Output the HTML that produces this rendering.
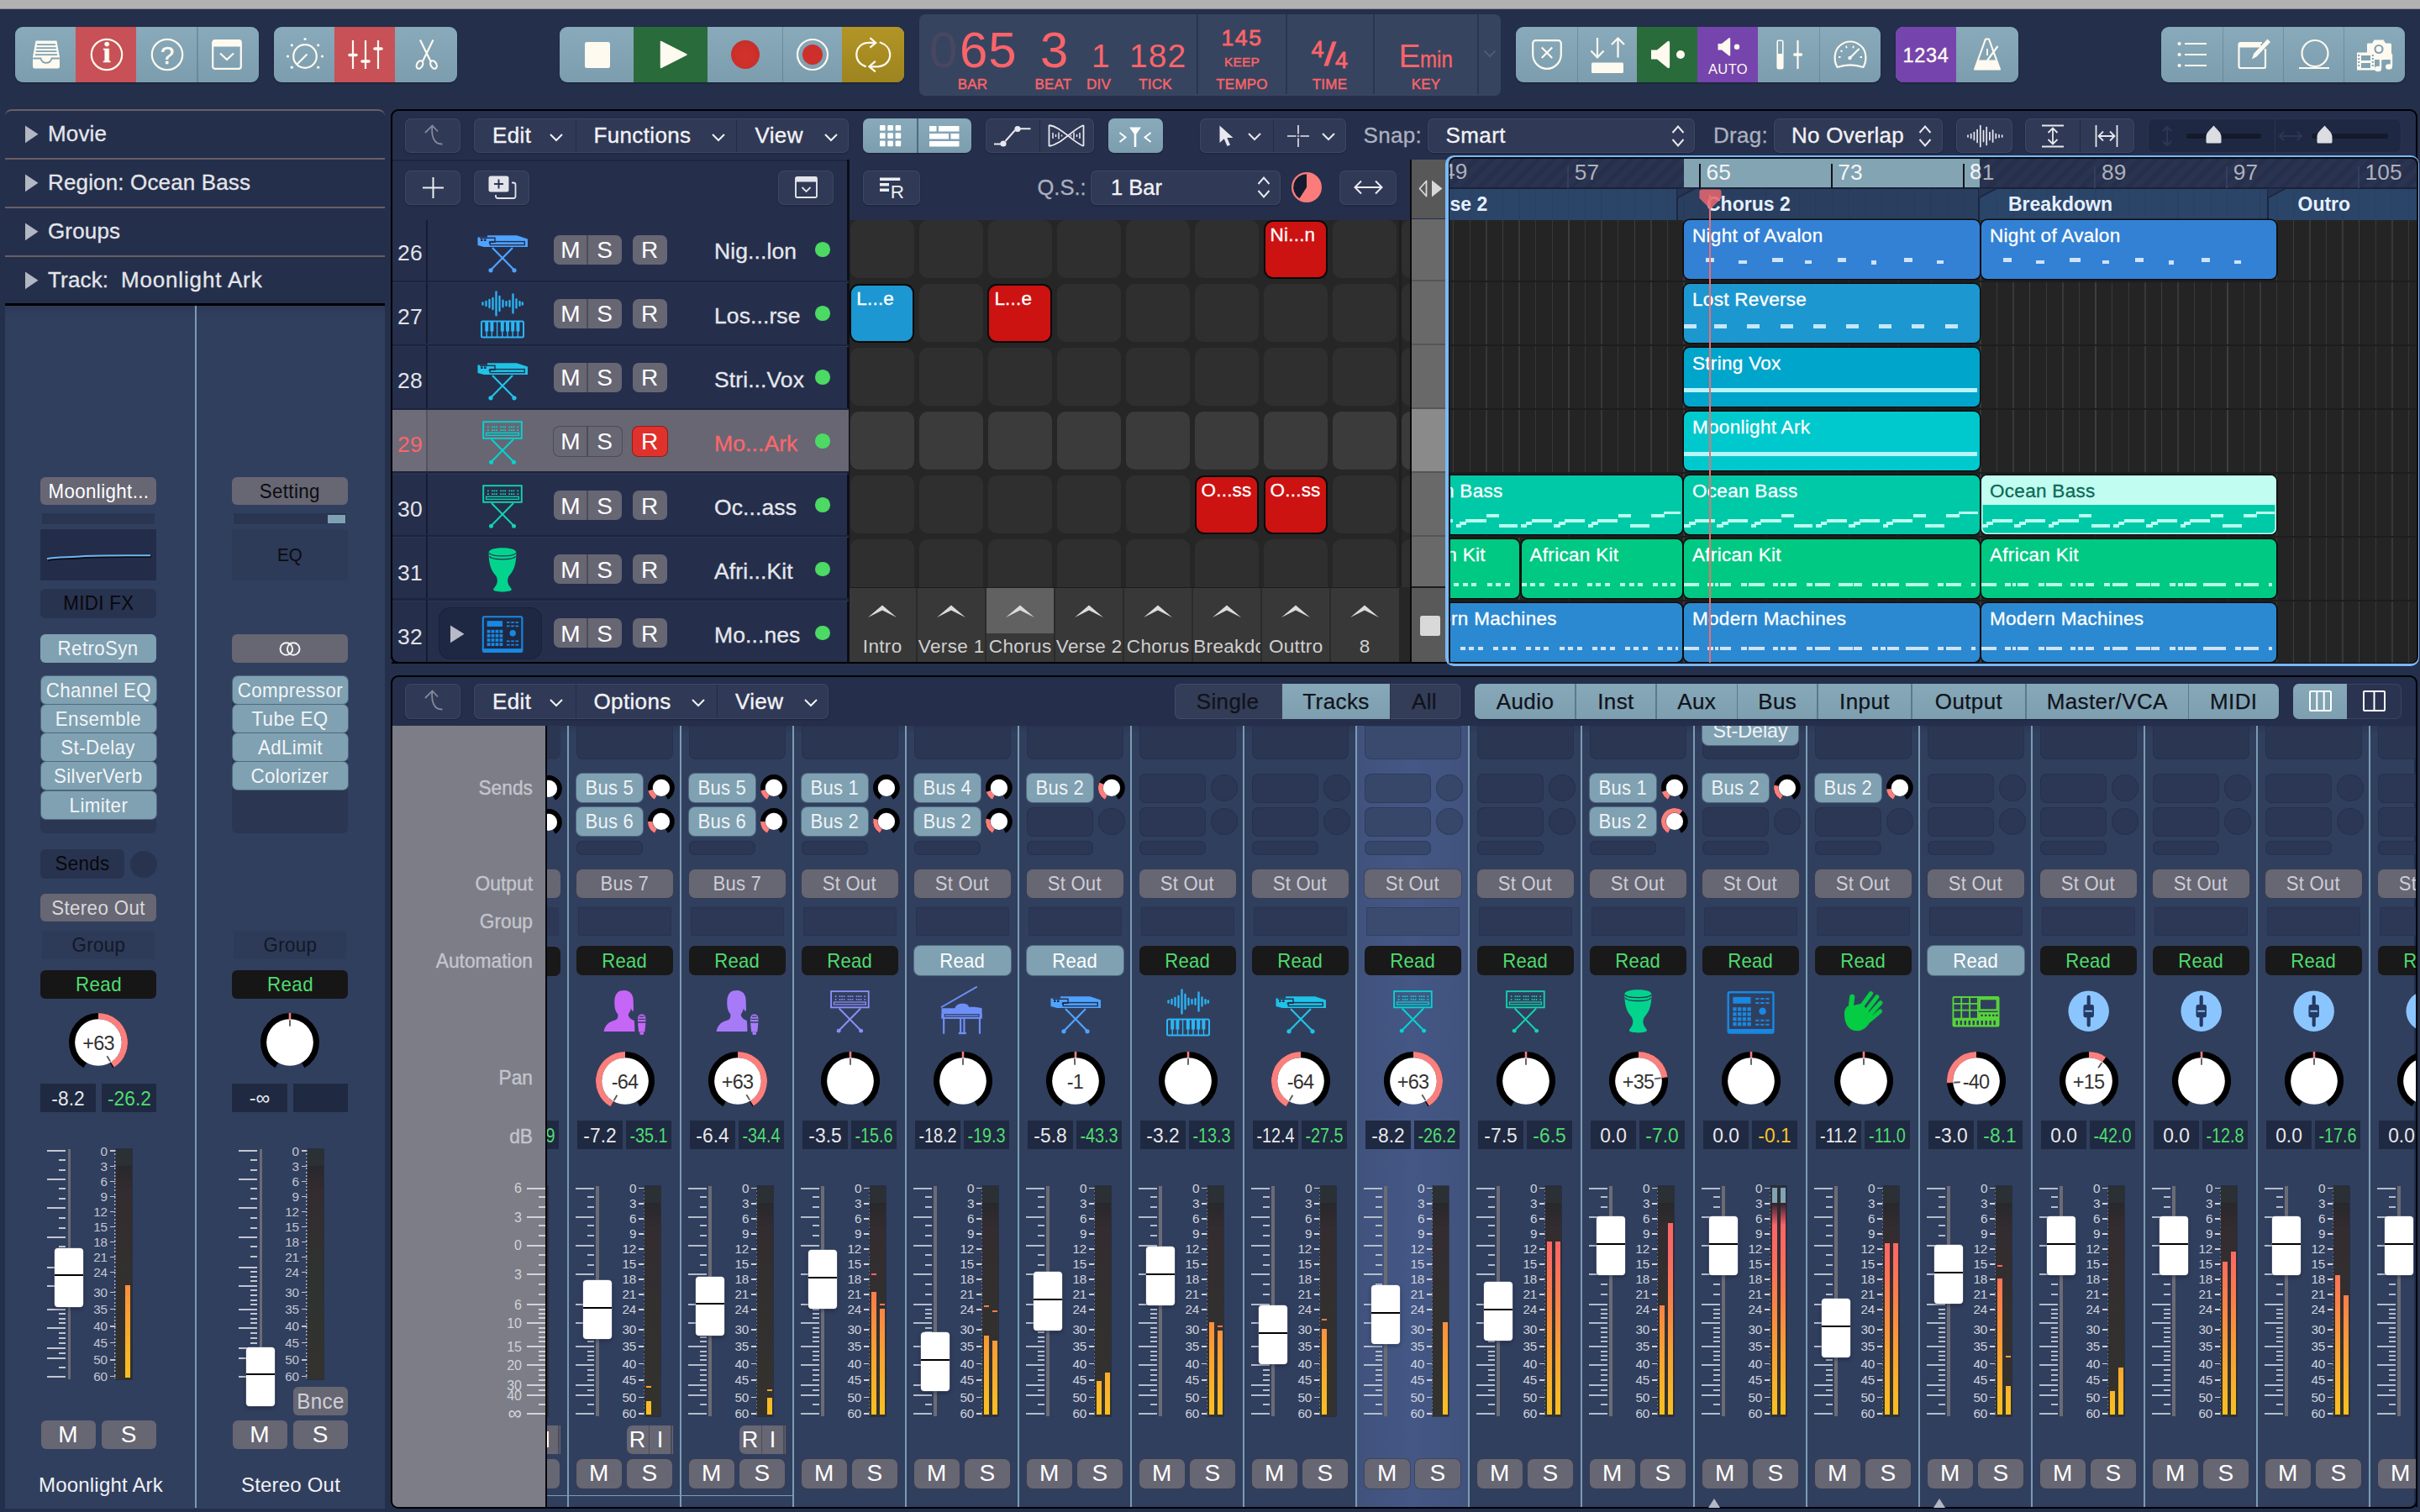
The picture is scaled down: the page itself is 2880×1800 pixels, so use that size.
<!DOCTYPE html>
<html><head><meta charset="utf-8"><title>Logic Pro</title>
<style>
html,body{margin:0;padding:0;}
body{width:2880px;height:1800px;overflow:hidden;background:#242f4b;font-family:"Liberation Sans", sans-serif;position:relative;}
div,svg{position:absolute;box-sizing:border-box;}
svg{overflow:visible;}
.c{overflow:hidden;}
</style></head><body>
<div style="left:0px;top:0px;width:2880px;height:10px;background:#b2b2b2;"></div>
<div style="left:0px;top:10px;width:2880px;height:1px;background:#8a8c95;"></div>
<div style="left:18px;top:32px;width:290px;height:66px;border-radius:9px;overflow:hidden;background:linear-gradient(#88aaba,#7c9dae);box-shadow:0 1px 2px rgba(0,0,0,.35);"><div style="left:72px;top:0;width:72px;height:66px;background:#c75157"></div></div>
<div style="left:234px;top:32px;width:1.5px;height:66px;background:rgba(60,90,110,.3);"></div>
<svg style="left:35.5px;top:46px;" width="39" height="38" viewBox="0 0 39 38"><path d="M6.5 2.5 H31.5 L35 22 V33 a2.5 2.5 0 0 1 -2.5 2.5 H5.5 A2.5 2.5 0 0 1 3 33 V22 Z" fill="#fffaf0"/><path d="M8 7.2H30M7.3 11.2H30.7M6.6 15.2H31.4M5.9 19.2H32.1" stroke="#80a2b3" stroke-width="1.7"/><path d="M3.2 23.5 H12.5 q1.2 5.3 6.5 5.3 q5.3 0 6.5 -5.3 H34.8" stroke="#80a2b3" stroke-width="1.8" fill="none"/></svg>
<svg style="left:107px;top:45px;" width="40" height="40" viewBox="0 0 40 40"><circle cx="20" cy="20" r="18.2" fill="none" stroke="#fffaf0" stroke-width="2.2"/></svg>
<div style="left:107.2px;top:42.2px;width:40px;height:43px;line-height:43px;font-size:33px;color:#fffaf0;text-align:center;white-space:nowrap;font-weight:700;font-family:'Liberation Serif',serif;-webkit-text-stroke:.6px #fffaf0;">i</div>
<svg style="left:179px;top:45px;" width="40" height="40" viewBox="0 0 40 40"><circle cx="20" cy="20" r="18.2" fill="none" stroke="#fffaf0" stroke-width="2.2"/></svg>
<div style="left:179.2px;top:46.65px;width:40px;height:38px;line-height:38px;font-size:29px;color:#fffaf0;text-align:center;white-space:nowrap;-webkit-text-stroke:.5px #fffaf0;">?</div>
<svg style="left:252px;top:47px;" width="36" height="36" viewBox="0 0 36 36"><rect x="1.2" y="1.2" width="33.6" height="33.6" rx="2.5" fill="none" stroke="#fffaf0" stroke-width="2.2"/><rect x="1.2" y="1.2" width="33.6" height="7.3" fill="#fffaf0"/><path d="M10 16.5l8 7.5 8-7.5" fill="none" stroke="#fffaf0" stroke-width="2.2"/></svg>
<div style="left:326px;top:32px;width:218px;height:66px;border-radius:9px;overflow:hidden;background:linear-gradient(#88aaba,#7c9dae);box-shadow:0 1px 2px rgba(0,0,0,.35);"><div style="left:72px;top:0;width:72px;height:66px;background:#c75157"></div></div>
<svg style="left:338.5px;top:41px;" width="48" height="48" viewBox="0 0 48 48"><circle cx="24" cy="26" r="13.8" fill="none" stroke="#fffaf0" stroke-width="2.2"/><path d="M14.2 35.8L26.5 23.5" stroke="#fffaf0" stroke-width="2.2"/><circle cx="8.3" cy="39.18" r="1.6" fill="#fffaf0"/><circle cx="3.5" cy="26" r="1.6" fill="#fffaf0"/><circle cx="8.3" cy="12.82" r="1.6" fill="#fffaf0"/><circle cx="24" cy="5.5" r="1.6" fill="#fffaf0"/><circle cx="39.7" cy="12.82" r="1.6" fill="#fffaf0"/><circle cx="44.5" cy="26" r="1.6" fill="#fffaf0"/><circle cx="39.7" cy="39.18" r="1.6" fill="#fffaf0"/></svg>
<svg style="left:412px;top:46px;" width="46" height="38" viewBox="0 0 46 38"><path d="M8 2V36M23 2V36M38 2V36" stroke="#fffaf0" stroke-width="2.2"/><path d="M4 19.5H12M19 27H27M34 12H42" stroke="#fffaf0" stroke-width="3.6" stroke-linecap="round"/></svg>
<svg style="left:492px;top:45px;" width="32" height="40" viewBox="0 0 32 40"><path d="M8 2.5L20.5 28M23.5 2.5L11 28" stroke="#fffaf0" stroke-width="2.2" fill="none"/><ellipse cx="7.5" cy="32" rx="3.4" ry="5" transform="rotate(28 7.5 32)" fill="none" stroke="#fffaf0" stroke-width="2.2"/><ellipse cx="24" cy="32" rx="3.4" ry="5" transform="rotate(-28 24 32)" fill="none" stroke="#fffaf0" stroke-width="2.2"/></svg>
<div style="left:666px;top:32px;width:410px;height:66px;border-radius:9px;overflow:hidden;background:linear-gradient(#88aaba,#7c9dae);box-shadow:0 1px 2px rgba(0,0,0,.35);"><div style="left:88px;top:0;width:88px;height:66px;background:#296b3a"></div><div style="left:336px;top:0;width:74px;height:66px;background:linear-gradient(#b39526,#9d841f)"></div></div>
<div style="left:930.5px;top:32px;width:1.5px;height:66px;background:rgba(60,90,110,.35);"></div>
<div style="left:695.5px;top:50px;width:30.5px;height:30.5px;background:#fffaf0;border-radius:2.5px;"></div>
<svg style="left:785px;top:48px;" width="34" height="34" viewBox="0 0 34 34"><path d="M1.5 1.5L32 17L1.5 32.5Z" fill="#fffaf0" stroke="#fffaf0" stroke-width="1.5" stroke-linejoin="round"/></svg>
<div style="left:869.5px;top:48px;width:34px;height:34px;background:radial-gradient(circle at 50% 55%,#d3322c 0,#cb2f29 60%,#b52a25 100%);border-radius:50%;"></div>
<svg style="left:947px;top:45px;" width="40" height="40" viewBox="0 0 40 40"><circle cx="20" cy="20" r="18" fill="none" stroke="#fffaf0" stroke-width="2.2"/><circle cx="20" cy="20" r="12" fill="#cd2f2a"/></svg>
<svg style="left:1016px;top:42px;" width="46" height="46" viewBox="0 0 46 46"><path d="M26 8.9H18C9 8.9 3.3 15 3.3 23.1C3.3 29.5 7.5 35 14.7 37.4" fill="none" stroke="#fffaf0" stroke-width="2.2"/><path d="M18.5 37.3H28C37 37.3 43.2 31 43.2 23.1C43.2 16.5 38.5 10.8 30.8 8.3" fill="none" stroke="#fffaf0" stroke-width="2.2"/><path d="M19.4 3.2L26.2 8.9L19.4 14.7" fill="none" stroke="#fffaf0" stroke-width="2.2"/><path d="M25.8 30.8L18.4 37.2L25.8 43.4" fill="none" stroke="#fffaf0" stroke-width="2.2"/></svg>
<div style="left:1094px;top:16.5px;width:692px;height:97px;background:#37445f;border-radius:7px;"></div>
<div style="left:1424px;top:17px;width:2px;height:95px;background:#2a3550;"></div>
<div style="left:1530px;top:17px;width:2px;height:95px;background:#2a3550;"></div>
<div style="left:1634px;top:17px;width:2px;height:95px;background:#2a3550;"></div>
<div style="left:1758px;top:17px;width:2px;height:95px;background:#2a3550;"></div>
<div style="left:1106px;top:20.72px;width:600px;height:78px;line-height:78px;font-size:60px;color:#fa6469;text-align:left;white-space:nowrap;"><span style="color:#494760;margin-right:2.6px">0</span><span style="letter-spacing:1px">65</span></div>
<div style="left:1238px;top:20.72px;width:600px;height:78px;line-height:78px;font-size:60px;color:#fa6469;text-align:left;white-space:nowrap;">3</div>
<div style="left:1299px;top:41.47px;width:600px;height:51px;line-height:51px;font-size:39px;color:#fa6469;text-align:left;white-space:nowrap;">1</div>
<div style="left:1344px;top:41.47px;width:600px;height:51px;line-height:51px;font-size:39px;color:#fa6469;text-align:left;white-space:nowrap;letter-spacing:1px;">182</div>
<div style="left:857.5px;top:90.2px;width:600px;height:22px;line-height:22px;font-size:17px;color:#fa6469;text-align:center;white-space:nowrap;letter-spacing:0.2px;-webkit-text-stroke:.45px #fa6469;">BAR</div>
<div style="left:953.5px;top:90.2px;width:600px;height:22px;line-height:22px;font-size:17px;color:#fa6469;text-align:center;white-space:nowrap;letter-spacing:0.2px;-webkit-text-stroke:.45px #fa6469;">BEAT</div>
<div style="left:1007.5px;top:90.2px;width:600px;height:22px;line-height:22px;font-size:17px;color:#fa6469;text-align:center;white-space:nowrap;letter-spacing:0.2px;-webkit-text-stroke:.45px #fa6469;">DIV</div>
<div style="left:1075px;top:90.2px;width:600px;height:22px;line-height:22px;font-size:17px;color:#fa6469;text-align:center;white-space:nowrap;letter-spacing:0.2px;-webkit-text-stroke:.45px #fa6469;">TICK</div>
<div style="left:1178px;top:27.82px;width:600px;height:34px;line-height:34px;font-size:26.5px;color:#fa6469;text-align:center;white-space:nowrap;letter-spacing:1.6px;-webkit-text-stroke:.8px #fa6469;">145</div>
<div style="left:1178px;top:64.19px;width:600px;height:20px;line-height:20px;font-size:15.5px;color:#fa6469;text-align:center;white-space:nowrap;letter-spacing:0.2px;-webkit-text-stroke:.45px #fa6469;">KEEP</div>
<div style="left:1178px;top:90.2px;width:600px;height:22px;line-height:22px;font-size:17px;color:#fa6469;text-align:center;white-space:nowrap;letter-spacing:0.2px;-webkit-text-stroke:.45px #fa6469;">TEMPO</div>
<div style="left:1560.5px;top:39.99px;width:80px;height:50px;line-height:50px;font-size:39px;color:#fa6469;white-space:nowrap;"><span style="font-size:27px;position:relative;top:-10.3px;-webkit-text-stroke:.8px #fa6469">4</span><span style="display:inline-block;transform:scaleX(1.25);transform-origin:0 50%;margin-left:.8px;-webkit-text-stroke:.9px #fa6469">/</span><span style="font-size:27px;position:relative;top:2.7px;margin-left:1.9px;-webkit-text-stroke:.8px #fa6469">4</span></div>
<div style="left:1282.5px;top:90.2px;width:600px;height:22px;line-height:22px;font-size:17px;color:#fa6469;text-align:center;white-space:nowrap;letter-spacing:0.2px;-webkit-text-stroke:.45px #fa6469;">TIME</div>
<div style="left:1664.5px;top:41.47px;width:600px;height:51px;line-height:51px;font-size:39px;color:#fa6469;text-align:left;white-space:nowrap;">E<span style="display:inline-block;font-size:28px;transform:scaleX(.86);transform-origin:0 50%;margin-left:-.5px;-webkit-text-stroke:.3px #fa6469">min</span></div>
<div style="left:1397px;top:90.2px;width:600px;height:22px;line-height:22px;font-size:17px;color:#fa6469;text-align:center;white-space:nowrap;letter-spacing:0.2px;-webkit-text-stroke:.45px #fa6469;">KEY</div>
<svg style="left:1765px;top:59px;" width="16" height="10" viewBox="0 0 16 10"><path d="M1.5 1.5L8 8L14.5 1.5" fill="none" stroke="#4d5a74" stroke-width="2"/></svg>
<div style="left:1804px;top:32px;width:434px;height:66px;border-radius:9px;overflow:hidden;background:linear-gradient(#88aaba,#7c9dae);box-shadow:0 1px 2px rgba(0,0,0,.35);"><div style="left:144px;top:0;width:72px;height:66px;background:#296b3a"></div><div style="left:216px;top:0;width:72px;height:66px;background:#7644ad"></div></div>
<div style="left:1876.5px;top:32px;width:1.5px;height:66px;background:rgba(60,90,110,.3);"></div>
<div style="left:2164.5px;top:32px;width:1.5px;height:66px;background:rgba(60,90,110,.3);"></div>
<svg style="left:1822px;top:46px;" width="38" height="38" viewBox="0 0 38 38"><path d="M5.5 2.2H32.5a3.3 3.3 0 0 1 3.3 3.3V18.5C35.8 28.5 28 35.8 19 35.8C10 35.8 2.2 28.5 2.2 18.5V5.5A3.3 3.3 0 0 1 5.5 2.2Z" fill="none" stroke="#fffaf0" stroke-width="2.2"/><path d="M12.8 10.5L25.2 23M25.2 10.5L12.8 23" stroke="#fffaf0" stroke-width="2.2"/></svg>
<svg style="left:1891px;top:43px;" width="44" height="46" viewBox="0 0 44 46"><path d="M10 2V25M2.5 17.5L10 25.5L17.5 17.5" fill="none" stroke="#fffaf0" stroke-width="2.2"/><path d="M34.5 25.5V2.5M27 10L34.5 2.5L42 10" fill="none" stroke="#fffaf0" stroke-width="2.2"/><rect x="3" y="31.5" width="38" height="12.5" rx="1.5" fill="#fffaf0"/></svg>
<svg style="left:1963px;top:47px;" width="44" height="38" viewBox="0 0 44 38"><path d="M2 12.5H9L21.5 2.2a1.6 1.6 0 0 1 2.6 1.2V32.6a1.6 1.6 0 0 1-2.6 1.2L9 23.5H2Z" fill="#fffaf0"/><circle cx="37" cy="18" r="5" fill="#fffaf0"/></svg>
<svg style="left:2043px;top:44px;" width="30" height="24" viewBox="0 0 30 24"><path d="M1.5 8H6L14.5 1.3a1 1 0 0 1 1.7 .8V21.4a1 1 0 0 1-1.7 .8L6 15.5H1.5Z" fill="#fffaf0"/><circle cx="24" cy="11.8" r="3.2" fill="#fffaf0"/></svg>
<div style="left:1756.5px;top:71.7px;width:600px;height:21px;line-height:21px;font-size:16.5px;color:#fffaf0;text-align:center;white-space:nowrap;letter-spacing:0.4px;">AUTO</div>
<svg style="left:2110px;top:46px;" width="40" height="38" viewBox="0 0 40 38"><rect x="5.2" y="2.2" width="6.6" height="33.6" rx="1.5" fill="none" stroke="#fffaf0" stroke-width="1.6"/><rect x="5" y="18" width="7" height="18" rx="1.2" fill="#fffaf0"/><path d="M29.5 2V36" stroke="#fffaf0" stroke-width="2.2"/><path d="M25.8 19H33.4" stroke="#fffaf0" stroke-width="3.6" stroke-linecap="round"/></svg>
<svg style="left:2181px;top:47px;" width="42" height="36" viewBox="0 0 42 36"><path d="M5.5 33C1 25 1.5 13 9 7C16 1 26 1 33 7C40.5 13 41 25 36.5 33C26 29.5 16 29.5 5.5 33Z" fill="none" stroke="#fffaf0" stroke-width="2.2" stroke-linejoin="round"/><path d="M20.5 22L31 11.5" stroke="#fffaf0" stroke-width="2.2" stroke-linecap="round"/><circle cx="20.5" cy="22" r="2.2" fill="#fffaf0"/><path d="M7 21h2.5M9.5 13l2 1.6M16 7.8l.8 2.4M25 7.8l-.8 2.4M35 21h-2.5" stroke="#fffaf0" stroke-width="1.8"/></svg>
<div style="left:2256px;top:32px;width:146px;height:66px;border-radius:9px;overflow:hidden;background:linear-gradient(#88aaba,#7c9dae);box-shadow:0 1px 2px rgba(0,0,0,.35);"><div style="left:0px;top:0;width:72px;height:66px;background:#7644ad"></div></div>
<div style="left:2257px;top:50.78px;width:70px;height:31px;line-height:31px;font-size:23.5px;color:#fffaf0;text-align:center;white-space:nowrap;letter-spacing:0.7px;-webkit-text-stroke:.4px #fffaf0;">1234</div>
<svg style="left:2348px;top:44px;" width="34" height="42" viewBox="0 0 34 42"><path d="M15 2.5h4L32 38.5H2Z" fill="none" stroke="#fffaf0" stroke-width="2.2" stroke-linejoin="round"/><path d="M6 27.5H28L31.5 38H2.5Z" fill="#fffaf0"/><path d="M17 22V14" stroke="#fffaf0" stroke-width="2"/><path d="M17 28L29.5 11" stroke="#fffaf0" stroke-width="2.2"/></svg>
<div style="left:2572px;top:32px;width:290px;height:66px;border-radius:9px;overflow:hidden;background:linear-gradient(#88aaba,#7c9dae);box-shadow:0 1px 2px rgba(0,0,0,.35);"></div>
<div style="left:2644.5px;top:32px;width:1.5px;height:66px;background:rgba(60,90,110,.3);"></div>
<div style="left:2716.5px;top:32px;width:1.5px;height:66px;background:rgba(60,90,110,.3);"></div>
<div style="left:2788.5px;top:32px;width:1.5px;height:66px;background:rgba(60,90,110,.3);"></div>
<svg style="left:2591px;top:48px;" width="36" height="34" viewBox="0 0 36 34"><path d="M9 4H35M9 17H35M9 30H35" stroke="#fffaf0" stroke-width="2.2"/><circle cx="2.6" cy="4" r="2.1" fill="#fffaf0"/><circle cx="2.6" cy="17" r="2.1" fill="#fffaf0"/><circle cx="2.6" cy="30" r="2.1" fill="#fffaf0"/></svg>
<svg style="left:2662px;top:43px;" width="42" height="42" viewBox="0 0 42 42"><path d="M30 8H4.5a2 2 0 0 0-2 2V36a2 2 0 0 0 2 2H32a2 2 0 0 0 2-2V15" fill="none" stroke="#fffaf0" stroke-width="2.2"/><rect x="2.5" y="8" width="26" height="5.5" fill="#fffaf0"/><path d="M18 27.5L20 21L36.5 3.5L40 7L23.5 24.5Z" fill="#fffaf0"/></svg>
<svg style="left:2734px;top:46px;" width="40" height="40" viewBox="0 0 40 40"><circle cx="21" cy="17.5" r="15.5" fill="none" stroke="#fffaf0" stroke-width="2.2"/><path d="M2 35H38" stroke="#fffaf0" stroke-width="2.2"/></svg>
<svg style="left:2803px;top:43px;" width="46" height="44" viewBox="0 0 46 44"><path d="M15 8.5H20L22.5 4.5H33.5L36 8.5H41.5a1.5 1.5 0 0 1 1.5 1.5V28H14V10a1.5 1.5 0 0 1 1-1.5Z" fill="#fffaf0"/><circle cx="28" cy="15.5" r="5.6" fill="#80a2b3"/><circle cx="28" cy="15.5" r="3.4" fill="#fffaf0"/><rect x="2" y="19.5" width="21" height="21" fill="#fffaf0"/><rect x="7" y="23" width="11" height="6" fill="#80a2b3"/><rect x="7" y="32" width="11" height="6" fill="#80a2b3"/><path d="M3.2 23h2M3.2 27h2M3.2 31h2M3.2 35h2M19.8 23h2M19.8 27h2M19.8 31h2M19.8 35h2" stroke="#80a2b3" stroke-width="2"/><path d="M30 25.5V38.5M30 25.5L43 23V36" fill="none" stroke="#fffaf0" stroke-width="2.4"/><path d="M29 24L44 21V26L29 29Z" fill="#fffaf0"/><ellipse cx="27" cy="39" rx="4" ry="3.2" fill="#fffaf0"/><ellipse cx="40" cy="36.5" rx="4" ry="3.2" fill="#fffaf0"/></svg>
<div style="left:6px;top:130px;width:452px;height:40px;border-top:2px solid #6a5f66;border-radius:8px 8px 0 0;"></div>
<div style="left:6px;top:188px;width:452px;height:2px;background:#6a5f66;"></div>
<div style="left:6px;top:246px;width:452px;height:2px;background:#6a5f66;"></div>
<div style="left:6px;top:304px;width:452px;height:2px;background:#6a5f66;"></div>
<svg style="left:30px;top:148.5px;" width="16" height="22" viewBox="0 0 16 22"><path d="M0 0.5L15.5 10.8L0 21.3Z" fill="#b3b6c3"/></svg>
<div style="left:57px;top:142.31px;width:600px;height:34px;line-height:34px;font-size:26px;color:#e4e5ea;text-align:left;white-space:nowrap;letter-spacing:0.15px;-webkit-text-stroke:.3px #e4e5ea;">Movie</div>
<svg style="left:30px;top:206.5px;" width="16" height="22" viewBox="0 0 16 22"><path d="M0 0.5L15.5 10.8L0 21.3Z" fill="#b3b6c3"/></svg>
<div style="left:57px;top:200.31px;width:600px;height:34px;line-height:34px;font-size:26px;color:#e4e5ea;text-align:left;white-space:nowrap;letter-spacing:0.15px;-webkit-text-stroke:.3px #e4e5ea;">Region: Ocean Bass</div>
<svg style="left:30px;top:264.5px;" width="16" height="22" viewBox="0 0 16 22"><path d="M0 0.5L15.5 10.8L0 21.3Z" fill="#b3b6c3"/></svg>
<div style="left:57px;top:258.31px;width:600px;height:34px;line-height:34px;font-size:26px;color:#e4e5ea;text-align:left;white-space:nowrap;letter-spacing:0.15px;-webkit-text-stroke:.3px #e4e5ea;">Groups</div>
<svg style="left:30px;top:322.5px;" width="16" height="22" viewBox="0 0 16 22"><path d="M0 0.5L15.5 10.8L0 21.3Z" fill="#b3b6c3"/></svg>
<div style="left:57px;top:316.31px;width:600px;height:34px;line-height:34px;font-size:26px;color:#e4e5ea;text-align:left;white-space:nowrap;letter-spacing:0.15px;-webkit-text-stroke:.3px #e4e5ea;">Track:&nbsp; <span style="letter-spacing:.85px">Moonlight Ark</span></div>
<div style="left:6px;top:361px;width:452px;height:2.5px;background:#000;"></div>
<div style="left:6px;top:363.5px;width:452px;height:1432px;background:linear-gradient(#2c3957 0,#313f5e 14px);"></div>
<div style="left:232.3px;top:364px;width:1.6px;height:1431px;background:#7a9cb2;"></div>
<div style="left:48px;top:567.5px;width:138px;height:33.5px;background:#676673;border-radius:6px;line-height:33.5px;font-size:24px;color:#fff;text-align:center;white-space:nowrap;overflow:hidden;letter-spacing:0.4px;"><span style="display:inline-block;transform:scaleX(0.93)">Moonlight...</span></div>
<div style="left:50px;top:611px;width:134px;height:13px;background:#2a3551;"></div>
<div style="left:48px;top:630px;width:138px;height:61px;background:#232d49;"></div>
<svg style="left:48px;top:630px;" width="138" height="61" viewBox="0 0 138 61"><path d="M8 35.2C20 32.5 36 34 50 32.3C62 31.2 72 31.4 131 31.2" fill="none" stroke="#0a0c12" stroke-width="2.2" transform="translate(0.8,1.6)"/><path d="M8 35.2C20 32.5 36 34 50 32.3C62 31.2 72 31.4 131 31.2" fill="none" stroke="#6fb6f5" stroke-width="2"/></svg>
<div style="left:48px;top:701px;width:138px;height:34.5px;background:#28334f;border-radius:6px;line-height:34.5px;font-size:24px;color:#08080c;text-align:center;white-space:nowrap;overflow:hidden;letter-spacing:0.4px;"><span style="display:inline-block;transform:scaleX(0.93)">MIDI FX</span></div>
<div style="left:48px;top:755px;width:138px;height:34px;background:#7fa1b2;border-radius:6px;line-height:34px;font-size:24px;color:#f3f4f6;text-align:center;white-space:nowrap;overflow:hidden;letter-spacing:0.4px;"><span style="display:inline-block;transform:scaleX(0.93)">RetroSyn</span></div>
<div style="left:48px;top:805px;width:138px;height:186.5px;background:#2a3652;border-radius:6px;"></div>
<div style="left:48.5px;top:805px;width:137px;height:33px;background:#7fa1b2;border-radius:6px;line-height:33px;font-size:24px;color:#f3f4f6;text-align:center;white-space:nowrap;overflow:hidden;letter-spacing:0.4px;box-shadow:0 0 0 1px #4f6a80;"><span style="display:inline-block;transform:scaleX(0.93)">Channel EQ</span></div>
<div style="left:48.5px;top:839.15px;width:137px;height:33px;background:#7fa1b2;border-radius:6px;line-height:33px;font-size:24px;color:#f3f4f6;text-align:center;white-space:nowrap;overflow:hidden;letter-spacing:0.4px;box-shadow:0 0 0 1px #4f6a80;"><span style="display:inline-block;transform:scaleX(0.93)">Ensemble</span></div>
<div style="left:48.5px;top:873.3px;width:137px;height:33px;background:#7fa1b2;border-radius:6px;line-height:33px;font-size:24px;color:#f3f4f6;text-align:center;white-space:nowrap;overflow:hidden;letter-spacing:0.4px;box-shadow:0 0 0 1px #4f6a80;"><span style="display:inline-block;transform:scaleX(0.93)">St-Delay</span></div>
<div style="left:48.5px;top:907.45px;width:137px;height:33px;background:#7fa1b2;border-radius:6px;line-height:33px;font-size:24px;color:#f3f4f6;text-align:center;white-space:nowrap;overflow:hidden;letter-spacing:0.4px;box-shadow:0 0 0 1px #4f6a80;"><span style="display:inline-block;transform:scaleX(0.93)">SilverVerb</span></div>
<div style="left:48.5px;top:941.6px;width:137px;height:33px;background:#7fa1b2;border-radius:6px;line-height:33px;font-size:24px;color:#f3f4f6;text-align:center;white-space:nowrap;overflow:hidden;letter-spacing:0.4px;box-shadow:0 0 0 1px #4f6a80;"><span style="display:inline-block;transform:scaleX(0.93)">Limiter</span></div>
<div style="left:48px;top:1011px;width:100px;height:34.5px;background:#28334f;border-radius:6px;line-height:34.5px;font-size:24px;color:#08080c;text-align:center;white-space:nowrap;overflow:hidden;letter-spacing:0.4px;"><span style="display:inline-block;transform:scaleX(0.93)">Sends</span></div>
<div style="left:154.5px;top:1012.5px;width:32px;height:32px;background:#28334f;border-radius:50%;"></div>
<div style="left:48px;top:1063.5px;width:138px;height:33.5px;background:#676673;border-radius:6px;line-height:33.5px;font-size:24px;color:#d8d8de;text-align:center;white-space:nowrap;overflow:hidden;letter-spacing:0.4px;"><span style="display:inline-block;transform:scaleX(0.93)">Stereo Out</span></div>
<div style="left:50px;top:1108px;width:134px;height:33.5px;background:#2d3a58;line-height:33.5px;font-size:24px;color:#141824;text-align:center;white-space:nowrap;overflow:hidden;letter-spacing:0.4px;"><span style="display:inline-block;transform:scaleX(0.93)">Group</span></div>
<div style="left:48px;top:1154.5px;width:138px;height:34.5px;background:#161616;border-radius:6px;line-height:34.5px;font-size:24px;color:#4fdc70;text-align:center;white-space:nowrap;overflow:hidden;letter-spacing:0.4px;"><span style="display:inline-block;transform:scaleX(0.93)">Read</span></div>
<svg style="left:80px;top:1203.5px;" width="74" height="74" viewBox="0 0 74 74"><path d="M21.3 64.19A31.4 31.4 0 1 1 52.7 64.19" fill="none" stroke="#000" stroke-width="7.2"/><path d="M37 5.6A31.4 31.4 0 0 1 53.8 63.53" fill="none" stroke="#fb7f7d" stroke-width="7.2"/><circle cx="37" cy="37" r="27.8" fill="#fff"/><path d="M51.34 59.64L47.33 53.31" stroke="#555" stroke-width="1.8"/></svg>
<div style="left:77px;top:1226.78px;width:80px;height:31px;line-height:31px;font-size:23.5px;color:#333;text-align:center;white-space:nowrap;letter-spacing:-0.8px;">+63</div>
<div style="left:48px;top:1290px;width:65.5px;height:33.5px;background:#1f2941;"></div>
<div style="left:120.5px;top:1290px;width:65.5px;height:33.5px;background:#1f2941;"></div>
<div style="left:46px;top:1291.79px;width:70px;height:32px;line-height:32px;font-size:24.5px;color:#e6e6ea;text-align:center;white-space:nowrap;transform:scaleX(0.93);transform-origin:50% 50%;">-8.2</div>
<div style="left:118.5px;top:1291.79px;width:70px;height:32px;line-height:32px;font-size:24.5px;color:#4fdc70;text-align:center;white-space:nowrap;transform:scaleX(0.93);transform-origin:50% 50%;">-26.2</div>
<div style="left:81px;top:1367.5px;width:3.2px;height:274px;background:#6b6b74;"></div>
<div style="left:56px;top:1367.5px;width:22px;height:274px;"><div style="left:0;top:1.5px;width:22px;height:2px;background:#c3c6d2"></div><div style="left:0;top:35.5px;width:22px;height:2px;background:#c3c6d2"></div><div style="left:0;top:69.5px;width:22px;height:2px;background:#c3c6d2"></div><div style="left:0;top:104.5px;width:22px;height:2px;background:#c3c6d2"></div><div style="left:0;top:140.5px;width:22px;height:2px;background:#c3c6d2"></div><div style="left:0;top:162.5px;width:22px;height:2px;background:#c3c6d2"></div><div style="left:0;top:190.5px;width:22px;height:2px;background:#c3c6d2"></div><div style="left:0;top:212.5px;width:22px;height:2px;background:#c3c6d2"></div><div style="left:0;top:236.5px;width:22px;height:2px;background:#c3c6d2"></div><div style="left:0;top:248.5px;width:22px;height:2px;background:#c3c6d2"></div><div style="left:0;top:270.5px;width:22px;height:2px;background:#c3c6d2"></div><div style="left:14px;top:12.5px;width:8px;height:2px;background:#c3c6d2"></div><div style="left:14px;top:24.5px;width:8px;height:2px;background:#c3c6d2"></div><div style="left:14px;top:46.5px;width:8px;height:2px;background:#c3c6d2"></div><div style="left:14px;top:58.5px;width:8px;height:2px;background:#c3c6d2"></div><div style="left:14px;top:81.5px;width:8px;height:2px;background:#c3c6d2"></div><div style="left:14px;top:93.5px;width:8px;height:2px;background:#c3c6d2"></div><div style="left:14px;top:115.5px;width:8px;height:2px;background:#c3c6d2"></div><div style="left:14px;top:127.5px;width:8px;height:2px;background:#c3c6d2"></div><div style="left:14px;top:145.5px;width:8px;height:2px;background:#c3c6d2"></div><div style="left:14px;top:151.5px;width:8px;height:2px;background:#c3c6d2"></div><div style="left:14px;top:156.5px;width:8px;height:2px;background:#c3c6d2"></div><div style="left:14px;top:167.5px;width:8px;height:2px;background:#c3c6d2"></div><div style="left:14px;top:173.5px;width:8px;height:2px;background:#c3c6d2"></div><div style="left:14px;top:179.5px;width:8px;height:2px;background:#c3c6d2"></div><div style="left:14px;top:184.5px;width:8px;height:2px;background:#c3c6d2"></div><div style="left:14px;top:195.5px;width:8px;height:2px;background:#c3c6d2"></div><div style="left:14px;top:201.5px;width:8px;height:2px;background:#c3c6d2"></div><div style="left:14px;top:206.5px;width:8px;height:2px;background:#c3c6d2"></div><div style="left:14px;top:218.5px;width:8px;height:2px;background:#c3c6d2"></div><div style="left:14px;top:224.5px;width:8px;height:2px;background:#c3c6d2"></div><div style="left:14px;top:230.5px;width:8px;height:2px;background:#c3c6d2"></div><div style="left:14px;top:259.5px;width:8px;height:2px;background:#c3c6d2"></div><div style="left:14px;top:242.5px;width:8px;height:2px;background:#c3c6d2"></div></div>
<div style="left:78px;top:1367.5px;width:79.2px;height:274px;"><div style="right:29.3px;top:-5px;width:40px;height:16px;line-height:16px;font-size:15.3px;text-align:right;color:#c3c6d2;letter-spacing:-0.2px">0</div><div style="right:19.5px;top:1.9px;width:6.5px;height:1.6px;background:#c3c6d2"></div><div style="right:29.3px;top:13.1px;width:40px;height:16px;line-height:16px;font-size:15.3px;text-align:right;color:#c3c6d2;letter-spacing:-0.2px">3</div><div style="right:19.5px;top:20px;width:6.5px;height:1.6px;background:#c3c6d2"></div><div style="right:29.3px;top:31.1px;width:40px;height:16px;line-height:16px;font-size:15.3px;text-align:right;color:#c3c6d2;letter-spacing:-0.2px">6</div><div style="right:19.5px;top:38px;width:6.5px;height:1.6px;background:#c3c6d2"></div><div style="right:29.3px;top:49.2px;width:40px;height:16px;line-height:16px;font-size:15.3px;text-align:right;color:#c3c6d2;letter-spacing:-0.2px">9</div><div style="right:19.5px;top:56.1px;width:6.5px;height:1.6px;background:#c3c6d2"></div><div style="right:29.3px;top:67.2px;width:40px;height:16px;line-height:16px;font-size:15.3px;text-align:right;color:#c3c6d2;letter-spacing:-0.2px">12</div><div style="right:19.5px;top:74.1px;width:6.5px;height:1.6px;background:#c3c6d2"></div><div style="right:29.3px;top:85.3px;width:40px;height:16px;line-height:16px;font-size:15.3px;text-align:right;color:#c3c6d2;letter-spacing:-0.2px">15</div><div style="right:19.5px;top:92.2px;width:6.5px;height:1.6px;background:#c3c6d2"></div><div style="right:29.3px;top:103.3px;width:40px;height:16px;line-height:16px;font-size:15.3px;text-align:right;color:#c3c6d2;letter-spacing:-0.2px">18</div><div style="right:19.5px;top:110.2px;width:6.5px;height:1.6px;background:#c3c6d2"></div><div style="right:29.3px;top:121.3px;width:40px;height:16px;line-height:16px;font-size:15.3px;text-align:right;color:#c3c6d2;letter-spacing:-0.2px">21</div><div style="right:19.5px;top:128.2px;width:6.5px;height:1.6px;background:#c3c6d2"></div><div style="right:29.3px;top:139.3px;width:40px;height:16px;line-height:16px;font-size:15.3px;text-align:right;color:#c3c6d2;letter-spacing:-0.2px">24</div><div style="right:19.5px;top:146.2px;width:6.5px;height:1.6px;background:#c3c6d2"></div><div style="right:29.3px;top:163.1px;width:40px;height:16px;line-height:16px;font-size:15.3px;text-align:right;color:#c3c6d2;letter-spacing:-0.2px">30</div><div style="right:19.5px;top:170px;width:6.5px;height:1.6px;background:#c3c6d2"></div><div style="right:29.3px;top:183.3px;width:40px;height:16px;line-height:16px;font-size:15.3px;text-align:right;color:#c3c6d2;letter-spacing:-0.2px">35</div><div style="right:19.5px;top:190.2px;width:6.5px;height:1.6px;background:#c3c6d2"></div><div style="right:29.3px;top:203.6px;width:40px;height:16px;line-height:16px;font-size:15.3px;text-align:right;color:#c3c6d2;letter-spacing:-0.2px">40</div><div style="right:19.5px;top:210.5px;width:6.5px;height:1.6px;background:#c3c6d2"></div><div style="right:29.3px;top:223.3px;width:40px;height:16px;line-height:16px;font-size:15.3px;text-align:right;color:#c3c6d2;letter-spacing:-0.2px">45</div><div style="right:19.5px;top:230.2px;width:6.5px;height:1.6px;background:#c3c6d2"></div><div style="right:29.3px;top:243.6px;width:40px;height:16px;line-height:16px;font-size:15.3px;text-align:right;color:#c3c6d2;letter-spacing:-0.2px">50</div><div style="right:19.5px;top:250.5px;width:6.5px;height:1.6px;background:#c3c6d2"></div><div style="right:29.3px;top:263.1px;width:40px;height:16px;line-height:16px;font-size:15.3px;text-align:right;color:#c3c6d2;letter-spacing:-0.2px">60</div><div style="right:19.5px;top:270px;width:6.5px;height:1.6px;background:#c3c6d2"></div><div style="right:19.2px;top:1px;width:1.7px;opacity:.85;height:272px;background:repeating-linear-gradient(#c3c6d2 0,#c3c6d2 1.9px,transparent 1.9px,transparent 4.3px)"></div><div style="right:0;top:0;width:19.2px;height:274px;background:linear-gradient(#2b3034 0,#2b3034 19.5px,#28282c 20px,#332c30 50px,#32302f 160px,#33322e 100%);box-shadow:0 0 0 .5px #1a2030"></div></div>
<div style="left:149.4px;top:1529.5px;width:6.2px;height:110.5px;background:linear-gradient(to top,#f8c022 0%,#f9a033 28%,#fb8048 50%,#fc6a62 70%,#fb6068 100%);background-size:6.2px 271px;background-position:0 100%;background-repeat:no-repeat;"></div>
<div style="left:65px;top:1485.5px;width:34px;height:70px;background:#fff;border-radius:4px;box-shadow:0 2px 5px rgba(10,15,40,.45),0 0 0 .5px rgba(200,210,230,.5);"></div>
<div style="left:65px;top:1517.2px;width:34px;height:2px;background:#000;"></div>
<div style="left:48.5px;top:1691px;width:65px;height:34px;background:#676673;border-radius:6px;line-height:34px;font-size:28px;color:#fff;text-align:center;white-space:nowrap;overflow:hidden;">M</div>
<div style="left:120.5px;top:1691px;width:65px;height:34px;background:#676673;border-radius:6px;line-height:34px;font-size:28px;color:#fff;text-align:center;white-space:nowrap;overflow:hidden;">S</div>
<div style="left:10px;top:1752.29px;width:220px;height:32px;line-height:32px;font-size:24.5px;color:#f0f1f4;text-align:center;white-space:nowrap;letter-spacing:0.2px;transform:scaleX(0.98);transform-origin:50% 50%;">Moonlight Ark</div>
<div style="left:276px;top:567.5px;width:138px;height:33.5px;background:#676673;border-radius:6px;line-height:33.5px;font-size:24px;color:#0c0c10;text-align:center;white-space:nowrap;overflow:hidden;letter-spacing:0.4px;"><span style="display:inline-block;transform:scaleX(0.93)">Setting</span></div>
<div style="left:278px;top:611px;width:134px;height:13px;background:#2a3551;"></div>
<div style="left:390px;top:612.5px;width:20.5px;height:10px;background:#7fa2b3;"></div>
<div style="left:276px;top:630px;width:138px;height:61px;background:#2d3a58;line-height:61px;font-size:22px;color:#0c0c10;text-align:center;white-space:nowrap;overflow:hidden;"><span style="display:inline-block;transform:scaleX(0.93)">EQ</span></div>
<div style="left:276px;top:755px;width:138px;height:34px;background:#676673;border-radius:6px;"></div>
<svg style="left:332px;top:762.5px;" width="26" height="19" viewBox="0 0 26 19"><circle cx="8.8" cy="9.5" r="7.3" fill="none" stroke="#f3f4f6" stroke-width="2"/><circle cx="17.2" cy="9.5" r="7.3" fill="none" stroke="#f3f4f6" stroke-width="2"/></svg>
<div style="left:276px;top:805px;width:138px;height:186.5px;background:#2a3652;border-radius:6px;"></div>
<div style="left:276.5px;top:805px;width:137px;height:33px;background:#7fa1b2;border-radius:6px;line-height:33px;font-size:24px;color:#f3f4f6;text-align:center;white-space:nowrap;overflow:hidden;letter-spacing:0.4px;box-shadow:0 0 0 1px #4f6a80;"><span style="display:inline-block;transform:scaleX(0.93)">Compressor</span></div>
<div style="left:276.5px;top:839.15px;width:137px;height:33px;background:#7fa1b2;border-radius:6px;line-height:33px;font-size:24px;color:#f3f4f6;text-align:center;white-space:nowrap;overflow:hidden;letter-spacing:0.4px;box-shadow:0 0 0 1px #4f6a80;"><span style="display:inline-block;transform:scaleX(0.93)">Tube EQ</span></div>
<div style="left:276.5px;top:873.3px;width:137px;height:33px;background:#7fa1b2;border-radius:6px;line-height:33px;font-size:24px;color:#f3f4f6;text-align:center;white-space:nowrap;overflow:hidden;letter-spacing:0.4px;box-shadow:0 0 0 1px #4f6a80;"><span style="display:inline-block;transform:scaleX(0.93)">AdLimit</span></div>
<div style="left:276.5px;top:907.45px;width:137px;height:33px;background:#7fa1b2;border-radius:6px;line-height:33px;font-size:24px;color:#f3f4f6;text-align:center;white-space:nowrap;overflow:hidden;letter-spacing:0.4px;box-shadow:0 0 0 1px #4f6a80;"><span style="display:inline-block;transform:scaleX(0.93)">Colorizer</span></div>
<div style="left:278px;top:1108px;width:134px;height:33.5px;background:#2d3a58;line-height:33.5px;font-size:24px;color:#141824;text-align:center;white-space:nowrap;overflow:hidden;letter-spacing:0.4px;"><span style="display:inline-block;transform:scaleX(0.93)">Group</span></div>
<div style="left:276px;top:1154.5px;width:138px;height:34.5px;background:#161616;border-radius:6px;line-height:34.5px;font-size:24px;color:#4fdc70;text-align:center;white-space:nowrap;overflow:hidden;letter-spacing:0.4px;"><span style="display:inline-block;transform:scaleX(0.93)">Read</span></div>
<svg style="left:308px;top:1203.5px;" width="74" height="74" viewBox="0 0 74 74"><path d="M21.3 64.19A31.4 31.4 0 1 1 52.7 64.19" fill="none" stroke="#000" stroke-width="7.2"/><path d="M37 2L37 9.2" stroke="#fb7f7d" stroke-width="2.6"/><circle cx="37" cy="37" r="27.8" fill="#fff"/><path d="M37 10.2L37 17.7" stroke="#555" stroke-width="1.8"/></svg>
<div style="left:276px;top:1290px;width:65.5px;height:33.5px;background:#1f2941;"></div>
<div style="left:348.5px;top:1290px;width:65.5px;height:33.5px;background:#1f2941;"></div>
<div style="left:274px;top:1292.28px;width:70px;height:31px;line-height:31px;font-size:23.5px;color:#e6e6ea;text-align:center;white-space:nowrap;">-∞</div>
<div style="left:309px;top:1367.5px;width:3.2px;height:274px;background:#6b6b74;"></div>
<div style="left:284px;top:1367.5px;width:22px;height:274px;"><div style="left:0;top:1.5px;width:22px;height:2px;background:#c3c6d2"></div><div style="left:0;top:35.5px;width:22px;height:2px;background:#c3c6d2"></div><div style="left:0;top:69.5px;width:22px;height:2px;background:#c3c6d2"></div><div style="left:0;top:104.5px;width:22px;height:2px;background:#c3c6d2"></div><div style="left:0;top:140.5px;width:22px;height:2px;background:#c3c6d2"></div><div style="left:0;top:162.5px;width:22px;height:2px;background:#c3c6d2"></div><div style="left:0;top:190.5px;width:22px;height:2px;background:#c3c6d2"></div><div style="left:0;top:212.5px;width:22px;height:2px;background:#c3c6d2"></div><div style="left:0;top:236.5px;width:22px;height:2px;background:#c3c6d2"></div><div style="left:0;top:248.5px;width:22px;height:2px;background:#c3c6d2"></div><div style="left:0;top:270.5px;width:22px;height:2px;background:#c3c6d2"></div><div style="left:14px;top:12.5px;width:8px;height:2px;background:#c3c6d2"></div><div style="left:14px;top:24.5px;width:8px;height:2px;background:#c3c6d2"></div><div style="left:14px;top:46.5px;width:8px;height:2px;background:#c3c6d2"></div><div style="left:14px;top:58.5px;width:8px;height:2px;background:#c3c6d2"></div><div style="left:14px;top:81.5px;width:8px;height:2px;background:#c3c6d2"></div><div style="left:14px;top:93.5px;width:8px;height:2px;background:#c3c6d2"></div><div style="left:14px;top:115.5px;width:8px;height:2px;background:#c3c6d2"></div><div style="left:14px;top:127.5px;width:8px;height:2px;background:#c3c6d2"></div><div style="left:14px;top:145.5px;width:8px;height:2px;background:#c3c6d2"></div><div style="left:14px;top:151.5px;width:8px;height:2px;background:#c3c6d2"></div><div style="left:14px;top:156.5px;width:8px;height:2px;background:#c3c6d2"></div><div style="left:14px;top:167.5px;width:8px;height:2px;background:#c3c6d2"></div><div style="left:14px;top:173.5px;width:8px;height:2px;background:#c3c6d2"></div><div style="left:14px;top:179.5px;width:8px;height:2px;background:#c3c6d2"></div><div style="left:14px;top:184.5px;width:8px;height:2px;background:#c3c6d2"></div><div style="left:14px;top:195.5px;width:8px;height:2px;background:#c3c6d2"></div><div style="left:14px;top:201.5px;width:8px;height:2px;background:#c3c6d2"></div><div style="left:14px;top:206.5px;width:8px;height:2px;background:#c3c6d2"></div><div style="left:14px;top:218.5px;width:8px;height:2px;background:#c3c6d2"></div><div style="left:14px;top:224.5px;width:8px;height:2px;background:#c3c6d2"></div><div style="left:14px;top:230.5px;width:8px;height:2px;background:#c3c6d2"></div><div style="left:14px;top:259.5px;width:8px;height:2px;background:#c3c6d2"></div><div style="left:14px;top:242.5px;width:8px;height:2px;background:#c3c6d2"></div></div>
<div style="left:306px;top:1367.5px;width:79.2px;height:274px;"><div style="right:29.3px;top:-5px;width:40px;height:16px;line-height:16px;font-size:15.3px;text-align:right;color:#c3c6d2;letter-spacing:-0.2px">0</div><div style="right:19.5px;top:1.9px;width:6.5px;height:1.6px;background:#c3c6d2"></div><div style="right:29.3px;top:13.1px;width:40px;height:16px;line-height:16px;font-size:15.3px;text-align:right;color:#c3c6d2;letter-spacing:-0.2px">3</div><div style="right:19.5px;top:20px;width:6.5px;height:1.6px;background:#c3c6d2"></div><div style="right:29.3px;top:31.1px;width:40px;height:16px;line-height:16px;font-size:15.3px;text-align:right;color:#c3c6d2;letter-spacing:-0.2px">6</div><div style="right:19.5px;top:38px;width:6.5px;height:1.6px;background:#c3c6d2"></div><div style="right:29.3px;top:49.2px;width:40px;height:16px;line-height:16px;font-size:15.3px;text-align:right;color:#c3c6d2;letter-spacing:-0.2px">9</div><div style="right:19.5px;top:56.1px;width:6.5px;height:1.6px;background:#c3c6d2"></div><div style="right:29.3px;top:67.2px;width:40px;height:16px;line-height:16px;font-size:15.3px;text-align:right;color:#c3c6d2;letter-spacing:-0.2px">12</div><div style="right:19.5px;top:74.1px;width:6.5px;height:1.6px;background:#c3c6d2"></div><div style="right:29.3px;top:85.3px;width:40px;height:16px;line-height:16px;font-size:15.3px;text-align:right;color:#c3c6d2;letter-spacing:-0.2px">15</div><div style="right:19.5px;top:92.2px;width:6.5px;height:1.6px;background:#c3c6d2"></div><div style="right:29.3px;top:103.3px;width:40px;height:16px;line-height:16px;font-size:15.3px;text-align:right;color:#c3c6d2;letter-spacing:-0.2px">18</div><div style="right:19.5px;top:110.2px;width:6.5px;height:1.6px;background:#c3c6d2"></div><div style="right:29.3px;top:121.3px;width:40px;height:16px;line-height:16px;font-size:15.3px;text-align:right;color:#c3c6d2;letter-spacing:-0.2px">21</div><div style="right:19.5px;top:128.2px;width:6.5px;height:1.6px;background:#c3c6d2"></div><div style="right:29.3px;top:139.3px;width:40px;height:16px;line-height:16px;font-size:15.3px;text-align:right;color:#c3c6d2;letter-spacing:-0.2px">24</div><div style="right:19.5px;top:146.2px;width:6.5px;height:1.6px;background:#c3c6d2"></div><div style="right:29.3px;top:163.1px;width:40px;height:16px;line-height:16px;font-size:15.3px;text-align:right;color:#c3c6d2;letter-spacing:-0.2px">30</div><div style="right:19.5px;top:170px;width:6.5px;height:1.6px;background:#c3c6d2"></div><div style="right:29.3px;top:183.3px;width:40px;height:16px;line-height:16px;font-size:15.3px;text-align:right;color:#c3c6d2;letter-spacing:-0.2px">35</div><div style="right:19.5px;top:190.2px;width:6.5px;height:1.6px;background:#c3c6d2"></div><div style="right:29.3px;top:203.6px;width:40px;height:16px;line-height:16px;font-size:15.3px;text-align:right;color:#c3c6d2;letter-spacing:-0.2px">40</div><div style="right:19.5px;top:210.5px;width:6.5px;height:1.6px;background:#c3c6d2"></div><div style="right:29.3px;top:223.3px;width:40px;height:16px;line-height:16px;font-size:15.3px;text-align:right;color:#c3c6d2;letter-spacing:-0.2px">45</div><div style="right:19.5px;top:230.2px;width:6.5px;height:1.6px;background:#c3c6d2"></div><div style="right:29.3px;top:243.6px;width:40px;height:16px;line-height:16px;font-size:15.3px;text-align:right;color:#c3c6d2;letter-spacing:-0.2px">50</div><div style="right:19.5px;top:250.5px;width:6.5px;height:1.6px;background:#c3c6d2"></div><div style="right:29.3px;top:263.1px;width:40px;height:16px;line-height:16px;font-size:15.3px;text-align:right;color:#c3c6d2;letter-spacing:-0.2px">60</div><div style="right:19.5px;top:270px;width:6.5px;height:1.6px;background:#c3c6d2"></div><div style="right:19.2px;top:1px;width:1.7px;opacity:.85;height:272px;background:repeating-linear-gradient(#c3c6d2 0,#c3c6d2 1.9px,transparent 1.9px,transparent 4.3px)"></div><div style="right:0;top:0;width:19.2px;height:274px;background:linear-gradient(#2b3034 0,#2b3034 19.5px,#28282c 20px,#332c30 50px,#2e3331 160px,#33322e 100%);box-shadow:0 0 0 .5px #1a2030"></div></div>
<div style="left:293px;top:1603.5px;width:34px;height:70px;background:#fff;border-radius:4px;box-shadow:0 2px 5px rgba(10,15,40,.45),0 0 0 .5px rgba(200,210,230,.5);"></div>
<div style="left:293px;top:1635.2px;width:34px;height:2px;background:#000;"></div>
<div style="left:276.5px;top:1691px;width:65px;height:34px;background:#676673;border-radius:6px;line-height:34px;font-size:28px;color:#fff;text-align:center;white-space:nowrap;overflow:hidden;">M</div>
<div style="left:348.5px;top:1691px;width:65px;height:34px;background:#676673;border-radius:6px;line-height:34px;font-size:28px;color:#fff;text-align:center;white-space:nowrap;overflow:hidden;">S</div>
<div style="left:348.5px;top:1651px;width:65px;height:34px;background:#676673;border-radius:6px;line-height:34px;font-size:26px;color:#d0d0d8;text-align:center;white-space:nowrap;overflow:hidden;letter-spacing:0.4px;"><span style="display:inline-block;transform:scaleX(0.93)">Bnce</span></div>
<div style="left:236px;top:1752.29px;width:220px;height:32px;line-height:32px;font-size:24.5px;color:#f0f1f4;text-align:center;white-space:nowrap;letter-spacing:0.2px;transform:scaleX(0.98);transform-origin:50% 50%;">Stereo Out</div>
<div style="left:464.5px;top:130px;width:2412px;height:660.3px;background:#000;border-radius:9px;"></div>
<div style="left:466.5px;top:132px;width:2408px;height:656.3px;background:#252f4c;border-radius:7px;"></div>
<div style="left:482px;top:141px;width:66px;height:41px;background:rgba(58,66,92,.55);border-radius:7px;box-shadow:inset 0 0 0 1px rgba(90,98,125,.35),0 1px 2px rgba(0,0,0,.25);"></div>
<svg style="left:503px;top:147px;" width="26" height="30" viewBox="0 0 26 30"><path d="M3 11L11.5 2.5L18 9.5M11.5 3C10 14 13 25 23.5 24.5" fill="none" stroke="#868a9c" stroke-width="1.8"/></svg>
<div style="left:564px;top:141px;width:446px;height:41px;background:rgba(58,66,92,.55);border-radius:7px;box-shadow:inset 0 0 0 1px rgba(90,98,125,.35),0 1px 2px rgba(0,0,0,.25);"></div>
<div style="left:684.5px;top:142px;width:1.2px;height:39px;background:rgba(30,36,58,.6);"></div>
<div style="left:586px;top:144.31px;width:600px;height:34px;line-height:34px;font-size:26px;color:#f2f2f5;text-align:left;white-space:nowrap;letter-spacing:0.35px;-webkit-text-stroke:.35px #f2f2f5;">Edit</div>
<svg style="left:654px;top:158.5px;" width="16" height="9" viewBox="0 0 16 9"><path d="M1 1L8 8L15 1" fill="none" stroke="#f2f2f5" stroke-width="2"/></svg>
<div style="left:876px;top:142px;width:1.2px;height:39px;background:rgba(30,36,58,.6);"></div>
<div style="left:706.5px;top:144.31px;width:600px;height:34px;line-height:34px;font-size:26px;color:#f2f2f5;text-align:left;white-space:nowrap;letter-spacing:0.35px;-webkit-text-stroke:.35px #f2f2f5;">Functions</div>
<svg style="left:846.5px;top:158.5px;" width="16" height="9" viewBox="0 0 16 9"><path d="M1 1L8 8L15 1" fill="none" stroke="#f2f2f5" stroke-width="2"/></svg>
<div style="left:898.5px;top:144.31px;width:600px;height:34px;line-height:34px;font-size:26px;color:#f2f2f5;text-align:left;white-space:nowrap;letter-spacing:0.35px;-webkit-text-stroke:.35px #f2f2f5;">View</div>
<svg style="left:980.5px;top:158.5px;" width="16" height="9" viewBox="0 0 16 9"><path d="M1 1L8 8L15 1" fill="none" stroke="#f2f2f5" stroke-width="2"/></svg>
<div style="left:1026.5px;top:141px;width:129px;height:41px;background:linear-gradient(#88aaba,#7c9dae);border-radius:7px;box-shadow:0 1px 2px rgba(0,0,0,.3);"></div>
<div style="left:1091px;top:141px;width:1.5px;height:41px;background:#4f6a80;"></div>
<svg style="left:1046.5px;top:149px;" width="26" height="26" viewBox="0 0 26 26"><rect x="0.0" y="0.0" width="6.6" height="6.6" rx="1" fill="#fff"/><rect x="9.3" y="0.0" width="6.6" height="6.6" rx="1" fill="#fff"/><rect x="18.6" y="0.0" width="6.6" height="6.6" rx="1" fill="#fff"/><rect x="0.0" y="9.3" width="6.6" height="6.6" rx="1" fill="#fff"/><rect x="9.3" y="9.3" width="6.6" height="6.6" rx="1" fill="#fff"/><rect x="18.6" y="9.3" width="6.6" height="6.6" rx="1" fill="#fff"/><rect x="0.0" y="18.6" width="6.6" height="6.6" rx="1" fill="#fff"/><rect x="9.3" y="18.6" width="6.6" height="6.6" rx="1" fill="#fff"/><rect x="18.6" y="18.6" width="6.6" height="6.6" rx="1" fill="#fff"/></svg>
<svg style="left:1106px;top:149.5px;" width="36" height="25" viewBox="0 0 36 25"><path d="M0 0H8.5V6.5H0ZM11 0H35.5V6.5H11ZM0 9H23V15.5H0ZM25.5 9H35.5V15.5H25.5ZM0 18H35.5V24.5H0Z" fill="#fff"/></svg>
<div style="left:1172.5px;top:141px;width:129px;height:41px;background:rgba(58,66,92,.55);border-radius:7px;box-shadow:inset 0 0 0 1px rgba(90,98,125,.35),0 1px 2px rgba(0,0,0,.25);"></div>
<div style="left:1236.5px;top:142px;width:1.2px;height:39px;background:rgba(30,36,58,.6);"></div>
<svg style="left:1182px;top:149px;" width="46" height="26" viewBox="0 0 46 26"><path d="M1 22.5H9M14.5 19L26 6M32 4.2H44.5" stroke="#e8e8ee" stroke-width="2"/><circle cx="12" cy="22" r="3.6" fill="#e8e8ee"/><circle cx="29" cy="4.5" r="3.6" fill="#e8e8ee"/></svg>
<svg style="left:1247px;top:146px;" width="44" height="31" viewBox="0 0 44 31"><path d="M1.5 3V28M42.5 3V28M1.5 3C16 5 28 22 42.5 28M1.5 28C16 26 28 9 42.5 3" fill="none" stroke="#e8e8ee" stroke-width="1.8"/><path d="M6 12V19M9.5 14V17M13 11.5V19.5M16.5 14.5V16.5M27.5 14.5V16.5M31 11.5V19.5M34.5 14V17M38 12V19" stroke="#e8e8ee" stroke-width="1.5"/></svg>
<div style="left:1318.5px;top:141px;width:65px;height:41px;background:linear-gradient(#88aaba,#7c9dae);border-radius:7px;box-shadow:0 1px 2px rgba(0,0,0,.3);"></div>
<svg style="left:1331px;top:150px;" width="40" height="26" viewBox="0 0 40 26"><path d="M1.5 8L8.5 13.5L1.5 19M38.5 8L31.5 13.5L38.5 19" fill="none" stroke="#fff" stroke-width="2"/><path d="M13 1.5H27L21.3 9.5V25H18.7V9.5Z" fill="#fff"/></svg>
<div style="left:1428px;top:141px;width:174px;height:41px;background:rgba(58,66,92,.55);border-radius:7px;box-shadow:inset 0 0 0 1px rgba(90,98,125,.35),0 1px 2px rgba(0,0,0,.25);"></div>
<div style="left:1514.5px;top:142px;width:1.2px;height:39px;background:rgba(30,36,58,.6);"></div>
<svg style="left:1450px;top:148px;" width="20" height="28" viewBox="0 0 20 28"><path d="M1.5 1.5V22L6.8 17.2L10.5 26L14 24.5L10.3 16H17.5Z" fill="#e8e8ee"/></svg>
<svg style="left:1485px;top:158px;" width="16" height="9" viewBox="0 0 16 9"><path d="M1 1L8 8L15 1" fill="none" stroke="#e8e8ee" stroke-width="2"/></svg>
<svg style="left:1531px;top:148px;" width="28" height="28" viewBox="0 0 28 28"><path d="M14 1V11.5M14 16.5V27M1 14H11.5M16.5 14H27" stroke="#e8e8ee" stroke-width="1.6"/><path d="M13 14H15M14 13V15" stroke="#e8e8ee" stroke-width="1.2"/></svg>
<svg style="left:1573px;top:158px;" width="16" height="9" viewBox="0 0 16 9"><path d="M1 1L8 8L15 1" fill="none" stroke="#e8e8ee" stroke-width="2"/></svg>
<div style="left:1622.5px;top:144.11px;width:600px;height:34px;line-height:34px;font-size:26px;color:#adb0be;text-align:left;white-space:nowrap;letter-spacing:0.3px;-webkit-text-stroke:.3px #adb0be;">Snap:</div>
<div style="left:1698.5px;top:141px;width:318.5px;height:41px;background:rgba(58,66,92,.55);border-radius:7px;box-shadow:inset 0 0 0 1px rgba(90,98,125,.35),0 1px 2px rgba(0,0,0,.25);"></div>
<div style="left:1720.5px;top:144.11px;width:600px;height:34px;line-height:34px;font-size:26px;color:#f2f2f5;text-align:left;white-space:nowrap;letter-spacing:0.4px;-webkit-text-stroke:.35px #f2f2f5;">Smart</div>
<svg style="left:1989px;top:147.5px;" width="16" height="28" viewBox="0 0 16 28"><path d="M1.5 10L8 2.5L14.5 10M1.5 18L8 25.5L14.5 18" fill="none" stroke="#e8e8ee" stroke-width="2"/></svg>
<div style="left:2039px;top:144.11px;width:600px;height:34px;line-height:34px;font-size:26px;color:#adb0be;text-align:left;white-space:nowrap;letter-spacing:0.3px;-webkit-text-stroke:.3px #adb0be;">Drag:</div>
<div style="left:2110.5px;top:141px;width:201.5px;height:41px;background:rgba(58,66,92,.55);border-radius:7px;box-shadow:inset 0 0 0 1px rgba(90,98,125,.35),0 1px 2px rgba(0,0,0,.25);"></div>
<div style="left:2132px;top:144.11px;width:600px;height:34px;line-height:34px;font-size:26px;color:#f2f2f5;text-align:left;white-space:nowrap;letter-spacing:0.25px;-webkit-text-stroke:.35px #f2f2f5;">No Overlap</div>
<svg style="left:2283px;top:147.5px;" width="16" height="28" viewBox="0 0 16 28"><path d="M1.5 10L8 2.5L14.5 10M1.5 18L8 25.5L14.5 18" fill="none" stroke="#e8e8ee" stroke-width="2"/></svg>
<div style="left:2328px;top:141px;width:66.5px;height:41px;background:rgba(58,66,92,.55);border-radius:7px;box-shadow:inset 0 0 0 1px rgba(90,98,125,.35),0 1px 2px rgba(0,0,0,.25);"></div>
<svg style="left:2340.5px;top:148.5px;" width="44" height="26" viewBox="0 0 44 26"><path d="M1.0 12.0V14.0" stroke="#e8e8ee" stroke-width="1.7" stroke-linecap="round"/><path d="M4.7 10.5V15.5" stroke="#e8e8ee" stroke-width="1.7" stroke-linecap="round"/><path d="M8.4 8.5V17.5" stroke="#e8e8ee" stroke-width="1.7" stroke-linecap="round"/><path d="M12.100000000000001 5.5V20.5" stroke="#e8e8ee" stroke-width="1.7" stroke-linecap="round"/><path d="M15.8 0.5V25.5" stroke="#e8e8ee" stroke-width="1.7" stroke-linecap="round"/><path d="M19.5 6.5V19.5" stroke="#e8e8ee" stroke-width="1.7" stroke-linecap="round"/><path d="M23.200000000000003 2.5V23.5" stroke="#e8e8ee" stroke-width="1.7" stroke-linecap="round"/><path d="M26.900000000000002 8.5V17.5" stroke="#e8e8ee" stroke-width="1.7" stroke-linecap="round"/><path d="M30.6 6.0V20.0" stroke="#e8e8ee" stroke-width="1.7" stroke-linecap="round"/><path d="M34.300000000000004 10.5V15.5" stroke="#e8e8ee" stroke-width="1.7" stroke-linecap="round"/><path d="M38.0 11.5V14.5" stroke="#e8e8ee" stroke-width="1.7" stroke-linecap="round"/><path d="M41.7 12.0V14.0" stroke="#e8e8ee" stroke-width="1.7" stroke-linecap="round"/></svg>
<div style="left:2410px;top:141px;width:130px;height:41px;background:rgba(58,66,92,.55);border-radius:7px;box-shadow:inset 0 0 0 1px rgba(90,98,125,.35),0 1px 2px rgba(0,0,0,.25);"></div>
<div style="left:2475px;top:142px;width:1.2px;height:39px;background:rgba(30,36,58,.6);"></div>
<svg style="left:2429px;top:147.5px;" width="28" height="28" viewBox="0 0 28 28"><path d="M1 1.5H27M1 26.5H27M14 5V23M8.5 10L14 4.5L19.5 10M8.5 18L14 23.5L19.5 18" fill="none" stroke="#e8e8ee" stroke-width="1.8"/></svg>
<svg style="left:2493px;top:147.5px;" width="28" height="28" viewBox="0 0 28 28"><path d="M1.5 1V27M26.5 1V27M5 14H23M10 8.5L4.5 14L10 19.5M18 8.5L23.5 14L18 19.5" fill="none" stroke="#e8e8ee" stroke-width="1.8"/></svg>
<div style="left:2556px;top:141px;width:302px;height:41px;background:#1e2843;border-radius:7px;box-shadow:inset 0 0 0 1px rgba(70,80,110,.3);"></div>
<div style="left:2706.5px;top:142px;width:1.2px;height:39px;background:rgba(50,58,85,.7);"></div>
<svg style="left:2572px;top:150px;" width="14" height="24" viewBox="0 0 14 24"><path d="M7 1V23M2 6L7 1L12 6M2 18L7 23L12 18" fill="none" stroke="#2c3756" stroke-width="2"/></svg>
<svg style="left:2712px;top:154.5px;" width="28" height="14" viewBox="0 0 28 14"><path d="M1 7H27M6 2L1 7L6 12M22 2L27 7L22 12" fill="none" stroke="#2c3756" stroke-width="2"/></svg>
<div style="left:2602px;top:159.3px;width:89px;height:5.8px;background:#141a2c;border-radius:3px;"></div>
<div style="left:2751px;top:159.3px;width:91px;height:5.8px;background:#141a2c;border-radius:3px;"></div>
<svg style="left:2625px;top:149px;" width="19" height="22" viewBox="0 0 19 22"><path d="M9.5 0.5C12 4 18.5 8.5 18.5 13.5V20a1.5 1.5 0 0 1-1.5 1.5H2A1.5 1.5 0 0 1 .5 20V13.5C.5 8.5 7 4 9.5 .5Z" fill="#dcdde2"/></svg>
<svg style="left:2757px;top:149px;" width="19" height="22" viewBox="0 0 19 22"><path d="M9.5 0.5C12 4 18.5 8.5 18.5 13.5V20a1.5 1.5 0 0 1-1.5 1.5H2A1.5 1.5 0 0 1 .5 20V13.5C.5 8.5 7 4 9.5 .5Z" fill="#dcdde2"/></svg>
<div style="left:467px;top:190px;width:543px;height:1.5px;background:#1d2540;"></div>
<div style="left:482px;top:202.5px;width:66px;height:41.5px;background:rgba(58,66,92,.55);border-radius:7px;box-shadow:inset 0 0 0 1px rgba(90,98,125,.35),0 1px 2px rgba(0,0,0,.25);"></div>
<svg style="left:501.5px;top:209.5px;" width="27" height="27" viewBox="0 0 27 27"><path d="M13.5 1V26M1 13.5H26" stroke="#eceef2" stroke-width="2"/></svg>
<div style="left:564px;top:202.5px;width:66px;height:41.5px;background:rgba(58,66,92,.55);border-radius:7px;box-shadow:inset 0 0 0 1px rgba(90,98,125,.35),0 1px 2px rgba(0,0,0,.25);"></div>
<svg style="left:580.5px;top:209px;" width="34" height="29" viewBox="0 0 34 29"><rect x="0.5" y="0.5" width="24" height="19" rx="2.5" fill="#e3e4ea"/><path d="M12.5 4.5V15.5M7 10H18" stroke="#2b3552" stroke-width="2"/><path d="M28 8.5H30a2.5 2.5 0 0 1 2.5 2.5V24.5a2.5 2.5 0 0 1-2.5 2.5H11.5A2.5 2.5 0 0 1 9 24.5V23" fill="none" stroke="#e3e4ea" stroke-width="1.8"/></svg>
<div style="left:926px;top:202.5px;width:66px;height:41.5px;background:rgba(58,66,92,.55);border-radius:7px;box-shadow:inset 0 0 0 1px rgba(90,98,125,.35),0 1px 2px rgba(0,0,0,.25);"></div>
<svg style="left:946px;top:210px;" width="27" height="26" viewBox="0 0 27 26"><rect x="1" y="1" width="25" height="24" rx="1.5" fill="none" stroke="#e3e4ea" stroke-width="1.9"/><rect x="1" y="1" width="25" height="5.5" fill="#e3e4ea"/><path d="M8.5 13L13.5 18L18.5 13" fill="none" stroke="#e3e4ea" stroke-width="1.8"/></svg>
<div style="left:1026.5px;top:202.5px;width:68px;height:41.5px;background:rgba(58,66,92,.55);border-radius:7px;box-shadow:inset 0 0 0 1px rgba(90,98,125,.35),0 1px 2px rgba(0,0,0,.25);"></div>
<svg style="left:1047px;top:211px;" width="25" height="18" viewBox="0 0 25 18"><path d="M0 2.2H24.3M0 8.7H11M0 15.2H11" stroke="#eceef2" stroke-width="3.5"/></svg>
<div style="left:1059.8px;top:214.07px;width:600px;height:29px;line-height:29px;font-size:22.5px;color:#eceef2;text-align:left;white-space:nowrap;">R</div>
<div style="left:1234.5px;top:206.81px;width:600px;height:33px;line-height:33px;font-size:25.5px;color:#adb0be;text-align:left;white-space:nowrap;-webkit-text-stroke:.3px #adb0be;">Q.S.:</div>
<div style="left:1298px;top:202.5px;width:226px;height:41.5px;background:rgba(58,66,92,.55);border-radius:7px;box-shadow:inset 0 0 0 1px rgba(90,98,125,.35),0 1px 2px rgba(0,0,0,.25);"></div>
<div style="left:1322px;top:206.81px;width:600px;height:33px;line-height:33px;font-size:25.5px;color:#f2f2f5;text-align:left;white-space:nowrap;-webkit-text-stroke:.35px #f2f2f5;">1 Bar</div>
<svg style="left:1495.5px;top:209px;" width="16" height="28" viewBox="0 0 16 28"><path d="M1.5 10L8 2.5L14.5 10M1.5 18L8 25.5L14.5 18" fill="none" stroke="#e8e8ee" stroke-width="2"/></svg>
<svg style="left:1536px;top:204px;" width="38" height="38" viewBox="0 0 38 38"><circle cx="19" cy="19" r="18" fill="#fb7c7b"/><path d="M19 19V3.2A15.8 15.8 0 0 0 10.5 32.3Z" fill="#151b2e"/></svg>
<div style="left:1594px;top:202.5px;width:68px;height:41.5px;background:rgba(58,66,92,.55);border-radius:7px;box-shadow:inset 0 0 0 1px rgba(90,98,125,.35),0 1px 2px rgba(0,0,0,.25);"></div>
<svg style="left:1610.5px;top:214px;" width="35" height="18" viewBox="0 0 35 18"><path d="M1.5 9H33.5M9 1.5L1.5 9L9 16.5M26 1.5L33.5 9L26 16.5" fill="none" stroke="#eceef2" stroke-width="2"/></svg>
<div style="left:1008px;top:190px;width:2.5px;height:600px;background:#0b0e18;"></div>
<div style="left:466.5px;top:333.9px;width:543px;height:2.3px;background:#1c243e;"></div>
<div style="left:506.5px;top:262px;width:2px;height:73.4px;background:#161c30;"></div>
<div style="left:463px;top:284.12px;width:40px;height:34px;line-height:34px;font-size:26.5px;color:#e2e3e8;text-align:right;white-space:nowrap;letter-spacing:0.3px;">26</div>
<svg style="left:568px;top:277.5px;" width="60" height="56" viewBox="0 0 60 56"><path d="M0.5 4.5H12V2.2H47L60 6.5V16H8L0.5 14Z" fill="#4fa3ff"/><path d="M4 6.6h2.6v2.4H4zM8 6.6h2.6v2.4H8z" fill="#243050"/><path d="M3 5.2H21V10.2H14.5V12" fill="none" stroke="#243050" stroke-width="1.4"/><rect x="15.3" y="9.6" width="41" height="4" fill="none" stroke="#243050" stroke-width="1.4"/><path d="M16 43.5L42 17M44 43.5L18 17" stroke="#4fa3ff" stroke-width="2.2"/><circle cx="16" cy="43.8" r="2.6" fill="#4fa3ff"/><circle cx="44" cy="43.8" r="2.6" fill="#4fa3ff"/></svg>
<div style="left:658.5px;top:279.8px;width:81.5px;height:35px;background:#676673;border-radius:7px;"></div>
<div style="left:698.3px;top:279.8px;width:1.3px;height:35px;background:#4c4b57;"></div>
<div style="left:659px;top:280.14px;width:40px;height:36px;line-height:36px;font-size:28px;color:#fff;text-align:center;white-space:nowrap;">M</div>
<div style="left:699.5px;top:280.14px;width:40px;height:36px;line-height:36px;font-size:28px;color:#fff;text-align:center;white-space:nowrap;">S</div>
<div style="left:752.5px;top:279.8px;width:41px;height:35px;background:#676673;border-radius:7px;"></div>
<div style="left:753px;top:280.14px;width:40px;height:36px;line-height:36px;font-size:28px;color:#fff;text-align:center;white-space:nowrap;">R</div>
<div style="left:850px;top:282.42px;width:600px;height:34px;line-height:34px;font-size:26.5px;color:#e6e7ec;text-align:left;white-space:nowrap;letter-spacing:0.1px;-webkit-text-stroke:.3px #e6e7ec;">Nig...lon</div>
<div style="left:970.3px;top:288px;width:17.5px;height:17.5px;background:#4cd964;border-radius:50%;"></div>
<div style="left:466.5px;top:409.5px;width:543px;height:2.3px;background:#1c243e;"></div>
<div style="left:466.5px;top:336.2px;width:543px;height:1px;background:#2a3554;"></div>
<div style="left:506.5px;top:336.2px;width:2px;height:73.3px;background:#161c30;"></div>
<div style="left:463px;top:360.22px;width:40px;height:34px;line-height:34px;font-size:26.5px;color:#e2e3e8;text-align:right;white-space:nowrap;letter-spacing:0.3px;">27</div>
<svg style="left:568px;top:347.4px;" width="60" height="56" viewBox="0 0 60 56"><path d="M6.5 13.3V15.7" stroke="#2bb5f5" stroke-width="2.3" stroke-linecap="round"/><path d="M10.5 12.0V17.0" stroke="#2bb5f5" stroke-width="2.3" stroke-linecap="round"/><path d="M14.5 10.0V19.0" stroke="#2bb5f5" stroke-width="2.3" stroke-linecap="round"/><path d="M18.5 7.9V21.1" stroke="#2bb5f5" stroke-width="2.3" stroke-linecap="round"/><path d="M22.5 0.5V28.5" stroke="#2bb5f5" stroke-width="2.3" stroke-linecap="round"/><path d="M26.5 6.0V23.0" stroke="#2bb5f5" stroke-width="2.3" stroke-linecap="round"/><path d="M30.5 10.75V18.25" stroke="#2bb5f5" stroke-width="2.3" stroke-linecap="round"/><path d="M34.5 12.25V16.75" stroke="#2bb5f5" stroke-width="2.3" stroke-linecap="round"/><path d="M38.5 11.25V17.75" stroke="#2bb5f5" stroke-width="2.3" stroke-linecap="round"/><path d="M42.5 3.5V25.5" stroke="#2bb5f5" stroke-width="2.3" stroke-linecap="round"/><path d="M46.5 9.5V19.5" stroke="#2bb5f5" stroke-width="2.3" stroke-linecap="round"/><path d="M50.5 12.25V16.75" stroke="#2bb5f5" stroke-width="2.3" stroke-linecap="round"/><path d="M53.8 13.3V15.7" stroke="#2bb5f5" stroke-width="2.3" stroke-linecap="round"/><rect x="5" y="35.5" width="50" height="19" rx="1.5" fill="none" stroke="#2bb5f5" stroke-width="2"/><path d="M11.2 36V54" stroke="#2bb5f5" stroke-width="1.4"/><path d="M17.4 36V54" stroke="#2bb5f5" stroke-width="1.4"/><path d="M23.6 36V54" stroke="#2bb5f5" stroke-width="1.4"/><path d="M29.8 36V54" stroke="#2bb5f5" stroke-width="1.4"/><path d="M36 36V54" stroke="#2bb5f5" stroke-width="1.4"/><path d="M42.2 36V54" stroke="#2bb5f5" stroke-width="1.4"/><path d="M48.4 36V54" stroke="#2bb5f5" stroke-width="1.4"/><rect x="9.2" y="36" width="4" height="11.5" fill="#2bb5f5"/><rect x="15.4" y="36" width="4" height="11.5" fill="#2bb5f5"/><rect x="27.8" y="36" width="4" height="11.5" fill="#2bb5f5"/><rect x="34" y="36" width="4" height="11.5" fill="#2bb5f5"/><rect x="40.2" y="36" width="4" height="11.5" fill="#2bb5f5"/><rect x="46.4" y="36" width="4" height="11.5" fill="#2bb5f5"/></svg>
<div style="left:658.5px;top:355.9px;width:81.5px;height:35px;background:#676673;border-radius:7px;"></div>
<div style="left:698.3px;top:355.9px;width:1.3px;height:35px;background:#4c4b57;"></div>
<div style="left:659px;top:356.24px;width:40px;height:36px;line-height:36px;font-size:28px;color:#fff;text-align:center;white-space:nowrap;">M</div>
<div style="left:699.5px;top:356.24px;width:40px;height:36px;line-height:36px;font-size:28px;color:#fff;text-align:center;white-space:nowrap;">S</div>
<div style="left:752.5px;top:355.9px;width:41px;height:35px;background:#676673;border-radius:7px;"></div>
<div style="left:753px;top:356.24px;width:40px;height:36px;line-height:36px;font-size:28px;color:#fff;text-align:center;white-space:nowrap;">R</div>
<div style="left:850px;top:358.52px;width:600px;height:34px;line-height:34px;font-size:26.5px;color:#e6e7ec;text-align:left;white-space:nowrap;letter-spacing:0.1px;-webkit-text-stroke:.3px #e6e7ec;">Los...rse</div>
<div style="left:970.3px;top:364.1px;width:17.5px;height:17.5px;background:#4cd964;border-radius:50%;"></div>
<div style="left:466.5px;top:485.9px;width:543px;height:2.3px;background:#1c243e;"></div>
<div style="left:466.5px;top:411.8px;width:543px;height:1px;background:#2a3554;"></div>
<div style="left:506.5px;top:411.8px;width:2px;height:74.1px;background:#161c30;"></div>
<div style="left:463px;top:436.32px;width:40px;height:34px;line-height:34px;font-size:26.5px;color:#e2e3e8;text-align:right;white-space:nowrap;letter-spacing:0.3px;">28</div>
<svg style="left:568px;top:429.7px;" width="60" height="56" viewBox="0 0 60 56"><path d="M0.5 4.5H12V2.2H47L60 6.5V16H8L0.5 14Z" fill="#1fc3e6"/><path d="M4 6.6h2.6v2.4H4zM8 6.6h2.6v2.4H8z" fill="#243050"/><path d="M3 5.2H21V10.2H14.5V12" fill="none" stroke="#243050" stroke-width="1.4"/><rect x="15.3" y="9.6" width="41" height="4" fill="none" stroke="#243050" stroke-width="1.4"/><path d="M16 43.5L42 17M44 43.5L18 17" stroke="#1fc3e6" stroke-width="2.2"/><circle cx="16" cy="43.8" r="2.6" fill="#1fc3e6"/><circle cx="44" cy="43.8" r="2.6" fill="#1fc3e6"/></svg>
<div style="left:658.5px;top:432px;width:81.5px;height:35px;background:#676673;border-radius:7px;"></div>
<div style="left:698.3px;top:432px;width:1.3px;height:35px;background:#4c4b57;"></div>
<div style="left:659px;top:432.34px;width:40px;height:36px;line-height:36px;font-size:28px;color:#fff;text-align:center;white-space:nowrap;">M</div>
<div style="left:699.5px;top:432.34px;width:40px;height:36px;line-height:36px;font-size:28px;color:#fff;text-align:center;white-space:nowrap;">S</div>
<div style="left:752.5px;top:432px;width:41px;height:35px;background:#676673;border-radius:7px;"></div>
<div style="left:753px;top:432.34px;width:40px;height:36px;line-height:36px;font-size:28px;color:#fff;text-align:center;white-space:nowrap;">R</div>
<div style="left:850px;top:434.62px;width:600px;height:34px;line-height:34px;font-size:26.5px;color:#e6e7ec;text-align:left;white-space:nowrap;letter-spacing:0.1px;-webkit-text-stroke:.3px #e6e7ec;">Stri...Vox</div>
<div style="left:970.3px;top:440.2px;width:17.5px;height:17.5px;background:#4cd964;border-radius:50%;"></div>
<div style="left:466.5px;top:488.2px;width:543px;height:75.3px;background:#686673;"></div>
<div style="left:466.5px;top:488.2px;width:41px;height:75.3px;background:#6e6c79;"></div>
<div style="left:466.5px;top:561.2px;width:543px;height:2.3px;background:#1c243e;"></div>
<div style="left:506.5px;top:488.2px;width:2px;height:73px;background:#55535f;"></div>
<div style="left:463px;top:512.42px;width:40px;height:34px;line-height:34px;font-size:26.5px;color:#fb666b;text-align:right;white-space:nowrap;letter-spacing:0.3px;">29</div>
<svg style="left:568px;top:498.9px;" width="60" height="56" viewBox="0 0 60 56"><rect x="7.2" y="3.2" width="45.6" height="19.6" fill="none" stroke="#04d4d2" stroke-width="1.9"/><rect x="12" y="8.5" width="1.7" height="1.7" fill="#04d4d2"/><rect x="17" y="8.5" width="1.7" height="1.7" fill="#04d4d2"/><rect x="19.6" y="8.5" width="1.7" height="1.7" fill="#04d4d2"/><rect x="22.2" y="8.5" width="1.7" height="1.7" fill="#04d4d2"/><rect x="27.2" y="8.5" width="1.7" height="1.7" fill="#04d4d2"/><rect x="29.8" y="8.5" width="1.7" height="1.7" fill="#04d4d2"/><rect x="32.4" y="8.5" width="1.7" height="1.7" fill="#04d4d2"/><rect x="37.4" y="8.5" width="1.7" height="1.7" fill="#04d4d2"/><rect x="40" y="8.5" width="1.7" height="1.7" fill="#04d4d2"/><rect x="42.6" y="8.5" width="1.7" height="1.7" fill="#04d4d2"/><rect x="47.4" y="8.5" width="1.7" height="1.7" fill="#04d4d2"/><rect x="12" y="12.3" width="1.7" height="1.7" fill="#04d4d2"/><rect x="17" y="12.3" width="1.7" height="1.7" fill="#04d4d2"/><rect x="19.6" y="12.3" width="1.7" height="1.7" fill="#04d4d2"/><rect x="22.2" y="12.3" width="1.7" height="1.7" fill="#04d4d2"/><rect x="27.2" y="12.3" width="1.7" height="1.7" fill="#04d4d2"/><rect x="29.8" y="12.3" width="1.7" height="1.7" fill="#04d4d2"/><rect x="32.4" y="12.3" width="1.7" height="1.7" fill="#04d4d2"/><rect x="37.4" y="12.3" width="1.7" height="1.7" fill="#04d4d2"/><rect x="40" y="12.3" width="1.7" height="1.7" fill="#04d4d2"/><rect x="42.6" y="12.3" width="1.7" height="1.7" fill="#04d4d2"/><rect x="47.4" y="12.3" width="1.7" height="1.7" fill="#04d4d2"/><rect x="10.6" y="16.3" width="38.8" height="3" fill="none" stroke="#04d4d2" stroke-width="1.3"/><path d="M16.5 51L43 24M43.5 51L17 24" stroke="#04d4d2" stroke-width="2"/><circle cx="16.5" cy="51.2" r="2.5" fill="#04d4d2"/><circle cx="43.5" cy="51.2" r="2.5" fill="#04d4d2"/></svg>
<div style="left:658.5px;top:508.1px;width:81.5px;height:35px;background:#676673;border-radius:7px;box-shadow:0 0 0 1px #4c4b55;"></div>
<div style="left:698.3px;top:508.1px;width:1.3px;height:35px;background:#4c4b57;"></div>
<div style="left:659px;top:508.44px;width:40px;height:36px;line-height:36px;font-size:28px;color:#fff;text-align:center;white-space:nowrap;">M</div>
<div style="left:699.5px;top:508.44px;width:40px;height:36px;line-height:36px;font-size:28px;color:#fff;text-align:center;white-space:nowrap;">S</div>
<div style="left:752.5px;top:508.1px;width:41px;height:35px;background:#e0322c;border-radius:7px;box-shadow:0 0 0 1px #8c1f1c;"></div>
<div style="left:753px;top:508.44px;width:40px;height:36px;line-height:36px;font-size:28px;color:#fff;text-align:center;white-space:nowrap;">R</div>
<div style="left:850px;top:510.72px;width:600px;height:34px;line-height:34px;font-size:26.5px;color:#fb666b;text-align:left;white-space:nowrap;letter-spacing:0.1px;-webkit-text-stroke:.3px #fb666b;">Mo...Ark</div>
<div style="left:970.3px;top:516.3px;width:17.5px;height:17.5px;background:#4cd964;border-radius:50%;"></div>
<div style="left:466.5px;top:636.8px;width:543px;height:2.3px;background:#1c243e;"></div>
<div style="left:466.5px;top:563.5px;width:543px;height:1px;background:#2a3554;"></div>
<div style="left:506.5px;top:563.5px;width:2px;height:73.3px;background:#161c30;"></div>
<div style="left:463px;top:588.52px;width:40px;height:34px;line-height:34px;font-size:26.5px;color:#e2e3e8;text-align:right;white-space:nowrap;letter-spacing:0.3px;">30</div>
<svg style="left:568px;top:575px;" width="60" height="56" viewBox="0 0 60 56"><rect x="7.2" y="3.2" width="45.6" height="19.6" fill="none" stroke="#12d3ae" stroke-width="1.9"/><rect x="12" y="8.5" width="1.7" height="1.7" fill="#12d3ae"/><rect x="17" y="8.5" width="1.7" height="1.7" fill="#12d3ae"/><rect x="19.6" y="8.5" width="1.7" height="1.7" fill="#12d3ae"/><rect x="22.2" y="8.5" width="1.7" height="1.7" fill="#12d3ae"/><rect x="27.2" y="8.5" width="1.7" height="1.7" fill="#12d3ae"/><rect x="29.8" y="8.5" width="1.7" height="1.7" fill="#12d3ae"/><rect x="32.4" y="8.5" width="1.7" height="1.7" fill="#12d3ae"/><rect x="37.4" y="8.5" width="1.7" height="1.7" fill="#12d3ae"/><rect x="40" y="8.5" width="1.7" height="1.7" fill="#12d3ae"/><rect x="42.6" y="8.5" width="1.7" height="1.7" fill="#12d3ae"/><rect x="47.4" y="8.5" width="1.7" height="1.7" fill="#12d3ae"/><rect x="12" y="12.3" width="1.7" height="1.7" fill="#12d3ae"/><rect x="17" y="12.3" width="1.7" height="1.7" fill="#12d3ae"/><rect x="19.6" y="12.3" width="1.7" height="1.7" fill="#12d3ae"/><rect x="22.2" y="12.3" width="1.7" height="1.7" fill="#12d3ae"/><rect x="27.2" y="12.3" width="1.7" height="1.7" fill="#12d3ae"/><rect x="29.8" y="12.3" width="1.7" height="1.7" fill="#12d3ae"/><rect x="32.4" y="12.3" width="1.7" height="1.7" fill="#12d3ae"/><rect x="37.4" y="12.3" width="1.7" height="1.7" fill="#12d3ae"/><rect x="40" y="12.3" width="1.7" height="1.7" fill="#12d3ae"/><rect x="42.6" y="12.3" width="1.7" height="1.7" fill="#12d3ae"/><rect x="47.4" y="12.3" width="1.7" height="1.7" fill="#12d3ae"/><rect x="10.6" y="16.3" width="38.8" height="3" fill="none" stroke="#12d3ae" stroke-width="1.3"/><path d="M16.5 51L43 24M43.5 51L17 24" stroke="#12d3ae" stroke-width="2"/><circle cx="16.5" cy="51.2" r="2.5" fill="#12d3ae"/><circle cx="43.5" cy="51.2" r="2.5" fill="#12d3ae"/></svg>
<div style="left:658.5px;top:584.2px;width:81.5px;height:35px;background:#676673;border-radius:7px;"></div>
<div style="left:698.3px;top:584.2px;width:1.3px;height:35px;background:#4c4b57;"></div>
<div style="left:659px;top:584.54px;width:40px;height:36px;line-height:36px;font-size:28px;color:#fff;text-align:center;white-space:nowrap;">M</div>
<div style="left:699.5px;top:584.54px;width:40px;height:36px;line-height:36px;font-size:28px;color:#fff;text-align:center;white-space:nowrap;">S</div>
<div style="left:752.5px;top:584.2px;width:41px;height:35px;background:#676673;border-radius:7px;"></div>
<div style="left:753px;top:584.54px;width:40px;height:36px;line-height:36px;font-size:28px;color:#fff;text-align:center;white-space:nowrap;">R</div>
<div style="left:850px;top:586.82px;width:600px;height:34px;line-height:34px;font-size:26.5px;color:#e6e7ec;text-align:left;white-space:nowrap;letter-spacing:0.1px;-webkit-text-stroke:.3px #e6e7ec;">Oc...ass</div>
<div style="left:970.3px;top:592.4px;width:17.5px;height:17.5px;background:#4cd964;border-radius:50%;"></div>
<div style="left:466.5px;top:712.4px;width:543px;height:2.3px;background:#1c243e;"></div>
<div style="left:466.5px;top:639.1px;width:543px;height:1px;background:#2a3554;"></div>
<div style="left:506.5px;top:639.1px;width:2px;height:73.3px;background:#161c30;"></div>
<div style="left:463px;top:664.62px;width:40px;height:34px;line-height:34px;font-size:26.5px;color:#e2e3e8;text-align:right;white-space:nowrap;letter-spacing:0.3px;">31</div>
<svg style="left:568px;top:650.1px;" width="60" height="56" viewBox="0 0 60 56"><path d="M13.7 7.5C13.7 0.6 46.3 0.6 46.3 7.5C46.8 21 43 30 38.6 34.5C36 37.3 35.6 41.5 36.8 45C37.8 48 40.8 50.2 40.8 51.8C40.8 55.4 19.2 55.4 19.2 51.8C19.2 50.2 22.2 48 23.2 45C24.4 41.5 24 37.3 21.4 34.5C17 30 13.2 21 13.7 7.5Z" fill="#02d48e"/><path d="M14 8.5C17 13 43 13 46 8.5M14.3 12.3C18 17 42 17 45.7 12.3" fill="none" stroke="#243050" stroke-width="1.3"/></svg>
<div style="left:658.5px;top:660.3px;width:81.5px;height:35px;background:#676673;border-radius:7px;"></div>
<div style="left:698.3px;top:660.3px;width:1.3px;height:35px;background:#4c4b57;"></div>
<div style="left:659px;top:660.64px;width:40px;height:36px;line-height:36px;font-size:28px;color:#fff;text-align:center;white-space:nowrap;">M</div>
<div style="left:699.5px;top:660.64px;width:40px;height:36px;line-height:36px;font-size:28px;color:#fff;text-align:center;white-space:nowrap;">S</div>
<div style="left:752.5px;top:660.3px;width:41px;height:35px;background:#676673;border-radius:7px;"></div>
<div style="left:753px;top:660.64px;width:40px;height:36px;line-height:36px;font-size:28px;color:#fff;text-align:center;white-space:nowrap;">R</div>
<div style="left:850px;top:662.92px;width:600px;height:34px;line-height:34px;font-size:26.5px;color:#e6e7ec;text-align:left;white-space:nowrap;letter-spacing:0.1px;-webkit-text-stroke:.3px #e6e7ec;">Afri...Kit</div>
<div style="left:970.3px;top:668.5px;width:17.5px;height:17.5px;background:#4cd964;border-radius:50%;"></div>
<div style="left:466.5px;top:788.1px;width:543px;height:2.3px;background:#1c243e;"></div>
<div style="left:466.5px;top:714.7px;width:543px;height:1px;background:#2a3554;"></div>
<div style="left:506.5px;top:714.7px;width:2px;height:73.4px;background:#161c30;"></div>
<div style="left:463px;top:740.72px;width:40px;height:34px;line-height:34px;font-size:26.5px;color:#e2e3e8;text-align:right;white-space:nowrap;letter-spacing:0.3px;">32</div>
<div style="left:523px;top:724.4px;width:120.5px;height:60px;background:#1f2842;border-radius:13px;box-shadow:0 0 0 1px #19213a;"></div>
<svg style="left:535.5px;top:744.4px;" width="17" height="22" viewBox="0 0 17 22"><path d="M0 0.5L16.5 10.8L0 21.3Z" fill="#b8bac7"/></svg>
<svg style="left:568.9px;top:728.14px;" width="58.2" height="54.32" viewBox="0 0 60 56"><rect x="6" y="6.5" width="48" height="43" rx="1.5" fill="none" stroke="#1888e2" stroke-width="2.2"/><rect x="6" y="45.5" width="48" height="4" fill="#1888e2"/><rect x="11" y="11.5" width="19" height="7" fill="#1888e2"/><rect x="11.0" y="22.5" width="3.9" height="3.9" fill="#1888e2"/><rect x="16.1" y="22.5" width="3.9" height="3.9" fill="#1888e2"/><rect x="21.2" y="22.5" width="3.9" height="3.9" fill="#1888e2"/><rect x="26.299999999999997" y="22.5" width="3.9" height="3.9" fill="#1888e2"/><rect x="11.0" y="27.8" width="3.9" height="3.9" fill="#1888e2"/><rect x="16.1" y="27.8" width="3.9" height="3.9" fill="#1888e2"/><rect x="21.2" y="27.8" width="3.9" height="3.9" fill="#1888e2"/><rect x="26.299999999999997" y="27.8" width="3.9" height="3.9" fill="#1888e2"/><rect x="11.0" y="33.1" width="3.9" height="3.9" fill="#1888e2"/><rect x="16.1" y="33.1" width="3.9" height="3.9" fill="#1888e2"/><rect x="21.2" y="33.1" width="3.9" height="3.9" fill="#1888e2"/><rect x="26.299999999999997" y="33.1" width="3.9" height="3.9" fill="#1888e2"/><rect x="11.0" y="38.4" width="3.9" height="3.9" fill="#1888e2"/><rect x="16.1" y="38.4" width="3.9" height="3.9" fill="#1888e2"/><rect x="21.2" y="38.4" width="3.9" height="3.9" fill="#1888e2"/><rect x="26.299999999999997" y="38.4" width="3.9" height="3.9" fill="#1888e2"/><rect x="35" y="12.5" width="3.8" height="1.8" fill="#1888e2"/><rect x="40.4" y="12.5" width="3.8" height="1.8" fill="#1888e2"/><rect x="45.8" y="12.5" width="3.8" height="1.8" fill="#1888e2"/><rect x="35" y="17" width="3.8" height="1.8" fill="#1888e2"/><rect x="40.4" y="17" width="3.8" height="1.8" fill="#1888e2"/><rect x="45.8" y="17" width="3.8" height="1.8" fill="#1888e2"/><rect x="35" y="35.5" width="3.8" height="1.8" fill="#1888e2"/><rect x="40.4" y="35.5" width="3.8" height="1.8" fill="#1888e2"/><rect x="45.8" y="35.5" width="3.8" height="1.8" fill="#1888e2"/><rect x="35" y="40" width="3.8" height="1.8" fill="#1888e2"/><rect x="40.4" y="40" width="3.8" height="1.8" fill="#1888e2"/><rect x="45.8" y="40" width="3.8" height="1.8" fill="#1888e2"/><circle cx="42.5" cy="26.5" r="3.8" fill="#1888e2"/></svg>
<div style="left:658.5px;top:736.4px;width:81.5px;height:35px;background:#676673;border-radius:7px;"></div>
<div style="left:698.3px;top:736.4px;width:1.3px;height:35px;background:#4c4b57;"></div>
<div style="left:659px;top:736.74px;width:40px;height:36px;line-height:36px;font-size:28px;color:#fff;text-align:center;white-space:nowrap;">M</div>
<div style="left:699.5px;top:736.74px;width:40px;height:36px;line-height:36px;font-size:28px;color:#fff;text-align:center;white-space:nowrap;">S</div>
<div style="left:752.5px;top:736.4px;width:41px;height:35px;background:#676673;border-radius:7px;"></div>
<div style="left:753px;top:736.74px;width:40px;height:36px;line-height:36px;font-size:28px;color:#fff;text-align:center;white-space:nowrap;">R</div>
<div style="left:850px;top:739.02px;width:600px;height:34px;line-height:34px;font-size:26.5px;color:#e6e7ec;text-align:left;white-space:nowrap;letter-spacing:0.1px;-webkit-text-stroke:.3px #e6e7ec;">Mo...nes</div>
<div style="left:970.3px;top:744.6px;width:17.5px;height:17.5px;background:#4cd964;border-radius:50%;"></div>
<div style="left:1010.5px;top:261.7px;width:669.5px;height:528.3px;background:#262626;"></div>
<div style="left:1667.5px;top:262.3px;width:11px;height:69px;background:#2f2f2f;border-radius:10px 0 0 10px;"></div>
<div style="left:1011.8px;top:262.3px;width:76px;height:69px;background:#2f2f2f;border-radius:10px;"></div>
<div style="left:1093.85px;top:262.3px;width:76px;height:69px;background:#2f2f2f;border-radius:10px;"></div>
<div style="left:1175.9px;top:262.3px;width:76px;height:69px;background:#2f2f2f;border-radius:10px;"></div>
<div style="left:1257.95px;top:262.3px;width:76px;height:69px;background:#2f2f2f;border-radius:10px;"></div>
<div style="left:1340px;top:262.3px;width:76px;height:69px;background:#2f2f2f;border-radius:10px;"></div>
<div style="left:1422.05px;top:262.3px;width:76px;height:69px;background:#2f2f2f;border-radius:10px;"></div>
<div style="left:1505.6px;top:263.8px;width:72.5px;height:66px;background:#cd1212;border-radius:9px;box-shadow:0 0 0 2px #0a0a0a;"></div>
<div style="left:1511.6px;top:265.07px;width:600px;height:29px;line-height:29px;font-size:22.5px;color:#fff;text-align:left;white-space:nowrap;letter-spacing:0.2px;-webkit-text-stroke:.3px #fff;">Ni...n</div>
<div style="left:1586.15px;top:262.3px;width:76px;height:69px;background:#2f2f2f;border-radius:10px;"></div>
<div style="left:1667.5px;top:338.3px;width:11px;height:69px;background:#2f2f2f;border-radius:10px 0 0 10px;"></div>
<div style="left:1013.3px;top:339.8px;width:72.5px;height:66px;background:#1d97d1;border-radius:9px;box-shadow:0 0 0 2px #0a0a0a;"></div>
<div style="left:1019.3px;top:341.07px;width:600px;height:29px;line-height:29px;font-size:22.5px;color:#fff;text-align:left;white-space:nowrap;letter-spacing:0.2px;-webkit-text-stroke:.3px #fff;">L...e</div>
<div style="left:1093.85px;top:338.3px;width:76px;height:69px;background:#2f2f2f;border-radius:10px;"></div>
<div style="left:1177.4px;top:339.8px;width:72.5px;height:66px;background:#cd1212;border-radius:9px;box-shadow:0 0 0 2px #0a0a0a;"></div>
<div style="left:1183.4px;top:341.07px;width:600px;height:29px;line-height:29px;font-size:22.5px;color:#fff;text-align:left;white-space:nowrap;letter-spacing:0.2px;-webkit-text-stroke:.3px #fff;">L...e</div>
<div style="left:1257.95px;top:338.3px;width:76px;height:69px;background:#2f2f2f;border-radius:10px;"></div>
<div style="left:1340px;top:338.3px;width:76px;height:69px;background:#2f2f2f;border-radius:10px;"></div>
<div style="left:1422.05px;top:338.3px;width:76px;height:69px;background:#2f2f2f;border-radius:10px;"></div>
<div style="left:1504.1px;top:338.3px;width:76px;height:69px;background:#2f2f2f;border-radius:10px;"></div>
<div style="left:1586.15px;top:338.3px;width:76px;height:69px;background:#2f2f2f;border-radius:10px;"></div>
<div style="left:1667.5px;top:414.3px;width:11px;height:69px;background:#2f2f2f;border-radius:10px 0 0 10px;"></div>
<div style="left:1011.8px;top:414.3px;width:76px;height:69px;background:#2f2f2f;border-radius:10px;"></div>
<div style="left:1093.85px;top:414.3px;width:76px;height:69px;background:#2f2f2f;border-radius:10px;"></div>
<div style="left:1175.9px;top:414.3px;width:76px;height:69px;background:#2f2f2f;border-radius:10px;"></div>
<div style="left:1257.95px;top:414.3px;width:76px;height:69px;background:#2f2f2f;border-radius:10px;"></div>
<div style="left:1340px;top:414.3px;width:76px;height:69px;background:#2f2f2f;border-radius:10px;"></div>
<div style="left:1422.05px;top:414.3px;width:76px;height:69px;background:#2f2f2f;border-radius:10px;"></div>
<div style="left:1504.1px;top:414.3px;width:76px;height:69px;background:#2f2f2f;border-radius:10px;"></div>
<div style="left:1586.15px;top:414.3px;width:76px;height:69px;background:#2f2f2f;border-radius:10px;"></div>
<div style="left:1667.5px;top:490.3px;width:11px;height:69px;background:#3b3b3b;border-radius:10px 0 0 10px;"></div>
<div style="left:1011.8px;top:490.3px;width:76px;height:69px;background:#3b3b3b;border-radius:10px;"></div>
<div style="left:1093.85px;top:490.3px;width:76px;height:69px;background:#3b3b3b;border-radius:10px;"></div>
<div style="left:1175.9px;top:490.3px;width:76px;height:69px;background:#3b3b3b;border-radius:10px;"></div>
<div style="left:1257.95px;top:490.3px;width:76px;height:69px;background:#3b3b3b;border-radius:10px;"></div>
<div style="left:1340px;top:490.3px;width:76px;height:69px;background:#3b3b3b;border-radius:10px;"></div>
<div style="left:1422.05px;top:490.3px;width:76px;height:69px;background:#3b3b3b;border-radius:10px;"></div>
<div style="left:1504.1px;top:490.3px;width:76px;height:69px;background:#3b3b3b;border-radius:10px;"></div>
<div style="left:1586.15px;top:490.3px;width:76px;height:69px;background:#3b3b3b;border-radius:10px;"></div>
<div style="left:1667.5px;top:566.3px;width:11px;height:69px;background:#2f2f2f;border-radius:10px 0 0 10px;"></div>
<div style="left:1011.8px;top:566.3px;width:76px;height:69px;background:#2f2f2f;border-radius:10px;"></div>
<div style="left:1093.85px;top:566.3px;width:76px;height:69px;background:#2f2f2f;border-radius:10px;"></div>
<div style="left:1175.9px;top:566.3px;width:76px;height:69px;background:#2f2f2f;border-radius:10px;"></div>
<div style="left:1257.95px;top:566.3px;width:76px;height:69px;background:#2f2f2f;border-radius:10px;"></div>
<div style="left:1340px;top:566.3px;width:76px;height:69px;background:#2f2f2f;border-radius:10px;"></div>
<div style="left:1423.55px;top:567.8px;width:72.5px;height:66px;background:#cd1212;border-radius:9px;box-shadow:0 0 0 2px #0a0a0a;"></div>
<div style="left:1429.55px;top:569.07px;width:600px;height:29px;line-height:29px;font-size:22.5px;color:#fff;text-align:left;white-space:nowrap;letter-spacing:0.2px;-webkit-text-stroke:.3px #fff;">O...ss</div>
<div style="left:1505.6px;top:567.8px;width:72.5px;height:66px;background:#cd1212;border-radius:9px;box-shadow:0 0 0 2px #0a0a0a;"></div>
<div style="left:1511.6px;top:569.07px;width:600px;height:29px;line-height:29px;font-size:22.5px;color:#fff;text-align:left;white-space:nowrap;letter-spacing:0.2px;-webkit-text-stroke:.3px #fff;">O...ss</div>
<div style="left:1586.15px;top:566.3px;width:76px;height:69px;background:#2f2f2f;border-radius:10px;"></div>
<div style="left:1667.5px;top:642.3px;width:11px;height:56.7px;background:#2f2f2f;border-radius:10px 0 0 0;"></div>
<div style="left:1011.8px;top:642.3px;width:76px;height:56.7px;background:#2f2f2f;border-radius:10px 10px 0 0;"></div>
<div style="left:1093.85px;top:642.3px;width:76px;height:56.7px;background:#2f2f2f;border-radius:10px 10px 0 0;"></div>
<div style="left:1175.9px;top:642.3px;width:76px;height:56.7px;background:#2f2f2f;border-radius:10px 10px 0 0;"></div>
<div style="left:1257.95px;top:642.3px;width:76px;height:56.7px;background:#2f2f2f;border-radius:10px 10px 0 0;"></div>
<div style="left:1340px;top:642.3px;width:76px;height:56.7px;background:#2f2f2f;border-radius:10px 10px 0 0;"></div>
<div style="left:1422.05px;top:642.3px;width:76px;height:56.7px;background:#2f2f2f;border-radius:10px 10px 0 0;"></div>
<div style="left:1504.1px;top:642.3px;width:76px;height:56.7px;background:#2f2f2f;border-radius:10px 10px 0 0;"></div>
<div style="left:1586.15px;top:642.3px;width:76px;height:56.7px;background:#2f2f2f;border-radius:10px 10px 0 0;"></div>
<div style="left:1664.6px;top:261.7px;width:3px;height:437px;background:#1f1f1f;"></div>
<div style="left:1010.5px;top:699.5px;width:654.3px;height:90.5px;background:#383838;"></div>
<div style="left:1010.5px;top:698.5px;width:654.3px;height:1.5px;background:#1c1c1c;"></div>
<svg style="left:1031.7px;top:719px;" width="36" height="17" viewBox="0 0 36 17"><path d="M1 16L18 1.5L35 16L18 7.5Z" fill="#dcdcdc"/></svg>
<div style="left:1010.2px;top:752px;width:80px;height:36px;overflow:hidden;white-space:nowrap;font-size:22.5px;line-height:36px;color:#d0d0d0;text-align:center;letter-spacing:.35px;">Intro</div>
<div style="left:1090.2px;top:700px;width:1.5px;height:90px;background:#2b2b2b;"></div>
<svg style="left:1113.7px;top:719px;" width="36" height="17" viewBox="0 0 36 17"><path d="M1 16L18 1.5L35 16L18 7.5Z" fill="#dcdcdc"/></svg>
<div style="left:1092.2px;top:752px;width:80px;height:36px;overflow:hidden;white-space:nowrap;font-size:22.5px;line-height:36px;color:#d0d0d0;text-align:center;letter-spacing:.35px;">Verse 1</div>
<div style="left:1173.7px;top:700px;width:80px;height:54px;background:#616161;"></div>
<div style="left:1172.2px;top:700px;width:1.5px;height:90px;background:#2b2b2b;"></div>
<svg style="left:1195.7px;top:719px;" width="36" height="17" viewBox="0 0 36 17"><path d="M1 16L18 1.5L35 16L18 7.5Z" fill="#dcdcdc"/></svg>
<div style="left:1174.2px;top:752px;width:80px;height:36px;overflow:hidden;white-space:nowrap;font-size:22.5px;line-height:36px;color:#d0d0d0;text-align:center;letter-spacing:.35px;">Chorus</div>
<div style="left:1254.2px;top:700px;width:1.5px;height:90px;background:#2b2b2b;"></div>
<svg style="left:1277.7px;top:719px;" width="36" height="17" viewBox="0 0 36 17"><path d="M1 16L18 1.5L35 16L18 7.5Z" fill="#dcdcdc"/></svg>
<div style="left:1256.2px;top:752px;width:80px;height:36px;overflow:hidden;white-space:nowrap;font-size:22.5px;line-height:36px;color:#d0d0d0;text-align:center;letter-spacing:.35px;">Verse 2</div>
<div style="left:1336.2px;top:700px;width:1.5px;height:90px;background:#2b2b2b;"></div>
<svg style="left:1359.7px;top:719px;" width="36" height="17" viewBox="0 0 36 17"><path d="M1 16L18 1.5L35 16L18 7.5Z" fill="#dcdcdc"/></svg>
<div style="left:1338.2px;top:752px;width:80px;height:36px;overflow:hidden;white-space:nowrap;font-size:22.5px;line-height:36px;color:#d0d0d0;text-align:center;letter-spacing:.35px;">Chorus</div>
<div style="left:1418.2px;top:700px;width:1.5px;height:90px;background:#2b2b2b;"></div>
<svg style="left:1441.7px;top:719px;" width="36" height="17" viewBox="0 0 36 17"><path d="M1 16L18 1.5L35 16L18 7.5Z" fill="#dcdcdc"/></svg>
<div style="left:1420.2px;top:752px;width:80px;height:36px;overflow:hidden;white-space:nowrap;font-size:22.5px;line-height:36px;color:#d0d0d0;text-align:left;letter-spacing:.35px;">Breakdown</div>
<div style="left:1500.2px;top:700px;width:1.5px;height:90px;background:#2b2b2b;"></div>
<svg style="left:1523.7px;top:719px;" width="36" height="17" viewBox="0 0 36 17"><path d="M1 16L18 1.5L35 16L18 7.5Z" fill="#dcdcdc"/></svg>
<div style="left:1502.2px;top:752px;width:80px;height:36px;overflow:hidden;white-space:nowrap;font-size:22.5px;line-height:36px;color:#d0d0d0;text-align:center;letter-spacing:.35px;">Outtro</div>
<div style="left:1582.2px;top:700px;width:1.5px;height:90px;background:#2b2b2b;"></div>
<svg style="left:1605.7px;top:719px;" width="36" height="17" viewBox="0 0 36 17"><path d="M1 16L18 1.5L35 16L18 7.5Z" fill="#dcdcdc"/></svg>
<div style="left:1584.2px;top:752px;width:80px;height:36px;overflow:hidden;white-space:nowrap;font-size:22.5px;line-height:36px;color:#d0d0d0;text-align:center;letter-spacing:.35px;">8</div>
<div style="left:1678px;top:190px;width:2.3px;height:600px;background:#0a0a0a;"></div>
<div style="left:1680px;top:190px;width:42.5px;height:600px;background:#696969;"></div>
<div style="left:1680px;top:190px;width:42.5px;height:70px;background:#585858;"></div>
<div style="left:1680px;top:259.7px;width:42.5px;height:1.8px;background:#222e4c;"></div>
<div style="left:1680px;top:333.4px;width:42.5px;height:1.5px;background:#555;"></div>
<div style="left:1680px;top:409.4px;width:42.5px;height:1.5px;background:#555;"></div>
<div style="left:1680px;top:485.4px;width:42.5px;height:1.5px;background:#555;"></div>
<div style="left:1680px;top:487.4px;width:42.5px;height:75px;background:#8a8a8a;"></div>
<div style="left:1680px;top:561.4px;width:42.5px;height:1.5px;background:#555;"></div>
<div style="left:1680px;top:637.4px;width:42.5px;height:1.5px;background:#555;"></div>
<div style="left:1680px;top:713.4px;width:42.5px;height:1.5px;background:#555;"></div>
<div style="left:1680px;top:699.5px;width:42.5px;height:90.5px;background:#595959;"></div>
<div style="left:1680px;top:698px;width:42.5px;height:2px;background:#1c1c1c;"></div>
<svg style="left:1687.5px;top:214px;" width="29" height="21" viewBox="0 0 29 21"><path d="M9.5 1.5V19.5L1.5 10.5Z" fill="none" stroke="#d8d8d8" stroke-width="1.8" stroke-linejoin="round"/><path d="M16 0.5V20.5L28.5 10.5Z" fill="#d8d8d8"/></svg>
<div style="left:1690px;top:733px;width:24px;height:24px;background:#d9d9d9;border-radius:2.5px;"></div>
<div style="left:466px;top:788.3px;width:1256px;height:2px;background:#000;"></div>
<div style="left:464px;top:790.3px;width:1258px;height:3.5px;background:#242f4b;"></div>
<div style="left:464.5px;top:770px;width:12px;height:20.3px;border-left:2px solid #000;border-bottom:2px solid #000;border-radius:0 0 0 9px;"></div>
<div style="left:1720.3px;top:185px;width:1159.2px;height:608px;background:#7ab8f7;border-radius:10px;"></div>
<div style="left:1724px;top:187.2px;width:1153.5px;height:602.9px;background:#0a0d14;border-radius:8px;"></div>
<div style="left:1725.3px;top:188.5px;width:1150.9px;height:36px;background:repeating-linear-gradient(135deg,#2a3451 0,#2a3451 7px,#262f4b 7px,#262f4b 13px);border-radius:7px 7px 0 0;"></div>
<div style="left:2004px;top:188.5px;width:352px;height:35px;background:#83a4b3;"></div>
<div style="left:1725.3px;top:224px;width:1150.9px;height:38px;background:#2b4569;"></div>
<div style="left:1725.3px;top:222.8px;width:1150.9px;height:2.2px;background:#192338;"></div>
<div style="left:1725.3px;top:225px;width:270.2px;height:37px;background:#2b4569;"></div>
<div style="left:1995.5px;top:225px;width:359.5px;height:37px;background:#2a3f60;"></div>
<div style="left:2355px;top:225px;width:344px;height:37px;background:#2b4569;"></div>
<div style="left:2699px;top:225px;width:177.2px;height:37px;background:#2b4569;"></div>
<div style="left:1725.3px;top:188.5px;width:1150.9px;height:74px;"><div style="left:3.7px;top:36px;width:1.2px;height:37px;background:rgba(20,30,55,.1)"></div><div style="left:23.3px;top:36px;width:1.2px;height:37px;background:rgba(20,30,55,.1)"></div><div style="left:42.9px;top:36px;width:1.2px;height:37px;background:rgba(20,30,55,.1)"></div><div style="left:62.5px;top:36px;width:1.2px;height:37px;background:rgba(20,30,55,.1)"></div><div style="left:82.1px;top:36px;width:1.2px;height:37px;background:rgba(20,30,55,.1)"></div><div style="left:101.7px;top:36px;width:1.2px;height:37px;background:rgba(20,30,55,.1)"></div><div style="left:121.3px;top:36px;width:1.2px;height:37px;background:rgba(20,30,55,.1)"></div><div style="left:140.9px;top:36px;width:1.2px;height:37px;background:rgba(20,30,55,.1)"></div><div style="left:160.5px;top:36px;width:1.2px;height:37px;background:rgba(20,30,55,.1)"></div><div style="left:180.1px;top:36px;width:1.2px;height:37px;background:rgba(20,30,55,.1)"></div><div style="left:199.7px;top:36px;width:1.2px;height:37px;background:rgba(20,30,55,.1)"></div><div style="left:219.3px;top:36px;width:1.2px;height:37px;background:rgba(20,30,55,.1)"></div><div style="left:238.9px;top:36px;width:1.2px;height:37px;background:rgba(20,30,55,.1)"></div><div style="left:258.5px;top:36px;width:1.2px;height:37px;background:rgba(20,30,55,.1)"></div><div style="left:278.1px;top:36px;width:1.2px;height:37px;background:rgba(20,30,55,.1)"></div><div style="left:297.7px;top:36px;width:1.2px;height:37px;background:rgba(20,30,55,.1)"></div><div style="left:317.3px;top:36px;width:1.2px;height:37px;background:rgba(20,30,55,.1)"></div><div style="left:336.9px;top:36px;width:1.2px;height:37px;background:rgba(20,30,55,.1)"></div><div style="left:356.5px;top:36px;width:1.2px;height:37px;background:rgba(20,30,55,.1)"></div><div style="left:376.1px;top:36px;width:1.2px;height:37px;background:rgba(20,30,55,.1)"></div><div style="left:395.7px;top:36px;width:1.2px;height:37px;background:rgba(20,30,55,.1)"></div><div style="left:415.3px;top:36px;width:1.2px;height:37px;background:rgba(20,30,55,.1)"></div><div style="left:434.9px;top:36px;width:1.2px;height:37px;background:rgba(20,30,55,.1)"></div><div style="left:454.5px;top:36px;width:1.2px;height:37px;background:rgba(20,30,55,.1)"></div><div style="left:474.1px;top:36px;width:1.2px;height:37px;background:rgba(20,30,55,.1)"></div><div style="left:493.7px;top:36px;width:1.2px;height:37px;background:rgba(20,30,55,.1)"></div><div style="left:513.3px;top:36px;width:1.2px;height:37px;background:rgba(20,30,55,.1)"></div><div style="left:532.9px;top:36px;width:1.2px;height:37px;background:rgba(20,30,55,.1)"></div><div style="left:552.5px;top:36px;width:1.2px;height:37px;background:rgba(20,30,55,.1)"></div><div style="left:572.1px;top:36px;width:1.2px;height:37px;background:rgba(20,30,55,.1)"></div><div style="left:591.7px;top:36px;width:1.2px;height:37px;background:rgba(20,30,55,.1)"></div><div style="left:611.3px;top:36px;width:1.2px;height:37px;background:rgba(20,30,55,.1)"></div><div style="left:630.9px;top:36px;width:1.2px;height:37px;background:rgba(20,30,55,.1)"></div><div style="left:650.5px;top:36px;width:1.2px;height:37px;background:rgba(20,30,55,.1)"></div><div style="left:670.1px;top:36px;width:1.2px;height:37px;background:rgba(20,30,55,.1)"></div><div style="left:689.7px;top:36px;width:1.2px;height:37px;background:rgba(20,30,55,.1)"></div><div style="left:709.3px;top:36px;width:1.2px;height:37px;background:rgba(20,30,55,.1)"></div><div style="left:728.9px;top:36px;width:1.2px;height:37px;background:rgba(20,30,55,.1)"></div><div style="left:748.5px;top:36px;width:1.2px;height:37px;background:rgba(20,30,55,.1)"></div><div style="left:768.1px;top:36px;width:1.2px;height:37px;background:rgba(20,30,55,.1)"></div><div style="left:787.7px;top:36px;width:1.2px;height:37px;background:rgba(20,30,55,.1)"></div><div style="left:807.3px;top:36px;width:1.2px;height:37px;background:rgba(20,30,55,.1)"></div><div style="left:826.9px;top:36px;width:1.2px;height:37px;background:rgba(20,30,55,.1)"></div><div style="left:846.5px;top:36px;width:1.2px;height:37px;background:rgba(20,30,55,.1)"></div><div style="left:866.1px;top:36px;width:1.2px;height:37px;background:rgba(20,30,55,.1)"></div><div style="left:885.7px;top:36px;width:1.2px;height:37px;background:rgba(20,30,55,.1)"></div><div style="left:905.3px;top:36px;width:1.2px;height:37px;background:rgba(20,30,55,.1)"></div><div style="left:924.9px;top:36px;width:1.2px;height:37px;background:rgba(20,30,55,.1)"></div><div style="left:944.5px;top:36px;width:1.2px;height:37px;background:rgba(20,30,55,.1)"></div><div style="left:964.1px;top:36px;width:1.2px;height:37px;background:rgba(20,30,55,.1)"></div><div style="left:983.7px;top:36px;width:1.2px;height:37px;background:rgba(20,30,55,.1)"></div><div style="left:1003.3px;top:36px;width:1.2px;height:37px;background:rgba(20,30,55,.1)"></div><div style="left:1022.9px;top:36px;width:1.2px;height:37px;background:rgba(20,30,55,.1)"></div><div style="left:1042.5px;top:36px;width:1.2px;height:37px;background:rgba(20,30,55,.1)"></div><div style="left:1062.1px;top:36px;width:1.2px;height:37px;background:rgba(20,30,55,.1)"></div><div style="left:1081.7px;top:36px;width:1.2px;height:37px;background:rgba(20,30,55,.1)"></div><div style="left:1101.3px;top:36px;width:1.2px;height:37px;background:rgba(20,30,55,.1)"></div><div style="left:1120.9px;top:36px;width:1.2px;height:37px;background:rgba(20,30,55,.1)"></div><div style="left:1140.5px;top:36px;width:1.2px;height:37px;background:rgba(20,30,55,.1)"></div></div>
<div style="left:1994.5px;top:225px;width:2px;height:37px;background:#1b2742;"></div>
<svg style="left:1995.5px;top:224px;" width="22" height="12" viewBox="0 0 22 12"><path d="M0 11.5L21 0.5H0Z" fill="#273552"/><path d="M0 11.5L21 0.5" stroke="#1b2742" stroke-width="1.6"/></svg>
<div style="left:2354px;top:225px;width:2px;height:37px;background:#1b2742;"></div>
<svg style="left:2355px;top:224px;" width="22" height="12" viewBox="0 0 22 12"><path d="M0 11.5L21 0.5H0Z" fill="#273552"/><path d="M0 11.5L21 0.5" stroke="#1b2742" stroke-width="1.6"/></svg>
<div style="left:2698px;top:225px;width:2px;height:37px;background:#1b2742;"></div>
<svg style="left:2699px;top:224px;" width="22" height="12" viewBox="0 0 22 12"><path d="M0 11.5L21 0.5H0Z" fill="#273552"/><path d="M0 11.5L21 0.5" stroke="#1b2742" stroke-width="1.6"/></svg>
<div style="left:1725.5px;top:227.78px;width:600px;height:30px;line-height:30px;font-size:23px;color:#e6f0ff;text-align:left;white-space:nowrap;font-weight:700;">se 2</div>
<div style="left:2031px;top:227.78px;width:600px;height:30px;line-height:30px;font-size:23px;color:#e6f0ff;text-align:left;white-space:nowrap;font-weight:700;">Chorus 2</div>
<div style="left:2390px;top:227.78px;width:600px;height:30px;line-height:30px;font-size:23px;color:#e6f0ff;text-align:left;white-space:nowrap;font-weight:700;">Breakdown</div>
<div style="left:2734.5px;top:227.78px;width:600px;height:30px;line-height:30px;font-size:23px;color:#e6f0ff;text-align:left;white-space:nowrap;font-weight:700;">Outro</div>
<div style="left:1725.3px;top:189px;width:40px;height:34px;overflow:hidden;"><div style="left:-8.4px;top:-2.7px;line-height:36px;font-size:26.3px;color:#aeb1bd;letter-spacing:.15px;white-space:nowrap">49</div></div>
<div style="left:1865.2px;top:198px;width:1.5px;height:26px;background:#343f5d;"></div>
<div style="left:1873.7px;top:187.82px;width:600px;height:34px;line-height:34px;font-size:26.3px;color:#aeb1bd;text-align:left;white-space:nowrap;letter-spacing:0.15px;">57</div>
<div style="left:2022px;top:195px;width:2px;height:29px;background:#10131c;"></div>
<div style="left:2030.5px;top:187.82px;width:600px;height:34px;line-height:34px;font-size:26.3px;color:#f4f6f8;text-align:left;white-space:nowrap;letter-spacing:0.15px;">65</div>
<div style="left:2178.8px;top:195px;width:2px;height:29px;background:#10131c;"></div>
<div style="left:2187.3px;top:187.82px;width:600px;height:34px;line-height:34px;font-size:26.3px;color:#f4f6f8;text-align:left;white-space:nowrap;letter-spacing:0.15px;">73</div>
<div style="left:2335.6px;top:195px;width:2px;height:29px;background:#10131c;"></div>
<div style="left:2344.1px;top:187.82px;width:600px;height:34px;line-height:34px;font-size:26.3px;color:#aeb1bd;text-align:left;white-space:nowrap;letter-spacing:0.15px;">81</div>
<div style="left:2344.1px;top:189px;width:11.9px;height:34px;overflow:hidden;"><div style="left:0;top:-2.7px;line-height:36px;font-size:26.3px;color:#f4f6f8;letter-spacing:.15px;white-space:nowrap">81</div></div>
<div style="left:2492.4px;top:198px;width:1.5px;height:26px;background:#343f5d;"></div>
<div style="left:2500.9px;top:187.82px;width:600px;height:34px;line-height:34px;font-size:26.3px;color:#aeb1bd;text-align:left;white-space:nowrap;letter-spacing:0.15px;">89</div>
<div style="left:2649.2px;top:198px;width:1.5px;height:26px;background:#343f5d;"></div>
<div style="left:2657.7px;top:187.82px;width:600px;height:34px;line-height:34px;font-size:26.3px;color:#aeb1bd;text-align:left;white-space:nowrap;letter-spacing:0.15px;">97</div>
<div style="left:2806px;top:198px;width:1.5px;height:26px;background:#343f5d;"></div>
<div style="left:2814.5px;top:187.82px;width:600px;height:34px;line-height:34px;font-size:26.3px;color:#aeb1bd;text-align:left;white-space:nowrap;letter-spacing:0.15px;">105</div>
<div style="left:1725.3px;top:261.5px;width:1150.9px;height:527.3px;background:#242424;border-radius:0 0 7px 7px;"></div>
<div style="left:1725.3px;top:262px;width:1150.9px;height:526.8px;border-radius:0 0 7px 7px;overflow:hidden;"><div style="left:3.7px;top:0;width:1.5px;height:526.8px;background:#383838"></div><div style="left:23.3px;top:0;width:1.5px;height:526.8px;background:#383838"></div><div style="left:42.9px;top:0;width:1.5px;height:526.8px;background:#383838"></div><div style="left:62.5px;top:0;width:1.5px;height:526.8px;background:#3e3e3e"></div><div style="left:82.1px;top:0;width:1.5px;height:526.8px;background:#383838"></div><div style="left:101.7px;top:0;width:1.5px;height:526.8px;background:#383838"></div><div style="left:121.3px;top:0;width:1.5px;height:526.8px;background:#383838"></div><div style="left:140.9px;top:0;width:1.5px;height:526.8px;background:#3e3e3e"></div><div style="left:160.5px;top:0;width:1.5px;height:526.8px;background:#383838"></div><div style="left:180.1px;top:0;width:1.5px;height:526.8px;background:#383838"></div><div style="left:199.7px;top:0;width:1.5px;height:526.8px;background:#383838"></div><div style="left:219.3px;top:0;width:1.5px;height:526.8px;background:#3e3e3e"></div><div style="left:238.9px;top:0;width:1.5px;height:526.8px;background:#383838"></div><div style="left:258.5px;top:0;width:1.5px;height:526.8px;background:#383838"></div><div style="left:278.1px;top:0;width:1.5px;height:526.8px;background:#383838"></div><div style="left:297.7px;top:0;width:1.5px;height:526.8px;background:#3e3e3e"></div><div style="left:317.3px;top:0;width:1.5px;height:526.8px;background:#383838"></div><div style="left:336.9px;top:0;width:1.5px;height:526.8px;background:#383838"></div><div style="left:356.5px;top:0;width:1.5px;height:526.8px;background:#383838"></div><div style="left:376.1px;top:0;width:1.5px;height:526.8px;background:#3e3e3e"></div><div style="left:395.7px;top:0;width:1.5px;height:526.8px;background:#383838"></div><div style="left:415.3px;top:0;width:1.5px;height:526.8px;background:#383838"></div><div style="left:434.9px;top:0;width:1.5px;height:526.8px;background:#383838"></div><div style="left:454.5px;top:0;width:1.5px;height:526.8px;background:#3e3e3e"></div><div style="left:474.1px;top:0;width:1.5px;height:526.8px;background:#383838"></div><div style="left:493.7px;top:0;width:1.5px;height:526.8px;background:#383838"></div><div style="left:513.3px;top:0;width:1.5px;height:526.8px;background:#383838"></div><div style="left:532.9px;top:0;width:1.5px;height:526.8px;background:#3e3e3e"></div><div style="left:552.5px;top:0;width:1.5px;height:526.8px;background:#383838"></div><div style="left:572.1px;top:0;width:1.5px;height:526.8px;background:#383838"></div><div style="left:591.7px;top:0;width:1.5px;height:526.8px;background:#383838"></div><div style="left:611.3px;top:0;width:1.5px;height:526.8px;background:#3e3e3e"></div><div style="left:630.9px;top:0;width:1.5px;height:526.8px;background:#383838"></div><div style="left:650.5px;top:0;width:1.5px;height:526.8px;background:#383838"></div><div style="left:670.1px;top:0;width:1.5px;height:526.8px;background:#383838"></div><div style="left:689.7px;top:0;width:1.5px;height:526.8px;background:#3e3e3e"></div><div style="left:709.3px;top:0;width:1.5px;height:526.8px;background:#383838"></div><div style="left:728.9px;top:0;width:1.5px;height:526.8px;background:#383838"></div><div style="left:748.5px;top:0;width:1.5px;height:526.8px;background:#383838"></div><div style="left:768.1px;top:0;width:1.5px;height:526.8px;background:#3e3e3e"></div><div style="left:787.7px;top:0;width:1.5px;height:526.8px;background:#383838"></div><div style="left:807.3px;top:0;width:1.5px;height:526.8px;background:#383838"></div><div style="left:826.9px;top:0;width:1.5px;height:526.8px;background:#383838"></div><div style="left:846.5px;top:0;width:1.5px;height:526.8px;background:#3e3e3e"></div><div style="left:866.1px;top:0;width:1.5px;height:526.8px;background:#383838"></div><div style="left:885.7px;top:0;width:1.5px;height:526.8px;background:#383838"></div><div style="left:905.3px;top:0;width:1.5px;height:526.8px;background:#383838"></div><div style="left:924.9px;top:0;width:1.5px;height:526.8px;background:#3e3e3e"></div><div style="left:944.5px;top:0;width:1.5px;height:526.8px;background:#383838"></div><div style="left:964.1px;top:0;width:1.5px;height:526.8px;background:#383838"></div><div style="left:983.7px;top:0;width:1.5px;height:526.8px;background:#383838"></div><div style="left:1003.3px;top:0;width:1.5px;height:526.8px;background:#3e3e3e"></div><div style="left:1022.9px;top:0;width:1.5px;height:526.8px;background:#383838"></div><div style="left:1042.5px;top:0;width:1.5px;height:526.8px;background:#383838"></div><div style="left:1062.1px;top:0;width:1.5px;height:526.8px;background:#383838"></div><div style="left:1081.7px;top:0;width:1.5px;height:526.8px;background:#3e3e3e"></div><div style="left:1101.3px;top:0;width:1.5px;height:526.8px;background:#383838"></div><div style="left:1120.9px;top:0;width:1.5px;height:526.8px;background:#383838"></div><div style="left:1140.5px;top:0;width:1.5px;height:526.8px;background:#383838"></div><div style="left:0;top:72.3px;width:1150.9px;height:1.5px;background:#1d1d1d"></div><div style="left:0;top:148.3px;width:1150.9px;height:1.5px;background:#1d1d1d"></div><div style="left:0;top:224.3px;width:1150.9px;height:1.5px;background:#1d1d1d"></div><div style="left:0;top:300.3px;width:1150.9px;height:1.5px;background:#1d1d1d"></div><div style="left:0;top:376.3px;width:1150.9px;height:1.5px;background:#1d1d1d"></div><div style="left:0;top:452.3px;width:1150.9px;height:1.5px;background:#1d1d1d"></div></div>
<div style="left:2004px;top:262px;width:352px;height:70px;background:#3381d5;border-radius:7px;overflow:hidden;box-shadow:0 0 0 1.6px #0c0c0c;"><div style="left:0px;top:0;width:352px;height:70px"><div style="left:26px;top:45px;width:10px;height:4.5px;background:#cfe3fb"></div><div style="left:65.3px;top:47.5px;width:10px;height:4.5px;background:#cfe3fb"></div><div style="left:104.6px;top:45px;width:13px;height:4.5px;background:#cfe3fb"></div><div style="left:143.9px;top:47.5px;width:8px;height:4.5px;background:#cfe3fb"></div><div style="left:183.2px;top:45px;width:10px;height:4.5px;background:#cfe3fb"></div><div style="left:222.5px;top:48px;width:6px;height:4.5px;background:#cfe3fb"></div><div style="left:261.8px;top:45px;width:10px;height:4.5px;background:#cfe3fb"></div><div style="left:301.1px;top:47.5px;width:8px;height:4.5px;background:#cfe3fb"></div></div><div style="left:10px;top:3.5px;height:30px;line-height:30px;font-size:22.5px;color:#fff;white-space:nowrap;letter-spacing:.3px;-webkit-text-stroke:.3px #fff">Night of Avalon</div></div>
<div style="left:2358px;top:262px;width:351px;height:70px;background:#3381d5;border-radius:7px;overflow:hidden;box-shadow:0 0 0 1.6px #0c0c0c;"><div style="left:0px;top:0;width:351px;height:70px"><div style="left:26px;top:45px;width:10px;height:4.5px;background:#cfe3fb"></div><div style="left:65.3px;top:47.5px;width:10px;height:4.5px;background:#cfe3fb"></div><div style="left:104.6px;top:45px;width:13px;height:4.5px;background:#cfe3fb"></div><div style="left:143.9px;top:47.5px;width:8px;height:4.5px;background:#cfe3fb"></div><div style="left:183.2px;top:45px;width:10px;height:4.5px;background:#cfe3fb"></div><div style="left:222.5px;top:48px;width:6px;height:4.5px;background:#cfe3fb"></div><div style="left:261.8px;top:45px;width:10px;height:4.5px;background:#cfe3fb"></div><div style="left:301.1px;top:47.5px;width:8px;height:4.5px;background:#cfe3fb"></div></div><div style="left:10px;top:3.5px;height:30px;line-height:30px;font-size:22.5px;color:#fff;white-space:nowrap;letter-spacing:.3px;-webkit-text-stroke:.3px #fff">Night of Avalon</div></div>
<div style="left:2004px;top:338px;width:352px;height:70px;background:#1d97d0;border-radius:7px;overflow:hidden;box-shadow:0 0 0 1.6px #0c0c0c;"><div style="left:0px;top:0;width:352px;height:70px"><div style="left:0px;top:47.5px;width:15px;height:5px;background:#c5e8f8"></div><div style="left:36.2px;top:47.5px;width:15px;height:5px;background:#c5e8f8"></div><div style="left:75.4px;top:47.5px;width:15px;height:5px;background:#c5e8f8"></div><div style="left:114.6px;top:47.5px;width:15px;height:5px;background:#c5e8f8"></div><div style="left:153.8px;top:47.5px;width:15px;height:5px;background:#c5e8f8"></div><div style="left:193px;top:47.5px;width:15px;height:5px;background:#c5e8f8"></div><div style="left:232.2px;top:47.5px;width:15px;height:5px;background:#c5e8f8"></div><div style="left:271.4px;top:47.5px;width:15px;height:5px;background:#c5e8f8"></div><div style="left:310.6px;top:47.5px;width:15px;height:5px;background:#c5e8f8"></div></div><div style="left:10px;top:3.5px;height:30px;line-height:30px;font-size:22.5px;color:#fff;white-space:nowrap;letter-spacing:.3px;-webkit-text-stroke:.3px #fff">Lost Reverse</div></div>
<div style="left:2004px;top:414px;width:352px;height:70px;background:#00a5cc;border-radius:7px;overflow:hidden;box-shadow:0 0 0 1.6px #0c0c0c;"><div style="left:0px;top:0;width:352px;height:70px"><div style="left:0;top:47.8px;width:349px;height:5px;background:#b8f4fb"></div></div><div style="left:10px;top:3.5px;height:30px;line-height:30px;font-size:22.5px;color:#fff;white-space:nowrap;letter-spacing:.3px;-webkit-text-stroke:.3px #fff">String Vox</div></div>
<div style="left:2004px;top:490px;width:352px;height:70px;background:#00c9cd;border-radius:7px;overflow:hidden;box-shadow:0 0 0 1.6px #0c0c0c;"><div style="left:0px;top:0;width:352px;height:70px"><div style="left:0;top:47.8px;width:349px;height:5px;background:#b8f4fb"></div></div><div style="left:10px;top:3.5px;height:30px;line-height:30px;font-size:22.5px;color:#fff;white-space:nowrap;letter-spacing:.3px;-webkit-text-stroke:.3px #fff">Moonlight Ark</div></div>
<div style="left:1725.5px;top:566px;width:276.5px;height:70px;background:#00c9a8;border-radius:0 7px 7px 0;overflow:hidden;box-shadow:0 0 0 1.6px #0c0c0c;"><div style="left:-72.5px;top:0;width:349px;height:70px"><div style="left:0px;top:58.2px;width:7.6px;height:3.6px;background:#b9fff0"></div><div style="left:6px;top:55.3px;width:7.6px;height:3.6px;background:#b9fff0"></div><div style="left:12.7px;top:52.3px;width:24.6px;height:3.6px;background:#b9fff0"></div><div style="left:39.2px;top:58.2px;width:7.6px;height:3.6px;background:#b9fff0"></div><div style="left:45.2px;top:55.3px;width:7.6px;height:3.6px;background:#b9fff0"></div><div style="left:51.9px;top:52.3px;width:24.6px;height:3.6px;background:#b9fff0"></div><div style="left:79.9px;top:58.2px;width:6px;height:3.6px;background:#b9fff0"></div><div style="left:84.4px;top:55.3px;width:7.6px;height:3.6px;background:#b9fff0"></div><div style="left:91.1px;top:52.3px;width:24.6px;height:3.6px;background:#b9fff0"></div><div style="left:116px;top:46.4px;width:15.2px;height:3.6px;background:#b9fff0"></div><div style="left:130.5px;top:58.2px;width:22.5px;height:3.6px;background:#b9fff0"></div><div style="left:156.8px;top:58.2px;width:7.6px;height:3.6px;background:#b9fff0"></div><div style="left:162.8px;top:55.3px;width:7.6px;height:3.6px;background:#b9fff0"></div><div style="left:169.5px;top:52.3px;width:24.6px;height:3.6px;background:#b9fff0"></div><div style="left:196px;top:58.2px;width:7.6px;height:3.6px;background:#b9fff0"></div><div style="left:202px;top:55.3px;width:7.6px;height:3.6px;background:#b9fff0"></div><div style="left:208.7px;top:52.3px;width:24.6px;height:3.6px;background:#b9fff0"></div><div style="left:236.7px;top:58.2px;width:6px;height:3.6px;background:#b9fff0"></div><div style="left:241.2px;top:55.3px;width:7.6px;height:3.6px;background:#b9fff0"></div><div style="left:247.9px;top:52.3px;width:24.6px;height:3.6px;background:#b9fff0"></div><div style="left:272.8px;top:46.4px;width:15.2px;height:3.6px;background:#b9fff0"></div><div style="left:287.3px;top:58.2px;width:22.5px;height:3.6px;background:#b9fff0"></div><div style="left:312px;top:46.4px;width:16px;height:3.6px;background:#b9fff0"></div><div style="left:327px;top:42.5px;width:19.5px;height:3.6px;background:#b9fff0"></div></div><div style="left:-62.5px;top:3.5px;height:30px;line-height:30px;font-size:22.5px;color:#fff;white-space:nowrap;letter-spacing:.3px;-webkit-text-stroke:.3px #fff">Ocean Bass</div></div>
<div style="left:2004px;top:566px;width:352px;height:70px;background:#00c9a8;border-radius:7px;overflow:hidden;box-shadow:0 0 0 1.6px #0c0c0c;"><div style="left:0px;top:0;width:352px;height:70px"><div style="left:0px;top:58.2px;width:7.6px;height:3.6px;background:#b9fff0"></div><div style="left:6px;top:55.3px;width:7.6px;height:3.6px;background:#b9fff0"></div><div style="left:12.7px;top:52.3px;width:24.6px;height:3.6px;background:#b9fff0"></div><div style="left:39.2px;top:58.2px;width:7.6px;height:3.6px;background:#b9fff0"></div><div style="left:45.2px;top:55.3px;width:7.6px;height:3.6px;background:#b9fff0"></div><div style="left:51.9px;top:52.3px;width:24.6px;height:3.6px;background:#b9fff0"></div><div style="left:79.9px;top:58.2px;width:6px;height:3.6px;background:#b9fff0"></div><div style="left:84.4px;top:55.3px;width:7.6px;height:3.6px;background:#b9fff0"></div><div style="left:91.1px;top:52.3px;width:24.6px;height:3.6px;background:#b9fff0"></div><div style="left:116px;top:46.4px;width:15.2px;height:3.6px;background:#b9fff0"></div><div style="left:130.5px;top:58.2px;width:22.5px;height:3.6px;background:#b9fff0"></div><div style="left:156.8px;top:58.2px;width:7.6px;height:3.6px;background:#b9fff0"></div><div style="left:162.8px;top:55.3px;width:7.6px;height:3.6px;background:#b9fff0"></div><div style="left:169.5px;top:52.3px;width:24.6px;height:3.6px;background:#b9fff0"></div><div style="left:196px;top:58.2px;width:7.6px;height:3.6px;background:#b9fff0"></div><div style="left:202px;top:55.3px;width:7.6px;height:3.6px;background:#b9fff0"></div><div style="left:208.7px;top:52.3px;width:24.6px;height:3.6px;background:#b9fff0"></div><div style="left:236.7px;top:58.2px;width:6px;height:3.6px;background:#b9fff0"></div><div style="left:241.2px;top:55.3px;width:7.6px;height:3.6px;background:#b9fff0"></div><div style="left:247.9px;top:52.3px;width:24.6px;height:3.6px;background:#b9fff0"></div><div style="left:272.8px;top:46.4px;width:15.2px;height:3.6px;background:#b9fff0"></div><div style="left:287.3px;top:58.2px;width:22.5px;height:3.6px;background:#b9fff0"></div><div style="left:312px;top:46.4px;width:16px;height:3.6px;background:#b9fff0"></div><div style="left:327px;top:42.5px;width:22.5px;height:3.6px;background:#b9fff0"></div></div><div style="left:10px;top:3.5px;height:30px;line-height:30px;font-size:22.5px;color:#fff;white-space:nowrap;letter-spacing:.3px;-webkit-text-stroke:.3px #fff">Ocean Bass</div></div>
<div style="left:2358px;top:566px;width:351px;height:70px;background:#00c9a8;border-radius:7px;overflow:hidden;box-shadow:inset 0 0 0 1.6px #c1fdf1,0 0 0 1.6px #0c0c0c;"><div style="left:0;top:0;width:100%;height:34.5px;background:#c1fdf1"></div><div style="left:0px;top:0;width:351px;height:70px"><div style="left:0px;top:58.2px;width:7.6px;height:3.6px;background:#b9fff0"></div><div style="left:6px;top:55.3px;width:7.6px;height:3.6px;background:#b9fff0"></div><div style="left:12.7px;top:52.3px;width:24.6px;height:3.6px;background:#b9fff0"></div><div style="left:39.2px;top:58.2px;width:7.6px;height:3.6px;background:#b9fff0"></div><div style="left:45.2px;top:55.3px;width:7.6px;height:3.6px;background:#b9fff0"></div><div style="left:51.9px;top:52.3px;width:24.6px;height:3.6px;background:#b9fff0"></div><div style="left:79.9px;top:58.2px;width:6px;height:3.6px;background:#b9fff0"></div><div style="left:84.4px;top:55.3px;width:7.6px;height:3.6px;background:#b9fff0"></div><div style="left:91.1px;top:52.3px;width:24.6px;height:3.6px;background:#b9fff0"></div><div style="left:116px;top:46.4px;width:15.2px;height:3.6px;background:#b9fff0"></div><div style="left:130.5px;top:58.2px;width:22.5px;height:3.6px;background:#b9fff0"></div><div style="left:156.8px;top:58.2px;width:7.6px;height:3.6px;background:#b9fff0"></div><div style="left:162.8px;top:55.3px;width:7.6px;height:3.6px;background:#b9fff0"></div><div style="left:169.5px;top:52.3px;width:24.6px;height:3.6px;background:#b9fff0"></div><div style="left:196px;top:58.2px;width:7.6px;height:3.6px;background:#b9fff0"></div><div style="left:202px;top:55.3px;width:7.6px;height:3.6px;background:#b9fff0"></div><div style="left:208.7px;top:52.3px;width:24.6px;height:3.6px;background:#b9fff0"></div><div style="left:236.7px;top:58.2px;width:6px;height:3.6px;background:#b9fff0"></div><div style="left:241.2px;top:55.3px;width:7.6px;height:3.6px;background:#b9fff0"></div><div style="left:247.9px;top:52.3px;width:24.6px;height:3.6px;background:#b9fff0"></div><div style="left:272.8px;top:46.4px;width:15.2px;height:3.6px;background:#b9fff0"></div><div style="left:287.3px;top:58.2px;width:22.5px;height:3.6px;background:#b9fff0"></div><div style="left:312px;top:46.4px;width:16px;height:3.6px;background:#b9fff0"></div><div style="left:327px;top:42.5px;width:21.5px;height:3.6px;background:#b9fff0"></div></div><div style="left:10px;top:3.5px;height:30px;line-height:30px;font-size:22.5px;color:#0b6a55;white-space:nowrap;letter-spacing:.3px;-webkit-text-stroke:.3px #0b6a55">Ocean Bass</div></div>
<div style="left:1725.5px;top:642px;width:82.5px;height:70px;background:#00c983;border-radius:0 7px 7px 0;overflow:hidden;box-shadow:0 0 0 1.6px #0c0c0c;"><div style="left:-73.5px;top:0;width:156px;height:70px"><div style="left:0px;top:51.5px;width:6px;height:4.5px;background:#b5ffe0"></div><div style="left:10.5px;top:51.5px;width:6px;height:4.5px;background:#b5ffe0"></div><div style="left:21px;top:51.5px;width:6px;height:4.5px;background:#b5ffe0"></div><div style="left:39.2px;top:51.5px;width:6px;height:4.5px;background:#b5ffe0"></div><div style="left:49.7px;top:51.5px;width:6px;height:4.5px;background:#b5ffe0"></div><div style="left:60.2px;top:51.5px;width:6px;height:4.5px;background:#b5ffe0"></div><div style="left:78.4px;top:51.5px;width:6px;height:4.5px;background:#b5ffe0"></div><div style="left:88.9px;top:51.5px;width:6px;height:4.5px;background:#b5ffe0"></div><div style="left:99.4px;top:51.5px;width:6px;height:4.5px;background:#b5ffe0"></div><div style="left:117.6px;top:51.5px;width:6px;height:4.5px;background:#b5ffe0"></div><div style="left:128.1px;top:51.5px;width:6px;height:4.5px;background:#b5ffe0"></div><div style="left:138.6px;top:51.5px;width:6px;height:4.5px;background:#b5ffe0"></div></div><div style="left:-63.5px;top:3.5px;height:30px;line-height:30px;font-size:22.5px;color:#fff;white-space:nowrap;letter-spacing:.3px;-webkit-text-stroke:.3px #fff">African Kit</div></div>
<div style="left:1810.5px;top:642px;width:191.5px;height:70px;background:#00c983;border-radius:7px;overflow:hidden;box-shadow:0 0 0 1.6px #0c0c0c;"><div style="left:-0px;top:0;width:191.5px;height:70px"><div style="left:0px;top:51.5px;width:6px;height:4.5px;background:#b5ffe0"></div><div style="left:10.5px;top:51.5px;width:6px;height:4.5px;background:#b5ffe0"></div><div style="left:21px;top:51.5px;width:6px;height:4.5px;background:#b5ffe0"></div><div style="left:39.2px;top:51.5px;width:6px;height:4.5px;background:#b5ffe0"></div><div style="left:49.7px;top:51.5px;width:6px;height:4.5px;background:#b5ffe0"></div><div style="left:60.2px;top:51.5px;width:6px;height:4.5px;background:#b5ffe0"></div><div style="left:78.4px;top:51.5px;width:6px;height:4.5px;background:#b5ffe0"></div><div style="left:88.9px;top:51.5px;width:6px;height:4.5px;background:#b5ffe0"></div><div style="left:99.4px;top:51.5px;width:6px;height:4.5px;background:#b5ffe0"></div><div style="left:117.6px;top:51.5px;width:6px;height:4.5px;background:#b5ffe0"></div><div style="left:128.1px;top:51.5px;width:6px;height:4.5px;background:#b5ffe0"></div><div style="left:138.6px;top:51.5px;width:6px;height:4.5px;background:#b5ffe0"></div><div style="left:156.8px;top:51.5px;width:6px;height:4.5px;background:#b5ffe0"></div><div style="left:167.3px;top:51.5px;width:6px;height:4.5px;background:#b5ffe0"></div><div style="left:177.8px;top:51.5px;width:6px;height:4.5px;background:#b5ffe0"></div></div><div style="left:10px;top:3.5px;height:30px;line-height:30px;font-size:22.5px;color:#fff;white-space:nowrap;letter-spacing:.3px;-webkit-text-stroke:.3px #fff">African Kit</div></div>
<div style="left:2004px;top:642px;width:352px;height:70px;background:#00c983;border-radius:7px;overflow:hidden;box-shadow:0 0 0 1.6px #0c0c0c;"><div style="left:0px;top:0;width:352px;height:70px"><div style="left:0px;top:51.5px;width:17.8px;height:4.5px;background:#b5ffe0"></div><div style="left:28px;top:51.5px;width:6.7px;height:4.5px;background:#b5ffe0"></div><div style="left:37.3px;top:51.5px;width:4.2px;height:4.5px;background:#b5ffe0"></div><div style="left:43.2px;top:51.5px;width:12.8px;height:4.5px;background:#b5ffe0"></div><div style="left:67.8px;top:51.5px;width:6.8px;height:4.5px;background:#b5ffe0"></div><div style="left:77.1px;top:51.5px;width:18.7px;height:4.5px;background:#b5ffe0"></div><div style="left:106px;top:51.5px;width:5.9px;height:4.5px;background:#b5ffe0"></div><div style="left:115px;top:51.5px;width:6px;height:4.5px;background:#b5ffe0"></div><div style="left:123.7px;top:51.5px;width:10.3px;height:4.5px;background:#b5ffe0"></div><div style="left:145.8px;top:51.5px;width:7.6px;height:4.5px;background:#b5ffe0"></div><div style="left:156px;top:51.5px;width:17.7px;height:4.5px;background:#b5ffe0"></div><div style="left:183.9px;top:51.5px;width:16.9px;height:4.5px;background:#b5ffe0"></div><div style="left:201.7px;top:51.5px;width:10.2px;height:4.5px;background:#b5ffe0"></div><div style="left:223.7px;top:51.5px;width:7.7px;height:4.5px;background:#b5ffe0"></div><div style="left:233.9px;top:51.5px;width:5.9px;height:4.5px;background:#b5ffe0"></div><div style="left:241.5px;top:51.5px;width:14.5px;height:4.5px;background:#b5ffe0"></div><div style="left:263.6px;top:51.5px;width:27.9px;height:4.5px;background:#b5ffe0"></div><div style="left:301.7px;top:51.5px;width:7.6px;height:4.5px;background:#b5ffe0"></div><div style="left:311.9px;top:51.5px;width:17.8px;height:4.5px;background:#b5ffe0"></div><div style="left:341.5px;top:51.5px;width:5.5px;height:4.5px;background:#b5ffe0"></div></div><div style="left:10px;top:3.5px;height:30px;line-height:30px;font-size:22.5px;color:#fff;white-space:nowrap;letter-spacing:.3px;-webkit-text-stroke:.3px #fff">African Kit</div></div>
<div style="left:2358px;top:642px;width:351px;height:70px;background:#00c983;border-radius:7px;overflow:hidden;box-shadow:0 0 0 1.6px #0c0c0c;"><div style="left:0px;top:0;width:351px;height:70px"><div style="left:0px;top:51.5px;width:17.8px;height:4.5px;background:#b5ffe0"></div><div style="left:28px;top:51.5px;width:6.7px;height:4.5px;background:#b5ffe0"></div><div style="left:37.3px;top:51.5px;width:4.2px;height:4.5px;background:#b5ffe0"></div><div style="left:43.2px;top:51.5px;width:12.8px;height:4.5px;background:#b5ffe0"></div><div style="left:67.8px;top:51.5px;width:6.8px;height:4.5px;background:#b5ffe0"></div><div style="left:77.1px;top:51.5px;width:18.7px;height:4.5px;background:#b5ffe0"></div><div style="left:106px;top:51.5px;width:5.9px;height:4.5px;background:#b5ffe0"></div><div style="left:115px;top:51.5px;width:6px;height:4.5px;background:#b5ffe0"></div><div style="left:123.7px;top:51.5px;width:10.3px;height:4.5px;background:#b5ffe0"></div><div style="left:145.8px;top:51.5px;width:7.6px;height:4.5px;background:#b5ffe0"></div><div style="left:156px;top:51.5px;width:17.7px;height:4.5px;background:#b5ffe0"></div><div style="left:183.9px;top:51.5px;width:16.9px;height:4.5px;background:#b5ffe0"></div><div style="left:201.7px;top:51.5px;width:10.2px;height:4.5px;background:#b5ffe0"></div><div style="left:223.7px;top:51.5px;width:7.7px;height:4.5px;background:#b5ffe0"></div><div style="left:233.9px;top:51.5px;width:5.9px;height:4.5px;background:#b5ffe0"></div><div style="left:241.5px;top:51.5px;width:14.5px;height:4.5px;background:#b5ffe0"></div><div style="left:263.6px;top:51.5px;width:27.9px;height:4.5px;background:#b5ffe0"></div><div style="left:301.7px;top:51.5px;width:7.6px;height:4.5px;background:#b5ffe0"></div><div style="left:311.9px;top:51.5px;width:17.8px;height:4.5px;background:#b5ffe0"></div><div style="left:341.5px;top:51.5px;width:4.5px;height:4.5px;background:#b5ffe0"></div></div><div style="left:10px;top:3.5px;height:30px;line-height:30px;font-size:22.5px;color:#fff;white-space:nowrap;letter-spacing:.3px;-webkit-text-stroke:.3px #fff">African Kit</div></div>
<div style="left:1725.5px;top:718px;width:276.5px;height:70px;background:#2b89d1;border-radius:0 7px 7px 0;overflow:hidden;box-shadow:0 0 0 1.6px #0c0c0c;"><div style="left:-66px;top:0;width:342.5px;height:70px"><div style="left:0px;top:51.5px;width:6px;height:4.5px;background:#cfe3fb"></div><div style="left:10.5px;top:51.5px;width:6px;height:4.5px;background:#cfe3fb"></div><div style="left:21px;top:51.5px;width:6px;height:4.5px;background:#cfe3fb"></div><div style="left:39.2px;top:51.5px;width:6px;height:4.5px;background:#cfe3fb"></div><div style="left:49.7px;top:51.5px;width:6px;height:4.5px;background:#cfe3fb"></div><div style="left:60.2px;top:51.5px;width:6px;height:4.5px;background:#cfe3fb"></div><div style="left:78.4px;top:51.5px;width:6px;height:4.5px;background:#cfe3fb"></div><div style="left:88.9px;top:51.5px;width:6px;height:4.5px;background:#cfe3fb"></div><div style="left:99.4px;top:51.5px;width:6px;height:4.5px;background:#cfe3fb"></div><div style="left:117.6px;top:51.5px;width:6px;height:4.5px;background:#cfe3fb"></div><div style="left:128.1px;top:51.5px;width:6px;height:4.5px;background:#cfe3fb"></div><div style="left:138.6px;top:51.5px;width:6px;height:4.5px;background:#cfe3fb"></div><div style="left:156.8px;top:51.5px;width:6px;height:4.5px;background:#cfe3fb"></div><div style="left:167.3px;top:51.5px;width:6px;height:4.5px;background:#cfe3fb"></div><div style="left:177.8px;top:51.5px;width:6px;height:4.5px;background:#cfe3fb"></div><div style="left:196px;top:51.5px;width:6px;height:4.5px;background:#cfe3fb"></div><div style="left:206.5px;top:51.5px;width:6px;height:4.5px;background:#cfe3fb"></div><div style="left:217px;top:51.5px;width:6px;height:4.5px;background:#cfe3fb"></div><div style="left:235.2px;top:51.5px;width:6px;height:4.5px;background:#cfe3fb"></div><div style="left:245.7px;top:51.5px;width:6px;height:4.5px;background:#cfe3fb"></div><div style="left:256.2px;top:51.5px;width:6px;height:4.5px;background:#cfe3fb"></div><div style="left:274.4px;top:51.5px;width:6px;height:4.5px;background:#cfe3fb"></div><div style="left:284.9px;top:51.5px;width:6px;height:4.5px;background:#cfe3fb"></div><div style="left:295.4px;top:51.5px;width:6px;height:4.5px;background:#cfe3fb"></div><div style="left:313.6px;top:51.5px;width:6px;height:4.5px;background:#cfe3fb"></div><div style="left:324.1px;top:51.5px;width:6px;height:4.5px;background:#cfe3fb"></div><div style="left:334.6px;top:51.5px;width:2.9px;height:4.5px;background:#cfe3fb"></div></div><div style="left:-56px;top:3.5px;height:30px;line-height:30px;font-size:22.5px;color:#fff;white-space:nowrap;letter-spacing:.3px;-webkit-text-stroke:.3px #fff">Modern Machines</div></div>
<div style="left:2004px;top:718px;width:352px;height:70px;background:#2b89d1;border-radius:7px;overflow:hidden;box-shadow:0 0 0 1.6px #0c0c0c;"><div style="left:0px;top:0;width:352px;height:70px"><div style="left:0px;top:51.5px;width:17.8px;height:4.5px;background:#cfe3fb"></div><div style="left:28px;top:51.5px;width:6.7px;height:4.5px;background:#cfe3fb"></div><div style="left:37.3px;top:51.5px;width:4.2px;height:4.5px;background:#cfe3fb"></div><div style="left:43.2px;top:51.5px;width:12.8px;height:4.5px;background:#cfe3fb"></div><div style="left:67.8px;top:51.5px;width:6.8px;height:4.5px;background:#cfe3fb"></div><div style="left:77.1px;top:51.5px;width:18.7px;height:4.5px;background:#cfe3fb"></div><div style="left:106px;top:51.5px;width:5.9px;height:4.5px;background:#cfe3fb"></div><div style="left:115px;top:51.5px;width:6px;height:4.5px;background:#cfe3fb"></div><div style="left:123.7px;top:51.5px;width:10.3px;height:4.5px;background:#cfe3fb"></div><div style="left:145.8px;top:51.5px;width:7.6px;height:4.5px;background:#cfe3fb"></div><div style="left:156px;top:51.5px;width:17.7px;height:4.5px;background:#cfe3fb"></div><div style="left:183.9px;top:51.5px;width:16.9px;height:4.5px;background:#cfe3fb"></div><div style="left:201.7px;top:51.5px;width:10.2px;height:4.5px;background:#cfe3fb"></div><div style="left:223.7px;top:51.5px;width:7.7px;height:4.5px;background:#cfe3fb"></div><div style="left:233.9px;top:51.5px;width:5.9px;height:4.5px;background:#cfe3fb"></div><div style="left:241.5px;top:51.5px;width:14.5px;height:4.5px;background:#cfe3fb"></div><div style="left:263.6px;top:51.5px;width:27.9px;height:4.5px;background:#cfe3fb"></div><div style="left:301.7px;top:51.5px;width:7.6px;height:4.5px;background:#cfe3fb"></div><div style="left:311.9px;top:51.5px;width:17.8px;height:4.5px;background:#cfe3fb"></div><div style="left:341.5px;top:51.5px;width:5.5px;height:4.5px;background:#cfe3fb"></div></div><div style="left:10px;top:3.5px;height:30px;line-height:30px;font-size:22.5px;color:#fff;white-space:nowrap;letter-spacing:.3px;-webkit-text-stroke:.3px #fff">Modern Machines</div></div>
<div style="left:2358px;top:718px;width:351px;height:70px;background:#2b89d1;border-radius:7px;overflow:hidden;box-shadow:0 0 0 1.6px #0c0c0c;"><div style="left:0px;top:0;width:351px;height:70px"><div style="left:0px;top:51.5px;width:17.8px;height:4.5px;background:#cfe3fb"></div><div style="left:28px;top:51.5px;width:6.7px;height:4.5px;background:#cfe3fb"></div><div style="left:37.3px;top:51.5px;width:4.2px;height:4.5px;background:#cfe3fb"></div><div style="left:43.2px;top:51.5px;width:12.8px;height:4.5px;background:#cfe3fb"></div><div style="left:67.8px;top:51.5px;width:6.8px;height:4.5px;background:#cfe3fb"></div><div style="left:77.1px;top:51.5px;width:18.7px;height:4.5px;background:#cfe3fb"></div><div style="left:106px;top:51.5px;width:5.9px;height:4.5px;background:#cfe3fb"></div><div style="left:115px;top:51.5px;width:6px;height:4.5px;background:#cfe3fb"></div><div style="left:123.7px;top:51.5px;width:10.3px;height:4.5px;background:#cfe3fb"></div><div style="left:145.8px;top:51.5px;width:7.6px;height:4.5px;background:#cfe3fb"></div><div style="left:156px;top:51.5px;width:17.7px;height:4.5px;background:#cfe3fb"></div><div style="left:183.9px;top:51.5px;width:16.9px;height:4.5px;background:#cfe3fb"></div><div style="left:201.7px;top:51.5px;width:10.2px;height:4.5px;background:#cfe3fb"></div><div style="left:223.7px;top:51.5px;width:7.7px;height:4.5px;background:#cfe3fb"></div><div style="left:233.9px;top:51.5px;width:5.9px;height:4.5px;background:#cfe3fb"></div><div style="left:241.5px;top:51.5px;width:14.5px;height:4.5px;background:#cfe3fb"></div><div style="left:263.6px;top:51.5px;width:27.9px;height:4.5px;background:#cfe3fb"></div><div style="left:301.7px;top:51.5px;width:7.6px;height:4.5px;background:#cfe3fb"></div><div style="left:311.9px;top:51.5px;width:17.8px;height:4.5px;background:#cfe3fb"></div><div style="left:341.5px;top:51.5px;width:4.5px;height:4.5px;background:#cfe3fb"></div></div><div style="left:10px;top:3.5px;height:30px;line-height:30px;font-size:22.5px;color:#fff;white-space:nowrap;letter-spacing:.3px;-webkit-text-stroke:.3px #fff">Modern Machines</div></div>
<svg style="left:2022.3px;top:225px;" width="27" height="25" viewBox="0 0 27 25"><path d="M3.5 0.5H23.5a3 3 0 0 1 3 3V11L13.5 24L0.5 11V3.5a3 3 0 0 1 3-3Z" fill="rgba(226,102,110,.88)"/></svg>
<div style="left:2034.3px;top:232px;width:2.2px;height:557px;background:#ee6c70;"></div>
<div style="left:464.5px;top:803.7px;width:2412px;height:992.3px;background:#000;border-radius:9px;"></div>
<div style="left:466.5px;top:805.7px;width:2408px;height:988.3px;background:#252f4c;border-radius:7px;"></div>
<div style="left:482px;top:814.2px;width:66px;height:41.5px;background:rgba(58,66,92,.55);border-radius:7px;box-shadow:inset 0 0 0 1px rgba(90,98,125,.35),0 1px 2px rgba(0,0,0,.25);"></div>
<svg style="left:503px;top:820.3px;" width="26" height="30" viewBox="0 0 26 30"><path d="M3 11L11.5 2.5L18 9.5M11.5 3C10 14 13 25 23.5 24.5" fill="none" stroke="#868a9c" stroke-width="1.8"/></svg>
<div style="left:564px;top:814.2px;width:422px;height:41.5px;background:rgba(58,66,92,.55);border-radius:7px;box-shadow:inset 0 0 0 1px rgba(90,98,125,.35),0 1px 2px rgba(0,0,0,.25);"></div>
<div style="left:684.5px;top:815.2px;width:1.2px;height:39.5px;background:rgba(30,36,58,.6);"></div>
<div style="left:586px;top:817.76px;width:600px;height:34px;line-height:34px;font-size:26px;color:#f2f2f5;text-align:left;white-space:nowrap;letter-spacing:0.35px;-webkit-text-stroke:.35px #f2f2f5;">Edit</div>
<svg style="left:654px;top:831.95px;" width="16" height="9" viewBox="0 0 16 9"><path d="M1 1L8 8L15 1" fill="none" stroke="#f2f2f5" stroke-width="2"/></svg>
<div style="left:852.5px;top:815.2px;width:1.2px;height:39.5px;background:rgba(30,36,58,.6);"></div>
<div style="left:706.5px;top:817.76px;width:600px;height:34px;line-height:34px;font-size:26px;color:#f2f2f5;text-align:left;white-space:nowrap;letter-spacing:0.35px;-webkit-text-stroke:.35px #f2f2f5;">Options</div>
<svg style="left:823px;top:831.95px;" width="16" height="9" viewBox="0 0 16 9"><path d="M1 1L8 8L15 1" fill="none" stroke="#f2f2f5" stroke-width="2"/></svg>
<div style="left:875px;top:817.76px;width:600px;height:34px;line-height:34px;font-size:26px;color:#f2f2f5;text-align:left;white-space:nowrap;letter-spacing:0.35px;-webkit-text-stroke:.35px #f2f2f5;">View</div>
<svg style="left:956.5px;top:831.95px;" width="16" height="9" viewBox="0 0 16 9"><path d="M1 1L8 8L15 1" fill="none" stroke="#f2f2f5" stroke-width="2"/></svg>
<div style="left:1398px;top:814.2px;width:339.5px;height:41.5px;background:#343d57;border-radius:7px;box-shadow:inset 0 0 0 1px rgba(90,98,125,.4);"></div>
<div style="left:1526px;top:814.2px;width:127.5px;height:41.5px;background:linear-gradient(#86a8b8,#7d9faf);"></div>
<div style="left:1653.5px;top:814.2px;width:1.3px;height:41.5px;background:#2a3350;"></div>
<div style="left:1391px;top:817.76px;width:140px;height:34px;line-height:34px;font-size:26px;color:#10131c;text-align:center;white-space:nowrap;letter-spacing:0.4px;-webkit-text-stroke:.25px #10131c;">Single</div>
<div style="left:1520px;top:817.76px;width:140px;height:34px;line-height:34px;font-size:26px;color:#10131c;text-align:center;white-space:nowrap;letter-spacing:0.4px;-webkit-text-stroke:.25px #10131c;">Tracks</div>
<div style="left:1625px;top:817.76px;width:140px;height:34px;line-height:34px;font-size:26px;color:#10131c;text-align:center;white-space:nowrap;letter-spacing:0.4px;-webkit-text-stroke:.25px #10131c;">All</div>
<div style="left:1755px;top:814.2px;width:957px;height:41.5px;background:linear-gradient(#86a8b8,#7d9faf);border-radius:7px;box-shadow:0 1px 2px rgba(0,0,0,.3);"></div>
<div style="left:1695px;top:817.76px;width:240px;height:34px;line-height:34px;font-size:26px;color:#10131c;text-align:center;white-space:nowrap;letter-spacing:0.4px;-webkit-text-stroke:.25px #10131c;">Audio</div>
<div style="left:1874.3px;top:814.2px;width:1.4px;height:41.5px;background:#5b7a8c;"></div>
<div style="left:1803px;top:817.76px;width:240px;height:34px;line-height:34px;font-size:26px;color:#10131c;text-align:center;white-space:nowrap;letter-spacing:0.4px;-webkit-text-stroke:.25px #10131c;">Inst</div>
<div style="left:1970.3px;top:814.2px;width:1.4px;height:41.5px;background:#5b7a8c;"></div>
<div style="left:1899.25px;top:817.76px;width:240px;height:34px;line-height:34px;font-size:26px;color:#10131c;text-align:center;white-space:nowrap;letter-spacing:0.4px;-webkit-text-stroke:.25px #10131c;">Aux</div>
<div style="left:2066.8px;top:814.2px;width:1.4px;height:41.5px;background:#5b7a8c;"></div>
<div style="left:1995.25px;top:817.76px;width:240px;height:34px;line-height:34px;font-size:26px;color:#10131c;text-align:center;white-space:nowrap;letter-spacing:0.4px;-webkit-text-stroke:.25px #10131c;">Bus</div>
<div style="left:2162.3px;top:814.2px;width:1.4px;height:41.5px;background:#5b7a8c;"></div>
<div style="left:2099px;top:817.76px;width:240px;height:34px;line-height:34px;font-size:26px;color:#10131c;text-align:center;white-space:nowrap;letter-spacing:0.4px;-webkit-text-stroke:.25px #10131c;">Input</div>
<div style="left:2274.3px;top:814.2px;width:1.4px;height:41.5px;background:#5b7a8c;"></div>
<div style="left:2223px;top:817.76px;width:240px;height:34px;line-height:34px;font-size:26px;color:#10131c;text-align:center;white-space:nowrap;letter-spacing:0.4px;-webkit-text-stroke:.25px #10131c;">Output</div>
<div style="left:2410.3px;top:814.2px;width:1.4px;height:41.5px;background:#5b7a8c;"></div>
<div style="left:2387.75px;top:817.76px;width:240px;height:34px;line-height:34px;font-size:26px;color:#10131c;text-align:center;white-space:nowrap;letter-spacing:0.4px;-webkit-text-stroke:.25px #10131c;">Master/VCA</div>
<div style="left:2603.8px;top:814.2px;width:1.4px;height:41.5px;background:#5b7a8c;"></div>
<div style="left:2538.25px;top:817.76px;width:240px;height:34px;line-height:34px;font-size:26px;color:#10131c;text-align:center;white-space:nowrap;letter-spacing:0.4px;-webkit-text-stroke:.25px #10131c;">MIDI</div>
<div style="left:2729px;top:814.2px;width:129px;height:41.5px;background:#2a3350;border-radius:7px;box-shadow:inset 0 0 0 1px rgba(90,98,125,.35);"></div>
<div style="left:2729px;top:814.2px;width:63.5px;height:41.5px;background:linear-gradient(#86a8b8,#7d9faf);border-radius:7px 0 0 7px;"></div>
<svg style="left:2748px;top:822.3px;" width="27" height="25" viewBox="0 0 27 25"><rect x="1" y="1" width="25" height="23" rx="1" fill="none" stroke="#fff" stroke-width="2"/><path d="M9.3 1V24M17.7 1V24" stroke="#fff" stroke-width="2"/></svg>
<svg style="left:2812px;top:822.3px;" width="27" height="25" viewBox="0 0 27 25"><rect x="1" y="1" width="25" height="23" rx="1" fill="none" stroke="#fff" stroke-width="2"/><path d="M13.5 1V24" stroke="#fff" stroke-width="2"/></svg>
<div style="left:466.5px;top:863.5px;width:2406.5px;height:930.5px;background:linear-gradient(#2b3856 0,#313f5e 10px);border-radius:0 0 7px 7px;"></div>
<div style="left:551.5px;top:863.5px;width:115px;height:40px;background:#2a3652;border-radius:0 0 8px 8px;"></div>
<svg style="left:635.6px;top:921.6px;" width="33.8" height="33.8" viewBox="0 0 33.8 33.8"><path d="M10.35 28.24A13.1 13.1 0 1 1 23.45 28.24" fill="none" stroke="#000" stroke-width="5.6"/><circle cx="16.9" cy="16.9" r="10.1" fill="#fff"/></svg>
<svg style="left:635.6px;top:961.6px;" width="33.8" height="33.8" viewBox="0 0 33.8 33.8"><path d="M10.35 28.24A13.1 13.1 0 1 1 23.45 28.24" fill="none" stroke="#000" stroke-width="5.6"/><circle cx="16.9" cy="16.9" r="10.1" fill="#fff"/></svg>
<div style="left:551.5px;top:1034.5px;width:115px;height:34.5px;background:#676673;border-radius:7px;"></div>
<div style="left:553.5px;top:1080px;width:111px;height:33.5px;background:#2c3855;border-radius:2px;"></div>
<div style="left:551.5px;top:1126.5px;width:115px;height:35px;background:#191919;border-radius:7px;"></div>
<div style="left:611px;top:1334px;width:54px;height:33.5px;background:#1f2941;"></div>
<div style="left:603px;top:1336.29px;width:70px;height:32px;line-height:32px;font-size:24.5px;color:#4fdc70;text-align:center;white-space:nowrap;transform:scaleX(0.81);transform-origin:50% 50%;">-25.9</div>
<div style="left:573.3px;top:1412px;width:79.2px;height:273.5px;"><div style="right:29.3px;top:-5px;width:40px;height:16px;line-height:16px;font-size:15.3px;text-align:right;color:#c3c6d2;letter-spacing:-0.2px">0</div><div style="right:19.5px;top:1.9px;width:6.5px;height:1.6px;background:#c3c6d2"></div><div style="right:29.3px;top:13.1px;width:40px;height:16px;line-height:16px;font-size:15.3px;text-align:right;color:#c3c6d2;letter-spacing:-0.2px">3</div><div style="right:19.5px;top:20px;width:6.5px;height:1.6px;background:#c3c6d2"></div><div style="right:29.3px;top:31.1px;width:40px;height:16px;line-height:16px;font-size:15.3px;text-align:right;color:#c3c6d2;letter-spacing:-0.2px">6</div><div style="right:19.5px;top:38px;width:6.5px;height:1.6px;background:#c3c6d2"></div><div style="right:29.3px;top:49.2px;width:40px;height:16px;line-height:16px;font-size:15.3px;text-align:right;color:#c3c6d2;letter-spacing:-0.2px">9</div><div style="right:19.5px;top:56.1px;width:6.5px;height:1.6px;background:#c3c6d2"></div><div style="right:29.3px;top:67.2px;width:40px;height:16px;line-height:16px;font-size:15.3px;text-align:right;color:#c3c6d2;letter-spacing:-0.2px">12</div><div style="right:19.5px;top:74.1px;width:6.5px;height:1.6px;background:#c3c6d2"></div><div style="right:29.3px;top:85.3px;width:40px;height:16px;line-height:16px;font-size:15.3px;text-align:right;color:#c3c6d2;letter-spacing:-0.2px">15</div><div style="right:19.5px;top:92.2px;width:6.5px;height:1.6px;background:#c3c6d2"></div><div style="right:29.3px;top:103.3px;width:40px;height:16px;line-height:16px;font-size:15.3px;text-align:right;color:#c3c6d2;letter-spacing:-0.2px">18</div><div style="right:19.5px;top:110.2px;width:6.5px;height:1.6px;background:#c3c6d2"></div><div style="right:29.3px;top:121.3px;width:40px;height:16px;line-height:16px;font-size:15.3px;text-align:right;color:#c3c6d2;letter-spacing:-0.2px">21</div><div style="right:19.5px;top:128.2px;width:6.5px;height:1.6px;background:#c3c6d2"></div><div style="right:29.3px;top:139.3px;width:40px;height:16px;line-height:16px;font-size:15.3px;text-align:right;color:#c3c6d2;letter-spacing:-0.2px">24</div><div style="right:19.5px;top:146.2px;width:6.5px;height:1.6px;background:#c3c6d2"></div><div style="right:29.3px;top:163.1px;width:40px;height:16px;line-height:16px;font-size:15.3px;text-align:right;color:#c3c6d2;letter-spacing:-0.2px">30</div><div style="right:19.5px;top:170px;width:6.5px;height:1.6px;background:#c3c6d2"></div><div style="right:29.3px;top:183.3px;width:40px;height:16px;line-height:16px;font-size:15.3px;text-align:right;color:#c3c6d2;letter-spacing:-0.2px">35</div><div style="right:19.5px;top:190.2px;width:6.5px;height:1.6px;background:#c3c6d2"></div><div style="right:29.3px;top:203.6px;width:40px;height:16px;line-height:16px;font-size:15.3px;text-align:right;color:#c3c6d2;letter-spacing:-0.2px">40</div><div style="right:19.5px;top:210.5px;width:6.5px;height:1.6px;background:#c3c6d2"></div><div style="right:29.3px;top:223.3px;width:40px;height:16px;line-height:16px;font-size:15.3px;text-align:right;color:#c3c6d2;letter-spacing:-0.2px">45</div><div style="right:19.5px;top:230.2px;width:6.5px;height:1.6px;background:#c3c6d2"></div><div style="right:29.3px;top:243.6px;width:40px;height:16px;line-height:16px;font-size:15.3px;text-align:right;color:#c3c6d2;letter-spacing:-0.2px">50</div><div style="right:19.5px;top:250.5px;width:6.5px;height:1.6px;background:#c3c6d2"></div><div style="right:29.3px;top:263.1px;width:40px;height:16px;line-height:16px;font-size:15.3px;text-align:right;color:#c3c6d2;letter-spacing:-0.2px">60</div><div style="right:19.5px;top:270px;width:6.5px;height:1.6px;background:#c3c6d2"></div><div style="right:19.2px;top:1px;width:1.7px;opacity:.85;height:271.5px;background:repeating-linear-gradient(#c3c6d2 0,#c3c6d2 1.9px,transparent 1.9px,transparent 4.3px)"></div><div style="right:0;top:0;width:19.2px;height:273.5px;background:linear-gradient(#2b3034 0,#2b3034 19.5px,#28282c 20px,#332c30 50px,#32302f 160px,#33322e 100%);box-shadow:0 0 0 .5px #1a2030"></div></div>
<div style="left:644.7px;top:1651px;width:6.2px;height:33px;background:linear-gradient(to top,#f8c022 0%,#f9a033 28%,#fb8048 50%,#fc6a62 70%,#fb6068 100%);background-size:6.2px 270.5px;background-position:0 100%;background-repeat:no-repeat;"></div>
<div style="left:644.7px;top:1629px;width:6.2px;height:2.4px;background:#f9a033;"></div>
<div style="left:611.5px;top:1696.5px;width:55px;height:34.5px;background:#676673;border-radius:7px 0 0 7px;"></div>
<div style="left:638px;top:1696.5px;width:1.3px;height:34.5px;background:#4c4b57;"></div>
<div style="left:664.3px;top:1696.5px;width:1.3px;height:34.5px;background:#4c4b57;"></div>
<div style="left:636.5px;top:1696.82px;width:30px;height:35px;line-height:35px;font-size:27px;color:#fff;text-align:center;white-space:nowrap;">I</div>
<div style="left:611.5px;top:1737px;width:54.5px;height:34.5px;background:#676673;border-radius:7px;"></div>
<div style="left:675.2px;top:863.5px;width:1.6px;height:930px;background:#7a9cb2;"></div>
<div style="left:685.5px;top:863.5px;width:115px;height:40px;background:#2a3652;border-radius:0 0 8px 8px;box-shadow:inset 0 0 0 1px rgba(30,40,70,.35);"></div>
<div style="left:685.5px;top:921px;width:79px;height:34px;background:#7fa1b2;border-radius:7px;line-height:34px;font-size:24px;color:#f1f3f6;text-align:center;white-space:nowrap;overflow:hidden;letter-spacing:0.25px;box-shadow:0 0 0 1px #4f6a80;"><span style="display:inline-block;transform:scaleX(0.92)">Bus 5</span></div>
<svg style="left:769.6px;top:921.1px;" width="33.8" height="33.8" viewBox="0 0 33.8 33.8"><path d="M10.35 28.24A13.1 13.1 0 1 1 23.45 28.24" fill="none" stroke="#000" stroke-width="5.6"/><path d="M10.35 28.24A13.1 13.1 0 0 1 4.09 19.62" fill="none" stroke="#fb7f7d" stroke-width="5.6"/><circle cx="16.9" cy="16.9" r="10.1" fill="#fff"/></svg>
<div style="left:685.5px;top:961px;width:79px;height:34px;background:#7fa1b2;border-radius:7px;line-height:34px;font-size:24px;color:#f1f3f6;text-align:center;white-space:nowrap;overflow:hidden;letter-spacing:0.25px;box-shadow:0 0 0 1px #4f6a80;"><span style="display:inline-block;transform:scaleX(0.92)">Bus 6</span></div>
<svg style="left:769.6px;top:961.1px;" width="33.8" height="33.8" viewBox="0 0 33.8 33.8"><path d="M10.35 28.24A13.1 13.1 0 1 1 23.45 28.24" fill="none" stroke="#000" stroke-width="5.6"/><path d="M10.35 28.24A13.1 13.1 0 0 1 3.8 16.9" fill="none" stroke="#fb7f7d" stroke-width="5.6"/><circle cx="16.9" cy="16.9" r="10.1" fill="#fff"/></svg>
<div style="left:685.5px;top:1000.5px;width:79px;height:17.5px;background:#2b3754;border-radius:7px;box-shadow:inset 0 0 0 1px rgba(30,40,70,.35);"></div>
<div style="left:685.5px;top:1034.5px;width:115px;height:34.5px;background:#676673;border-radius:7px;line-height:34.5px;font-size:24px;color:#cdced6;text-align:center;white-space:nowrap;overflow:hidden;letter-spacing:0.25px;box-shadow:0 0 0 1px rgba(60,60,75,.6);"><span style="display:inline-block;transform:scaleX(0.92)">Bus 7</span></div>
<div style="left:687.5px;top:1080px;width:111px;height:33.5px;background:#2c3855;border-radius:2px;box-shadow:inset 0 0 0 1px rgba(30,40,70,.3);"></div>
<div style="left:685.5px;top:1126px;width:115px;height:35px;background:#191919;border-radius:7px;line-height:35px;font-size:24px;color:#4fdc70;text-align:center;white-space:nowrap;overflow:hidden;letter-spacing:0.25px;"><span style="display:inline-block;transform:scaleX(0.92)">Read</span></div>
<svg style="left:715.9px;top:1175.94px;" width="61.2" height="57.12" viewBox="0 0 60 56"><path d="M22 3.5C31 1 37.5 6 37 16C37 21 37.8 25.5 36.6 27.5C35 26.5 34.5 25 34.4 23.5C33.6 27.5 32 29.5 31 31.5C31.5 35 34 36.8 38 38.2C38.5 41 38.6 46 38.6 51H2.5C4 43 8.5 39.5 17 37.2C18.8 36 19.2 34 19 31C16.5 28 14.8 24 15 17C15 10 17 5 22 3.5Z" fill="#c566f7"/><path d="M42.2 37.5C42.2 33.5 43 31 46.8 31C50.6 31 51.4 33.5 51.4 37.5V39.5H42.2Z" fill="#c566f7"/><path d="M44 33.5H49.6M42.8 36.6H50.8" stroke="#314060" stroke-width="1.2"/><path d="M42.2 41H51.4L50.3 51.5H43.3Z" fill="#c566f7"/><rect x="44.6" y="51.5" width="4.4" height="3.2" fill="#c566f7"/></svg>
<svg style="left:706.5px;top:1249.8px;" width="74" height="74" viewBox="0 0 74 74"><path d="M21.3 64.19A31.4 31.4 0 1 1 52.7 64.19" fill="none" stroke="#000" stroke-width="7.2"/><path d="M37 5.6A31.4 31.4 0 0 0 21.3 64.19" fill="none" stroke="#fb7f7d" stroke-width="7.2"/><circle cx="37" cy="37" r="27.8" fill="#fff"/><path d="M23.6 60.21L27.35 53.71" stroke="#555" stroke-width="1.8"/></svg>
<div style="left:703.5px;top:1273.08px;width:80px;height:31px;line-height:31px;font-size:23.5px;color:#333;text-align:center;white-space:nowrap;letter-spacing:-0.8px;">-64</div>
<div style="left:687px;top:1334px;width:54px;height:33.5px;background:#1f2941;"></div>
<div style="left:745px;top:1334px;width:54px;height:33.5px;background:#1f2941;"></div>
<div style="left:679px;top:1336.29px;width:70px;height:32px;line-height:32px;font-size:24.5px;color:#e8e8ec;text-align:center;white-space:nowrap;transform:scaleX(0.93);transform-origin:50% 50%;">-7.2</div>
<div style="left:737px;top:1336.29px;width:70px;height:32px;line-height:32px;font-size:24.5px;color:#4fdc70;text-align:center;white-space:nowrap;transform:scaleX(0.81);transform-origin:50% 50%;">-35.1</div>
<div style="left:709.3px;top:1412px;width:3.4px;height:273.5px;background:#6b6b74;"></div>
<div style="left:684.8px;top:1412px;width:22px;height:273.5px;"><div style="left:0;top:2px;width:22px;height:2px;background:#b4bccb"></div><div style="left:0;top:36px;width:22px;height:2px;background:#b4bccb"></div><div style="left:0;top:70px;width:22px;height:2px;background:#b4bccb"></div><div style="left:0;top:104px;width:22px;height:2px;background:#b4bccb"></div><div style="left:0;top:140px;width:22px;height:2px;background:#b4bccb"></div><div style="left:0;top:162px;width:22px;height:2px;background:#b4bccb"></div><div style="left:0;top:190px;width:22px;height:2px;background:#b4bccb"></div><div style="left:0;top:212px;width:22px;height:2px;background:#b4bccb"></div><div style="left:0;top:236px;width:22px;height:2px;background:#b4bccb"></div><div style="left:0;top:248px;width:22px;height:2px;background:#b4bccb"></div><div style="left:0;top:270px;width:22px;height:2px;background:#b4bccb"></div><div style="left:14px;top:12px;width:8px;height:2px;background:#b4bccb"></div><div style="left:14px;top:24px;width:8px;height:2px;background:#b4bccb"></div><div style="left:14px;top:46px;width:8px;height:2px;background:#b4bccb"></div><div style="left:14px;top:58px;width:8px;height:2px;background:#b4bccb"></div><div style="left:14px;top:81px;width:8px;height:2px;background:#b4bccb"></div><div style="left:14px;top:93px;width:8px;height:2px;background:#b4bccb"></div><div style="left:14px;top:116px;width:8px;height:2px;background:#b4bccb"></div><div style="left:14px;top:128px;width:8px;height:2px;background:#b4bccb"></div><div style="left:14px;top:146px;width:8px;height:2px;background:#b4bccb"></div><div style="left:14px;top:151px;width:8px;height:2px;background:#b4bccb"></div><div style="left:14px;top:156px;width:8px;height:2px;background:#b4bccb"></div><div style="left:14px;top:168px;width:8px;height:2px;background:#b4bccb"></div><div style="left:14px;top:173px;width:8px;height:2px;background:#b4bccb"></div><div style="left:14px;top:179px;width:8px;height:2px;background:#b4bccb"></div><div style="left:14px;top:184px;width:8px;height:2px;background:#b4bccb"></div><div style="left:14px;top:196px;width:8px;height:2px;background:#b4bccb"></div><div style="left:14px;top:201px;width:8px;height:2px;background:#b4bccb"></div><div style="left:14px;top:206px;width:8px;height:2px;background:#b4bccb"></div><div style="left:14px;top:218px;width:8px;height:2px;background:#b4bccb"></div><div style="left:14px;top:224px;width:8px;height:2px;background:#b4bccb"></div><div style="left:14px;top:230px;width:8px;height:2px;background:#b4bccb"></div><div style="left:14px;top:259px;width:8px;height:2px;background:#b4bccb"></div><div style="left:14px;top:242px;width:8px;height:2px;background:#b4bccb"></div></div>
<div style="left:707.3px;top:1412px;width:79.2px;height:273.5px;"><div style="right:29.3px;top:-5px;width:40px;height:16px;line-height:16px;font-size:15.3px;text-align:right;color:#cfd3dc;letter-spacing:-0.2px">0</div><div style="right:19.5px;top:1.9px;width:6.5px;height:1.6px;background:#cfd3dc"></div><div style="right:29.3px;top:13.1px;width:40px;height:16px;line-height:16px;font-size:15.3px;text-align:right;color:#cfd3dc;letter-spacing:-0.2px">3</div><div style="right:19.5px;top:20px;width:6.5px;height:1.6px;background:#cfd3dc"></div><div style="right:29.3px;top:31.1px;width:40px;height:16px;line-height:16px;font-size:15.3px;text-align:right;color:#cfd3dc;letter-spacing:-0.2px">6</div><div style="right:19.5px;top:38px;width:6.5px;height:1.6px;background:#cfd3dc"></div><div style="right:29.3px;top:49.2px;width:40px;height:16px;line-height:16px;font-size:15.3px;text-align:right;color:#cfd3dc;letter-spacing:-0.2px">9</div><div style="right:19.5px;top:56.1px;width:6.5px;height:1.6px;background:#cfd3dc"></div><div style="right:29.3px;top:67.2px;width:40px;height:16px;line-height:16px;font-size:15.3px;text-align:right;color:#cfd3dc;letter-spacing:-0.2px">12</div><div style="right:19.5px;top:74.1px;width:6.5px;height:1.6px;background:#cfd3dc"></div><div style="right:29.3px;top:85.3px;width:40px;height:16px;line-height:16px;font-size:15.3px;text-align:right;color:#cfd3dc;letter-spacing:-0.2px">15</div><div style="right:19.5px;top:92.2px;width:6.5px;height:1.6px;background:#cfd3dc"></div><div style="right:29.3px;top:103.3px;width:40px;height:16px;line-height:16px;font-size:15.3px;text-align:right;color:#cfd3dc;letter-spacing:-0.2px">18</div><div style="right:19.5px;top:110.2px;width:6.5px;height:1.6px;background:#cfd3dc"></div><div style="right:29.3px;top:121.3px;width:40px;height:16px;line-height:16px;font-size:15.3px;text-align:right;color:#cfd3dc;letter-spacing:-0.2px">21</div><div style="right:19.5px;top:128.2px;width:6.5px;height:1.6px;background:#cfd3dc"></div><div style="right:29.3px;top:139.3px;width:40px;height:16px;line-height:16px;font-size:15.3px;text-align:right;color:#cfd3dc;letter-spacing:-0.2px">24</div><div style="right:19.5px;top:146.2px;width:6.5px;height:1.6px;background:#cfd3dc"></div><div style="right:29.3px;top:163.1px;width:40px;height:16px;line-height:16px;font-size:15.3px;text-align:right;color:#cfd3dc;letter-spacing:-0.2px">30</div><div style="right:19.5px;top:170px;width:6.5px;height:1.6px;background:#cfd3dc"></div><div style="right:29.3px;top:183.3px;width:40px;height:16px;line-height:16px;font-size:15.3px;text-align:right;color:#cfd3dc;letter-spacing:-0.2px">35</div><div style="right:19.5px;top:190.2px;width:6.5px;height:1.6px;background:#cfd3dc"></div><div style="right:29.3px;top:203.6px;width:40px;height:16px;line-height:16px;font-size:15.3px;text-align:right;color:#cfd3dc;letter-spacing:-0.2px">40</div><div style="right:19.5px;top:210.5px;width:6.5px;height:1.6px;background:#cfd3dc"></div><div style="right:29.3px;top:223.3px;width:40px;height:16px;line-height:16px;font-size:15.3px;text-align:right;color:#cfd3dc;letter-spacing:-0.2px">45</div><div style="right:19.5px;top:230.2px;width:6.5px;height:1.6px;background:#cfd3dc"></div><div style="right:29.3px;top:243.6px;width:40px;height:16px;line-height:16px;font-size:15.3px;text-align:right;color:#cfd3dc;letter-spacing:-0.2px">50</div><div style="right:19.5px;top:250.5px;width:6.5px;height:1.6px;background:#cfd3dc"></div><div style="right:29.3px;top:263.1px;width:40px;height:16px;line-height:16px;font-size:15.3px;text-align:right;color:#cfd3dc;letter-spacing:-0.2px">60</div><div style="right:19.5px;top:270px;width:6.5px;height:1.6px;background:#cfd3dc"></div><div style="right:19.2px;top:1px;width:1.7px;opacity:.85;height:271.5px;background:repeating-linear-gradient(#cfd3dc 0,#cfd3dc 1.9px,transparent 1.9px,transparent 4.3px)"></div><div style="right:0;top:0;width:19.2px;height:273.5px;background:linear-gradient(#2b3034 0,#2b3034 19.5px,#28282c 20px,#332c30 50px,#32302f 160px,#33322e 100%);box-shadow:0 0 0 .5px #1a2030"></div></div>
<div style="left:768.8px;top:1668px;width:6.2px;height:16px;background:linear-gradient(to top,#f8c022 0%,#f9a033 28%,#fb8048 50%,#fc6a62 70%,#fb6068 100%);background-size:6.2px 270.5px;background-position:0 100%;background-repeat:no-repeat;"></div>
<div style="left:768.8px;top:1649.5px;width:6.2px;height:2.4px;background:#f9a033;"></div>
<div style="left:694px;top:1524px;width:34px;height:70px;background:#fff;border-radius:4px;box-shadow:0 2px 5px rgba(10,15,40,.45),0 0 0 .5px rgba(200,210,230,.5);"></div>
<div style="left:694px;top:1555.7px;width:34px;height:2px;background:#000;"></div>
<div style="left:745.5px;top:1696.5px;width:55px;height:34.5px;background:#676673;border-radius:7px 0 0 7px;"></div>
<div style="left:772px;top:1696.5px;width:1.3px;height:34.5px;background:#4c4b57;"></div>
<div style="left:798.3px;top:1696.5px;width:1.3px;height:34.5px;background:#4c4b57;"></div>
<div style="left:743.5px;top:1696.82px;width:30px;height:35px;line-height:35px;font-size:27px;color:#fff;text-align:center;white-space:nowrap;">R</div>
<div style="left:770.5px;top:1696.82px;width:30px;height:35px;line-height:35px;font-size:27px;color:#fff;text-align:center;white-space:nowrap;">I</div>
<div style="left:685.5px;top:1737px;width:54.5px;height:34.5px;background:#676673;border-radius:7px;line-height:34.5px;font-size:28px;color:#fff;text-align:center;white-space:nowrap;overflow:hidden;box-shadow:0 0 0 1px rgba(60,60,75,.6);">M</div>
<div style="left:745.5px;top:1737px;width:54.5px;height:34.5px;background:#676673;border-radius:7px;line-height:34.5px;font-size:28px;color:#fff;text-align:center;white-space:nowrap;overflow:hidden;box-shadow:0 0 0 1px rgba(60,60,75,.6);">S</div>
<div style="left:809.2px;top:863.5px;width:1.6px;height:930px;background:#7a9cb2;"></div>
<div style="left:819.5px;top:863.5px;width:115px;height:40px;background:#2a3652;border-radius:0 0 8px 8px;box-shadow:inset 0 0 0 1px rgba(30,40,70,.35);"></div>
<div style="left:819.5px;top:921px;width:79px;height:34px;background:#7fa1b2;border-radius:7px;line-height:34px;font-size:24px;color:#f1f3f6;text-align:center;white-space:nowrap;overflow:hidden;letter-spacing:0.25px;box-shadow:0 0 0 1px #4f6a80;"><span style="display:inline-block;transform:scaleX(0.92)">Bus 5</span></div>
<svg style="left:903.6px;top:921.1px;" width="33.8" height="33.8" viewBox="0 0 33.8 33.8"><path d="M10.35 28.24A13.1 13.1 0 1 1 23.45 28.24" fill="none" stroke="#000" stroke-width="5.6"/><path d="M10.35 28.24A13.1 13.1 0 0 1 4.09 19.62" fill="none" stroke="#fb7f7d" stroke-width="5.6"/><circle cx="16.9" cy="16.9" r="10.1" fill="#fff"/></svg>
<div style="left:819.5px;top:961px;width:79px;height:34px;background:#7fa1b2;border-radius:7px;line-height:34px;font-size:24px;color:#f1f3f6;text-align:center;white-space:nowrap;overflow:hidden;letter-spacing:0.25px;box-shadow:0 0 0 1px #4f6a80;"><span style="display:inline-block;transform:scaleX(0.92)">Bus 6</span></div>
<svg style="left:903.6px;top:961.1px;" width="33.8" height="33.8" viewBox="0 0 33.8 33.8"><path d="M10.35 28.24A13.1 13.1 0 1 1 23.45 28.24" fill="none" stroke="#000" stroke-width="5.6"/><path d="M10.35 28.24A13.1 13.1 0 0 1 3.8 16.9" fill="none" stroke="#fb7f7d" stroke-width="5.6"/><circle cx="16.9" cy="16.9" r="10.1" fill="#fff"/></svg>
<div style="left:819.5px;top:1000.5px;width:79px;height:17.5px;background:#2b3754;border-radius:7px;box-shadow:inset 0 0 0 1px rgba(30,40,70,.35);"></div>
<div style="left:819.5px;top:1034.5px;width:115px;height:34.5px;background:#676673;border-radius:7px;line-height:34.5px;font-size:24px;color:#cdced6;text-align:center;white-space:nowrap;overflow:hidden;letter-spacing:0.25px;box-shadow:0 0 0 1px rgba(60,60,75,.6);"><span style="display:inline-block;transform:scaleX(0.92)">Bus 7</span></div>
<div style="left:821.5px;top:1080px;width:111px;height:33.5px;background:#2c3855;border-radius:2px;box-shadow:inset 0 0 0 1px rgba(30,40,70,.3);"></div>
<div style="left:819.5px;top:1126px;width:115px;height:35px;background:#191919;border-radius:7px;line-height:35px;font-size:24px;color:#4fdc70;text-align:center;white-space:nowrap;overflow:hidden;letter-spacing:0.25px;"><span style="display:inline-block;transform:scaleX(0.92)">Read</span></div>
<svg style="left:849.9px;top:1175.94px;" width="61.2" height="57.12" viewBox="0 0 60 56"><path d="M22 3.5C31 1 37.5 6 37 16C37 21 37.8 25.5 36.6 27.5C35 26.5 34.5 25 34.4 23.5C33.6 27.5 32 29.5 31 31.5C31.5 35 34 36.8 38 38.2C38.5 41 38.6 46 38.6 51H2.5C4 43 8.5 39.5 17 37.2C18.8 36 19.2 34 19 31C16.5 28 14.8 24 15 17C15 10 17 5 22 3.5Z" fill="#a77bf8"/><path d="M42.2 37.5C42.2 33.5 43 31 46.8 31C50.6 31 51.4 33.5 51.4 37.5V39.5H42.2Z" fill="#a77bf8"/><path d="M44 33.5H49.6M42.8 36.6H50.8" stroke="#314060" stroke-width="1.2"/><path d="M42.2 41H51.4L50.3 51.5H43.3Z" fill="#a77bf8"/><rect x="44.6" y="51.5" width="4.4" height="3.2" fill="#a77bf8"/></svg>
<svg style="left:840.5px;top:1249.8px;" width="74" height="74" viewBox="0 0 74 74"><path d="M21.3 64.19A31.4 31.4 0 1 1 52.7 64.19" fill="none" stroke="#000" stroke-width="7.2"/><path d="M37 5.6A31.4 31.4 0 0 1 53.8 63.53" fill="none" stroke="#fb7f7d" stroke-width="7.2"/><circle cx="37" cy="37" r="27.8" fill="#fff"/><path d="M51.34 59.64L47.33 53.31" stroke="#555" stroke-width="1.8"/></svg>
<div style="left:837.5px;top:1273.08px;width:80px;height:31px;line-height:31px;font-size:23.5px;color:#333;text-align:center;white-space:nowrap;letter-spacing:-0.8px;">+63</div>
<div style="left:821px;top:1334px;width:54px;height:33.5px;background:#1f2941;"></div>
<div style="left:879px;top:1334px;width:54px;height:33.5px;background:#1f2941;"></div>
<div style="left:813px;top:1336.29px;width:70px;height:32px;line-height:32px;font-size:24.5px;color:#e8e8ec;text-align:center;white-space:nowrap;transform:scaleX(0.93);transform-origin:50% 50%;">-6.4</div>
<div style="left:871px;top:1336.29px;width:70px;height:32px;line-height:32px;font-size:24.5px;color:#4fdc70;text-align:center;white-space:nowrap;transform:scaleX(0.81);transform-origin:50% 50%;">-34.4</div>
<div style="left:843.3px;top:1412px;width:3.4px;height:273.5px;background:#6b6b74;"></div>
<div style="left:818.8px;top:1412px;width:22px;height:273.5px;"><div style="left:0;top:2px;width:22px;height:2px;background:#b4bccb"></div><div style="left:0;top:36px;width:22px;height:2px;background:#b4bccb"></div><div style="left:0;top:70px;width:22px;height:2px;background:#b4bccb"></div><div style="left:0;top:104px;width:22px;height:2px;background:#b4bccb"></div><div style="left:0;top:140px;width:22px;height:2px;background:#b4bccb"></div><div style="left:0;top:162px;width:22px;height:2px;background:#b4bccb"></div><div style="left:0;top:190px;width:22px;height:2px;background:#b4bccb"></div><div style="left:0;top:212px;width:22px;height:2px;background:#b4bccb"></div><div style="left:0;top:236px;width:22px;height:2px;background:#b4bccb"></div><div style="left:0;top:248px;width:22px;height:2px;background:#b4bccb"></div><div style="left:0;top:270px;width:22px;height:2px;background:#b4bccb"></div><div style="left:14px;top:12px;width:8px;height:2px;background:#b4bccb"></div><div style="left:14px;top:24px;width:8px;height:2px;background:#b4bccb"></div><div style="left:14px;top:46px;width:8px;height:2px;background:#b4bccb"></div><div style="left:14px;top:58px;width:8px;height:2px;background:#b4bccb"></div><div style="left:14px;top:81px;width:8px;height:2px;background:#b4bccb"></div><div style="left:14px;top:93px;width:8px;height:2px;background:#b4bccb"></div><div style="left:14px;top:116px;width:8px;height:2px;background:#b4bccb"></div><div style="left:14px;top:128px;width:8px;height:2px;background:#b4bccb"></div><div style="left:14px;top:146px;width:8px;height:2px;background:#b4bccb"></div><div style="left:14px;top:151px;width:8px;height:2px;background:#b4bccb"></div><div style="left:14px;top:156px;width:8px;height:2px;background:#b4bccb"></div><div style="left:14px;top:168px;width:8px;height:2px;background:#b4bccb"></div><div style="left:14px;top:173px;width:8px;height:2px;background:#b4bccb"></div><div style="left:14px;top:179px;width:8px;height:2px;background:#b4bccb"></div><div style="left:14px;top:184px;width:8px;height:2px;background:#b4bccb"></div><div style="left:14px;top:196px;width:8px;height:2px;background:#b4bccb"></div><div style="left:14px;top:201px;width:8px;height:2px;background:#b4bccb"></div><div style="left:14px;top:206px;width:8px;height:2px;background:#b4bccb"></div><div style="left:14px;top:218px;width:8px;height:2px;background:#b4bccb"></div><div style="left:14px;top:224px;width:8px;height:2px;background:#b4bccb"></div><div style="left:14px;top:230px;width:8px;height:2px;background:#b4bccb"></div><div style="left:14px;top:259px;width:8px;height:2px;background:#b4bccb"></div><div style="left:14px;top:242px;width:8px;height:2px;background:#b4bccb"></div></div>
<div style="left:841.3px;top:1412px;width:79.2px;height:273.5px;"><div style="right:29.3px;top:-5px;width:40px;height:16px;line-height:16px;font-size:15.3px;text-align:right;color:#cfd3dc;letter-spacing:-0.2px">0</div><div style="right:19.5px;top:1.9px;width:6.5px;height:1.6px;background:#cfd3dc"></div><div style="right:29.3px;top:13.1px;width:40px;height:16px;line-height:16px;font-size:15.3px;text-align:right;color:#cfd3dc;letter-spacing:-0.2px">3</div><div style="right:19.5px;top:20px;width:6.5px;height:1.6px;background:#cfd3dc"></div><div style="right:29.3px;top:31.1px;width:40px;height:16px;line-height:16px;font-size:15.3px;text-align:right;color:#cfd3dc;letter-spacing:-0.2px">6</div><div style="right:19.5px;top:38px;width:6.5px;height:1.6px;background:#cfd3dc"></div><div style="right:29.3px;top:49.2px;width:40px;height:16px;line-height:16px;font-size:15.3px;text-align:right;color:#cfd3dc;letter-spacing:-0.2px">9</div><div style="right:19.5px;top:56.1px;width:6.5px;height:1.6px;background:#cfd3dc"></div><div style="right:29.3px;top:67.2px;width:40px;height:16px;line-height:16px;font-size:15.3px;text-align:right;color:#cfd3dc;letter-spacing:-0.2px">12</div><div style="right:19.5px;top:74.1px;width:6.5px;height:1.6px;background:#cfd3dc"></div><div style="right:29.3px;top:85.3px;width:40px;height:16px;line-height:16px;font-size:15.3px;text-align:right;color:#cfd3dc;letter-spacing:-0.2px">15</div><div style="right:19.5px;top:92.2px;width:6.5px;height:1.6px;background:#cfd3dc"></div><div style="right:29.3px;top:103.3px;width:40px;height:16px;line-height:16px;font-size:15.3px;text-align:right;color:#cfd3dc;letter-spacing:-0.2px">18</div><div style="right:19.5px;top:110.2px;width:6.5px;height:1.6px;background:#cfd3dc"></div><div style="right:29.3px;top:121.3px;width:40px;height:16px;line-height:16px;font-size:15.3px;text-align:right;color:#cfd3dc;letter-spacing:-0.2px">21</div><div style="right:19.5px;top:128.2px;width:6.5px;height:1.6px;background:#cfd3dc"></div><div style="right:29.3px;top:139.3px;width:40px;height:16px;line-height:16px;font-size:15.3px;text-align:right;color:#cfd3dc;letter-spacing:-0.2px">24</div><div style="right:19.5px;top:146.2px;width:6.5px;height:1.6px;background:#cfd3dc"></div><div style="right:29.3px;top:163.1px;width:40px;height:16px;line-height:16px;font-size:15.3px;text-align:right;color:#cfd3dc;letter-spacing:-0.2px">30</div><div style="right:19.5px;top:170px;width:6.5px;height:1.6px;background:#cfd3dc"></div><div style="right:29.3px;top:183.3px;width:40px;height:16px;line-height:16px;font-size:15.3px;text-align:right;color:#cfd3dc;letter-spacing:-0.2px">35</div><div style="right:19.5px;top:190.2px;width:6.5px;height:1.6px;background:#cfd3dc"></div><div style="right:29.3px;top:203.6px;width:40px;height:16px;line-height:16px;font-size:15.3px;text-align:right;color:#cfd3dc;letter-spacing:-0.2px">40</div><div style="right:19.5px;top:210.5px;width:6.5px;height:1.6px;background:#cfd3dc"></div><div style="right:29.3px;top:223.3px;width:40px;height:16px;line-height:16px;font-size:15.3px;text-align:right;color:#cfd3dc;letter-spacing:-0.2px">45</div><div style="right:19.5px;top:230.2px;width:6.5px;height:1.6px;background:#cfd3dc"></div><div style="right:29.3px;top:243.6px;width:40px;height:16px;line-height:16px;font-size:15.3px;text-align:right;color:#cfd3dc;letter-spacing:-0.2px">50</div><div style="right:19.5px;top:250.5px;width:6.5px;height:1.6px;background:#cfd3dc"></div><div style="right:29.3px;top:263.1px;width:40px;height:16px;line-height:16px;font-size:15.3px;text-align:right;color:#cfd3dc;letter-spacing:-0.2px">60</div><div style="right:19.5px;top:270px;width:6.5px;height:1.6px;background:#cfd3dc"></div><div style="right:19.2px;top:1px;width:1.7px;opacity:.85;height:271.5px;background:repeating-linear-gradient(#cfd3dc 0,#cfd3dc 1.9px,transparent 1.9px,transparent 4.3px)"></div><div style="right:0;top:0;width:19.2px;height:273.5px;background:linear-gradient(#2b3034 0,#2b3034 19.5px,#28282c 20px,#332c30 50px,#32302f 160px,#33322e 100%);box-shadow:0 0 0 .5px #1a2030"></div></div>
<div style="left:912.7px;top:1664px;width:6.2px;height:20px;background:linear-gradient(to top,#f8c022 0%,#f9a033 28%,#fb8048 50%,#fc6a62 70%,#fb6068 100%);background-size:6.2px 270.5px;background-position:0 100%;background-repeat:no-repeat;"></div>
<div style="left:912.7px;top:1653.5px;width:6.2px;height:2.4px;background:#f9a033;"></div>
<div style="left:828px;top:1519.5px;width:34px;height:70px;background:#fff;border-radius:4px;box-shadow:0 2px 5px rgba(10,15,40,.45),0 0 0 .5px rgba(200,210,230,.5);"></div>
<div style="left:828px;top:1551.2px;width:34px;height:2px;background:#000;"></div>
<div style="left:879.5px;top:1696.5px;width:55px;height:34.5px;background:#676673;border-radius:7px 0 0 7px;"></div>
<div style="left:906px;top:1696.5px;width:1.3px;height:34.5px;background:#4c4b57;"></div>
<div style="left:932.3px;top:1696.5px;width:1.3px;height:34.5px;background:#4c4b57;"></div>
<div style="left:877.5px;top:1696.82px;width:30px;height:35px;line-height:35px;font-size:27px;color:#fff;text-align:center;white-space:nowrap;">R</div>
<div style="left:904.5px;top:1696.82px;width:30px;height:35px;line-height:35px;font-size:27px;color:#fff;text-align:center;white-space:nowrap;">I</div>
<div style="left:819.5px;top:1737px;width:54.5px;height:34.5px;background:#676673;border-radius:7px;line-height:34.5px;font-size:28px;color:#fff;text-align:center;white-space:nowrap;overflow:hidden;box-shadow:0 0 0 1px rgba(60,60,75,.6);">M</div>
<div style="left:879.5px;top:1737px;width:54.5px;height:34.5px;background:#676673;border-radius:7px;line-height:34.5px;font-size:28px;color:#fff;text-align:center;white-space:nowrap;overflow:hidden;box-shadow:0 0 0 1px rgba(60,60,75,.6);">S</div>
<div style="left:943.2px;top:863.5px;width:1.6px;height:930px;background:#7a9cb2;"></div>
<div style="left:953.5px;top:863.5px;width:115px;height:40px;background:#2a3652;border-radius:0 0 8px 8px;box-shadow:inset 0 0 0 1px rgba(30,40,70,.35);"></div>
<div style="left:953.5px;top:921px;width:79px;height:34px;background:#7fa1b2;border-radius:7px;line-height:34px;font-size:24px;color:#f1f3f6;text-align:center;white-space:nowrap;overflow:hidden;letter-spacing:0.25px;box-shadow:0 0 0 1px #4f6a80;"><span style="display:inline-block;transform:scaleX(0.92)">Bus 1</span></div>
<svg style="left:1037.6px;top:921.1px;" width="33.8" height="33.8" viewBox="0 0 33.8 33.8"><path d="M10.35 28.24A13.1 13.1 0 1 1 23.45 28.24" fill="none" stroke="#000" stroke-width="5.6"/><circle cx="16.9" cy="16.9" r="10.1" fill="#fff"/></svg>
<div style="left:953.5px;top:961px;width:79px;height:34px;background:#7fa1b2;border-radius:7px;line-height:34px;font-size:24px;color:#f1f3f6;text-align:center;white-space:nowrap;overflow:hidden;letter-spacing:0.25px;box-shadow:0 0 0 1px #4f6a80;"><span style="display:inline-block;transform:scaleX(0.92)">Bus 2</span></div>
<svg style="left:1037.6px;top:961.1px;" width="33.8" height="33.8" viewBox="0 0 33.8 33.8"><path d="M10.35 28.24A13.1 13.1 0 1 1 23.45 28.24" fill="none" stroke="#000" stroke-width="5.6"/><path d="M10.35 28.24A13.1 13.1 0 0 1 4.09 14.18" fill="none" stroke="#fb7f7d" stroke-width="5.6"/><circle cx="16.9" cy="16.9" r="10.1" fill="#fff"/></svg>
<div style="left:953.5px;top:1000.5px;width:79px;height:17.5px;background:#2b3754;border-radius:7px;box-shadow:inset 0 0 0 1px rgba(30,40,70,.35);"></div>
<div style="left:953.5px;top:1034.5px;width:115px;height:34.5px;background:#676673;border-radius:7px;line-height:34.5px;font-size:24px;color:#cdced6;text-align:center;white-space:nowrap;overflow:hidden;letter-spacing:0.25px;box-shadow:0 0 0 1px rgba(60,60,75,.6);"><span style="display:inline-block;transform:scaleX(0.92)">St Out</span></div>
<div style="left:955.5px;top:1080px;width:111px;height:33.5px;background:#2c3855;border-radius:2px;box-shadow:inset 0 0 0 1px rgba(30,40,70,.3);"></div>
<div style="left:953.5px;top:1126px;width:115px;height:35px;background:#191919;border-radius:7px;line-height:35px;font-size:24px;color:#4fdc70;text-align:center;white-space:nowrap;overflow:hidden;letter-spacing:0.25px;"><span style="display:inline-block;transform:scaleX(0.92)">Read</span></div>
<svg style="left:982.1px;top:1177.16px;" width="58.8" height="54.88" viewBox="0 0 60 56"><rect x="7.2" y="3.2" width="45.6" height="19.6" fill="none" stroke="#8f8ef7" stroke-width="1.9"/><rect x="12" y="8.5" width="1.7" height="1.7" fill="#8f8ef7"/><rect x="17" y="8.5" width="1.7" height="1.7" fill="#8f8ef7"/><rect x="19.6" y="8.5" width="1.7" height="1.7" fill="#8f8ef7"/><rect x="22.2" y="8.5" width="1.7" height="1.7" fill="#8f8ef7"/><rect x="27.2" y="8.5" width="1.7" height="1.7" fill="#8f8ef7"/><rect x="29.8" y="8.5" width="1.7" height="1.7" fill="#8f8ef7"/><rect x="32.4" y="8.5" width="1.7" height="1.7" fill="#8f8ef7"/><rect x="37.4" y="8.5" width="1.7" height="1.7" fill="#8f8ef7"/><rect x="40" y="8.5" width="1.7" height="1.7" fill="#8f8ef7"/><rect x="42.6" y="8.5" width="1.7" height="1.7" fill="#8f8ef7"/><rect x="47.4" y="8.5" width="1.7" height="1.7" fill="#8f8ef7"/><rect x="12" y="12.3" width="1.7" height="1.7" fill="#8f8ef7"/><rect x="17" y="12.3" width="1.7" height="1.7" fill="#8f8ef7"/><rect x="19.6" y="12.3" width="1.7" height="1.7" fill="#8f8ef7"/><rect x="22.2" y="12.3" width="1.7" height="1.7" fill="#8f8ef7"/><rect x="27.2" y="12.3" width="1.7" height="1.7" fill="#8f8ef7"/><rect x="29.8" y="12.3" width="1.7" height="1.7" fill="#8f8ef7"/><rect x="32.4" y="12.3" width="1.7" height="1.7" fill="#8f8ef7"/><rect x="37.4" y="12.3" width="1.7" height="1.7" fill="#8f8ef7"/><rect x="40" y="12.3" width="1.7" height="1.7" fill="#8f8ef7"/><rect x="42.6" y="12.3" width="1.7" height="1.7" fill="#8f8ef7"/><rect x="47.4" y="12.3" width="1.7" height="1.7" fill="#8f8ef7"/><rect x="10.6" y="16.3" width="38.8" height="3" fill="none" stroke="#8f8ef7" stroke-width="1.3"/><path d="M16.5 51L43 24M43.5 51L17 24" stroke="#8f8ef7" stroke-width="2"/><circle cx="16.5" cy="51.2" r="2.5" fill="#8f8ef7"/><circle cx="43.5" cy="51.2" r="2.5" fill="#8f8ef7"/></svg>
<svg style="left:974.5px;top:1249.8px;" width="74" height="74" viewBox="0 0 74 74"><path d="M21.3 64.19A31.4 31.4 0 1 1 52.7 64.19" fill="none" stroke="#000" stroke-width="7.2"/><path d="M37 2L37 9.2" stroke="#fb7f7d" stroke-width="2.6"/><circle cx="37" cy="37" r="27.8" fill="#fff"/><path d="M37 10.2L37 17.7" stroke="#555" stroke-width="1.8"/></svg>
<div style="left:955px;top:1334px;width:54px;height:33.5px;background:#1f2941;"></div>
<div style="left:1013px;top:1334px;width:54px;height:33.5px;background:#1f2941;"></div>
<div style="left:947px;top:1336.29px;width:70px;height:32px;line-height:32px;font-size:24.5px;color:#e8e8ec;text-align:center;white-space:nowrap;transform:scaleX(0.93);transform-origin:50% 50%;">-3.5</div>
<div style="left:1005px;top:1336.29px;width:70px;height:32px;line-height:32px;font-size:24.5px;color:#4fdc70;text-align:center;white-space:nowrap;transform:scaleX(0.81);transform-origin:50% 50%;">-15.6</div>
<div style="left:977.3px;top:1412px;width:3.4px;height:273.5px;background:#6b6b74;"></div>
<div style="left:952.8px;top:1412px;width:22px;height:273.5px;"><div style="left:0;top:2px;width:22px;height:2px;background:#b4bccb"></div><div style="left:0;top:36px;width:22px;height:2px;background:#b4bccb"></div><div style="left:0;top:70px;width:22px;height:2px;background:#b4bccb"></div><div style="left:0;top:104px;width:22px;height:2px;background:#b4bccb"></div><div style="left:0;top:140px;width:22px;height:2px;background:#b4bccb"></div><div style="left:0;top:162px;width:22px;height:2px;background:#b4bccb"></div><div style="left:0;top:190px;width:22px;height:2px;background:#b4bccb"></div><div style="left:0;top:212px;width:22px;height:2px;background:#b4bccb"></div><div style="left:0;top:236px;width:22px;height:2px;background:#b4bccb"></div><div style="left:0;top:248px;width:22px;height:2px;background:#b4bccb"></div><div style="left:0;top:270px;width:22px;height:2px;background:#b4bccb"></div><div style="left:14px;top:12px;width:8px;height:2px;background:#b4bccb"></div><div style="left:14px;top:24px;width:8px;height:2px;background:#b4bccb"></div><div style="left:14px;top:46px;width:8px;height:2px;background:#b4bccb"></div><div style="left:14px;top:58px;width:8px;height:2px;background:#b4bccb"></div><div style="left:14px;top:81px;width:8px;height:2px;background:#b4bccb"></div><div style="left:14px;top:93px;width:8px;height:2px;background:#b4bccb"></div><div style="left:14px;top:116px;width:8px;height:2px;background:#b4bccb"></div><div style="left:14px;top:128px;width:8px;height:2px;background:#b4bccb"></div><div style="left:14px;top:146px;width:8px;height:2px;background:#b4bccb"></div><div style="left:14px;top:151px;width:8px;height:2px;background:#b4bccb"></div><div style="left:14px;top:156px;width:8px;height:2px;background:#b4bccb"></div><div style="left:14px;top:168px;width:8px;height:2px;background:#b4bccb"></div><div style="left:14px;top:173px;width:8px;height:2px;background:#b4bccb"></div><div style="left:14px;top:179px;width:8px;height:2px;background:#b4bccb"></div><div style="left:14px;top:184px;width:8px;height:2px;background:#b4bccb"></div><div style="left:14px;top:196px;width:8px;height:2px;background:#b4bccb"></div><div style="left:14px;top:201px;width:8px;height:2px;background:#b4bccb"></div><div style="left:14px;top:206px;width:8px;height:2px;background:#b4bccb"></div><div style="left:14px;top:218px;width:8px;height:2px;background:#b4bccb"></div><div style="left:14px;top:224px;width:8px;height:2px;background:#b4bccb"></div><div style="left:14px;top:230px;width:8px;height:2px;background:#b4bccb"></div><div style="left:14px;top:259px;width:8px;height:2px;background:#b4bccb"></div><div style="left:14px;top:242px;width:8px;height:2px;background:#b4bccb"></div></div>
<div style="left:975.3px;top:1412px;width:79.2px;height:273.5px;"><div style="right:29.3px;top:-5px;width:40px;height:16px;line-height:16px;font-size:15.3px;text-align:right;color:#cfd3dc;letter-spacing:-0.2px">0</div><div style="right:19.5px;top:1.9px;width:6.5px;height:1.6px;background:#cfd3dc"></div><div style="right:29.3px;top:13.1px;width:40px;height:16px;line-height:16px;font-size:15.3px;text-align:right;color:#cfd3dc;letter-spacing:-0.2px">3</div><div style="right:19.5px;top:20px;width:6.5px;height:1.6px;background:#cfd3dc"></div><div style="right:29.3px;top:31.1px;width:40px;height:16px;line-height:16px;font-size:15.3px;text-align:right;color:#cfd3dc;letter-spacing:-0.2px">6</div><div style="right:19.5px;top:38px;width:6.5px;height:1.6px;background:#cfd3dc"></div><div style="right:29.3px;top:49.2px;width:40px;height:16px;line-height:16px;font-size:15.3px;text-align:right;color:#cfd3dc;letter-spacing:-0.2px">9</div><div style="right:19.5px;top:56.1px;width:6.5px;height:1.6px;background:#cfd3dc"></div><div style="right:29.3px;top:67.2px;width:40px;height:16px;line-height:16px;font-size:15.3px;text-align:right;color:#cfd3dc;letter-spacing:-0.2px">12</div><div style="right:19.5px;top:74.1px;width:6.5px;height:1.6px;background:#cfd3dc"></div><div style="right:29.3px;top:85.3px;width:40px;height:16px;line-height:16px;font-size:15.3px;text-align:right;color:#cfd3dc;letter-spacing:-0.2px">15</div><div style="right:19.5px;top:92.2px;width:6.5px;height:1.6px;background:#cfd3dc"></div><div style="right:29.3px;top:103.3px;width:40px;height:16px;line-height:16px;font-size:15.3px;text-align:right;color:#cfd3dc;letter-spacing:-0.2px">18</div><div style="right:19.5px;top:110.2px;width:6.5px;height:1.6px;background:#cfd3dc"></div><div style="right:29.3px;top:121.3px;width:40px;height:16px;line-height:16px;font-size:15.3px;text-align:right;color:#cfd3dc;letter-spacing:-0.2px">21</div><div style="right:19.5px;top:128.2px;width:6.5px;height:1.6px;background:#cfd3dc"></div><div style="right:29.3px;top:139.3px;width:40px;height:16px;line-height:16px;font-size:15.3px;text-align:right;color:#cfd3dc;letter-spacing:-0.2px">24</div><div style="right:19.5px;top:146.2px;width:6.5px;height:1.6px;background:#cfd3dc"></div><div style="right:29.3px;top:163.1px;width:40px;height:16px;line-height:16px;font-size:15.3px;text-align:right;color:#cfd3dc;letter-spacing:-0.2px">30</div><div style="right:19.5px;top:170px;width:6.5px;height:1.6px;background:#cfd3dc"></div><div style="right:29.3px;top:183.3px;width:40px;height:16px;line-height:16px;font-size:15.3px;text-align:right;color:#cfd3dc;letter-spacing:-0.2px">35</div><div style="right:19.5px;top:190.2px;width:6.5px;height:1.6px;background:#cfd3dc"></div><div style="right:29.3px;top:203.6px;width:40px;height:16px;line-height:16px;font-size:15.3px;text-align:right;color:#cfd3dc;letter-spacing:-0.2px">40</div><div style="right:19.5px;top:210.5px;width:6.5px;height:1.6px;background:#cfd3dc"></div><div style="right:29.3px;top:223.3px;width:40px;height:16px;line-height:16px;font-size:15.3px;text-align:right;color:#cfd3dc;letter-spacing:-0.2px">45</div><div style="right:19.5px;top:230.2px;width:6.5px;height:1.6px;background:#cfd3dc"></div><div style="right:29.3px;top:243.6px;width:40px;height:16px;line-height:16px;font-size:15.3px;text-align:right;color:#cfd3dc;letter-spacing:-0.2px">50</div><div style="right:19.5px;top:250.5px;width:6.5px;height:1.6px;background:#cfd3dc"></div><div style="right:29.3px;top:263.1px;width:40px;height:16px;line-height:16px;font-size:15.3px;text-align:right;color:#cfd3dc;letter-spacing:-0.2px">60</div><div style="right:19.5px;top:270px;width:6.5px;height:1.6px;background:#cfd3dc"></div><div style="right:19.2px;top:1px;width:1.7px;opacity:.85;height:271.5px;background:repeating-linear-gradient(#cfd3dc 0,#cfd3dc 1.9px,transparent 1.9px,transparent 4.3px)"></div><div style="right:0;top:0;width:19.2px;height:273.5px;background:linear-gradient(#2b3034 0,#2b3034 19.5px,#28282c 20px,#332c30 50px,#32302f 160px,#33322e 100%);box-shadow:0 0 0 .5px #1a2030"></div></div>
<div style="left:1036.8px;top:1538px;width:6.2px;height:146px;background:linear-gradient(to top,#f8c022 0%,#f9a033 28%,#fb8048 50%,#fc6a62 70%,#fb6068 100%);background-size:6.2px 270.5px;background-position:0 100%;background-repeat:no-repeat;"></div>
<div style="left:1036.8px;top:1515.5px;width:6.2px;height:2.4px;background:#fc6466;"></div>
<div style="left:1046.7px;top:1558px;width:6.2px;height:126px;background:linear-gradient(to top,#f8c022 0%,#f9a033 28%,#fb8048 50%,#fc6a62 70%,#fb6068 100%);background-size:6.2px 270.5px;background-position:0 100%;background-repeat:no-repeat;"></div>
<div style="left:1046.7px;top:1551.5px;width:6.2px;height:2.4px;background:#fb7a4c;"></div>
<div style="left:962px;top:1488px;width:34px;height:70px;background:#fff;border-radius:4px;box-shadow:0 2px 5px rgba(10,15,40,.45),0 0 0 .5px rgba(200,210,230,.5);"></div>
<div style="left:962px;top:1519.7px;width:34px;height:2px;background:#000;"></div>
<div style="left:953.5px;top:1737px;width:54.5px;height:34.5px;background:#676673;border-radius:7px;line-height:34.5px;font-size:28px;color:#fff;text-align:center;white-space:nowrap;overflow:hidden;box-shadow:0 0 0 1px rgba(60,60,75,.6);">M</div>
<div style="left:1013.5px;top:1737px;width:54.5px;height:34.5px;background:#676673;border-radius:7px;line-height:34.5px;font-size:28px;color:#fff;text-align:center;white-space:nowrap;overflow:hidden;box-shadow:0 0 0 1px rgba(60,60,75,.6);">S</div>
<div style="left:1077.2px;top:863.5px;width:1.6px;height:930px;background:#7a9cb2;"></div>
<div style="left:1087.5px;top:863.5px;width:115px;height:40px;background:#2a3652;border-radius:0 0 8px 8px;box-shadow:inset 0 0 0 1px rgba(30,40,70,.35);"></div>
<div style="left:1087.5px;top:921px;width:79px;height:34px;background:#7fa1b2;border-radius:7px;line-height:34px;font-size:24px;color:#f1f3f6;text-align:center;white-space:nowrap;overflow:hidden;letter-spacing:0.25px;box-shadow:0 0 0 1px #4f6a80;"><span style="display:inline-block;transform:scaleX(0.92)">Bus 4</span></div>
<svg style="left:1171.6px;top:921.1px;" width="33.8" height="33.8" viewBox="0 0 33.8 33.8"><path d="M10.35 28.24A13.1 13.1 0 1 1 23.45 28.24" fill="none" stroke="#000" stroke-width="5.6"/><path d="M10.35 28.24A13.1 13.1 0 0 1 4.44 20.95" fill="none" stroke="#fb7f7d" stroke-width="5.6"/><circle cx="16.9" cy="16.9" r="10.1" fill="#fff"/></svg>
<div style="left:1087.5px;top:961px;width:79px;height:34px;background:#7fa1b2;border-radius:7px;line-height:34px;font-size:24px;color:#f1f3f6;text-align:center;white-space:nowrap;overflow:hidden;letter-spacing:0.25px;box-shadow:0 0 0 1px #4f6a80;"><span style="display:inline-block;transform:scaleX(0.92)">Bus 2</span></div>
<svg style="left:1171.6px;top:961.1px;" width="33.8" height="33.8" viewBox="0 0 33.8 33.8"><path d="M10.35 28.24A13.1 13.1 0 1 1 23.45 28.24" fill="none" stroke="#000" stroke-width="5.6"/><path d="M10.35 28.24A13.1 13.1 0 0 1 4.09 14.18" fill="none" stroke="#fb7f7d" stroke-width="5.6"/><circle cx="16.9" cy="16.9" r="10.1" fill="#fff"/></svg>
<div style="left:1087.5px;top:1000.5px;width:79px;height:17.5px;background:#2b3754;border-radius:7px;box-shadow:inset 0 0 0 1px rgba(30,40,70,.35);"></div>
<div style="left:1087.5px;top:1034.5px;width:115px;height:34.5px;background:#676673;border-radius:7px;line-height:34.5px;font-size:24px;color:#cdced6;text-align:center;white-space:nowrap;overflow:hidden;letter-spacing:0.25px;box-shadow:0 0 0 1px rgba(60,60,75,.6);"><span style="display:inline-block;transform:scaleX(0.92)">St Out</span></div>
<div style="left:1089.5px;top:1080px;width:111px;height:33.5px;background:#2c3855;border-radius:2px;box-shadow:inset 0 0 0 1px rgba(30,40,70,.3);"></div>
<div style="left:1087.5px;top:1126px;width:115px;height:35px;background:#7fa1b2;border-radius:7px;line-height:35px;font-size:24px;color:#fff;text-align:center;white-space:nowrap;overflow:hidden;letter-spacing:0.25px;box-shadow:0 0 0 1px #4f6a80;"><span style="display:inline-block;transform:scaleX(0.92)">Read</span></div>
<svg style="left:1113.4px;top:1172.54px;" width="64.2" height="59.92" viewBox="0 0 60 56"><path d="M6.5 24.5L46.5 1.5" stroke="#6f8ff8" stroke-width="1.7"/><path d="M7 25.5H22C23 21.5 26 20.3 30.5 20.3C35 20.3 37 21.8 37.5 24.2C42 24 50.5 24.5 52 25.8V36H7Z" fill="#6f8ff8"/><rect x="7" y="31.5" width="45" height="5.8" fill="#6f8ff8"/><rect x="10.6" y="32.4" width="38" height="2.3" fill="none" stroke="#314060" stroke-width="1.1"/><path d="M9.5 37V54M49.5 37V54M28.2 37V52.5M32.2 37V52.5" stroke="#6f8ff8" stroke-width="2"/><path d="M26 53.3H34.5" stroke="#6f8ff8" stroke-width="2.2"/></svg>
<svg style="left:1108.5px;top:1249.8px;" width="74" height="74" viewBox="0 0 74 74"><path d="M21.3 64.19A31.4 31.4 0 1 1 52.7 64.19" fill="none" stroke="#000" stroke-width="7.2"/><path d="M37 2L37 9.2" stroke="#fb7f7d" stroke-width="2.6"/><circle cx="37" cy="37" r="27.8" fill="#fff"/><path d="M37 10.2L37 17.7" stroke="#555" stroke-width="1.8"/></svg>
<div style="left:1089px;top:1334px;width:54px;height:33.5px;background:#1f2941;"></div>
<div style="left:1147px;top:1334px;width:54px;height:33.5px;background:#1f2941;"></div>
<div style="left:1081px;top:1336.29px;width:70px;height:32px;line-height:32px;font-size:24.5px;color:#e8e8ec;text-align:center;white-space:nowrap;transform:scaleX(0.81);transform-origin:50% 50%;">-18.2</div>
<div style="left:1139px;top:1336.29px;width:70px;height:32px;line-height:32px;font-size:24.5px;color:#4fdc70;text-align:center;white-space:nowrap;transform:scaleX(0.81);transform-origin:50% 50%;">-19.3</div>
<div style="left:1111.3px;top:1412px;width:3.4px;height:273.5px;background:#6b6b74;"></div>
<div style="left:1086.8px;top:1412px;width:22px;height:273.5px;"><div style="left:0;top:2px;width:22px;height:2px;background:#b4bccb"></div><div style="left:0;top:36px;width:22px;height:2px;background:#b4bccb"></div><div style="left:0;top:70px;width:22px;height:2px;background:#b4bccb"></div><div style="left:0;top:104px;width:22px;height:2px;background:#b4bccb"></div><div style="left:0;top:140px;width:22px;height:2px;background:#b4bccb"></div><div style="left:0;top:162px;width:22px;height:2px;background:#b4bccb"></div><div style="left:0;top:190px;width:22px;height:2px;background:#b4bccb"></div><div style="left:0;top:212px;width:22px;height:2px;background:#b4bccb"></div><div style="left:0;top:236px;width:22px;height:2px;background:#b4bccb"></div><div style="left:0;top:248px;width:22px;height:2px;background:#b4bccb"></div><div style="left:0;top:270px;width:22px;height:2px;background:#b4bccb"></div><div style="left:14px;top:12px;width:8px;height:2px;background:#b4bccb"></div><div style="left:14px;top:24px;width:8px;height:2px;background:#b4bccb"></div><div style="left:14px;top:46px;width:8px;height:2px;background:#b4bccb"></div><div style="left:14px;top:58px;width:8px;height:2px;background:#b4bccb"></div><div style="left:14px;top:81px;width:8px;height:2px;background:#b4bccb"></div><div style="left:14px;top:93px;width:8px;height:2px;background:#b4bccb"></div><div style="left:14px;top:116px;width:8px;height:2px;background:#b4bccb"></div><div style="left:14px;top:128px;width:8px;height:2px;background:#b4bccb"></div><div style="left:14px;top:146px;width:8px;height:2px;background:#b4bccb"></div><div style="left:14px;top:151px;width:8px;height:2px;background:#b4bccb"></div><div style="left:14px;top:156px;width:8px;height:2px;background:#b4bccb"></div><div style="left:14px;top:168px;width:8px;height:2px;background:#b4bccb"></div><div style="left:14px;top:173px;width:8px;height:2px;background:#b4bccb"></div><div style="left:14px;top:179px;width:8px;height:2px;background:#b4bccb"></div><div style="left:14px;top:184px;width:8px;height:2px;background:#b4bccb"></div><div style="left:14px;top:196px;width:8px;height:2px;background:#b4bccb"></div><div style="left:14px;top:201px;width:8px;height:2px;background:#b4bccb"></div><div style="left:14px;top:206px;width:8px;height:2px;background:#b4bccb"></div><div style="left:14px;top:218px;width:8px;height:2px;background:#b4bccb"></div><div style="left:14px;top:224px;width:8px;height:2px;background:#b4bccb"></div><div style="left:14px;top:230px;width:8px;height:2px;background:#b4bccb"></div><div style="left:14px;top:259px;width:8px;height:2px;background:#b4bccb"></div><div style="left:14px;top:242px;width:8px;height:2px;background:#b4bccb"></div></div>
<div style="left:1109.3px;top:1412px;width:79.2px;height:273.5px;"><div style="right:29.3px;top:-5px;width:40px;height:16px;line-height:16px;font-size:15.3px;text-align:right;color:#cfd3dc;letter-spacing:-0.2px">0</div><div style="right:19.5px;top:1.9px;width:6.5px;height:1.6px;background:#cfd3dc"></div><div style="right:29.3px;top:13.1px;width:40px;height:16px;line-height:16px;font-size:15.3px;text-align:right;color:#cfd3dc;letter-spacing:-0.2px">3</div><div style="right:19.5px;top:20px;width:6.5px;height:1.6px;background:#cfd3dc"></div><div style="right:29.3px;top:31.1px;width:40px;height:16px;line-height:16px;font-size:15.3px;text-align:right;color:#cfd3dc;letter-spacing:-0.2px">6</div><div style="right:19.5px;top:38px;width:6.5px;height:1.6px;background:#cfd3dc"></div><div style="right:29.3px;top:49.2px;width:40px;height:16px;line-height:16px;font-size:15.3px;text-align:right;color:#cfd3dc;letter-spacing:-0.2px">9</div><div style="right:19.5px;top:56.1px;width:6.5px;height:1.6px;background:#cfd3dc"></div><div style="right:29.3px;top:67.2px;width:40px;height:16px;line-height:16px;font-size:15.3px;text-align:right;color:#cfd3dc;letter-spacing:-0.2px">12</div><div style="right:19.5px;top:74.1px;width:6.5px;height:1.6px;background:#cfd3dc"></div><div style="right:29.3px;top:85.3px;width:40px;height:16px;line-height:16px;font-size:15.3px;text-align:right;color:#cfd3dc;letter-spacing:-0.2px">15</div><div style="right:19.5px;top:92.2px;width:6.5px;height:1.6px;background:#cfd3dc"></div><div style="right:29.3px;top:103.3px;width:40px;height:16px;line-height:16px;font-size:15.3px;text-align:right;color:#cfd3dc;letter-spacing:-0.2px">18</div><div style="right:19.5px;top:110.2px;width:6.5px;height:1.6px;background:#cfd3dc"></div><div style="right:29.3px;top:121.3px;width:40px;height:16px;line-height:16px;font-size:15.3px;text-align:right;color:#cfd3dc;letter-spacing:-0.2px">21</div><div style="right:19.5px;top:128.2px;width:6.5px;height:1.6px;background:#cfd3dc"></div><div style="right:29.3px;top:139.3px;width:40px;height:16px;line-height:16px;font-size:15.3px;text-align:right;color:#cfd3dc;letter-spacing:-0.2px">24</div><div style="right:19.5px;top:146.2px;width:6.5px;height:1.6px;background:#cfd3dc"></div><div style="right:29.3px;top:163.1px;width:40px;height:16px;line-height:16px;font-size:15.3px;text-align:right;color:#cfd3dc;letter-spacing:-0.2px">30</div><div style="right:19.5px;top:170px;width:6.5px;height:1.6px;background:#cfd3dc"></div><div style="right:29.3px;top:183.3px;width:40px;height:16px;line-height:16px;font-size:15.3px;text-align:right;color:#cfd3dc;letter-spacing:-0.2px">35</div><div style="right:19.5px;top:190.2px;width:6.5px;height:1.6px;background:#cfd3dc"></div><div style="right:29.3px;top:203.6px;width:40px;height:16px;line-height:16px;font-size:15.3px;text-align:right;color:#cfd3dc;letter-spacing:-0.2px">40</div><div style="right:19.5px;top:210.5px;width:6.5px;height:1.6px;background:#cfd3dc"></div><div style="right:29.3px;top:223.3px;width:40px;height:16px;line-height:16px;font-size:15.3px;text-align:right;color:#cfd3dc;letter-spacing:-0.2px">45</div><div style="right:19.5px;top:230.2px;width:6.5px;height:1.6px;background:#cfd3dc"></div><div style="right:29.3px;top:243.6px;width:40px;height:16px;line-height:16px;font-size:15.3px;text-align:right;color:#cfd3dc;letter-spacing:-0.2px">50</div><div style="right:19.5px;top:250.5px;width:6.5px;height:1.6px;background:#cfd3dc"></div><div style="right:29.3px;top:263.1px;width:40px;height:16px;line-height:16px;font-size:15.3px;text-align:right;color:#cfd3dc;letter-spacing:-0.2px">60</div><div style="right:19.5px;top:270px;width:6.5px;height:1.6px;background:#cfd3dc"></div><div style="right:19.2px;top:1px;width:1.7px;opacity:.85;height:271.5px;background:repeating-linear-gradient(#cfd3dc 0,#cfd3dc 1.9px,transparent 1.9px,transparent 4.3px)"></div><div style="right:0;top:0;width:19.2px;height:273.5px;background:linear-gradient(#2b3034 0,#2b3034 19.5px,#28282c 20px,#332c30 50px,#32302f 160px,#33322e 100%);box-shadow:0 0 0 .5px #1a2030"></div></div>
<div style="left:1170.8px;top:1590px;width:6.2px;height:94px;background:linear-gradient(to top,#f8c022 0%,#f9a033 28%,#fb8048 50%,#fc6a62 70%,#fb6068 100%);background-size:6.2px 270.5px;background-position:0 100%;background-repeat:no-repeat;"></div>
<div style="left:1170.8px;top:1554px;width:6.2px;height:2.4px;background:#fb7a4c;"></div>
<div style="left:1180.7px;top:1596px;width:6.2px;height:88px;background:linear-gradient(to top,#f8c022 0%,#f9a033 28%,#fb8048 50%,#fc6a62 70%,#fb6068 100%);background-size:6.2px 270.5px;background-position:0 100%;background-repeat:no-repeat;"></div>
<div style="left:1180.7px;top:1560px;width:6.2px;height:2.4px;background:#fb7a4c;"></div>
<div style="left:1096px;top:1586px;width:34px;height:70px;background:#fff;border-radius:4px;box-shadow:0 2px 5px rgba(10,15,40,.45),0 0 0 .5px rgba(200,210,230,.5);"></div>
<div style="left:1096px;top:1617.7px;width:34px;height:2px;background:#000;"></div>
<div style="left:1087.5px;top:1737px;width:54.5px;height:34.5px;background:#676673;border-radius:7px;line-height:34.5px;font-size:28px;color:#fff;text-align:center;white-space:nowrap;overflow:hidden;box-shadow:0 0 0 1px rgba(60,60,75,.6);">M</div>
<div style="left:1147.5px;top:1737px;width:54.5px;height:34.5px;background:#676673;border-radius:7px;line-height:34.5px;font-size:28px;color:#fff;text-align:center;white-space:nowrap;overflow:hidden;box-shadow:0 0 0 1px rgba(60,60,75,.6);">S</div>
<div style="left:1211.2px;top:863.5px;width:1.6px;height:930px;background:#7a9cb2;"></div>
<div style="left:1221.5px;top:863.5px;width:115px;height:40px;background:#2a3652;border-radius:0 0 8px 8px;box-shadow:inset 0 0 0 1px rgba(30,40,70,.35);"></div>
<div style="left:1221.5px;top:921px;width:79px;height:34px;background:#7fa1b2;border-radius:7px;line-height:34px;font-size:24px;color:#f1f3f6;text-align:center;white-space:nowrap;overflow:hidden;letter-spacing:0.25px;box-shadow:0 0 0 1px #4f6a80;"><span style="display:inline-block;transform:scaleX(0.92)">Bus 2</span></div>
<svg style="left:1305.6px;top:921.1px;" width="33.8" height="33.8" viewBox="0 0 33.8 33.8"><path d="M10.35 28.24A13.1 13.1 0 1 1 23.45 28.24" fill="none" stroke="#000" stroke-width="5.6"/><path d="M10.35 28.24A13.1 13.1 0 0 1 4.93 11.57" fill="none" stroke="#fb7f7d" stroke-width="5.6"/><circle cx="16.9" cy="16.9" r="10.1" fill="#fff"/></svg>
<div style="left:1221.5px;top:960.5px;width:79px;height:35px;background:#2b3754;border-radius:8px;box-shadow:inset 0 0 0 1px rgba(30,40,70,.35);"></div>
<div style="left:1306.5px;top:962px;width:32px;height:32px;background:#2b3754;border-radius:50%;box-shadow:inset 0 0 0 1px rgba(30,40,70,.35);"></div>
<div style="left:1221.5px;top:1000.5px;width:79px;height:17.5px;background:#2b3754;border-radius:7px;box-shadow:inset 0 0 0 1px rgba(30,40,70,.35);"></div>
<div style="left:1221.5px;top:1034.5px;width:115px;height:34.5px;background:#676673;border-radius:7px;line-height:34.5px;font-size:24px;color:#cdced6;text-align:center;white-space:nowrap;overflow:hidden;letter-spacing:0.25px;box-shadow:0 0 0 1px rgba(60,60,75,.6);"><span style="display:inline-block;transform:scaleX(0.92)">St Out</span></div>
<div style="left:1223.5px;top:1080px;width:111px;height:33.5px;background:#2c3855;border-radius:2px;box-shadow:inset 0 0 0 1px rgba(30,40,70,.3);"></div>
<div style="left:1221.5px;top:1126px;width:115px;height:35px;background:#7fa1b2;border-radius:7px;line-height:35px;font-size:24px;color:#fff;text-align:center;white-space:nowrap;overflow:hidden;letter-spacing:0.25px;box-shadow:0 0 0 1px #4f6a80;"><span style="display:inline-block;transform:scaleX(0.92)">Read</span></div>
<svg style="left:1249.5px;top:1184px;" width="60" height="56" viewBox="0 0 60 56"><path d="M0.5 4.5H12V2.2H47L60 6.5V16H8L0.5 14Z" fill="#4fa3ff"/><path d="M4 6.6h2.6v2.4H4zM8 6.6h2.6v2.4H8z" fill="#243050"/><path d="M3 5.2H21V10.2H14.5V12" fill="none" stroke="#243050" stroke-width="1.4"/><rect x="15.3" y="9.6" width="41" height="4" fill="none" stroke="#243050" stroke-width="1.4"/><path d="M16 43.5L42 17M44 43.5L18 17" stroke="#4fa3ff" stroke-width="2.2"/><circle cx="16" cy="43.8" r="2.6" fill="#4fa3ff"/><circle cx="44" cy="43.8" r="2.6" fill="#4fa3ff"/></svg>
<svg style="left:1242.5px;top:1249.8px;" width="74" height="74" viewBox="0 0 74 74"><path d="M21.3 64.19A31.4 31.4 0 1 1 52.7 64.19" fill="none" stroke="#000" stroke-width="7.2"/><path d="M37 2L37 9.2" stroke="#fb7f7d" stroke-width="2.6"/><circle cx="37" cy="37" r="27.8" fill="#fff"/><path d="M35.9 10.22L36.21 17.72" stroke="#555" stroke-width="1.8"/></svg>
<div style="left:1239.5px;top:1273.08px;width:80px;height:31px;line-height:31px;font-size:23.5px;color:#333;text-align:center;white-space:nowrap;letter-spacing:-0.8px;">-1</div>
<div style="left:1223px;top:1334px;width:54px;height:33.5px;background:#1f2941;"></div>
<div style="left:1281px;top:1334px;width:54px;height:33.5px;background:#1f2941;"></div>
<div style="left:1215px;top:1336.29px;width:70px;height:32px;line-height:32px;font-size:24.5px;color:#e8e8ec;text-align:center;white-space:nowrap;transform:scaleX(0.93);transform-origin:50% 50%;">-5.8</div>
<div style="left:1273px;top:1336.29px;width:70px;height:32px;line-height:32px;font-size:24.5px;color:#4fdc70;text-align:center;white-space:nowrap;transform:scaleX(0.81);transform-origin:50% 50%;">-43.3</div>
<div style="left:1245.3px;top:1412px;width:3.4px;height:273.5px;background:#6b6b74;"></div>
<div style="left:1220.8px;top:1412px;width:22px;height:273.5px;"><div style="left:0;top:2px;width:22px;height:2px;background:#b4bccb"></div><div style="left:0;top:36px;width:22px;height:2px;background:#b4bccb"></div><div style="left:0;top:70px;width:22px;height:2px;background:#b4bccb"></div><div style="left:0;top:104px;width:22px;height:2px;background:#b4bccb"></div><div style="left:0;top:140px;width:22px;height:2px;background:#b4bccb"></div><div style="left:0;top:162px;width:22px;height:2px;background:#b4bccb"></div><div style="left:0;top:190px;width:22px;height:2px;background:#b4bccb"></div><div style="left:0;top:212px;width:22px;height:2px;background:#b4bccb"></div><div style="left:0;top:236px;width:22px;height:2px;background:#b4bccb"></div><div style="left:0;top:248px;width:22px;height:2px;background:#b4bccb"></div><div style="left:0;top:270px;width:22px;height:2px;background:#b4bccb"></div><div style="left:14px;top:12px;width:8px;height:2px;background:#b4bccb"></div><div style="left:14px;top:24px;width:8px;height:2px;background:#b4bccb"></div><div style="left:14px;top:46px;width:8px;height:2px;background:#b4bccb"></div><div style="left:14px;top:58px;width:8px;height:2px;background:#b4bccb"></div><div style="left:14px;top:81px;width:8px;height:2px;background:#b4bccb"></div><div style="left:14px;top:93px;width:8px;height:2px;background:#b4bccb"></div><div style="left:14px;top:116px;width:8px;height:2px;background:#b4bccb"></div><div style="left:14px;top:128px;width:8px;height:2px;background:#b4bccb"></div><div style="left:14px;top:146px;width:8px;height:2px;background:#b4bccb"></div><div style="left:14px;top:151px;width:8px;height:2px;background:#b4bccb"></div><div style="left:14px;top:156px;width:8px;height:2px;background:#b4bccb"></div><div style="left:14px;top:168px;width:8px;height:2px;background:#b4bccb"></div><div style="left:14px;top:173px;width:8px;height:2px;background:#b4bccb"></div><div style="left:14px;top:179px;width:8px;height:2px;background:#b4bccb"></div><div style="left:14px;top:184px;width:8px;height:2px;background:#b4bccb"></div><div style="left:14px;top:196px;width:8px;height:2px;background:#b4bccb"></div><div style="left:14px;top:201px;width:8px;height:2px;background:#b4bccb"></div><div style="left:14px;top:206px;width:8px;height:2px;background:#b4bccb"></div><div style="left:14px;top:218px;width:8px;height:2px;background:#b4bccb"></div><div style="left:14px;top:224px;width:8px;height:2px;background:#b4bccb"></div><div style="left:14px;top:230px;width:8px;height:2px;background:#b4bccb"></div><div style="left:14px;top:259px;width:8px;height:2px;background:#b4bccb"></div><div style="left:14px;top:242px;width:8px;height:2px;background:#b4bccb"></div></div>
<div style="left:1243.3px;top:1412px;width:79.2px;height:273.5px;"><div style="right:29.3px;top:-5px;width:40px;height:16px;line-height:16px;font-size:15.3px;text-align:right;color:#cfd3dc;letter-spacing:-0.2px">0</div><div style="right:19.5px;top:1.9px;width:6.5px;height:1.6px;background:#cfd3dc"></div><div style="right:29.3px;top:13.1px;width:40px;height:16px;line-height:16px;font-size:15.3px;text-align:right;color:#cfd3dc;letter-spacing:-0.2px">3</div><div style="right:19.5px;top:20px;width:6.5px;height:1.6px;background:#cfd3dc"></div><div style="right:29.3px;top:31.1px;width:40px;height:16px;line-height:16px;font-size:15.3px;text-align:right;color:#cfd3dc;letter-spacing:-0.2px">6</div><div style="right:19.5px;top:38px;width:6.5px;height:1.6px;background:#cfd3dc"></div><div style="right:29.3px;top:49.2px;width:40px;height:16px;line-height:16px;font-size:15.3px;text-align:right;color:#cfd3dc;letter-spacing:-0.2px">9</div><div style="right:19.5px;top:56.1px;width:6.5px;height:1.6px;background:#cfd3dc"></div><div style="right:29.3px;top:67.2px;width:40px;height:16px;line-height:16px;font-size:15.3px;text-align:right;color:#cfd3dc;letter-spacing:-0.2px">12</div><div style="right:19.5px;top:74.1px;width:6.5px;height:1.6px;background:#cfd3dc"></div><div style="right:29.3px;top:85.3px;width:40px;height:16px;line-height:16px;font-size:15.3px;text-align:right;color:#cfd3dc;letter-spacing:-0.2px">15</div><div style="right:19.5px;top:92.2px;width:6.5px;height:1.6px;background:#cfd3dc"></div><div style="right:29.3px;top:103.3px;width:40px;height:16px;line-height:16px;font-size:15.3px;text-align:right;color:#cfd3dc;letter-spacing:-0.2px">18</div><div style="right:19.5px;top:110.2px;width:6.5px;height:1.6px;background:#cfd3dc"></div><div style="right:29.3px;top:121.3px;width:40px;height:16px;line-height:16px;font-size:15.3px;text-align:right;color:#cfd3dc;letter-spacing:-0.2px">21</div><div style="right:19.5px;top:128.2px;width:6.5px;height:1.6px;background:#cfd3dc"></div><div style="right:29.3px;top:139.3px;width:40px;height:16px;line-height:16px;font-size:15.3px;text-align:right;color:#cfd3dc;letter-spacing:-0.2px">24</div><div style="right:19.5px;top:146.2px;width:6.5px;height:1.6px;background:#cfd3dc"></div><div style="right:29.3px;top:163.1px;width:40px;height:16px;line-height:16px;font-size:15.3px;text-align:right;color:#cfd3dc;letter-spacing:-0.2px">30</div><div style="right:19.5px;top:170px;width:6.5px;height:1.6px;background:#cfd3dc"></div><div style="right:29.3px;top:183.3px;width:40px;height:16px;line-height:16px;font-size:15.3px;text-align:right;color:#cfd3dc;letter-spacing:-0.2px">35</div><div style="right:19.5px;top:190.2px;width:6.5px;height:1.6px;background:#cfd3dc"></div><div style="right:29.3px;top:203.6px;width:40px;height:16px;line-height:16px;font-size:15.3px;text-align:right;color:#cfd3dc;letter-spacing:-0.2px">40</div><div style="right:19.5px;top:210.5px;width:6.5px;height:1.6px;background:#cfd3dc"></div><div style="right:29.3px;top:223.3px;width:40px;height:16px;line-height:16px;font-size:15.3px;text-align:right;color:#cfd3dc;letter-spacing:-0.2px">45</div><div style="right:19.5px;top:230.2px;width:6.5px;height:1.6px;background:#cfd3dc"></div><div style="right:29.3px;top:243.6px;width:40px;height:16px;line-height:16px;font-size:15.3px;text-align:right;color:#cfd3dc;letter-spacing:-0.2px">50</div><div style="right:19.5px;top:250.5px;width:6.5px;height:1.6px;background:#cfd3dc"></div><div style="right:29.3px;top:263.1px;width:40px;height:16px;line-height:16px;font-size:15.3px;text-align:right;color:#cfd3dc;letter-spacing:-0.2px">60</div><div style="right:19.5px;top:270px;width:6.5px;height:1.6px;background:#cfd3dc"></div><div style="right:19.2px;top:1px;width:1.7px;opacity:.85;height:271.5px;background:repeating-linear-gradient(#cfd3dc 0,#cfd3dc 1.9px,transparent 1.9px,transparent 4.3px)"></div><div style="right:0;top:0;width:19.2px;height:273.5px;background:linear-gradient(#2b3034 0,#2b3034 19.5px,#28282c 20px,#332c30 50px,#32302f 160px,#33322e 100%);box-shadow:0 0 0 .5px #1a2030"></div></div>
<div style="left:1304.8px;top:1644px;width:6.2px;height:40px;background:linear-gradient(to top,#f8c022 0%,#f9a033 28%,#fb8048 50%,#fc6a62 70%,#fb6068 100%);background-size:6.2px 270.5px;background-position:0 100%;background-repeat:no-repeat;"></div>
<div style="left:1314.7px;top:1633.5px;width:6.2px;height:50.5px;background:linear-gradient(to top,#f8c022 0%,#f9a033 28%,#fb8048 50%,#fc6a62 70%,#fb6068 100%);background-size:6.2px 270.5px;background-position:0 100%;background-repeat:no-repeat;"></div>
<div style="left:1230px;top:1514px;width:34px;height:70px;background:#fff;border-radius:4px;box-shadow:0 2px 5px rgba(10,15,40,.45),0 0 0 .5px rgba(200,210,230,.5);"></div>
<div style="left:1230px;top:1545.7px;width:34px;height:2px;background:#000;"></div>
<div style="left:1221.5px;top:1737px;width:54.5px;height:34.5px;background:#676673;border-radius:7px;line-height:34.5px;font-size:28px;color:#fff;text-align:center;white-space:nowrap;overflow:hidden;box-shadow:0 0 0 1px rgba(60,60,75,.6);">M</div>
<div style="left:1281.5px;top:1737px;width:54.5px;height:34.5px;background:#676673;border-radius:7px;line-height:34.5px;font-size:28px;color:#fff;text-align:center;white-space:nowrap;overflow:hidden;box-shadow:0 0 0 1px rgba(60,60,75,.6);">S</div>
<div style="left:1345.2px;top:863.5px;width:1.6px;height:930px;background:#7a9cb2;"></div>
<div style="left:1355.5px;top:863.5px;width:115px;height:40px;background:#2a3652;border-radius:0 0 8px 8px;box-shadow:inset 0 0 0 1px rgba(30,40,70,.35);"></div>
<div style="left:1355.5px;top:920.5px;width:79px;height:35px;background:#2b3754;border-radius:8px;box-shadow:inset 0 0 0 1px rgba(30,40,70,.35);"></div>
<div style="left:1440.5px;top:922px;width:32px;height:32px;background:#2b3754;border-radius:50%;box-shadow:inset 0 0 0 1px rgba(30,40,70,.35);"></div>
<div style="left:1355.5px;top:960.5px;width:79px;height:35px;background:#2b3754;border-radius:8px;box-shadow:inset 0 0 0 1px rgba(30,40,70,.35);"></div>
<div style="left:1440.5px;top:962px;width:32px;height:32px;background:#2b3754;border-radius:50%;box-shadow:inset 0 0 0 1px rgba(30,40,70,.35);"></div>
<div style="left:1355.5px;top:1000.5px;width:79px;height:17.5px;background:#2b3754;border-radius:7px;box-shadow:inset 0 0 0 1px rgba(30,40,70,.35);"></div>
<div style="left:1355.5px;top:1034.5px;width:115px;height:34.5px;background:#676673;border-radius:7px;line-height:34.5px;font-size:24px;color:#cdced6;text-align:center;white-space:nowrap;overflow:hidden;letter-spacing:0.25px;box-shadow:0 0 0 1px rgba(60,60,75,.6);"><span style="display:inline-block;transform:scaleX(0.92)">St Out</span></div>
<div style="left:1357.5px;top:1080px;width:111px;height:33.5px;background:#2c3855;border-radius:2px;box-shadow:inset 0 0 0 1px rgba(30,40,70,.3);"></div>
<div style="left:1355.5px;top:1126px;width:115px;height:35px;background:#191919;border-radius:7px;line-height:35px;font-size:24px;color:#4fdc70;text-align:center;white-space:nowrap;overflow:hidden;letter-spacing:0.25px;"><span style="display:inline-block;transform:scaleX(0.92)">Read</span></div>
<svg style="left:1383.5px;top:1177.5px;" width="60" height="56" viewBox="0 0 60 56"><path d="M6.5 13.3V15.7" stroke="#2bb5f5" stroke-width="2.3" stroke-linecap="round"/><path d="M10.5 12.0V17.0" stroke="#2bb5f5" stroke-width="2.3" stroke-linecap="round"/><path d="M14.5 10.0V19.0" stroke="#2bb5f5" stroke-width="2.3" stroke-linecap="round"/><path d="M18.5 7.9V21.1" stroke="#2bb5f5" stroke-width="2.3" stroke-linecap="round"/><path d="M22.5 0.5V28.5" stroke="#2bb5f5" stroke-width="2.3" stroke-linecap="round"/><path d="M26.5 6.0V23.0" stroke="#2bb5f5" stroke-width="2.3" stroke-linecap="round"/><path d="M30.5 10.75V18.25" stroke="#2bb5f5" stroke-width="2.3" stroke-linecap="round"/><path d="M34.5 12.25V16.75" stroke="#2bb5f5" stroke-width="2.3" stroke-linecap="round"/><path d="M38.5 11.25V17.75" stroke="#2bb5f5" stroke-width="2.3" stroke-linecap="round"/><path d="M42.5 3.5V25.5" stroke="#2bb5f5" stroke-width="2.3" stroke-linecap="round"/><path d="M46.5 9.5V19.5" stroke="#2bb5f5" stroke-width="2.3" stroke-linecap="round"/><path d="M50.5 12.25V16.75" stroke="#2bb5f5" stroke-width="2.3" stroke-linecap="round"/><path d="M53.8 13.3V15.7" stroke="#2bb5f5" stroke-width="2.3" stroke-linecap="round"/><rect x="5" y="35.5" width="50" height="19" rx="1.5" fill="none" stroke="#2bb5f5" stroke-width="2"/><path d="M11.2 36V54" stroke="#2bb5f5" stroke-width="1.4"/><path d="M17.4 36V54" stroke="#2bb5f5" stroke-width="1.4"/><path d="M23.6 36V54" stroke="#2bb5f5" stroke-width="1.4"/><path d="M29.8 36V54" stroke="#2bb5f5" stroke-width="1.4"/><path d="M36 36V54" stroke="#2bb5f5" stroke-width="1.4"/><path d="M42.2 36V54" stroke="#2bb5f5" stroke-width="1.4"/><path d="M48.4 36V54" stroke="#2bb5f5" stroke-width="1.4"/><rect x="9.2" y="36" width="4" height="11.5" fill="#2bb5f5"/><rect x="15.4" y="36" width="4" height="11.5" fill="#2bb5f5"/><rect x="27.8" y="36" width="4" height="11.5" fill="#2bb5f5"/><rect x="34" y="36" width="4" height="11.5" fill="#2bb5f5"/><rect x="40.2" y="36" width="4" height="11.5" fill="#2bb5f5"/><rect x="46.4" y="36" width="4" height="11.5" fill="#2bb5f5"/></svg>
<svg style="left:1376.5px;top:1249.8px;" width="74" height="74" viewBox="0 0 74 74"><path d="M21.3 64.19A31.4 31.4 0 1 1 52.7 64.19" fill="none" stroke="#000" stroke-width="7.2"/><path d="M37 2L37 9.2" stroke="#fb7f7d" stroke-width="2.6"/><circle cx="37" cy="37" r="27.8" fill="#fff"/><path d="M37 10.2L37 17.7" stroke="#555" stroke-width="1.8"/></svg>
<div style="left:1357px;top:1334px;width:54px;height:33.5px;background:#1f2941;"></div>
<div style="left:1415px;top:1334px;width:54px;height:33.5px;background:#1f2941;"></div>
<div style="left:1349px;top:1336.29px;width:70px;height:32px;line-height:32px;font-size:24.5px;color:#e8e8ec;text-align:center;white-space:nowrap;transform:scaleX(0.93);transform-origin:50% 50%;">-3.2</div>
<div style="left:1407px;top:1336.29px;width:70px;height:32px;line-height:32px;font-size:24.5px;color:#4fdc70;text-align:center;white-space:nowrap;transform:scaleX(0.81);transform-origin:50% 50%;">-13.3</div>
<div style="left:1379.3px;top:1412px;width:3.4px;height:273.5px;background:#6b6b74;"></div>
<div style="left:1354.8px;top:1412px;width:22px;height:273.5px;"><div style="left:0;top:2px;width:22px;height:2px;background:#b4bccb"></div><div style="left:0;top:36px;width:22px;height:2px;background:#b4bccb"></div><div style="left:0;top:70px;width:22px;height:2px;background:#b4bccb"></div><div style="left:0;top:104px;width:22px;height:2px;background:#b4bccb"></div><div style="left:0;top:140px;width:22px;height:2px;background:#b4bccb"></div><div style="left:0;top:162px;width:22px;height:2px;background:#b4bccb"></div><div style="left:0;top:190px;width:22px;height:2px;background:#b4bccb"></div><div style="left:0;top:212px;width:22px;height:2px;background:#b4bccb"></div><div style="left:0;top:236px;width:22px;height:2px;background:#b4bccb"></div><div style="left:0;top:248px;width:22px;height:2px;background:#b4bccb"></div><div style="left:0;top:270px;width:22px;height:2px;background:#b4bccb"></div><div style="left:14px;top:12px;width:8px;height:2px;background:#b4bccb"></div><div style="left:14px;top:24px;width:8px;height:2px;background:#b4bccb"></div><div style="left:14px;top:46px;width:8px;height:2px;background:#b4bccb"></div><div style="left:14px;top:58px;width:8px;height:2px;background:#b4bccb"></div><div style="left:14px;top:81px;width:8px;height:2px;background:#b4bccb"></div><div style="left:14px;top:93px;width:8px;height:2px;background:#b4bccb"></div><div style="left:14px;top:116px;width:8px;height:2px;background:#b4bccb"></div><div style="left:14px;top:128px;width:8px;height:2px;background:#b4bccb"></div><div style="left:14px;top:146px;width:8px;height:2px;background:#b4bccb"></div><div style="left:14px;top:151px;width:8px;height:2px;background:#b4bccb"></div><div style="left:14px;top:156px;width:8px;height:2px;background:#b4bccb"></div><div style="left:14px;top:168px;width:8px;height:2px;background:#b4bccb"></div><div style="left:14px;top:173px;width:8px;height:2px;background:#b4bccb"></div><div style="left:14px;top:179px;width:8px;height:2px;background:#b4bccb"></div><div style="left:14px;top:184px;width:8px;height:2px;background:#b4bccb"></div><div style="left:14px;top:196px;width:8px;height:2px;background:#b4bccb"></div><div style="left:14px;top:201px;width:8px;height:2px;background:#b4bccb"></div><div style="left:14px;top:206px;width:8px;height:2px;background:#b4bccb"></div><div style="left:14px;top:218px;width:8px;height:2px;background:#b4bccb"></div><div style="left:14px;top:224px;width:8px;height:2px;background:#b4bccb"></div><div style="left:14px;top:230px;width:8px;height:2px;background:#b4bccb"></div><div style="left:14px;top:259px;width:8px;height:2px;background:#b4bccb"></div><div style="left:14px;top:242px;width:8px;height:2px;background:#b4bccb"></div></div>
<div style="left:1377.3px;top:1412px;width:79.2px;height:273.5px;"><div style="right:29.3px;top:-5px;width:40px;height:16px;line-height:16px;font-size:15.3px;text-align:right;color:#cfd3dc;letter-spacing:-0.2px">0</div><div style="right:19.5px;top:1.9px;width:6.5px;height:1.6px;background:#cfd3dc"></div><div style="right:29.3px;top:13.1px;width:40px;height:16px;line-height:16px;font-size:15.3px;text-align:right;color:#cfd3dc;letter-spacing:-0.2px">3</div><div style="right:19.5px;top:20px;width:6.5px;height:1.6px;background:#cfd3dc"></div><div style="right:29.3px;top:31.1px;width:40px;height:16px;line-height:16px;font-size:15.3px;text-align:right;color:#cfd3dc;letter-spacing:-0.2px">6</div><div style="right:19.5px;top:38px;width:6.5px;height:1.6px;background:#cfd3dc"></div><div style="right:29.3px;top:49.2px;width:40px;height:16px;line-height:16px;font-size:15.3px;text-align:right;color:#cfd3dc;letter-spacing:-0.2px">9</div><div style="right:19.5px;top:56.1px;width:6.5px;height:1.6px;background:#cfd3dc"></div><div style="right:29.3px;top:67.2px;width:40px;height:16px;line-height:16px;font-size:15.3px;text-align:right;color:#cfd3dc;letter-spacing:-0.2px">12</div><div style="right:19.5px;top:74.1px;width:6.5px;height:1.6px;background:#cfd3dc"></div><div style="right:29.3px;top:85.3px;width:40px;height:16px;line-height:16px;font-size:15.3px;text-align:right;color:#cfd3dc;letter-spacing:-0.2px">15</div><div style="right:19.5px;top:92.2px;width:6.5px;height:1.6px;background:#cfd3dc"></div><div style="right:29.3px;top:103.3px;width:40px;height:16px;line-height:16px;font-size:15.3px;text-align:right;color:#cfd3dc;letter-spacing:-0.2px">18</div><div style="right:19.5px;top:110.2px;width:6.5px;height:1.6px;background:#cfd3dc"></div><div style="right:29.3px;top:121.3px;width:40px;height:16px;line-height:16px;font-size:15.3px;text-align:right;color:#cfd3dc;letter-spacing:-0.2px">21</div><div style="right:19.5px;top:128.2px;width:6.5px;height:1.6px;background:#cfd3dc"></div><div style="right:29.3px;top:139.3px;width:40px;height:16px;line-height:16px;font-size:15.3px;text-align:right;color:#cfd3dc;letter-spacing:-0.2px">24</div><div style="right:19.5px;top:146.2px;width:6.5px;height:1.6px;background:#cfd3dc"></div><div style="right:29.3px;top:163.1px;width:40px;height:16px;line-height:16px;font-size:15.3px;text-align:right;color:#cfd3dc;letter-spacing:-0.2px">30</div><div style="right:19.5px;top:170px;width:6.5px;height:1.6px;background:#cfd3dc"></div><div style="right:29.3px;top:183.3px;width:40px;height:16px;line-height:16px;font-size:15.3px;text-align:right;color:#cfd3dc;letter-spacing:-0.2px">35</div><div style="right:19.5px;top:190.2px;width:6.5px;height:1.6px;background:#cfd3dc"></div><div style="right:29.3px;top:203.6px;width:40px;height:16px;line-height:16px;font-size:15.3px;text-align:right;color:#cfd3dc;letter-spacing:-0.2px">40</div><div style="right:19.5px;top:210.5px;width:6.5px;height:1.6px;background:#cfd3dc"></div><div style="right:29.3px;top:223.3px;width:40px;height:16px;line-height:16px;font-size:15.3px;text-align:right;color:#cfd3dc;letter-spacing:-0.2px">45</div><div style="right:19.5px;top:230.2px;width:6.5px;height:1.6px;background:#cfd3dc"></div><div style="right:29.3px;top:243.6px;width:40px;height:16px;line-height:16px;font-size:15.3px;text-align:right;color:#cfd3dc;letter-spacing:-0.2px">50</div><div style="right:19.5px;top:250.5px;width:6.5px;height:1.6px;background:#cfd3dc"></div><div style="right:29.3px;top:263.1px;width:40px;height:16px;line-height:16px;font-size:15.3px;text-align:right;color:#cfd3dc;letter-spacing:-0.2px">60</div><div style="right:19.5px;top:270px;width:6.5px;height:1.6px;background:#cfd3dc"></div><div style="right:19.2px;top:1px;width:1.7px;opacity:.85;height:271.5px;background:repeating-linear-gradient(#cfd3dc 0,#cfd3dc 1.9px,transparent 1.9px,transparent 4.3px)"></div><div style="right:0;top:0;width:19.2px;height:273.5px;background:linear-gradient(#2b3034 0,#2b3034 19.5px,#28282c 20px,#332c30 50px,#32302f 160px,#33322e 100%);box-shadow:0 0 0 .5px #1a2030"></div></div>
<div style="left:1438.8px;top:1574px;width:6.2px;height:110px;background:linear-gradient(to top,#f8c022 0%,#f9a033 28%,#fb8048 50%,#fc6a62 70%,#fb6068 100%);background-size:6.2px 270.5px;background-position:0 100%;background-repeat:no-repeat;"></div>
<div style="left:1448.7px;top:1583.5px;width:6.2px;height:100.5px;background:linear-gradient(to top,#f8c022 0%,#f9a033 28%,#fb8048 50%,#fc6a62 70%,#fb6068 100%);background-size:6.2px 270.5px;background-position:0 100%;background-repeat:no-repeat;"></div>
<div style="left:1448.7px;top:1578px;width:6.2px;height:2.4px;background:#fb7a4c;"></div>
<div style="left:1364px;top:1484px;width:34px;height:70px;background:#fff;border-radius:4px;box-shadow:0 2px 5px rgba(10,15,40,.45),0 0 0 .5px rgba(200,210,230,.5);"></div>
<div style="left:1364px;top:1515.7px;width:34px;height:2px;background:#000;"></div>
<div style="left:1355.5px;top:1737px;width:54.5px;height:34.5px;background:#676673;border-radius:7px;line-height:34.5px;font-size:28px;color:#fff;text-align:center;white-space:nowrap;overflow:hidden;box-shadow:0 0 0 1px rgba(60,60,75,.6);">M</div>
<div style="left:1415.5px;top:1737px;width:54.5px;height:34.5px;background:#676673;border-radius:7px;line-height:34.5px;font-size:28px;color:#fff;text-align:center;white-space:nowrap;overflow:hidden;box-shadow:0 0 0 1px rgba(60,60,75,.6);">S</div>
<div style="left:1479.2px;top:863.5px;width:1.6px;height:930px;background:#7a9cb2;"></div>
<div style="left:1489.5px;top:863.5px;width:115px;height:40px;background:#2a3652;border-radius:0 0 8px 8px;box-shadow:inset 0 0 0 1px rgba(30,40,70,.35);"></div>
<div style="left:1489.5px;top:920.5px;width:79px;height:35px;background:#2b3754;border-radius:8px;box-shadow:inset 0 0 0 1px rgba(30,40,70,.35);"></div>
<div style="left:1574.5px;top:922px;width:32px;height:32px;background:#2b3754;border-radius:50%;box-shadow:inset 0 0 0 1px rgba(30,40,70,.35);"></div>
<div style="left:1489.5px;top:960.5px;width:79px;height:35px;background:#2b3754;border-radius:8px;box-shadow:inset 0 0 0 1px rgba(30,40,70,.35);"></div>
<div style="left:1574.5px;top:962px;width:32px;height:32px;background:#2b3754;border-radius:50%;box-shadow:inset 0 0 0 1px rgba(30,40,70,.35);"></div>
<div style="left:1489.5px;top:1000.5px;width:79px;height:17.5px;background:#2b3754;border-radius:7px;box-shadow:inset 0 0 0 1px rgba(30,40,70,.35);"></div>
<div style="left:1489.5px;top:1034.5px;width:115px;height:34.5px;background:#676673;border-radius:7px;line-height:34.5px;font-size:24px;color:#cdced6;text-align:center;white-space:nowrap;overflow:hidden;letter-spacing:0.25px;box-shadow:0 0 0 1px rgba(60,60,75,.6);"><span style="display:inline-block;transform:scaleX(0.92)">St Out</span></div>
<div style="left:1491.5px;top:1080px;width:111px;height:33.5px;background:#2c3855;border-radius:2px;box-shadow:inset 0 0 0 1px rgba(30,40,70,.3);"></div>
<div style="left:1489.5px;top:1126px;width:115px;height:35px;background:#191919;border-radius:7px;line-height:35px;font-size:24px;color:#4fdc70;text-align:center;white-space:nowrap;overflow:hidden;letter-spacing:0.25px;"><span style="display:inline-block;transform:scaleX(0.92)">Read</span></div>
<svg style="left:1517.5px;top:1184px;" width="60" height="56" viewBox="0 0 60 56"><path d="M0.5 4.5H12V2.2H47L60 6.5V16H8L0.5 14Z" fill="#1fc3e6"/><path d="M4 6.6h2.6v2.4H4zM8 6.6h2.6v2.4H8z" fill="#243050"/><path d="M3 5.2H21V10.2H14.5V12" fill="none" stroke="#243050" stroke-width="1.4"/><rect x="15.3" y="9.6" width="41" height="4" fill="none" stroke="#243050" stroke-width="1.4"/><path d="M16 43.5L42 17M44 43.5L18 17" stroke="#1fc3e6" stroke-width="2.2"/><circle cx="16" cy="43.8" r="2.6" fill="#1fc3e6"/><circle cx="44" cy="43.8" r="2.6" fill="#1fc3e6"/></svg>
<svg style="left:1510.5px;top:1249.8px;" width="74" height="74" viewBox="0 0 74 74"><path d="M21.3 64.19A31.4 31.4 0 1 1 52.7 64.19" fill="none" stroke="#000" stroke-width="7.2"/><path d="M37 5.6A31.4 31.4 0 0 0 21.3 64.19" fill="none" stroke="#fb7f7d" stroke-width="7.2"/><circle cx="37" cy="37" r="27.8" fill="#fff"/><path d="M23.6 60.21L27.35 53.71" stroke="#555" stroke-width="1.8"/></svg>
<div style="left:1507.5px;top:1273.08px;width:80px;height:31px;line-height:31px;font-size:23.5px;color:#333;text-align:center;white-space:nowrap;letter-spacing:-0.8px;">-64</div>
<div style="left:1491px;top:1334px;width:54px;height:33.5px;background:#1f2941;"></div>
<div style="left:1549px;top:1334px;width:54px;height:33.5px;background:#1f2941;"></div>
<div style="left:1483px;top:1336.29px;width:70px;height:32px;line-height:32px;font-size:24.5px;color:#e8e8ec;text-align:center;white-space:nowrap;transform:scaleX(0.81);transform-origin:50% 50%;">-12.4</div>
<div style="left:1541px;top:1336.29px;width:70px;height:32px;line-height:32px;font-size:24.5px;color:#4fdc70;text-align:center;white-space:nowrap;transform:scaleX(0.81);transform-origin:50% 50%;">-27.5</div>
<div style="left:1513.3px;top:1412px;width:3.4px;height:273.5px;background:#6b6b74;"></div>
<div style="left:1488.8px;top:1412px;width:22px;height:273.5px;"><div style="left:0;top:2px;width:22px;height:2px;background:#b4bccb"></div><div style="left:0;top:36px;width:22px;height:2px;background:#b4bccb"></div><div style="left:0;top:70px;width:22px;height:2px;background:#b4bccb"></div><div style="left:0;top:104px;width:22px;height:2px;background:#b4bccb"></div><div style="left:0;top:140px;width:22px;height:2px;background:#b4bccb"></div><div style="left:0;top:162px;width:22px;height:2px;background:#b4bccb"></div><div style="left:0;top:190px;width:22px;height:2px;background:#b4bccb"></div><div style="left:0;top:212px;width:22px;height:2px;background:#b4bccb"></div><div style="left:0;top:236px;width:22px;height:2px;background:#b4bccb"></div><div style="left:0;top:248px;width:22px;height:2px;background:#b4bccb"></div><div style="left:0;top:270px;width:22px;height:2px;background:#b4bccb"></div><div style="left:14px;top:12px;width:8px;height:2px;background:#b4bccb"></div><div style="left:14px;top:24px;width:8px;height:2px;background:#b4bccb"></div><div style="left:14px;top:46px;width:8px;height:2px;background:#b4bccb"></div><div style="left:14px;top:58px;width:8px;height:2px;background:#b4bccb"></div><div style="left:14px;top:81px;width:8px;height:2px;background:#b4bccb"></div><div style="left:14px;top:93px;width:8px;height:2px;background:#b4bccb"></div><div style="left:14px;top:116px;width:8px;height:2px;background:#b4bccb"></div><div style="left:14px;top:128px;width:8px;height:2px;background:#b4bccb"></div><div style="left:14px;top:146px;width:8px;height:2px;background:#b4bccb"></div><div style="left:14px;top:151px;width:8px;height:2px;background:#b4bccb"></div><div style="left:14px;top:156px;width:8px;height:2px;background:#b4bccb"></div><div style="left:14px;top:168px;width:8px;height:2px;background:#b4bccb"></div><div style="left:14px;top:173px;width:8px;height:2px;background:#b4bccb"></div><div style="left:14px;top:179px;width:8px;height:2px;background:#b4bccb"></div><div style="left:14px;top:184px;width:8px;height:2px;background:#b4bccb"></div><div style="left:14px;top:196px;width:8px;height:2px;background:#b4bccb"></div><div style="left:14px;top:201px;width:8px;height:2px;background:#b4bccb"></div><div style="left:14px;top:206px;width:8px;height:2px;background:#b4bccb"></div><div style="left:14px;top:218px;width:8px;height:2px;background:#b4bccb"></div><div style="left:14px;top:224px;width:8px;height:2px;background:#b4bccb"></div><div style="left:14px;top:230px;width:8px;height:2px;background:#b4bccb"></div><div style="left:14px;top:259px;width:8px;height:2px;background:#b4bccb"></div><div style="left:14px;top:242px;width:8px;height:2px;background:#b4bccb"></div></div>
<div style="left:1511.3px;top:1412px;width:79.2px;height:273.5px;"><div style="right:29.3px;top:-5px;width:40px;height:16px;line-height:16px;font-size:15.3px;text-align:right;color:#cfd3dc;letter-spacing:-0.2px">0</div><div style="right:19.5px;top:1.9px;width:6.5px;height:1.6px;background:#cfd3dc"></div><div style="right:29.3px;top:13.1px;width:40px;height:16px;line-height:16px;font-size:15.3px;text-align:right;color:#cfd3dc;letter-spacing:-0.2px">3</div><div style="right:19.5px;top:20px;width:6.5px;height:1.6px;background:#cfd3dc"></div><div style="right:29.3px;top:31.1px;width:40px;height:16px;line-height:16px;font-size:15.3px;text-align:right;color:#cfd3dc;letter-spacing:-0.2px">6</div><div style="right:19.5px;top:38px;width:6.5px;height:1.6px;background:#cfd3dc"></div><div style="right:29.3px;top:49.2px;width:40px;height:16px;line-height:16px;font-size:15.3px;text-align:right;color:#cfd3dc;letter-spacing:-0.2px">9</div><div style="right:19.5px;top:56.1px;width:6.5px;height:1.6px;background:#cfd3dc"></div><div style="right:29.3px;top:67.2px;width:40px;height:16px;line-height:16px;font-size:15.3px;text-align:right;color:#cfd3dc;letter-spacing:-0.2px">12</div><div style="right:19.5px;top:74.1px;width:6.5px;height:1.6px;background:#cfd3dc"></div><div style="right:29.3px;top:85.3px;width:40px;height:16px;line-height:16px;font-size:15.3px;text-align:right;color:#cfd3dc;letter-spacing:-0.2px">15</div><div style="right:19.5px;top:92.2px;width:6.5px;height:1.6px;background:#cfd3dc"></div><div style="right:29.3px;top:103.3px;width:40px;height:16px;line-height:16px;font-size:15.3px;text-align:right;color:#cfd3dc;letter-spacing:-0.2px">18</div><div style="right:19.5px;top:110.2px;width:6.5px;height:1.6px;background:#cfd3dc"></div><div style="right:29.3px;top:121.3px;width:40px;height:16px;line-height:16px;font-size:15.3px;text-align:right;color:#cfd3dc;letter-spacing:-0.2px">21</div><div style="right:19.5px;top:128.2px;width:6.5px;height:1.6px;background:#cfd3dc"></div><div style="right:29.3px;top:139.3px;width:40px;height:16px;line-height:16px;font-size:15.3px;text-align:right;color:#cfd3dc;letter-spacing:-0.2px">24</div><div style="right:19.5px;top:146.2px;width:6.5px;height:1.6px;background:#cfd3dc"></div><div style="right:29.3px;top:163.1px;width:40px;height:16px;line-height:16px;font-size:15.3px;text-align:right;color:#cfd3dc;letter-spacing:-0.2px">30</div><div style="right:19.5px;top:170px;width:6.5px;height:1.6px;background:#cfd3dc"></div><div style="right:29.3px;top:183.3px;width:40px;height:16px;line-height:16px;font-size:15.3px;text-align:right;color:#cfd3dc;letter-spacing:-0.2px">35</div><div style="right:19.5px;top:190.2px;width:6.5px;height:1.6px;background:#cfd3dc"></div><div style="right:29.3px;top:203.6px;width:40px;height:16px;line-height:16px;font-size:15.3px;text-align:right;color:#cfd3dc;letter-spacing:-0.2px">40</div><div style="right:19.5px;top:210.5px;width:6.5px;height:1.6px;background:#cfd3dc"></div><div style="right:29.3px;top:223.3px;width:40px;height:16px;line-height:16px;font-size:15.3px;text-align:right;color:#cfd3dc;letter-spacing:-0.2px">45</div><div style="right:19.5px;top:230.2px;width:6.5px;height:1.6px;background:#cfd3dc"></div><div style="right:29.3px;top:243.6px;width:40px;height:16px;line-height:16px;font-size:15.3px;text-align:right;color:#cfd3dc;letter-spacing:-0.2px">50</div><div style="right:19.5px;top:250.5px;width:6.5px;height:1.6px;background:#cfd3dc"></div><div style="right:29.3px;top:263.1px;width:40px;height:16px;line-height:16px;font-size:15.3px;text-align:right;color:#cfd3dc;letter-spacing:-0.2px">60</div><div style="right:19.5px;top:270px;width:6.5px;height:1.6px;background:#cfd3dc"></div><div style="right:19.2px;top:1px;width:1.7px;opacity:.85;height:271.5px;background:repeating-linear-gradient(#cfd3dc 0,#cfd3dc 1.9px,transparent 1.9px,transparent 4.3px)"></div><div style="right:0;top:0;width:19.2px;height:273.5px;background:linear-gradient(#2b3034 0,#2b3034 19.5px,#28282c 20px,#332c30 50px,#32302f 160px,#33322e 100%);box-shadow:0 0 0 .5px #1a2030"></div></div>
<div style="left:1572.8px;top:1582px;width:6.2px;height:102px;background:linear-gradient(to top,#f8c022 0%,#f9a033 28%,#fb8048 50%,#fc6a62 70%,#fb6068 100%);background-size:6.2px 270.5px;background-position:0 100%;background-repeat:no-repeat;"></div>
<div style="left:1572.8px;top:1569.5px;width:6.2px;height:2.4px;background:#fb7a4c;"></div>
<div style="left:1498px;top:1554px;width:34px;height:70px;background:#fff;border-radius:4px;box-shadow:0 2px 5px rgba(10,15,40,.45),0 0 0 .5px rgba(200,210,230,.5);"></div>
<div style="left:1498px;top:1585.7px;width:34px;height:2px;background:#000;"></div>
<div style="left:1489.5px;top:1737px;width:54.5px;height:34.5px;background:#676673;border-radius:7px;line-height:34.5px;font-size:28px;color:#fff;text-align:center;white-space:nowrap;overflow:hidden;box-shadow:0 0 0 1px rgba(60,60,75,.6);">M</div>
<div style="left:1549.5px;top:1737px;width:54.5px;height:34.5px;background:#676673;border-radius:7px;line-height:34.5px;font-size:28px;color:#fff;text-align:center;white-space:nowrap;overflow:hidden;box-shadow:0 0 0 1px rgba(60,60,75,.6);">S</div>
<div style="left:1615px;top:863.5px;width:133px;height:930px;background:linear-gradient(90deg,#40527c,#445785 50%,#40527c);"></div>
<div style="left:1613.2px;top:863.5px;width:1.6px;height:930px;background:#7a9cb2;"></div>
<div style="left:1623.5px;top:863.5px;width:115px;height:40px;background:#3a4a6e;border-radius:0 0 8px 8px;box-shadow:inset 0 0 0 1px rgba(30,40,70,.35);"></div>
<div style="left:1623.5px;top:920.5px;width:79px;height:35px;background:#37476a;border-radius:8px;box-shadow:inset 0 0 0 1px rgba(30,40,70,.35);"></div>
<div style="left:1708.5px;top:922px;width:32px;height:32px;background:#37476a;border-radius:50%;box-shadow:inset 0 0 0 1px rgba(30,40,70,.35);"></div>
<div style="left:1623.5px;top:960.5px;width:79px;height:35px;background:#37476a;border-radius:8px;box-shadow:inset 0 0 0 1px rgba(30,40,70,.35);"></div>
<div style="left:1708.5px;top:962px;width:32px;height:32px;background:#37476a;border-radius:50%;box-shadow:inset 0 0 0 1px rgba(30,40,70,.35);"></div>
<div style="left:1623.5px;top:1000.5px;width:79px;height:17.5px;background:#37476a;border-radius:7px;box-shadow:inset 0 0 0 1px rgba(30,40,70,.35);"></div>
<div style="left:1623.5px;top:1034.5px;width:115px;height:34.5px;background:#676673;border-radius:7px;line-height:34.5px;font-size:24px;color:#cdced6;text-align:center;white-space:nowrap;overflow:hidden;letter-spacing:0.25px;box-shadow:0 0 0 1px rgba(60,60,75,.6);"><span style="display:inline-block;transform:scaleX(0.92)">St Out</span></div>
<div style="left:1625.5px;top:1080px;width:111px;height:33.5px;background:#3b4b70;border-radius:2px;box-shadow:inset 0 0 0 1px rgba(30,40,70,.3);"></div>
<div style="left:1623.5px;top:1126px;width:115px;height:35px;background:#191919;border-radius:7px;line-height:35px;font-size:24px;color:#4fdc70;text-align:center;white-space:nowrap;overflow:hidden;letter-spacing:0.25px;"><span style="display:inline-block;transform:scaleX(0.92)">Read</span></div>
<svg style="left:1652.1px;top:1177.16px;" width="58.8" height="54.88" viewBox="0 0 60 56"><rect x="7.2" y="3.2" width="45.6" height="19.6" fill="none" stroke="#04d4d2" stroke-width="1.9"/><rect x="12" y="8.5" width="1.7" height="1.7" fill="#04d4d2"/><rect x="17" y="8.5" width="1.7" height="1.7" fill="#04d4d2"/><rect x="19.6" y="8.5" width="1.7" height="1.7" fill="#04d4d2"/><rect x="22.2" y="8.5" width="1.7" height="1.7" fill="#04d4d2"/><rect x="27.2" y="8.5" width="1.7" height="1.7" fill="#04d4d2"/><rect x="29.8" y="8.5" width="1.7" height="1.7" fill="#04d4d2"/><rect x="32.4" y="8.5" width="1.7" height="1.7" fill="#04d4d2"/><rect x="37.4" y="8.5" width="1.7" height="1.7" fill="#04d4d2"/><rect x="40" y="8.5" width="1.7" height="1.7" fill="#04d4d2"/><rect x="42.6" y="8.5" width="1.7" height="1.7" fill="#04d4d2"/><rect x="47.4" y="8.5" width="1.7" height="1.7" fill="#04d4d2"/><rect x="12" y="12.3" width="1.7" height="1.7" fill="#04d4d2"/><rect x="17" y="12.3" width="1.7" height="1.7" fill="#04d4d2"/><rect x="19.6" y="12.3" width="1.7" height="1.7" fill="#04d4d2"/><rect x="22.2" y="12.3" width="1.7" height="1.7" fill="#04d4d2"/><rect x="27.2" y="12.3" width="1.7" height="1.7" fill="#04d4d2"/><rect x="29.8" y="12.3" width="1.7" height="1.7" fill="#04d4d2"/><rect x="32.4" y="12.3" width="1.7" height="1.7" fill="#04d4d2"/><rect x="37.4" y="12.3" width="1.7" height="1.7" fill="#04d4d2"/><rect x="40" y="12.3" width="1.7" height="1.7" fill="#04d4d2"/><rect x="42.6" y="12.3" width="1.7" height="1.7" fill="#04d4d2"/><rect x="47.4" y="12.3" width="1.7" height="1.7" fill="#04d4d2"/><rect x="10.6" y="16.3" width="38.8" height="3" fill="none" stroke="#04d4d2" stroke-width="1.3"/><path d="M16.5 51L43 24M43.5 51L17 24" stroke="#04d4d2" stroke-width="2"/><circle cx="16.5" cy="51.2" r="2.5" fill="#04d4d2"/><circle cx="43.5" cy="51.2" r="2.5" fill="#04d4d2"/></svg>
<svg style="left:1644.5px;top:1249.8px;" width="74" height="74" viewBox="0 0 74 74"><path d="M21.3 64.19A31.4 31.4 0 1 1 52.7 64.19" fill="none" stroke="#000" stroke-width="7.2"/><path d="M37 5.6A31.4 31.4 0 0 1 53.8 63.53" fill="none" stroke="#fb7f7d" stroke-width="7.2"/><circle cx="37" cy="37" r="27.8" fill="#fff"/><path d="M51.34 59.64L47.33 53.31" stroke="#555" stroke-width="1.8"/></svg>
<div style="left:1641.5px;top:1273.08px;width:80px;height:31px;line-height:31px;font-size:23.5px;color:#333;text-align:center;white-space:nowrap;letter-spacing:-0.8px;">+63</div>
<div style="left:1625px;top:1334px;width:54px;height:33.5px;background:#1f2941;"></div>
<div style="left:1683px;top:1334px;width:54px;height:33.5px;background:#1f2941;"></div>
<div style="left:1617px;top:1336.29px;width:70px;height:32px;line-height:32px;font-size:24.5px;color:#e8e8ec;text-align:center;white-space:nowrap;transform:scaleX(0.93);transform-origin:50% 50%;">-8.2</div>
<div style="left:1675px;top:1336.29px;width:70px;height:32px;line-height:32px;font-size:24.5px;color:#4fdc70;text-align:center;white-space:nowrap;transform:scaleX(0.81);transform-origin:50% 50%;">-26.2</div>
<div style="left:1647.3px;top:1412px;width:3.4px;height:273.5px;background:#6b6b74;"></div>
<div style="left:1622.8px;top:1412px;width:22px;height:273.5px;"><div style="left:0;top:2px;width:22px;height:2px;background:#b4bccb"></div><div style="left:0;top:36px;width:22px;height:2px;background:#b4bccb"></div><div style="left:0;top:70px;width:22px;height:2px;background:#b4bccb"></div><div style="left:0;top:104px;width:22px;height:2px;background:#b4bccb"></div><div style="left:0;top:140px;width:22px;height:2px;background:#b4bccb"></div><div style="left:0;top:162px;width:22px;height:2px;background:#b4bccb"></div><div style="left:0;top:190px;width:22px;height:2px;background:#b4bccb"></div><div style="left:0;top:212px;width:22px;height:2px;background:#b4bccb"></div><div style="left:0;top:236px;width:22px;height:2px;background:#b4bccb"></div><div style="left:0;top:248px;width:22px;height:2px;background:#b4bccb"></div><div style="left:0;top:270px;width:22px;height:2px;background:#b4bccb"></div><div style="left:14px;top:12px;width:8px;height:2px;background:#b4bccb"></div><div style="left:14px;top:24px;width:8px;height:2px;background:#b4bccb"></div><div style="left:14px;top:46px;width:8px;height:2px;background:#b4bccb"></div><div style="left:14px;top:58px;width:8px;height:2px;background:#b4bccb"></div><div style="left:14px;top:81px;width:8px;height:2px;background:#b4bccb"></div><div style="left:14px;top:93px;width:8px;height:2px;background:#b4bccb"></div><div style="left:14px;top:116px;width:8px;height:2px;background:#b4bccb"></div><div style="left:14px;top:128px;width:8px;height:2px;background:#b4bccb"></div><div style="left:14px;top:146px;width:8px;height:2px;background:#b4bccb"></div><div style="left:14px;top:151px;width:8px;height:2px;background:#b4bccb"></div><div style="left:14px;top:156px;width:8px;height:2px;background:#b4bccb"></div><div style="left:14px;top:168px;width:8px;height:2px;background:#b4bccb"></div><div style="left:14px;top:173px;width:8px;height:2px;background:#b4bccb"></div><div style="left:14px;top:179px;width:8px;height:2px;background:#b4bccb"></div><div style="left:14px;top:184px;width:8px;height:2px;background:#b4bccb"></div><div style="left:14px;top:196px;width:8px;height:2px;background:#b4bccb"></div><div style="left:14px;top:201px;width:8px;height:2px;background:#b4bccb"></div><div style="left:14px;top:206px;width:8px;height:2px;background:#b4bccb"></div><div style="left:14px;top:218px;width:8px;height:2px;background:#b4bccb"></div><div style="left:14px;top:224px;width:8px;height:2px;background:#b4bccb"></div><div style="left:14px;top:230px;width:8px;height:2px;background:#b4bccb"></div><div style="left:14px;top:259px;width:8px;height:2px;background:#b4bccb"></div><div style="left:14px;top:242px;width:8px;height:2px;background:#b4bccb"></div></div>
<div style="left:1645.3px;top:1412px;width:79.2px;height:273.5px;"><div style="right:29.3px;top:-5px;width:40px;height:16px;line-height:16px;font-size:15.3px;text-align:right;color:#cfd3dc;letter-spacing:-0.2px">0</div><div style="right:19.5px;top:1.9px;width:6.5px;height:1.6px;background:#cfd3dc"></div><div style="right:29.3px;top:13.1px;width:40px;height:16px;line-height:16px;font-size:15.3px;text-align:right;color:#cfd3dc;letter-spacing:-0.2px">3</div><div style="right:19.5px;top:20px;width:6.5px;height:1.6px;background:#cfd3dc"></div><div style="right:29.3px;top:31.1px;width:40px;height:16px;line-height:16px;font-size:15.3px;text-align:right;color:#cfd3dc;letter-spacing:-0.2px">6</div><div style="right:19.5px;top:38px;width:6.5px;height:1.6px;background:#cfd3dc"></div><div style="right:29.3px;top:49.2px;width:40px;height:16px;line-height:16px;font-size:15.3px;text-align:right;color:#cfd3dc;letter-spacing:-0.2px">9</div><div style="right:19.5px;top:56.1px;width:6.5px;height:1.6px;background:#cfd3dc"></div><div style="right:29.3px;top:67.2px;width:40px;height:16px;line-height:16px;font-size:15.3px;text-align:right;color:#cfd3dc;letter-spacing:-0.2px">12</div><div style="right:19.5px;top:74.1px;width:6.5px;height:1.6px;background:#cfd3dc"></div><div style="right:29.3px;top:85.3px;width:40px;height:16px;line-height:16px;font-size:15.3px;text-align:right;color:#cfd3dc;letter-spacing:-0.2px">15</div><div style="right:19.5px;top:92.2px;width:6.5px;height:1.6px;background:#cfd3dc"></div><div style="right:29.3px;top:103.3px;width:40px;height:16px;line-height:16px;font-size:15.3px;text-align:right;color:#cfd3dc;letter-spacing:-0.2px">18</div><div style="right:19.5px;top:110.2px;width:6.5px;height:1.6px;background:#cfd3dc"></div><div style="right:29.3px;top:121.3px;width:40px;height:16px;line-height:16px;font-size:15.3px;text-align:right;color:#cfd3dc;letter-spacing:-0.2px">21</div><div style="right:19.5px;top:128.2px;width:6.5px;height:1.6px;background:#cfd3dc"></div><div style="right:29.3px;top:139.3px;width:40px;height:16px;line-height:16px;font-size:15.3px;text-align:right;color:#cfd3dc;letter-spacing:-0.2px">24</div><div style="right:19.5px;top:146.2px;width:6.5px;height:1.6px;background:#cfd3dc"></div><div style="right:29.3px;top:163.1px;width:40px;height:16px;line-height:16px;font-size:15.3px;text-align:right;color:#cfd3dc;letter-spacing:-0.2px">30</div><div style="right:19.5px;top:170px;width:6.5px;height:1.6px;background:#cfd3dc"></div><div style="right:29.3px;top:183.3px;width:40px;height:16px;line-height:16px;font-size:15.3px;text-align:right;color:#cfd3dc;letter-spacing:-0.2px">35</div><div style="right:19.5px;top:190.2px;width:6.5px;height:1.6px;background:#cfd3dc"></div><div style="right:29.3px;top:203.6px;width:40px;height:16px;line-height:16px;font-size:15.3px;text-align:right;color:#cfd3dc;letter-spacing:-0.2px">40</div><div style="right:19.5px;top:210.5px;width:6.5px;height:1.6px;background:#cfd3dc"></div><div style="right:29.3px;top:223.3px;width:40px;height:16px;line-height:16px;font-size:15.3px;text-align:right;color:#cfd3dc;letter-spacing:-0.2px">45</div><div style="right:19.5px;top:230.2px;width:6.5px;height:1.6px;background:#cfd3dc"></div><div style="right:29.3px;top:243.6px;width:40px;height:16px;line-height:16px;font-size:15.3px;text-align:right;color:#cfd3dc;letter-spacing:-0.2px">50</div><div style="right:19.5px;top:250.5px;width:6.5px;height:1.6px;background:#cfd3dc"></div><div style="right:29.3px;top:263.1px;width:40px;height:16px;line-height:16px;font-size:15.3px;text-align:right;color:#cfd3dc;letter-spacing:-0.2px">60</div><div style="right:19.5px;top:270px;width:6.5px;height:1.6px;background:#cfd3dc"></div><div style="right:19.2px;top:1px;width:1.7px;opacity:.85;height:271.5px;background:repeating-linear-gradient(#cfd3dc 0,#cfd3dc 1.9px,transparent 1.9px,transparent 4.3px)"></div><div style="right:0;top:0;width:19.2px;height:273.5px;background:linear-gradient(#2b3034 0,#2b3034 19.5px,#28282c 20px,#332c30 50px,#32302f 160px,#33322e 100%);box-shadow:0 0 0 .5px #1a2030"></div></div>
<div style="left:1716.7px;top:1574px;width:6.2px;height:110px;background:linear-gradient(to top,#f8c022 0%,#f9a033 28%,#fb8048 50%,#fc6a62 70%,#fb6068 100%);background-size:6.2px 270.5px;background-position:0 100%;background-repeat:no-repeat;"></div>
<div style="left:1632px;top:1530px;width:34px;height:70px;background:#fff;border-radius:4px;box-shadow:0 2px 5px rgba(10,15,40,.45),0 0 0 .5px rgba(200,210,230,.5);"></div>
<div style="left:1632px;top:1561.7px;width:34px;height:2px;background:#000;"></div>
<div style="left:1623.5px;top:1737px;width:54.5px;height:34.5px;background:#676673;border-radius:7px;line-height:34.5px;font-size:28px;color:#fff;text-align:center;white-space:nowrap;overflow:hidden;box-shadow:0 0 0 1px rgba(60,60,75,.6);">M</div>
<div style="left:1683.5px;top:1737px;width:54.5px;height:34.5px;background:#676673;border-radius:7px;line-height:34.5px;font-size:28px;color:#fff;text-align:center;white-space:nowrap;overflow:hidden;box-shadow:0 0 0 1px rgba(60,60,75,.6);">S</div>
<div style="left:1747.2px;top:863.5px;width:1.6px;height:930px;background:#7a9cb2;"></div>
<div style="left:1757.5px;top:863.5px;width:115px;height:40px;background:#2a3652;border-radius:0 0 8px 8px;box-shadow:inset 0 0 0 1px rgba(30,40,70,.35);"></div>
<div style="left:1757.5px;top:920.5px;width:79px;height:35px;background:#2b3754;border-radius:8px;box-shadow:inset 0 0 0 1px rgba(30,40,70,.35);"></div>
<div style="left:1842.5px;top:922px;width:32px;height:32px;background:#2b3754;border-radius:50%;box-shadow:inset 0 0 0 1px rgba(30,40,70,.35);"></div>
<div style="left:1757.5px;top:960.5px;width:79px;height:35px;background:#2b3754;border-radius:8px;box-shadow:inset 0 0 0 1px rgba(30,40,70,.35);"></div>
<div style="left:1842.5px;top:962px;width:32px;height:32px;background:#2b3754;border-radius:50%;box-shadow:inset 0 0 0 1px rgba(30,40,70,.35);"></div>
<div style="left:1757.5px;top:1000.5px;width:79px;height:17.5px;background:#2b3754;border-radius:7px;box-shadow:inset 0 0 0 1px rgba(30,40,70,.35);"></div>
<div style="left:1757.5px;top:1034.5px;width:115px;height:34.5px;background:#676673;border-radius:7px;line-height:34.5px;font-size:24px;color:#cdced6;text-align:center;white-space:nowrap;overflow:hidden;letter-spacing:0.25px;box-shadow:0 0 0 1px rgba(60,60,75,.6);"><span style="display:inline-block;transform:scaleX(0.92)">St Out</span></div>
<div style="left:1759.5px;top:1080px;width:111px;height:33.5px;background:#2c3855;border-radius:2px;box-shadow:inset 0 0 0 1px rgba(30,40,70,.3);"></div>
<div style="left:1757.5px;top:1126px;width:115px;height:35px;background:#191919;border-radius:7px;line-height:35px;font-size:24px;color:#4fdc70;text-align:center;white-space:nowrap;overflow:hidden;letter-spacing:0.25px;"><span style="display:inline-block;transform:scaleX(0.92)">Read</span></div>
<svg style="left:1786.1px;top:1177.16px;" width="58.8" height="54.88" viewBox="0 0 60 56"><rect x="7.2" y="3.2" width="45.6" height="19.6" fill="none" stroke="#12d3ae" stroke-width="1.9"/><rect x="12" y="8.5" width="1.7" height="1.7" fill="#12d3ae"/><rect x="17" y="8.5" width="1.7" height="1.7" fill="#12d3ae"/><rect x="19.6" y="8.5" width="1.7" height="1.7" fill="#12d3ae"/><rect x="22.2" y="8.5" width="1.7" height="1.7" fill="#12d3ae"/><rect x="27.2" y="8.5" width="1.7" height="1.7" fill="#12d3ae"/><rect x="29.8" y="8.5" width="1.7" height="1.7" fill="#12d3ae"/><rect x="32.4" y="8.5" width="1.7" height="1.7" fill="#12d3ae"/><rect x="37.4" y="8.5" width="1.7" height="1.7" fill="#12d3ae"/><rect x="40" y="8.5" width="1.7" height="1.7" fill="#12d3ae"/><rect x="42.6" y="8.5" width="1.7" height="1.7" fill="#12d3ae"/><rect x="47.4" y="8.5" width="1.7" height="1.7" fill="#12d3ae"/><rect x="12" y="12.3" width="1.7" height="1.7" fill="#12d3ae"/><rect x="17" y="12.3" width="1.7" height="1.7" fill="#12d3ae"/><rect x="19.6" y="12.3" width="1.7" height="1.7" fill="#12d3ae"/><rect x="22.2" y="12.3" width="1.7" height="1.7" fill="#12d3ae"/><rect x="27.2" y="12.3" width="1.7" height="1.7" fill="#12d3ae"/><rect x="29.8" y="12.3" width="1.7" height="1.7" fill="#12d3ae"/><rect x="32.4" y="12.3" width="1.7" height="1.7" fill="#12d3ae"/><rect x="37.4" y="12.3" width="1.7" height="1.7" fill="#12d3ae"/><rect x="40" y="12.3" width="1.7" height="1.7" fill="#12d3ae"/><rect x="42.6" y="12.3" width="1.7" height="1.7" fill="#12d3ae"/><rect x="47.4" y="12.3" width="1.7" height="1.7" fill="#12d3ae"/><rect x="10.6" y="16.3" width="38.8" height="3" fill="none" stroke="#12d3ae" stroke-width="1.3"/><path d="M16.5 51L43 24M43.5 51L17 24" stroke="#12d3ae" stroke-width="2"/><circle cx="16.5" cy="51.2" r="2.5" fill="#12d3ae"/><circle cx="43.5" cy="51.2" r="2.5" fill="#12d3ae"/></svg>
<svg style="left:1778.5px;top:1249.8px;" width="74" height="74" viewBox="0 0 74 74"><path d="M21.3 64.19A31.4 31.4 0 1 1 52.7 64.19" fill="none" stroke="#000" stroke-width="7.2"/><path d="M37 2L37 9.2" stroke="#fb7f7d" stroke-width="2.6"/><circle cx="37" cy="37" r="27.8" fill="#fff"/><path d="M37 10.2L37 17.7" stroke="#555" stroke-width="1.8"/></svg>
<div style="left:1759px;top:1334px;width:54px;height:33.5px;background:#1f2941;"></div>
<div style="left:1817px;top:1334px;width:54px;height:33.5px;background:#1f2941;"></div>
<div style="left:1751px;top:1336.29px;width:70px;height:32px;line-height:32px;font-size:24.5px;color:#e8e8ec;text-align:center;white-space:nowrap;transform:scaleX(0.93);transform-origin:50% 50%;">-7.5</div>
<div style="left:1809px;top:1336.29px;width:70px;height:32px;line-height:32px;font-size:24.5px;color:#4fdc70;text-align:center;white-space:nowrap;transform:scaleX(0.93);transform-origin:50% 50%;">-6.5</div>
<div style="left:1781.3px;top:1412px;width:3.4px;height:273.5px;background:#6b6b74;"></div>
<div style="left:1756.8px;top:1412px;width:22px;height:273.5px;"><div style="left:0;top:2px;width:22px;height:2px;background:#b4bccb"></div><div style="left:0;top:36px;width:22px;height:2px;background:#b4bccb"></div><div style="left:0;top:70px;width:22px;height:2px;background:#b4bccb"></div><div style="left:0;top:104px;width:22px;height:2px;background:#b4bccb"></div><div style="left:0;top:140px;width:22px;height:2px;background:#b4bccb"></div><div style="left:0;top:162px;width:22px;height:2px;background:#b4bccb"></div><div style="left:0;top:190px;width:22px;height:2px;background:#b4bccb"></div><div style="left:0;top:212px;width:22px;height:2px;background:#b4bccb"></div><div style="left:0;top:236px;width:22px;height:2px;background:#b4bccb"></div><div style="left:0;top:248px;width:22px;height:2px;background:#b4bccb"></div><div style="left:0;top:270px;width:22px;height:2px;background:#b4bccb"></div><div style="left:14px;top:12px;width:8px;height:2px;background:#b4bccb"></div><div style="left:14px;top:24px;width:8px;height:2px;background:#b4bccb"></div><div style="left:14px;top:46px;width:8px;height:2px;background:#b4bccb"></div><div style="left:14px;top:58px;width:8px;height:2px;background:#b4bccb"></div><div style="left:14px;top:81px;width:8px;height:2px;background:#b4bccb"></div><div style="left:14px;top:93px;width:8px;height:2px;background:#b4bccb"></div><div style="left:14px;top:116px;width:8px;height:2px;background:#b4bccb"></div><div style="left:14px;top:128px;width:8px;height:2px;background:#b4bccb"></div><div style="left:14px;top:146px;width:8px;height:2px;background:#b4bccb"></div><div style="left:14px;top:151px;width:8px;height:2px;background:#b4bccb"></div><div style="left:14px;top:156px;width:8px;height:2px;background:#b4bccb"></div><div style="left:14px;top:168px;width:8px;height:2px;background:#b4bccb"></div><div style="left:14px;top:173px;width:8px;height:2px;background:#b4bccb"></div><div style="left:14px;top:179px;width:8px;height:2px;background:#b4bccb"></div><div style="left:14px;top:184px;width:8px;height:2px;background:#b4bccb"></div><div style="left:14px;top:196px;width:8px;height:2px;background:#b4bccb"></div><div style="left:14px;top:201px;width:8px;height:2px;background:#b4bccb"></div><div style="left:14px;top:206px;width:8px;height:2px;background:#b4bccb"></div><div style="left:14px;top:218px;width:8px;height:2px;background:#b4bccb"></div><div style="left:14px;top:224px;width:8px;height:2px;background:#b4bccb"></div><div style="left:14px;top:230px;width:8px;height:2px;background:#b4bccb"></div><div style="left:14px;top:259px;width:8px;height:2px;background:#b4bccb"></div><div style="left:14px;top:242px;width:8px;height:2px;background:#b4bccb"></div></div>
<div style="left:1779.3px;top:1412px;width:79.2px;height:273.5px;"><div style="right:29.3px;top:-5px;width:40px;height:16px;line-height:16px;font-size:15.3px;text-align:right;color:#cfd3dc;letter-spacing:-0.2px">0</div><div style="right:19.5px;top:1.9px;width:6.5px;height:1.6px;background:#cfd3dc"></div><div style="right:29.3px;top:13.1px;width:40px;height:16px;line-height:16px;font-size:15.3px;text-align:right;color:#cfd3dc;letter-spacing:-0.2px">3</div><div style="right:19.5px;top:20px;width:6.5px;height:1.6px;background:#cfd3dc"></div><div style="right:29.3px;top:31.1px;width:40px;height:16px;line-height:16px;font-size:15.3px;text-align:right;color:#cfd3dc;letter-spacing:-0.2px">6</div><div style="right:19.5px;top:38px;width:6.5px;height:1.6px;background:#cfd3dc"></div><div style="right:29.3px;top:49.2px;width:40px;height:16px;line-height:16px;font-size:15.3px;text-align:right;color:#cfd3dc;letter-spacing:-0.2px">9</div><div style="right:19.5px;top:56.1px;width:6.5px;height:1.6px;background:#cfd3dc"></div><div style="right:29.3px;top:67.2px;width:40px;height:16px;line-height:16px;font-size:15.3px;text-align:right;color:#cfd3dc;letter-spacing:-0.2px">12</div><div style="right:19.5px;top:74.1px;width:6.5px;height:1.6px;background:#cfd3dc"></div><div style="right:29.3px;top:85.3px;width:40px;height:16px;line-height:16px;font-size:15.3px;text-align:right;color:#cfd3dc;letter-spacing:-0.2px">15</div><div style="right:19.5px;top:92.2px;width:6.5px;height:1.6px;background:#cfd3dc"></div><div style="right:29.3px;top:103.3px;width:40px;height:16px;line-height:16px;font-size:15.3px;text-align:right;color:#cfd3dc;letter-spacing:-0.2px">18</div><div style="right:19.5px;top:110.2px;width:6.5px;height:1.6px;background:#cfd3dc"></div><div style="right:29.3px;top:121.3px;width:40px;height:16px;line-height:16px;font-size:15.3px;text-align:right;color:#cfd3dc;letter-spacing:-0.2px">21</div><div style="right:19.5px;top:128.2px;width:6.5px;height:1.6px;background:#cfd3dc"></div><div style="right:29.3px;top:139.3px;width:40px;height:16px;line-height:16px;font-size:15.3px;text-align:right;color:#cfd3dc;letter-spacing:-0.2px">24</div><div style="right:19.5px;top:146.2px;width:6.5px;height:1.6px;background:#cfd3dc"></div><div style="right:29.3px;top:163.1px;width:40px;height:16px;line-height:16px;font-size:15.3px;text-align:right;color:#cfd3dc;letter-spacing:-0.2px">30</div><div style="right:19.5px;top:170px;width:6.5px;height:1.6px;background:#cfd3dc"></div><div style="right:29.3px;top:183.3px;width:40px;height:16px;line-height:16px;font-size:15.3px;text-align:right;color:#cfd3dc;letter-spacing:-0.2px">35</div><div style="right:19.5px;top:190.2px;width:6.5px;height:1.6px;background:#cfd3dc"></div><div style="right:29.3px;top:203.6px;width:40px;height:16px;line-height:16px;font-size:15.3px;text-align:right;color:#cfd3dc;letter-spacing:-0.2px">40</div><div style="right:19.5px;top:210.5px;width:6.5px;height:1.6px;background:#cfd3dc"></div><div style="right:29.3px;top:223.3px;width:40px;height:16px;line-height:16px;font-size:15.3px;text-align:right;color:#cfd3dc;letter-spacing:-0.2px">45</div><div style="right:19.5px;top:230.2px;width:6.5px;height:1.6px;background:#cfd3dc"></div><div style="right:29.3px;top:243.6px;width:40px;height:16px;line-height:16px;font-size:15.3px;text-align:right;color:#cfd3dc;letter-spacing:-0.2px">50</div><div style="right:19.5px;top:250.5px;width:6.5px;height:1.6px;background:#cfd3dc"></div><div style="right:29.3px;top:263.1px;width:40px;height:16px;line-height:16px;font-size:15.3px;text-align:right;color:#cfd3dc;letter-spacing:-0.2px">60</div><div style="right:19.5px;top:270px;width:6.5px;height:1.6px;background:#cfd3dc"></div><div style="right:19.2px;top:1px;width:1.7px;opacity:.85;height:271.5px;background:repeating-linear-gradient(#cfd3dc 0,#cfd3dc 1.9px,transparent 1.9px,transparent 4.3px)"></div><div style="right:0;top:0;width:19.2px;height:273.5px;background:linear-gradient(#2b3034 0,#2b3034 19.5px,#28282c 20px,#332c30 50px,#32302f 160px,#33322e 100%);box-shadow:0 0 0 .5px #1a2030"></div></div>
<div style="left:1840.8px;top:1478px;width:6.2px;height:206px;background:linear-gradient(to top,#f8c022 0%,#f9a033 28%,#fb8048 50%,#fc6a62 70%,#fb6068 100%);background-size:6.2px 270.5px;background-position:0 100%;background-repeat:no-repeat;"></div>
<div style="left:1850.7px;top:1478px;width:6.2px;height:206px;background:linear-gradient(to top,#f8c022 0%,#f9a033 28%,#fb8048 50%,#fc6a62 70%,#fb6068 100%);background-size:6.2px 270.5px;background-position:0 100%;background-repeat:no-repeat;"></div>
<div style="left:1766px;top:1526px;width:34px;height:70px;background:#fff;border-radius:4px;box-shadow:0 2px 5px rgba(10,15,40,.45),0 0 0 .5px rgba(200,210,230,.5);"></div>
<div style="left:1766px;top:1557.7px;width:34px;height:2px;background:#000;"></div>
<div style="left:1757.5px;top:1737px;width:54.5px;height:34.5px;background:#676673;border-radius:7px;line-height:34.5px;font-size:28px;color:#fff;text-align:center;white-space:nowrap;overflow:hidden;box-shadow:0 0 0 1px rgba(60,60,75,.6);">M</div>
<div style="left:1817.5px;top:1737px;width:54.5px;height:34.5px;background:#676673;border-radius:7px;line-height:34.5px;font-size:28px;color:#fff;text-align:center;white-space:nowrap;overflow:hidden;box-shadow:0 0 0 1px rgba(60,60,75,.6);">S</div>
<div style="left:1881.2px;top:863.5px;width:1.6px;height:930px;background:#7a9cb2;"></div>
<div style="left:1891.5px;top:863.5px;width:115px;height:40px;background:#2a3652;border-radius:0 0 8px 8px;box-shadow:inset 0 0 0 1px rgba(30,40,70,.35);"></div>
<div style="left:1891.5px;top:921px;width:79px;height:34px;background:#7fa1b2;border-radius:7px;line-height:34px;font-size:24px;color:#f1f3f6;text-align:center;white-space:nowrap;overflow:hidden;letter-spacing:0.25px;box-shadow:0 0 0 1px #4f6a80;"><span style="display:inline-block;transform:scaleX(0.92)">Bus 1</span></div>
<svg style="left:1975.6px;top:921.1px;" width="33.8" height="33.8" viewBox="0 0 33.8 33.8"><path d="M10.35 28.24A13.1 13.1 0 1 1 23.45 28.24" fill="none" stroke="#000" stroke-width="5.6"/><path d="M10.35 28.24A13.1 13.1 0 0 1 4.44 20.95" fill="none" stroke="#fb7f7d" stroke-width="5.6"/><circle cx="16.9" cy="16.9" r="10.1" fill="#fff"/></svg>
<div style="left:1891.5px;top:961px;width:79px;height:34px;background:#7fa1b2;border-radius:7px;line-height:34px;font-size:24px;color:#f1f3f6;text-align:center;white-space:nowrap;overflow:hidden;letter-spacing:0.25px;box-shadow:0 0 0 1px #4f6a80;"><span style="display:inline-block;transform:scaleX(0.92)">Bus 2</span></div>
<svg style="left:1975.6px;top:961.1px;" width="33.8" height="33.8" viewBox="0 0 33.8 33.8"><path d="M10.35 28.24A13.1 13.1 0 1 1 23.45 28.24" fill="none" stroke="#000" stroke-width="5.6"/><path d="M10.35 28.24A13.1 13.1 0 1 1 24.6 6.3" fill="none" stroke="#fb7f7d" stroke-width="5.6"/><circle cx="16.9" cy="16.9" r="10.1" fill="#fff"/></svg>
<div style="left:1891.5px;top:1000.5px;width:79px;height:17.5px;background:#2b3754;border-radius:7px;box-shadow:inset 0 0 0 1px rgba(30,40,70,.35);"></div>
<div style="left:1891.5px;top:1034.5px;width:115px;height:34.5px;background:#676673;border-radius:7px;line-height:34.5px;font-size:24px;color:#cdced6;text-align:center;white-space:nowrap;overflow:hidden;letter-spacing:0.25px;box-shadow:0 0 0 1px rgba(60,60,75,.6);"><span style="display:inline-block;transform:scaleX(0.92)">St Out</span></div>
<div style="left:1893.5px;top:1080px;width:111px;height:33.5px;background:#2c3855;border-radius:2px;box-shadow:inset 0 0 0 1px rgba(30,40,70,.3);"></div>
<div style="left:1891.5px;top:1126px;width:115px;height:35px;background:#191919;border-radius:7px;line-height:35px;font-size:24px;color:#4fdc70;text-align:center;white-space:nowrap;overflow:hidden;letter-spacing:0.25px;"><span style="display:inline-block;transform:scaleX(0.92)">Read</span></div>
<svg style="left:1920.1px;top:1176.16px;" width="58.8" height="54.88" viewBox="0 0 60 56"><path d="M13.7 7.5C13.7 0.6 46.3 0.6 46.3 7.5C46.8 21 43 30 38.6 34.5C36 37.3 35.6 41.5 36.8 45C37.8 48 40.8 50.2 40.8 51.8C40.8 55.4 19.2 55.4 19.2 51.8C19.2 50.2 22.2 48 23.2 45C24.4 41.5 24 37.3 21.4 34.5C17 30 13.2 21 13.7 7.5Z" fill="#02d48e"/><path d="M14 8.5C17 13 43 13 46 8.5M14.3 12.3C18 17 42 17 45.7 12.3" fill="none" stroke="#243050" stroke-width="1.3"/></svg>
<svg style="left:1912.5px;top:1249.8px;" width="74" height="74" viewBox="0 0 74 74"><path d="M21.3 64.19A31.4 31.4 0 1 1 52.7 64.19" fill="none" stroke="#000" stroke-width="7.2"/><path d="M37 5.6A31.4 31.4 0 0 1 68.1 32.65" fill="none" stroke="#fb7f7d" stroke-width="7.2"/><circle cx="37" cy="37" r="27.8" fill="#fff"/><path d="M63.54 33.28L56.11 34.32" stroke="#555" stroke-width="1.8"/></svg>
<div style="left:1909.5px;top:1273.08px;width:80px;height:31px;line-height:31px;font-size:23.5px;color:#333;text-align:center;white-space:nowrap;letter-spacing:-0.8px;">+35</div>
<div style="left:1893px;top:1334px;width:54px;height:33.5px;background:#1f2941;"></div>
<div style="left:1951px;top:1334px;width:54px;height:33.5px;background:#1f2941;"></div>
<div style="left:1885px;top:1336.29px;width:70px;height:32px;line-height:32px;font-size:24.5px;color:#e8e8ec;text-align:center;white-space:nowrap;transform:scaleX(0.93);transform-origin:50% 50%;">0.0</div>
<div style="left:1943px;top:1336.29px;width:70px;height:32px;line-height:32px;font-size:24.5px;color:#4fdc70;text-align:center;white-space:nowrap;transform:scaleX(0.93);transform-origin:50% 50%;">-7.0</div>
<div style="left:1915.3px;top:1412px;width:3.4px;height:273.5px;background:#6b6b74;"></div>
<div style="left:1890.8px;top:1412px;width:22px;height:273.5px;"><div style="left:0;top:2px;width:22px;height:2px;background:#b4bccb"></div><div style="left:0;top:36px;width:22px;height:2px;background:#b4bccb"></div><div style="left:0;top:70px;width:22px;height:2px;background:#b4bccb"></div><div style="left:0;top:104px;width:22px;height:2px;background:#b4bccb"></div><div style="left:0;top:140px;width:22px;height:2px;background:#b4bccb"></div><div style="left:0;top:162px;width:22px;height:2px;background:#b4bccb"></div><div style="left:0;top:190px;width:22px;height:2px;background:#b4bccb"></div><div style="left:0;top:212px;width:22px;height:2px;background:#b4bccb"></div><div style="left:0;top:236px;width:22px;height:2px;background:#b4bccb"></div><div style="left:0;top:248px;width:22px;height:2px;background:#b4bccb"></div><div style="left:0;top:270px;width:22px;height:2px;background:#b4bccb"></div><div style="left:14px;top:12px;width:8px;height:2px;background:#b4bccb"></div><div style="left:14px;top:24px;width:8px;height:2px;background:#b4bccb"></div><div style="left:14px;top:46px;width:8px;height:2px;background:#b4bccb"></div><div style="left:14px;top:58px;width:8px;height:2px;background:#b4bccb"></div><div style="left:14px;top:81px;width:8px;height:2px;background:#b4bccb"></div><div style="left:14px;top:93px;width:8px;height:2px;background:#b4bccb"></div><div style="left:14px;top:116px;width:8px;height:2px;background:#b4bccb"></div><div style="left:14px;top:128px;width:8px;height:2px;background:#b4bccb"></div><div style="left:14px;top:146px;width:8px;height:2px;background:#b4bccb"></div><div style="left:14px;top:151px;width:8px;height:2px;background:#b4bccb"></div><div style="left:14px;top:156px;width:8px;height:2px;background:#b4bccb"></div><div style="left:14px;top:168px;width:8px;height:2px;background:#b4bccb"></div><div style="left:14px;top:173px;width:8px;height:2px;background:#b4bccb"></div><div style="left:14px;top:179px;width:8px;height:2px;background:#b4bccb"></div><div style="left:14px;top:184px;width:8px;height:2px;background:#b4bccb"></div><div style="left:14px;top:196px;width:8px;height:2px;background:#b4bccb"></div><div style="left:14px;top:201px;width:8px;height:2px;background:#b4bccb"></div><div style="left:14px;top:206px;width:8px;height:2px;background:#b4bccb"></div><div style="left:14px;top:218px;width:8px;height:2px;background:#b4bccb"></div><div style="left:14px;top:224px;width:8px;height:2px;background:#b4bccb"></div><div style="left:14px;top:230px;width:8px;height:2px;background:#b4bccb"></div><div style="left:14px;top:259px;width:8px;height:2px;background:#b4bccb"></div><div style="left:14px;top:242px;width:8px;height:2px;background:#b4bccb"></div></div>
<div style="left:1913.3px;top:1412px;width:79.2px;height:273.5px;"><div style="right:29.3px;top:-5px;width:40px;height:16px;line-height:16px;font-size:15.3px;text-align:right;color:#cfd3dc;letter-spacing:-0.2px">0</div><div style="right:19.5px;top:1.9px;width:6.5px;height:1.6px;background:#cfd3dc"></div><div style="right:29.3px;top:13.1px;width:40px;height:16px;line-height:16px;font-size:15.3px;text-align:right;color:#cfd3dc;letter-spacing:-0.2px">3</div><div style="right:19.5px;top:20px;width:6.5px;height:1.6px;background:#cfd3dc"></div><div style="right:29.3px;top:31.1px;width:40px;height:16px;line-height:16px;font-size:15.3px;text-align:right;color:#cfd3dc;letter-spacing:-0.2px">6</div><div style="right:19.5px;top:38px;width:6.5px;height:1.6px;background:#cfd3dc"></div><div style="right:29.3px;top:49.2px;width:40px;height:16px;line-height:16px;font-size:15.3px;text-align:right;color:#cfd3dc;letter-spacing:-0.2px">9</div><div style="right:19.5px;top:56.1px;width:6.5px;height:1.6px;background:#cfd3dc"></div><div style="right:29.3px;top:67.2px;width:40px;height:16px;line-height:16px;font-size:15.3px;text-align:right;color:#cfd3dc;letter-spacing:-0.2px">12</div><div style="right:19.5px;top:74.1px;width:6.5px;height:1.6px;background:#cfd3dc"></div><div style="right:29.3px;top:85.3px;width:40px;height:16px;line-height:16px;font-size:15.3px;text-align:right;color:#cfd3dc;letter-spacing:-0.2px">15</div><div style="right:19.5px;top:92.2px;width:6.5px;height:1.6px;background:#cfd3dc"></div><div style="right:29.3px;top:103.3px;width:40px;height:16px;line-height:16px;font-size:15.3px;text-align:right;color:#cfd3dc;letter-spacing:-0.2px">18</div><div style="right:19.5px;top:110.2px;width:6.5px;height:1.6px;background:#cfd3dc"></div><div style="right:29.3px;top:121.3px;width:40px;height:16px;line-height:16px;font-size:15.3px;text-align:right;color:#cfd3dc;letter-spacing:-0.2px">21</div><div style="right:19.5px;top:128.2px;width:6.5px;height:1.6px;background:#cfd3dc"></div><div style="right:29.3px;top:139.3px;width:40px;height:16px;line-height:16px;font-size:15.3px;text-align:right;color:#cfd3dc;letter-spacing:-0.2px">24</div><div style="right:19.5px;top:146.2px;width:6.5px;height:1.6px;background:#cfd3dc"></div><div style="right:29.3px;top:163.1px;width:40px;height:16px;line-height:16px;font-size:15.3px;text-align:right;color:#cfd3dc;letter-spacing:-0.2px">30</div><div style="right:19.5px;top:170px;width:6.5px;height:1.6px;background:#cfd3dc"></div><div style="right:29.3px;top:183.3px;width:40px;height:16px;line-height:16px;font-size:15.3px;text-align:right;color:#cfd3dc;letter-spacing:-0.2px">35</div><div style="right:19.5px;top:190.2px;width:6.5px;height:1.6px;background:#cfd3dc"></div><div style="right:29.3px;top:203.6px;width:40px;height:16px;line-height:16px;font-size:15.3px;text-align:right;color:#cfd3dc;letter-spacing:-0.2px">40</div><div style="right:19.5px;top:210.5px;width:6.5px;height:1.6px;background:#cfd3dc"></div><div style="right:29.3px;top:223.3px;width:40px;height:16px;line-height:16px;font-size:15.3px;text-align:right;color:#cfd3dc;letter-spacing:-0.2px">45</div><div style="right:19.5px;top:230.2px;width:6.5px;height:1.6px;background:#cfd3dc"></div><div style="right:29.3px;top:243.6px;width:40px;height:16px;line-height:16px;font-size:15.3px;text-align:right;color:#cfd3dc;letter-spacing:-0.2px">50</div><div style="right:19.5px;top:250.5px;width:6.5px;height:1.6px;background:#cfd3dc"></div><div style="right:29.3px;top:263.1px;width:40px;height:16px;line-height:16px;font-size:15.3px;text-align:right;color:#cfd3dc;letter-spacing:-0.2px">60</div><div style="right:19.5px;top:270px;width:6.5px;height:1.6px;background:#cfd3dc"></div><div style="right:19.2px;top:1px;width:1.7px;opacity:.85;height:271.5px;background:repeating-linear-gradient(#cfd3dc 0,#cfd3dc 1.9px,transparent 1.9px,transparent 4.3px)"></div><div style="right:0;top:0;width:19.2px;height:273.5px;background:linear-gradient(#2b3034 0,#2b3034 19.5px,#28282c 20px,#332c30 50px,#32302f 160px,#33322e 100%);box-shadow:0 0 0 .5px #1a2030"></div></div>
<div style="left:1974.8px;top:1554px;width:6.2px;height:130px;background:linear-gradient(to top,#f8c022 0%,#f9a033 28%,#fb8048 50%,#fc6a62 70%,#fb6068 100%);background-size:6.2px 270.5px;background-position:0 100%;background-repeat:no-repeat;"></div>
<div style="left:1984.7px;top:1456px;width:6.2px;height:228px;background:linear-gradient(to top,#f8c022 0%,#f9a033 28%,#fb8048 50%,#fc6a62 70%,#fb6068 100%);background-size:6.2px 270.5px;background-position:0 100%;background-repeat:no-repeat;"></div>
<div style="left:1900px;top:1448px;width:34px;height:70px;background:#fff;border-radius:4px;box-shadow:0 2px 5px rgba(10,15,40,.45),0 0 0 .5px rgba(200,210,230,.5);"></div>
<div style="left:1900px;top:1479.7px;width:34px;height:2px;background:#000;"></div>
<div style="left:1891.5px;top:1737px;width:54.5px;height:34.5px;background:#676673;border-radius:7px;line-height:34.5px;font-size:28px;color:#fff;text-align:center;white-space:nowrap;overflow:hidden;box-shadow:0 0 0 1px rgba(60,60,75,.6);">M</div>
<div style="left:1951.5px;top:1737px;width:54.5px;height:34.5px;background:#676673;border-radius:7px;line-height:34.5px;font-size:28px;color:#fff;text-align:center;white-space:nowrap;overflow:hidden;box-shadow:0 0 0 1px rgba(60,60,75,.6);">S</div>
<div style="left:2015.2px;top:863.5px;width:1.6px;height:930px;background:#7a9cb2;"></div>
<div style="left:2025.5px;top:863.5px;width:115px;height:40px;background:#2a3652;border-radius:0 0 8px 8px;box-shadow:inset 0 0 0 1px rgba(30,40,70,.35);"></div>
<div style="left:2024px;top:863.5px;width:118px;height:30px;overflow:hidden;"><div style="left:2px;top:-12px;width:114px;height:35px;background:#7fa1b2;border-radius:7px;box-shadow:0 0 0 1px #4f6a80;line-height:36px;font-size:24px;color:#f1f3f6;text-align:center"><span style="display:inline-block;transform:scaleX(.97)">St-Delay</span></div></div>
<div style="left:2025.5px;top:921px;width:79px;height:34px;background:#7fa1b2;border-radius:7px;line-height:34px;font-size:24px;color:#f1f3f6;text-align:center;white-space:nowrap;overflow:hidden;letter-spacing:0.25px;box-shadow:0 0 0 1px #4f6a80;"><span style="display:inline-block;transform:scaleX(0.92)">Bus 2</span></div>
<svg style="left:2109.6px;top:921.1px;" width="33.8" height="33.8" viewBox="0 0 33.8 33.8"><path d="M10.35 28.24A13.1 13.1 0 1 1 23.45 28.24" fill="none" stroke="#000" stroke-width="5.6"/><path d="M10.35 28.24A13.1 13.1 0 0 1 4.09 14.18" fill="none" stroke="#fb7f7d" stroke-width="5.6"/><circle cx="16.9" cy="16.9" r="10.1" fill="#fff"/></svg>
<div style="left:2025.5px;top:960.5px;width:79px;height:35px;background:#2b3754;border-radius:8px;box-shadow:inset 0 0 0 1px rgba(30,40,70,.35);"></div>
<div style="left:2110.5px;top:962px;width:32px;height:32px;background:#2b3754;border-radius:50%;box-shadow:inset 0 0 0 1px rgba(30,40,70,.35);"></div>
<div style="left:2025.5px;top:1000.5px;width:79px;height:17.5px;background:#2b3754;border-radius:7px;box-shadow:inset 0 0 0 1px rgba(30,40,70,.35);"></div>
<div style="left:2025.5px;top:1034.5px;width:115px;height:34.5px;background:#676673;border-radius:7px;line-height:34.5px;font-size:24px;color:#cdced6;text-align:center;white-space:nowrap;overflow:hidden;letter-spacing:0.25px;box-shadow:0 0 0 1px rgba(60,60,75,.6);"><span style="display:inline-block;transform:scaleX(0.92)">St Out</span></div>
<div style="left:2027.5px;top:1080px;width:111px;height:33.5px;background:#2c3855;border-radius:2px;box-shadow:inset 0 0 0 1px rgba(30,40,70,.3);"></div>
<div style="left:2025.5px;top:1126px;width:115px;height:35px;background:#191919;border-radius:7px;line-height:35px;font-size:24px;color:#4fdc70;text-align:center;white-space:nowrap;overflow:hidden;letter-spacing:0.25px;"><span style="display:inline-block;transform:scaleX(0.92)">Read</span></div>
<svg style="left:2049.9px;top:1173.64px;" width="67.2" height="62.72" viewBox="0 0 60 56"><rect x="6" y="6.5" width="48" height="43" rx="1.5" fill="none" stroke="#1888e2" stroke-width="2.2"/><rect x="6" y="45.5" width="48" height="4" fill="#1888e2"/><rect x="11" y="11.5" width="19" height="7" fill="#1888e2"/><rect x="11.0" y="22.5" width="3.9" height="3.9" fill="#1888e2"/><rect x="16.1" y="22.5" width="3.9" height="3.9" fill="#1888e2"/><rect x="21.2" y="22.5" width="3.9" height="3.9" fill="#1888e2"/><rect x="26.299999999999997" y="22.5" width="3.9" height="3.9" fill="#1888e2"/><rect x="11.0" y="27.8" width="3.9" height="3.9" fill="#1888e2"/><rect x="16.1" y="27.8" width="3.9" height="3.9" fill="#1888e2"/><rect x="21.2" y="27.8" width="3.9" height="3.9" fill="#1888e2"/><rect x="26.299999999999997" y="27.8" width="3.9" height="3.9" fill="#1888e2"/><rect x="11.0" y="33.1" width="3.9" height="3.9" fill="#1888e2"/><rect x="16.1" y="33.1" width="3.9" height="3.9" fill="#1888e2"/><rect x="21.2" y="33.1" width="3.9" height="3.9" fill="#1888e2"/><rect x="26.299999999999997" y="33.1" width="3.9" height="3.9" fill="#1888e2"/><rect x="11.0" y="38.4" width="3.9" height="3.9" fill="#1888e2"/><rect x="16.1" y="38.4" width="3.9" height="3.9" fill="#1888e2"/><rect x="21.2" y="38.4" width="3.9" height="3.9" fill="#1888e2"/><rect x="26.299999999999997" y="38.4" width="3.9" height="3.9" fill="#1888e2"/><rect x="35" y="12.5" width="3.8" height="1.8" fill="#1888e2"/><rect x="40.4" y="12.5" width="3.8" height="1.8" fill="#1888e2"/><rect x="45.8" y="12.5" width="3.8" height="1.8" fill="#1888e2"/><rect x="35" y="17" width="3.8" height="1.8" fill="#1888e2"/><rect x="40.4" y="17" width="3.8" height="1.8" fill="#1888e2"/><rect x="45.8" y="17" width="3.8" height="1.8" fill="#1888e2"/><rect x="35" y="35.5" width="3.8" height="1.8" fill="#1888e2"/><rect x="40.4" y="35.5" width="3.8" height="1.8" fill="#1888e2"/><rect x="45.8" y="35.5" width="3.8" height="1.8" fill="#1888e2"/><rect x="35" y="40" width="3.8" height="1.8" fill="#1888e2"/><rect x="40.4" y="40" width="3.8" height="1.8" fill="#1888e2"/><rect x="45.8" y="40" width="3.8" height="1.8" fill="#1888e2"/><circle cx="42.5" cy="26.5" r="3.8" fill="#1888e2"/></svg>
<svg style="left:2046.5px;top:1249.8px;" width="74" height="74" viewBox="0 0 74 74"><path d="M21.3 64.19A31.4 31.4 0 1 1 52.7 64.19" fill="none" stroke="#000" stroke-width="7.2"/><path d="M37 2L37 9.2" stroke="#fb7f7d" stroke-width="2.6"/><circle cx="37" cy="37" r="27.8" fill="#fff"/><path d="M37 10.2L37 17.7" stroke="#555" stroke-width="1.8"/></svg>
<div style="left:2027px;top:1334px;width:54px;height:33.5px;background:#1f2941;"></div>
<div style="left:2085px;top:1334px;width:54px;height:33.5px;background:#1f2941;"></div>
<div style="left:2019px;top:1336.29px;width:70px;height:32px;line-height:32px;font-size:24.5px;color:#e8e8ec;text-align:center;white-space:nowrap;transform:scaleX(0.93);transform-origin:50% 50%;">0.0</div>
<div style="left:2077px;top:1336.29px;width:70px;height:32px;line-height:32px;font-size:24.5px;color:#f8c32e;text-align:center;white-space:nowrap;transform:scaleX(0.93);transform-origin:50% 50%;">-0.1</div>
<div style="left:2049.3px;top:1412px;width:3.4px;height:273.5px;background:#6b6b74;"></div>
<div style="left:2024.8px;top:1412px;width:22px;height:273.5px;"><div style="left:0;top:2px;width:22px;height:2px;background:#b4bccb"></div><div style="left:0;top:36px;width:22px;height:2px;background:#b4bccb"></div><div style="left:0;top:70px;width:22px;height:2px;background:#b4bccb"></div><div style="left:0;top:104px;width:22px;height:2px;background:#b4bccb"></div><div style="left:0;top:140px;width:22px;height:2px;background:#b4bccb"></div><div style="left:0;top:162px;width:22px;height:2px;background:#b4bccb"></div><div style="left:0;top:190px;width:22px;height:2px;background:#b4bccb"></div><div style="left:0;top:212px;width:22px;height:2px;background:#b4bccb"></div><div style="left:0;top:236px;width:22px;height:2px;background:#b4bccb"></div><div style="left:0;top:248px;width:22px;height:2px;background:#b4bccb"></div><div style="left:0;top:270px;width:22px;height:2px;background:#b4bccb"></div><div style="left:14px;top:12px;width:8px;height:2px;background:#b4bccb"></div><div style="left:14px;top:24px;width:8px;height:2px;background:#b4bccb"></div><div style="left:14px;top:46px;width:8px;height:2px;background:#b4bccb"></div><div style="left:14px;top:58px;width:8px;height:2px;background:#b4bccb"></div><div style="left:14px;top:81px;width:8px;height:2px;background:#b4bccb"></div><div style="left:14px;top:93px;width:8px;height:2px;background:#b4bccb"></div><div style="left:14px;top:116px;width:8px;height:2px;background:#b4bccb"></div><div style="left:14px;top:128px;width:8px;height:2px;background:#b4bccb"></div><div style="left:14px;top:146px;width:8px;height:2px;background:#b4bccb"></div><div style="left:14px;top:151px;width:8px;height:2px;background:#b4bccb"></div><div style="left:14px;top:156px;width:8px;height:2px;background:#b4bccb"></div><div style="left:14px;top:168px;width:8px;height:2px;background:#b4bccb"></div><div style="left:14px;top:173px;width:8px;height:2px;background:#b4bccb"></div><div style="left:14px;top:179px;width:8px;height:2px;background:#b4bccb"></div><div style="left:14px;top:184px;width:8px;height:2px;background:#b4bccb"></div><div style="left:14px;top:196px;width:8px;height:2px;background:#b4bccb"></div><div style="left:14px;top:201px;width:8px;height:2px;background:#b4bccb"></div><div style="left:14px;top:206px;width:8px;height:2px;background:#b4bccb"></div><div style="left:14px;top:218px;width:8px;height:2px;background:#b4bccb"></div><div style="left:14px;top:224px;width:8px;height:2px;background:#b4bccb"></div><div style="left:14px;top:230px;width:8px;height:2px;background:#b4bccb"></div><div style="left:14px;top:259px;width:8px;height:2px;background:#b4bccb"></div><div style="left:14px;top:242px;width:8px;height:2px;background:#b4bccb"></div></div>
<div style="left:2047.3px;top:1412px;width:79.2px;height:273.5px;"><div style="right:29.3px;top:-5px;width:40px;height:16px;line-height:16px;font-size:15.3px;text-align:right;color:#cfd3dc;letter-spacing:-0.2px">0</div><div style="right:19.5px;top:1.9px;width:6.5px;height:1.6px;background:#cfd3dc"></div><div style="right:29.3px;top:13.1px;width:40px;height:16px;line-height:16px;font-size:15.3px;text-align:right;color:#cfd3dc;letter-spacing:-0.2px">3</div><div style="right:19.5px;top:20px;width:6.5px;height:1.6px;background:#cfd3dc"></div><div style="right:29.3px;top:31.1px;width:40px;height:16px;line-height:16px;font-size:15.3px;text-align:right;color:#cfd3dc;letter-spacing:-0.2px">6</div><div style="right:19.5px;top:38px;width:6.5px;height:1.6px;background:#cfd3dc"></div><div style="right:29.3px;top:49.2px;width:40px;height:16px;line-height:16px;font-size:15.3px;text-align:right;color:#cfd3dc;letter-spacing:-0.2px">9</div><div style="right:19.5px;top:56.1px;width:6.5px;height:1.6px;background:#cfd3dc"></div><div style="right:29.3px;top:67.2px;width:40px;height:16px;line-height:16px;font-size:15.3px;text-align:right;color:#cfd3dc;letter-spacing:-0.2px">12</div><div style="right:19.5px;top:74.1px;width:6.5px;height:1.6px;background:#cfd3dc"></div><div style="right:29.3px;top:85.3px;width:40px;height:16px;line-height:16px;font-size:15.3px;text-align:right;color:#cfd3dc;letter-spacing:-0.2px">15</div><div style="right:19.5px;top:92.2px;width:6.5px;height:1.6px;background:#cfd3dc"></div><div style="right:29.3px;top:103.3px;width:40px;height:16px;line-height:16px;font-size:15.3px;text-align:right;color:#cfd3dc;letter-spacing:-0.2px">18</div><div style="right:19.5px;top:110.2px;width:6.5px;height:1.6px;background:#cfd3dc"></div><div style="right:29.3px;top:121.3px;width:40px;height:16px;line-height:16px;font-size:15.3px;text-align:right;color:#cfd3dc;letter-spacing:-0.2px">21</div><div style="right:19.5px;top:128.2px;width:6.5px;height:1.6px;background:#cfd3dc"></div><div style="right:29.3px;top:139.3px;width:40px;height:16px;line-height:16px;font-size:15.3px;text-align:right;color:#cfd3dc;letter-spacing:-0.2px">24</div><div style="right:19.5px;top:146.2px;width:6.5px;height:1.6px;background:#cfd3dc"></div><div style="right:29.3px;top:163.1px;width:40px;height:16px;line-height:16px;font-size:15.3px;text-align:right;color:#cfd3dc;letter-spacing:-0.2px">30</div><div style="right:19.5px;top:170px;width:6.5px;height:1.6px;background:#cfd3dc"></div><div style="right:29.3px;top:183.3px;width:40px;height:16px;line-height:16px;font-size:15.3px;text-align:right;color:#cfd3dc;letter-spacing:-0.2px">35</div><div style="right:19.5px;top:190.2px;width:6.5px;height:1.6px;background:#cfd3dc"></div><div style="right:29.3px;top:203.6px;width:40px;height:16px;line-height:16px;font-size:15.3px;text-align:right;color:#cfd3dc;letter-spacing:-0.2px">40</div><div style="right:19.5px;top:210.5px;width:6.5px;height:1.6px;background:#cfd3dc"></div><div style="right:29.3px;top:223.3px;width:40px;height:16px;line-height:16px;font-size:15.3px;text-align:right;color:#cfd3dc;letter-spacing:-0.2px">45</div><div style="right:19.5px;top:230.2px;width:6.5px;height:1.6px;background:#cfd3dc"></div><div style="right:29.3px;top:243.6px;width:40px;height:16px;line-height:16px;font-size:15.3px;text-align:right;color:#cfd3dc;letter-spacing:-0.2px">50</div><div style="right:19.5px;top:250.5px;width:6.5px;height:1.6px;background:#cfd3dc"></div><div style="right:29.3px;top:263.1px;width:40px;height:16px;line-height:16px;font-size:15.3px;text-align:right;color:#cfd3dc;letter-spacing:-0.2px">60</div><div style="right:19.5px;top:270px;width:6.5px;height:1.6px;background:#cfd3dc"></div><div style="right:19.2px;top:1px;width:1.7px;opacity:.85;height:271.5px;background:repeating-linear-gradient(#cfd3dc 0,#cfd3dc 1.9px,transparent 1.9px,transparent 4.3px)"></div><div style="right:0;top:0;width:19.2px;height:273.5px;background:linear-gradient(#2b3034 0,#2b3034 19.5px,#28282c 20px,#332c30 50px,#32302f 160px,#33322e 100%);box-shadow:0 0 0 .5px #1a2030"></div></div>
<div style="left:2108.8px;top:1434px;width:6.2px;height:250px;background:linear-gradient(to top,#f8c022 0%,#f9a033 28%,#fb8048 50%,#fc6a62 70%,#fb6068 100%);background-size:6.2px 270.5px;background-position:0 100%;background-repeat:no-repeat;"></div>
<div style="left:2118.7px;top:1434px;width:6.2px;height:250px;background:linear-gradient(to top,#f8c022 0%,#f9a033 28%,#fb8048 50%,#fc6a62 70%,#fb6068 100%);background-size:6.2px 270.5px;background-position:0 100%;background-repeat:no-repeat;"></div>
<div style="left:2108.8px;top:1413.5px;width:6.2px;height:18.5px;background:#80a4b4;"></div>
<div style="left:2108.8px;top:1432px;width:6.2px;height:26px;background:linear-gradient(#2b2230,#fb6068);"></div>
<div style="left:2118.7px;top:1413.5px;width:6.2px;height:18.5px;background:#80a4b4;"></div>
<div style="left:2118.7px;top:1432px;width:6.2px;height:26px;background:linear-gradient(#2b2230,#fb6068);"></div>
<div style="left:2034px;top:1448px;width:34px;height:70px;background:#fff;border-radius:4px;box-shadow:0 2px 5px rgba(10,15,40,.45),0 0 0 .5px rgba(200,210,230,.5);"></div>
<div style="left:2034px;top:1479.7px;width:34px;height:2px;background:#000;"></div>
<div style="left:2025.5px;top:1737px;width:54.5px;height:34.5px;background:#676673;border-radius:7px;line-height:34.5px;font-size:28px;color:#fff;text-align:center;white-space:nowrap;overflow:hidden;box-shadow:0 0 0 1px rgba(60,60,75,.6);">M</div>
<div style="left:2085.5px;top:1737px;width:54.5px;height:34.5px;background:#676673;border-radius:7px;line-height:34.5px;font-size:28px;color:#fff;text-align:center;white-space:nowrap;overflow:hidden;box-shadow:0 0 0 1px rgba(60,60,75,.6);">S</div>
<svg style="left:2033px;top:1783.5px;" width="14" height="11" viewBox="0 0 14 11"><path d="M7 0L14 11H0Z" fill="#b3b8c6"/></svg>
<div style="left:2149.2px;top:863.5px;width:1.6px;height:930px;background:#7a9cb2;"></div>
<div style="left:2159.5px;top:863.5px;width:115px;height:40px;background:#2a3652;border-radius:0 0 8px 8px;box-shadow:inset 0 0 0 1px rgba(30,40,70,.35);"></div>
<div style="left:2159.5px;top:921px;width:79px;height:34px;background:#7fa1b2;border-radius:7px;line-height:34px;font-size:24px;color:#f1f3f6;text-align:center;white-space:nowrap;overflow:hidden;letter-spacing:0.25px;box-shadow:0 0 0 1px #4f6a80;"><span style="display:inline-block;transform:scaleX(0.92)">Bus 2</span></div>
<svg style="left:2243.6px;top:921.1px;" width="33.8" height="33.8" viewBox="0 0 33.8 33.8"><path d="M10.35 28.24A13.1 13.1 0 1 1 23.45 28.24" fill="none" stroke="#000" stroke-width="5.6"/><path d="M10.35 28.24A13.1 13.1 0 0 1 3.87 18.27" fill="none" stroke="#fb7f7d" stroke-width="5.6"/><circle cx="16.9" cy="16.9" r="10.1" fill="#fff"/></svg>
<div style="left:2159.5px;top:960.5px;width:79px;height:35px;background:#2b3754;border-radius:8px;box-shadow:inset 0 0 0 1px rgba(30,40,70,.35);"></div>
<div style="left:2244.5px;top:962px;width:32px;height:32px;background:#2b3754;border-radius:50%;box-shadow:inset 0 0 0 1px rgba(30,40,70,.35);"></div>
<div style="left:2159.5px;top:1000.5px;width:79px;height:17.5px;background:#2b3754;border-radius:7px;box-shadow:inset 0 0 0 1px rgba(30,40,70,.35);"></div>
<div style="left:2159.5px;top:1034.5px;width:115px;height:34.5px;background:#676673;border-radius:7px;line-height:34.5px;font-size:24px;color:#cdced6;text-align:center;white-space:nowrap;overflow:hidden;letter-spacing:0.25px;box-shadow:0 0 0 1px rgba(60,60,75,.6);"><span style="display:inline-block;transform:scaleX(0.92)">St Out</span></div>
<div style="left:2161.5px;top:1080px;width:111px;height:33.5px;background:#2c3855;border-radius:2px;box-shadow:inset 0 0 0 1px rgba(30,40,70,.3);"></div>
<div style="left:2159.5px;top:1126px;width:115px;height:35px;background:#191919;border-radius:7px;line-height:35px;font-size:24px;color:#4fdc70;text-align:center;white-space:nowrap;overflow:hidden;letter-spacing:0.25px;"><span style="display:inline-block;transform:scaleX(0.92)">Read</span></div>
<svg style="left:2187.5px;top:1174.5px;" width="60" height="56" viewBox="0 0 60 56"><path d="M7 34C6.5 26 10 21.5 15.5 22.5L28 19.5L40.5 35.5C37.5 44 31 52.3 22.5 52.3C12.5 52.3 7.5 44.5 7 34Z" fill="#04cc43"/><path d="M14.3 28L16.2 11.8" stroke="#04cc43" stroke-width="6.2" stroke-linecap="round"/><path d="M26 25L38.6 7.6" stroke="#04cc43" stroke-width="5.1" stroke-linecap="round"/><path d="M31.5 30.5L45.8 11.8" stroke="#04cc43" stroke-width="5.1" stroke-linecap="round"/><path d="M35.2 35L50 18.8" stroke="#04cc43" stroke-width="5.1" stroke-linecap="round"/><path d="M37 39.5L49.6 29" stroke="#04cc43" stroke-width="5" stroke-linecap="round"/></svg>
<svg style="left:2180.5px;top:1249.8px;" width="74" height="74" viewBox="0 0 74 74"><path d="M21.3 64.19A31.4 31.4 0 1 1 52.7 64.19" fill="none" stroke="#000" stroke-width="7.2"/><path d="M37 2L37 9.2" stroke="#fb7f7d" stroke-width="2.6"/><circle cx="37" cy="37" r="27.8" fill="#fff"/><path d="M37 10.2L37 17.7" stroke="#555" stroke-width="1.8"/></svg>
<div style="left:2161px;top:1334px;width:54px;height:33.5px;background:#1f2941;"></div>
<div style="left:2219px;top:1334px;width:54px;height:33.5px;background:#1f2941;"></div>
<div style="left:2153px;top:1336.29px;width:70px;height:32px;line-height:32px;font-size:24.5px;color:#e8e8ec;text-align:center;white-space:nowrap;transform:scaleX(0.81);transform-origin:50% 50%;">-11.2</div>
<div style="left:2211px;top:1336.29px;width:70px;height:32px;line-height:32px;font-size:24.5px;color:#4fdc70;text-align:center;white-space:nowrap;transform:scaleX(0.81);transform-origin:50% 50%;">-11.0</div>
<div style="left:2183.3px;top:1412px;width:3.4px;height:273.5px;background:#6b6b74;"></div>
<div style="left:2158.8px;top:1412px;width:22px;height:273.5px;"><div style="left:0;top:2px;width:22px;height:2px;background:#b4bccb"></div><div style="left:0;top:36px;width:22px;height:2px;background:#b4bccb"></div><div style="left:0;top:70px;width:22px;height:2px;background:#b4bccb"></div><div style="left:0;top:104px;width:22px;height:2px;background:#b4bccb"></div><div style="left:0;top:140px;width:22px;height:2px;background:#b4bccb"></div><div style="left:0;top:162px;width:22px;height:2px;background:#b4bccb"></div><div style="left:0;top:190px;width:22px;height:2px;background:#b4bccb"></div><div style="left:0;top:212px;width:22px;height:2px;background:#b4bccb"></div><div style="left:0;top:236px;width:22px;height:2px;background:#b4bccb"></div><div style="left:0;top:248px;width:22px;height:2px;background:#b4bccb"></div><div style="left:0;top:270px;width:22px;height:2px;background:#b4bccb"></div><div style="left:14px;top:12px;width:8px;height:2px;background:#b4bccb"></div><div style="left:14px;top:24px;width:8px;height:2px;background:#b4bccb"></div><div style="left:14px;top:46px;width:8px;height:2px;background:#b4bccb"></div><div style="left:14px;top:58px;width:8px;height:2px;background:#b4bccb"></div><div style="left:14px;top:81px;width:8px;height:2px;background:#b4bccb"></div><div style="left:14px;top:93px;width:8px;height:2px;background:#b4bccb"></div><div style="left:14px;top:116px;width:8px;height:2px;background:#b4bccb"></div><div style="left:14px;top:128px;width:8px;height:2px;background:#b4bccb"></div><div style="left:14px;top:146px;width:8px;height:2px;background:#b4bccb"></div><div style="left:14px;top:151px;width:8px;height:2px;background:#b4bccb"></div><div style="left:14px;top:156px;width:8px;height:2px;background:#b4bccb"></div><div style="left:14px;top:168px;width:8px;height:2px;background:#b4bccb"></div><div style="left:14px;top:173px;width:8px;height:2px;background:#b4bccb"></div><div style="left:14px;top:179px;width:8px;height:2px;background:#b4bccb"></div><div style="left:14px;top:184px;width:8px;height:2px;background:#b4bccb"></div><div style="left:14px;top:196px;width:8px;height:2px;background:#b4bccb"></div><div style="left:14px;top:201px;width:8px;height:2px;background:#b4bccb"></div><div style="left:14px;top:206px;width:8px;height:2px;background:#b4bccb"></div><div style="left:14px;top:218px;width:8px;height:2px;background:#b4bccb"></div><div style="left:14px;top:224px;width:8px;height:2px;background:#b4bccb"></div><div style="left:14px;top:230px;width:8px;height:2px;background:#b4bccb"></div><div style="left:14px;top:259px;width:8px;height:2px;background:#b4bccb"></div><div style="left:14px;top:242px;width:8px;height:2px;background:#b4bccb"></div></div>
<div style="left:2181.3px;top:1412px;width:79.2px;height:273.5px;"><div style="right:29.3px;top:-5px;width:40px;height:16px;line-height:16px;font-size:15.3px;text-align:right;color:#cfd3dc;letter-spacing:-0.2px">0</div><div style="right:19.5px;top:1.9px;width:6.5px;height:1.6px;background:#cfd3dc"></div><div style="right:29.3px;top:13.1px;width:40px;height:16px;line-height:16px;font-size:15.3px;text-align:right;color:#cfd3dc;letter-spacing:-0.2px">3</div><div style="right:19.5px;top:20px;width:6.5px;height:1.6px;background:#cfd3dc"></div><div style="right:29.3px;top:31.1px;width:40px;height:16px;line-height:16px;font-size:15.3px;text-align:right;color:#cfd3dc;letter-spacing:-0.2px">6</div><div style="right:19.5px;top:38px;width:6.5px;height:1.6px;background:#cfd3dc"></div><div style="right:29.3px;top:49.2px;width:40px;height:16px;line-height:16px;font-size:15.3px;text-align:right;color:#cfd3dc;letter-spacing:-0.2px">9</div><div style="right:19.5px;top:56.1px;width:6.5px;height:1.6px;background:#cfd3dc"></div><div style="right:29.3px;top:67.2px;width:40px;height:16px;line-height:16px;font-size:15.3px;text-align:right;color:#cfd3dc;letter-spacing:-0.2px">12</div><div style="right:19.5px;top:74.1px;width:6.5px;height:1.6px;background:#cfd3dc"></div><div style="right:29.3px;top:85.3px;width:40px;height:16px;line-height:16px;font-size:15.3px;text-align:right;color:#cfd3dc;letter-spacing:-0.2px">15</div><div style="right:19.5px;top:92.2px;width:6.5px;height:1.6px;background:#cfd3dc"></div><div style="right:29.3px;top:103.3px;width:40px;height:16px;line-height:16px;font-size:15.3px;text-align:right;color:#cfd3dc;letter-spacing:-0.2px">18</div><div style="right:19.5px;top:110.2px;width:6.5px;height:1.6px;background:#cfd3dc"></div><div style="right:29.3px;top:121.3px;width:40px;height:16px;line-height:16px;font-size:15.3px;text-align:right;color:#cfd3dc;letter-spacing:-0.2px">21</div><div style="right:19.5px;top:128.2px;width:6.5px;height:1.6px;background:#cfd3dc"></div><div style="right:29.3px;top:139.3px;width:40px;height:16px;line-height:16px;font-size:15.3px;text-align:right;color:#cfd3dc;letter-spacing:-0.2px">24</div><div style="right:19.5px;top:146.2px;width:6.5px;height:1.6px;background:#cfd3dc"></div><div style="right:29.3px;top:163.1px;width:40px;height:16px;line-height:16px;font-size:15.3px;text-align:right;color:#cfd3dc;letter-spacing:-0.2px">30</div><div style="right:19.5px;top:170px;width:6.5px;height:1.6px;background:#cfd3dc"></div><div style="right:29.3px;top:183.3px;width:40px;height:16px;line-height:16px;font-size:15.3px;text-align:right;color:#cfd3dc;letter-spacing:-0.2px">35</div><div style="right:19.5px;top:190.2px;width:6.5px;height:1.6px;background:#cfd3dc"></div><div style="right:29.3px;top:203.6px;width:40px;height:16px;line-height:16px;font-size:15.3px;text-align:right;color:#cfd3dc;letter-spacing:-0.2px">40</div><div style="right:19.5px;top:210.5px;width:6.5px;height:1.6px;background:#cfd3dc"></div><div style="right:29.3px;top:223.3px;width:40px;height:16px;line-height:16px;font-size:15.3px;text-align:right;color:#cfd3dc;letter-spacing:-0.2px">45</div><div style="right:19.5px;top:230.2px;width:6.5px;height:1.6px;background:#cfd3dc"></div><div style="right:29.3px;top:243.6px;width:40px;height:16px;line-height:16px;font-size:15.3px;text-align:right;color:#cfd3dc;letter-spacing:-0.2px">50</div><div style="right:19.5px;top:250.5px;width:6.5px;height:1.6px;background:#cfd3dc"></div><div style="right:29.3px;top:263.1px;width:40px;height:16px;line-height:16px;font-size:15.3px;text-align:right;color:#cfd3dc;letter-spacing:-0.2px">60</div><div style="right:19.5px;top:270px;width:6.5px;height:1.6px;background:#cfd3dc"></div><div style="right:19.2px;top:1px;width:1.7px;opacity:.85;height:271.5px;background:repeating-linear-gradient(#cfd3dc 0,#cfd3dc 1.9px,transparent 1.9px,transparent 4.3px)"></div><div style="right:0;top:0;width:19.2px;height:273.5px;background:linear-gradient(#2b3034 0,#2b3034 19.5px,#28282c 20px,#332c30 50px,#32302f 160px,#33322e 100%);box-shadow:0 0 0 .5px #1a2030"></div></div>
<div style="left:2242.8px;top:1480px;width:6.2px;height:204px;background:linear-gradient(to top,#f8c022 0%,#f9a033 28%,#fb8048 50%,#fc6a62 70%,#fb6068 100%);background-size:6.2px 270.5px;background-position:0 100%;background-repeat:no-repeat;"></div>
<div style="left:2252.7px;top:1480px;width:6.2px;height:204px;background:linear-gradient(to top,#f8c022 0%,#f9a033 28%,#fb8048 50%,#fc6a62 70%,#fb6068 100%);background-size:6.2px 270.5px;background-position:0 100%;background-repeat:no-repeat;"></div>
<div style="left:2168px;top:1546px;width:34px;height:70px;background:#fff;border-radius:4px;box-shadow:0 2px 5px rgba(10,15,40,.45),0 0 0 .5px rgba(200,210,230,.5);"></div>
<div style="left:2168px;top:1577.7px;width:34px;height:2px;background:#000;"></div>
<div style="left:2159.5px;top:1737px;width:54.5px;height:34.5px;background:#676673;border-radius:7px;line-height:34.5px;font-size:28px;color:#fff;text-align:center;white-space:nowrap;overflow:hidden;box-shadow:0 0 0 1px rgba(60,60,75,.6);">M</div>
<div style="left:2219.5px;top:1737px;width:54.5px;height:34.5px;background:#676673;border-radius:7px;line-height:34.5px;font-size:28px;color:#fff;text-align:center;white-space:nowrap;overflow:hidden;box-shadow:0 0 0 1px rgba(60,60,75,.6);">S</div>
<div style="left:2283.2px;top:863.5px;width:1.6px;height:930px;background:#7a9cb2;"></div>
<div style="left:2293.5px;top:863.5px;width:115px;height:40px;background:#2a3652;border-radius:0 0 8px 8px;box-shadow:inset 0 0 0 1px rgba(30,40,70,.35);"></div>
<div style="left:2293.5px;top:920.5px;width:79px;height:35px;background:#2b3754;border-radius:8px;box-shadow:inset 0 0 0 1px rgba(30,40,70,.35);"></div>
<div style="left:2378.5px;top:922px;width:32px;height:32px;background:#2b3754;border-radius:50%;box-shadow:inset 0 0 0 1px rgba(30,40,70,.35);"></div>
<div style="left:2293.5px;top:960.5px;width:79px;height:35px;background:#2b3754;border-radius:8px;box-shadow:inset 0 0 0 1px rgba(30,40,70,.35);"></div>
<div style="left:2378.5px;top:962px;width:32px;height:32px;background:#2b3754;border-radius:50%;box-shadow:inset 0 0 0 1px rgba(30,40,70,.35);"></div>
<div style="left:2293.5px;top:1000.5px;width:79px;height:17.5px;background:#2b3754;border-radius:7px;box-shadow:inset 0 0 0 1px rgba(30,40,70,.35);"></div>
<div style="left:2293.5px;top:1034.5px;width:115px;height:34.5px;background:#676673;border-radius:7px;line-height:34.5px;font-size:24px;color:#cdced6;text-align:center;white-space:nowrap;overflow:hidden;letter-spacing:0.25px;box-shadow:0 0 0 1px rgba(60,60,75,.6);"><span style="display:inline-block;transform:scaleX(0.92)">St Out</span></div>
<div style="left:2295.5px;top:1080px;width:111px;height:33.5px;background:#2c3855;border-radius:2px;box-shadow:inset 0 0 0 1px rgba(30,40,70,.3);"></div>
<div style="left:2293.5px;top:1126px;width:115px;height:35px;background:#7fa1b2;border-radius:7px;line-height:35px;font-size:24px;color:#fff;text-align:center;white-space:nowrap;overflow:hidden;letter-spacing:0.25px;box-shadow:0 0 0 1px #4f6a80;"><span style="display:inline-block;transform:scaleX(0.92)">Read</span></div>
<svg style="left:2323px;top:1177.4px;" width="57" height="53.2" viewBox="0 0 60 56"><rect x="1.5" y="10.5" width="57" height="36.5" rx="1.2" fill="none" stroke="#58d538" stroke-width="2"/><path d="M1.5 18.8H32.5M1.5 27H32.5M1.5 37.6H58.5M11.8 10.5V37.6M22.2 10.5V37.6M32.5 10.5V37.6" stroke="#58d538" stroke-width="1.9" fill="none"/><rect x="34.6" y="12.8" width="22" height="14" fill="none" stroke="#58d538" stroke-width="2.4"/><rect x="1.5" y="27" width="57" height="10.6" fill="#58d538" opacity=".0"/><rect x="33" y="29.5" width="25" height="8" fill="#58d538"/><circle cx="37.5" cy="33.5" r="1.4" fill="#314060"/><circle cx="42.3" cy="33.5" r="1.4" fill="#314060"/><circle cx="47.1" cy="33.5" r="1.4" fill="#314060"/><circle cx="51.9" cy="33.5" r="1.4" fill="#314060"/><circle cx="56.2" cy="33.5" r="1.4" fill="#314060"/><rect x="2" y="38" width="56" height="8.5" fill="#58d538"/><rect x="4.8" y="40" width="2.6" height="5.5" fill="#314060"/><rect x="10.05" y="40" width="2.6" height="5.5" fill="#314060"/><rect x="15.3" y="40" width="2.6" height="5.5" fill="#314060"/><rect x="20.55" y="40" width="2.6" height="5.5" fill="#314060"/><rect x="25.8" y="40" width="2.6" height="5.5" fill="#314060"/><rect x="31.05" y="40" width="2.6" height="5.5" fill="#314060"/><rect x="36.3" y="40" width="2.6" height="5.5" fill="#314060"/><rect x="41.55" y="40" width="2.6" height="5.5" fill="#314060"/><rect x="46.8" y="40" width="2.6" height="5.5" fill="#314060"/><rect x="52.05" y="40" width="2.6" height="5.5" fill="#314060"/></svg>
<svg style="left:2314.5px;top:1249.8px;" width="74" height="74" viewBox="0 0 74 74"><path d="M21.3 64.19A31.4 31.4 0 1 1 52.7 64.19" fill="none" stroke="#000" stroke-width="7.2"/><path d="M37 5.6A31.4 31.4 0 0 0 5.67 39.05" fill="none" stroke="#fb7f7d" stroke-width="7.2"/><circle cx="37" cy="37" r="27.8" fill="#fff"/><path d="M10.26 38.75L17.74 38.26" stroke="#555" stroke-width="1.8"/></svg>
<div style="left:2311.5px;top:1273.08px;width:80px;height:31px;line-height:31px;font-size:23.5px;color:#333;text-align:center;white-space:nowrap;letter-spacing:-0.8px;">-40</div>
<div style="left:2295px;top:1334px;width:54px;height:33.5px;background:#1f2941;"></div>
<div style="left:2353px;top:1334px;width:54px;height:33.5px;background:#1f2941;"></div>
<div style="left:2287px;top:1336.29px;width:70px;height:32px;line-height:32px;font-size:24.5px;color:#e8e8ec;text-align:center;white-space:nowrap;transform:scaleX(0.93);transform-origin:50% 50%;">-3.0</div>
<div style="left:2345px;top:1336.29px;width:70px;height:32px;line-height:32px;font-size:24.5px;color:#4fdc70;text-align:center;white-space:nowrap;transform:scaleX(0.93);transform-origin:50% 50%;">-8.1</div>
<div style="left:2317.3px;top:1412px;width:3.4px;height:273.5px;background:#6b6b74;"></div>
<div style="left:2292.8px;top:1412px;width:22px;height:273.5px;"><div style="left:0;top:2px;width:22px;height:2px;background:#b4bccb"></div><div style="left:0;top:36px;width:22px;height:2px;background:#b4bccb"></div><div style="left:0;top:70px;width:22px;height:2px;background:#b4bccb"></div><div style="left:0;top:104px;width:22px;height:2px;background:#b4bccb"></div><div style="left:0;top:140px;width:22px;height:2px;background:#b4bccb"></div><div style="left:0;top:162px;width:22px;height:2px;background:#b4bccb"></div><div style="left:0;top:190px;width:22px;height:2px;background:#b4bccb"></div><div style="left:0;top:212px;width:22px;height:2px;background:#b4bccb"></div><div style="left:0;top:236px;width:22px;height:2px;background:#b4bccb"></div><div style="left:0;top:248px;width:22px;height:2px;background:#b4bccb"></div><div style="left:0;top:270px;width:22px;height:2px;background:#b4bccb"></div><div style="left:14px;top:12px;width:8px;height:2px;background:#b4bccb"></div><div style="left:14px;top:24px;width:8px;height:2px;background:#b4bccb"></div><div style="left:14px;top:46px;width:8px;height:2px;background:#b4bccb"></div><div style="left:14px;top:58px;width:8px;height:2px;background:#b4bccb"></div><div style="left:14px;top:81px;width:8px;height:2px;background:#b4bccb"></div><div style="left:14px;top:93px;width:8px;height:2px;background:#b4bccb"></div><div style="left:14px;top:116px;width:8px;height:2px;background:#b4bccb"></div><div style="left:14px;top:128px;width:8px;height:2px;background:#b4bccb"></div><div style="left:14px;top:146px;width:8px;height:2px;background:#b4bccb"></div><div style="left:14px;top:151px;width:8px;height:2px;background:#b4bccb"></div><div style="left:14px;top:156px;width:8px;height:2px;background:#b4bccb"></div><div style="left:14px;top:168px;width:8px;height:2px;background:#b4bccb"></div><div style="left:14px;top:173px;width:8px;height:2px;background:#b4bccb"></div><div style="left:14px;top:179px;width:8px;height:2px;background:#b4bccb"></div><div style="left:14px;top:184px;width:8px;height:2px;background:#b4bccb"></div><div style="left:14px;top:196px;width:8px;height:2px;background:#b4bccb"></div><div style="left:14px;top:201px;width:8px;height:2px;background:#b4bccb"></div><div style="left:14px;top:206px;width:8px;height:2px;background:#b4bccb"></div><div style="left:14px;top:218px;width:8px;height:2px;background:#b4bccb"></div><div style="left:14px;top:224px;width:8px;height:2px;background:#b4bccb"></div><div style="left:14px;top:230px;width:8px;height:2px;background:#b4bccb"></div><div style="left:14px;top:259px;width:8px;height:2px;background:#b4bccb"></div><div style="left:14px;top:242px;width:8px;height:2px;background:#b4bccb"></div></div>
<div style="left:2315.3px;top:1412px;width:79.2px;height:273.5px;"><div style="right:29.3px;top:-5px;width:40px;height:16px;line-height:16px;font-size:15.3px;text-align:right;color:#cfd3dc;letter-spacing:-0.2px">0</div><div style="right:19.5px;top:1.9px;width:6.5px;height:1.6px;background:#cfd3dc"></div><div style="right:29.3px;top:13.1px;width:40px;height:16px;line-height:16px;font-size:15.3px;text-align:right;color:#cfd3dc;letter-spacing:-0.2px">3</div><div style="right:19.5px;top:20px;width:6.5px;height:1.6px;background:#cfd3dc"></div><div style="right:29.3px;top:31.1px;width:40px;height:16px;line-height:16px;font-size:15.3px;text-align:right;color:#cfd3dc;letter-spacing:-0.2px">6</div><div style="right:19.5px;top:38px;width:6.5px;height:1.6px;background:#cfd3dc"></div><div style="right:29.3px;top:49.2px;width:40px;height:16px;line-height:16px;font-size:15.3px;text-align:right;color:#cfd3dc;letter-spacing:-0.2px">9</div><div style="right:19.5px;top:56.1px;width:6.5px;height:1.6px;background:#cfd3dc"></div><div style="right:29.3px;top:67.2px;width:40px;height:16px;line-height:16px;font-size:15.3px;text-align:right;color:#cfd3dc;letter-spacing:-0.2px">12</div><div style="right:19.5px;top:74.1px;width:6.5px;height:1.6px;background:#cfd3dc"></div><div style="right:29.3px;top:85.3px;width:40px;height:16px;line-height:16px;font-size:15.3px;text-align:right;color:#cfd3dc;letter-spacing:-0.2px">15</div><div style="right:19.5px;top:92.2px;width:6.5px;height:1.6px;background:#cfd3dc"></div><div style="right:29.3px;top:103.3px;width:40px;height:16px;line-height:16px;font-size:15.3px;text-align:right;color:#cfd3dc;letter-spacing:-0.2px">18</div><div style="right:19.5px;top:110.2px;width:6.5px;height:1.6px;background:#cfd3dc"></div><div style="right:29.3px;top:121.3px;width:40px;height:16px;line-height:16px;font-size:15.3px;text-align:right;color:#cfd3dc;letter-spacing:-0.2px">21</div><div style="right:19.5px;top:128.2px;width:6.5px;height:1.6px;background:#cfd3dc"></div><div style="right:29.3px;top:139.3px;width:40px;height:16px;line-height:16px;font-size:15.3px;text-align:right;color:#cfd3dc;letter-spacing:-0.2px">24</div><div style="right:19.5px;top:146.2px;width:6.5px;height:1.6px;background:#cfd3dc"></div><div style="right:29.3px;top:163.1px;width:40px;height:16px;line-height:16px;font-size:15.3px;text-align:right;color:#cfd3dc;letter-spacing:-0.2px">30</div><div style="right:19.5px;top:170px;width:6.5px;height:1.6px;background:#cfd3dc"></div><div style="right:29.3px;top:183.3px;width:40px;height:16px;line-height:16px;font-size:15.3px;text-align:right;color:#cfd3dc;letter-spacing:-0.2px">35</div><div style="right:19.5px;top:190.2px;width:6.5px;height:1.6px;background:#cfd3dc"></div><div style="right:29.3px;top:203.6px;width:40px;height:16px;line-height:16px;font-size:15.3px;text-align:right;color:#cfd3dc;letter-spacing:-0.2px">40</div><div style="right:19.5px;top:210.5px;width:6.5px;height:1.6px;background:#cfd3dc"></div><div style="right:29.3px;top:223.3px;width:40px;height:16px;line-height:16px;font-size:15.3px;text-align:right;color:#cfd3dc;letter-spacing:-0.2px">45</div><div style="right:19.5px;top:230.2px;width:6.5px;height:1.6px;background:#cfd3dc"></div><div style="right:29.3px;top:243.6px;width:40px;height:16px;line-height:16px;font-size:15.3px;text-align:right;color:#cfd3dc;letter-spacing:-0.2px">50</div><div style="right:19.5px;top:250.5px;width:6.5px;height:1.6px;background:#cfd3dc"></div><div style="right:29.3px;top:263.1px;width:40px;height:16px;line-height:16px;font-size:15.3px;text-align:right;color:#cfd3dc;letter-spacing:-0.2px">60</div><div style="right:19.5px;top:270px;width:6.5px;height:1.6px;background:#cfd3dc"></div><div style="right:19.2px;top:1px;width:1.7px;opacity:.85;height:271.5px;background:repeating-linear-gradient(#cfd3dc 0,#cfd3dc 1.9px,transparent 1.9px,transparent 4.3px)"></div><div style="right:0;top:0;width:19.2px;height:273.5px;background:linear-gradient(#2b3034 0,#2b3034 19.5px,#28282c 20px,#332c30 50px,#32302f 160px,#33322e 100%);box-shadow:0 0 0 .5px #1a2030"></div></div>
<div style="left:2376.8px;top:1521.5px;width:6.2px;height:162.5px;background:linear-gradient(to top,#f8c022 0%,#f9a033 28%,#fb8048 50%,#fc6a62 70%,#fb6068 100%);background-size:6.2px 270.5px;background-position:0 100%;background-repeat:no-repeat;"></div>
<div style="left:2376.8px;top:1506px;width:6.2px;height:2.4px;background:#fc6466;"></div>
<div style="left:2386.7px;top:1650px;width:6.2px;height:34px;background:linear-gradient(to top,#f8c022 0%,#f9a033 28%,#fb8048 50%,#fc6a62 70%,#fb6068 100%);background-size:6.2px 270.5px;background-position:0 100%;background-repeat:no-repeat;"></div>
<div style="left:2386.7px;top:1613.5px;width:6.2px;height:2.4px;background:#f9a033;"></div>
<div style="left:2302px;top:1482px;width:34px;height:70px;background:#fff;border-radius:4px;box-shadow:0 2px 5px rgba(10,15,40,.45),0 0 0 .5px rgba(200,210,230,.5);"></div>
<div style="left:2302px;top:1513.7px;width:34px;height:2px;background:#000;"></div>
<div style="left:2293.5px;top:1737px;width:54.5px;height:34.5px;background:#676673;border-radius:7px;line-height:34.5px;font-size:28px;color:#fff;text-align:center;white-space:nowrap;overflow:hidden;box-shadow:0 0 0 1px rgba(60,60,75,.6);">M</div>
<div style="left:2353.5px;top:1737px;width:54.5px;height:34.5px;background:#676673;border-radius:7px;line-height:34.5px;font-size:28px;color:#fff;text-align:center;white-space:nowrap;overflow:hidden;box-shadow:0 0 0 1px rgba(60,60,75,.6);">S</div>
<svg style="left:2301px;top:1783.5px;" width="14" height="11" viewBox="0 0 14 11"><path d="M7 0L14 11H0Z" fill="#b3b8c6"/></svg>
<div style="left:2417.2px;top:863.5px;width:1.6px;height:930px;background:#7a9cb2;"></div>
<div style="left:2427.5px;top:863.5px;width:115px;height:40px;background:#2a3652;border-radius:0 0 8px 8px;box-shadow:inset 0 0 0 1px rgba(30,40,70,.35);"></div>
<div style="left:2427.5px;top:920.5px;width:79px;height:35px;background:#2b3754;border-radius:8px;box-shadow:inset 0 0 0 1px rgba(30,40,70,.35);"></div>
<div style="left:2512.5px;top:922px;width:32px;height:32px;background:#2b3754;border-radius:50%;box-shadow:inset 0 0 0 1px rgba(30,40,70,.35);"></div>
<div style="left:2427.5px;top:960.5px;width:79px;height:35px;background:#2b3754;border-radius:8px;box-shadow:inset 0 0 0 1px rgba(30,40,70,.35);"></div>
<div style="left:2512.5px;top:962px;width:32px;height:32px;background:#2b3754;border-radius:50%;box-shadow:inset 0 0 0 1px rgba(30,40,70,.35);"></div>
<div style="left:2427.5px;top:1000.5px;width:79px;height:17.5px;background:#2b3754;border-radius:7px;box-shadow:inset 0 0 0 1px rgba(30,40,70,.35);"></div>
<div style="left:2427.5px;top:1034.5px;width:115px;height:34.5px;background:#676673;border-radius:7px;line-height:34.5px;font-size:24px;color:#cdced6;text-align:center;white-space:nowrap;overflow:hidden;letter-spacing:0.25px;box-shadow:0 0 0 1px rgba(60,60,75,.6);"><span style="display:inline-block;transform:scaleX(0.92)">St Out</span></div>
<div style="left:2429.5px;top:1080px;width:111px;height:33.5px;background:#2c3855;border-radius:2px;box-shadow:inset 0 0 0 1px rgba(30,40,70,.3);"></div>
<div style="left:2427.5px;top:1126px;width:115px;height:35px;background:#191919;border-radius:7px;line-height:35px;font-size:24px;color:#4fdc70;text-align:center;white-space:nowrap;overflow:hidden;letter-spacing:0.25px;"><span style="display:inline-block;transform:scaleX(0.92)">Read</span></div>
<svg style="left:2455.8px;top:1175.98px;" width="59.4" height="55.44" viewBox="0 0 60 56"><circle cx="30" cy="28" r="24.5" fill="#8bc5ff"/><path d="M30 11V45" stroke="#243a63" stroke-width="4.2" stroke-linecap="round"/><rect x="23.7" y="20.3" width="12.6" height="15.4" rx="2.4" fill="#243a63"/><path d="M25.6 28H34.4" stroke="#8bc5ff" stroke-width="1.8"/></svg>
<svg style="left:2448.5px;top:1249.8px;" width="74" height="74" viewBox="0 0 74 74"><path d="M21.3 64.19A31.4 31.4 0 1 1 52.7 64.19" fill="none" stroke="#000" stroke-width="7.2"/><path d="M37 5.6A31.4 31.4 0 0 1 55.08 11.33" fill="none" stroke="#fb7f7d" stroke-width="7.2"/><circle cx="37" cy="37" r="27.8" fill="#fff"/><path d="M52.43 15.09L48.11 21.22" stroke="#555" stroke-width="1.8"/></svg>
<div style="left:2445.5px;top:1273.08px;width:80px;height:31px;line-height:31px;font-size:23.5px;color:#333;text-align:center;white-space:nowrap;letter-spacing:-0.8px;">+15</div>
<div style="left:2429px;top:1334px;width:54px;height:33.5px;background:#1f2941;"></div>
<div style="left:2487px;top:1334px;width:54px;height:33.5px;background:#1f2941;"></div>
<div style="left:2421px;top:1336.29px;width:70px;height:32px;line-height:32px;font-size:24.5px;color:#e8e8ec;text-align:center;white-space:nowrap;transform:scaleX(0.93);transform-origin:50% 50%;">0.0</div>
<div style="left:2479px;top:1336.29px;width:70px;height:32px;line-height:32px;font-size:24.5px;color:#4fdc70;text-align:center;white-space:nowrap;transform:scaleX(0.81);transform-origin:50% 50%;">-42.0</div>
<div style="left:2451.3px;top:1412px;width:3.4px;height:273.5px;background:#6b6b74;"></div>
<div style="left:2426.8px;top:1412px;width:22px;height:273.5px;"><div style="left:0;top:2px;width:22px;height:2px;background:#b4bccb"></div><div style="left:0;top:36px;width:22px;height:2px;background:#b4bccb"></div><div style="left:0;top:70px;width:22px;height:2px;background:#b4bccb"></div><div style="left:0;top:104px;width:22px;height:2px;background:#b4bccb"></div><div style="left:0;top:140px;width:22px;height:2px;background:#b4bccb"></div><div style="left:0;top:162px;width:22px;height:2px;background:#b4bccb"></div><div style="left:0;top:190px;width:22px;height:2px;background:#b4bccb"></div><div style="left:0;top:212px;width:22px;height:2px;background:#b4bccb"></div><div style="left:0;top:236px;width:22px;height:2px;background:#b4bccb"></div><div style="left:0;top:248px;width:22px;height:2px;background:#b4bccb"></div><div style="left:0;top:270px;width:22px;height:2px;background:#b4bccb"></div><div style="left:14px;top:12px;width:8px;height:2px;background:#b4bccb"></div><div style="left:14px;top:24px;width:8px;height:2px;background:#b4bccb"></div><div style="left:14px;top:46px;width:8px;height:2px;background:#b4bccb"></div><div style="left:14px;top:58px;width:8px;height:2px;background:#b4bccb"></div><div style="left:14px;top:81px;width:8px;height:2px;background:#b4bccb"></div><div style="left:14px;top:93px;width:8px;height:2px;background:#b4bccb"></div><div style="left:14px;top:116px;width:8px;height:2px;background:#b4bccb"></div><div style="left:14px;top:128px;width:8px;height:2px;background:#b4bccb"></div><div style="left:14px;top:146px;width:8px;height:2px;background:#b4bccb"></div><div style="left:14px;top:151px;width:8px;height:2px;background:#b4bccb"></div><div style="left:14px;top:156px;width:8px;height:2px;background:#b4bccb"></div><div style="left:14px;top:168px;width:8px;height:2px;background:#b4bccb"></div><div style="left:14px;top:173px;width:8px;height:2px;background:#b4bccb"></div><div style="left:14px;top:179px;width:8px;height:2px;background:#b4bccb"></div><div style="left:14px;top:184px;width:8px;height:2px;background:#b4bccb"></div><div style="left:14px;top:196px;width:8px;height:2px;background:#b4bccb"></div><div style="left:14px;top:201px;width:8px;height:2px;background:#b4bccb"></div><div style="left:14px;top:206px;width:8px;height:2px;background:#b4bccb"></div><div style="left:14px;top:218px;width:8px;height:2px;background:#b4bccb"></div><div style="left:14px;top:224px;width:8px;height:2px;background:#b4bccb"></div><div style="left:14px;top:230px;width:8px;height:2px;background:#b4bccb"></div><div style="left:14px;top:259px;width:8px;height:2px;background:#b4bccb"></div><div style="left:14px;top:242px;width:8px;height:2px;background:#b4bccb"></div></div>
<div style="left:2449.3px;top:1412px;width:79.2px;height:273.5px;"><div style="right:29.3px;top:-5px;width:40px;height:16px;line-height:16px;font-size:15.3px;text-align:right;color:#cfd3dc;letter-spacing:-0.2px">0</div><div style="right:19.5px;top:1.9px;width:6.5px;height:1.6px;background:#cfd3dc"></div><div style="right:29.3px;top:13.1px;width:40px;height:16px;line-height:16px;font-size:15.3px;text-align:right;color:#cfd3dc;letter-spacing:-0.2px">3</div><div style="right:19.5px;top:20px;width:6.5px;height:1.6px;background:#cfd3dc"></div><div style="right:29.3px;top:31.1px;width:40px;height:16px;line-height:16px;font-size:15.3px;text-align:right;color:#cfd3dc;letter-spacing:-0.2px">6</div><div style="right:19.5px;top:38px;width:6.5px;height:1.6px;background:#cfd3dc"></div><div style="right:29.3px;top:49.2px;width:40px;height:16px;line-height:16px;font-size:15.3px;text-align:right;color:#cfd3dc;letter-spacing:-0.2px">9</div><div style="right:19.5px;top:56.1px;width:6.5px;height:1.6px;background:#cfd3dc"></div><div style="right:29.3px;top:67.2px;width:40px;height:16px;line-height:16px;font-size:15.3px;text-align:right;color:#cfd3dc;letter-spacing:-0.2px">12</div><div style="right:19.5px;top:74.1px;width:6.5px;height:1.6px;background:#cfd3dc"></div><div style="right:29.3px;top:85.3px;width:40px;height:16px;line-height:16px;font-size:15.3px;text-align:right;color:#cfd3dc;letter-spacing:-0.2px">15</div><div style="right:19.5px;top:92.2px;width:6.5px;height:1.6px;background:#cfd3dc"></div><div style="right:29.3px;top:103.3px;width:40px;height:16px;line-height:16px;font-size:15.3px;text-align:right;color:#cfd3dc;letter-spacing:-0.2px">18</div><div style="right:19.5px;top:110.2px;width:6.5px;height:1.6px;background:#cfd3dc"></div><div style="right:29.3px;top:121.3px;width:40px;height:16px;line-height:16px;font-size:15.3px;text-align:right;color:#cfd3dc;letter-spacing:-0.2px">21</div><div style="right:19.5px;top:128.2px;width:6.5px;height:1.6px;background:#cfd3dc"></div><div style="right:29.3px;top:139.3px;width:40px;height:16px;line-height:16px;font-size:15.3px;text-align:right;color:#cfd3dc;letter-spacing:-0.2px">24</div><div style="right:19.5px;top:146.2px;width:6.5px;height:1.6px;background:#cfd3dc"></div><div style="right:29.3px;top:163.1px;width:40px;height:16px;line-height:16px;font-size:15.3px;text-align:right;color:#cfd3dc;letter-spacing:-0.2px">30</div><div style="right:19.5px;top:170px;width:6.5px;height:1.6px;background:#cfd3dc"></div><div style="right:29.3px;top:183.3px;width:40px;height:16px;line-height:16px;font-size:15.3px;text-align:right;color:#cfd3dc;letter-spacing:-0.2px">35</div><div style="right:19.5px;top:190.2px;width:6.5px;height:1.6px;background:#cfd3dc"></div><div style="right:29.3px;top:203.6px;width:40px;height:16px;line-height:16px;font-size:15.3px;text-align:right;color:#cfd3dc;letter-spacing:-0.2px">40</div><div style="right:19.5px;top:210.5px;width:6.5px;height:1.6px;background:#cfd3dc"></div><div style="right:29.3px;top:223.3px;width:40px;height:16px;line-height:16px;font-size:15.3px;text-align:right;color:#cfd3dc;letter-spacing:-0.2px">45</div><div style="right:19.5px;top:230.2px;width:6.5px;height:1.6px;background:#cfd3dc"></div><div style="right:29.3px;top:243.6px;width:40px;height:16px;line-height:16px;font-size:15.3px;text-align:right;color:#cfd3dc;letter-spacing:-0.2px">50</div><div style="right:19.5px;top:250.5px;width:6.5px;height:1.6px;background:#cfd3dc"></div><div style="right:29.3px;top:263.1px;width:40px;height:16px;line-height:16px;font-size:15.3px;text-align:right;color:#cfd3dc;letter-spacing:-0.2px">60</div><div style="right:19.5px;top:270px;width:6.5px;height:1.6px;background:#cfd3dc"></div><div style="right:19.2px;top:1px;width:1.7px;opacity:.85;height:271.5px;background:repeating-linear-gradient(#cfd3dc 0,#cfd3dc 1.9px,transparent 1.9px,transparent 4.3px)"></div><div style="right:0;top:0;width:19.2px;height:273.5px;background:linear-gradient(#2b3034 0,#2b3034 19.5px,#28282c 20px,#332c30 50px,#32302f 160px,#33322e 100%);box-shadow:0 0 0 .5px #1a2030"></div></div>
<div style="left:2510.8px;top:1656px;width:6.2px;height:28px;background:linear-gradient(to top,#f8c022 0%,#f9a033 28%,#fb8048 50%,#fc6a62 70%,#fb6068 100%);background-size:6.2px 270.5px;background-position:0 100%;background-repeat:no-repeat;"></div>
<div style="left:2520.7px;top:1628px;width:6.2px;height:56px;background:linear-gradient(to top,#f8c022 0%,#f9a033 28%,#fb8048 50%,#fc6a62 70%,#fb6068 100%);background-size:6.2px 270.5px;background-position:0 100%;background-repeat:no-repeat;"></div>
<div style="left:2436px;top:1448px;width:34px;height:70px;background:#fff;border-radius:4px;box-shadow:0 2px 5px rgba(10,15,40,.45),0 0 0 .5px rgba(200,210,230,.5);"></div>
<div style="left:2436px;top:1479.7px;width:34px;height:2px;background:#000;"></div>
<div style="left:2427.5px;top:1737px;width:54.5px;height:34.5px;background:#676673;border-radius:7px;line-height:34.5px;font-size:28px;color:#fff;text-align:center;white-space:nowrap;overflow:hidden;box-shadow:0 0 0 1px rgba(60,60,75,.6);">M</div>
<div style="left:2487.5px;top:1737px;width:54.5px;height:34.5px;background:#676673;border-radius:7px;line-height:34.5px;font-size:28px;color:#fff;text-align:center;white-space:nowrap;overflow:hidden;box-shadow:0 0 0 1px rgba(60,60,75,.6);">S</div>
<div style="left:2551.2px;top:863.5px;width:1.6px;height:930px;background:#7a9cb2;"></div>
<div style="left:2561.5px;top:863.5px;width:115px;height:40px;background:#2a3652;border-radius:0 0 8px 8px;box-shadow:inset 0 0 0 1px rgba(30,40,70,.35);"></div>
<div style="left:2561.5px;top:920.5px;width:79px;height:35px;background:#2b3754;border-radius:8px;box-shadow:inset 0 0 0 1px rgba(30,40,70,.35);"></div>
<div style="left:2646.5px;top:922px;width:32px;height:32px;background:#2b3754;border-radius:50%;box-shadow:inset 0 0 0 1px rgba(30,40,70,.35);"></div>
<div style="left:2561.5px;top:960.5px;width:79px;height:35px;background:#2b3754;border-radius:8px;box-shadow:inset 0 0 0 1px rgba(30,40,70,.35);"></div>
<div style="left:2646.5px;top:962px;width:32px;height:32px;background:#2b3754;border-radius:50%;box-shadow:inset 0 0 0 1px rgba(30,40,70,.35);"></div>
<div style="left:2561.5px;top:1000.5px;width:79px;height:17.5px;background:#2b3754;border-radius:7px;box-shadow:inset 0 0 0 1px rgba(30,40,70,.35);"></div>
<div style="left:2561.5px;top:1034.5px;width:115px;height:34.5px;background:#676673;border-radius:7px;line-height:34.5px;font-size:24px;color:#cdced6;text-align:center;white-space:nowrap;overflow:hidden;letter-spacing:0.25px;box-shadow:0 0 0 1px rgba(60,60,75,.6);"><span style="display:inline-block;transform:scaleX(0.92)">St Out</span></div>
<div style="left:2563.5px;top:1080px;width:111px;height:33.5px;background:#2c3855;border-radius:2px;box-shadow:inset 0 0 0 1px rgba(30,40,70,.3);"></div>
<div style="left:2561.5px;top:1126px;width:115px;height:35px;background:#191919;border-radius:7px;line-height:35px;font-size:24px;color:#4fdc70;text-align:center;white-space:nowrap;overflow:hidden;letter-spacing:0.25px;"><span style="display:inline-block;transform:scaleX(0.92)">Read</span></div>
<svg style="left:2589.8px;top:1175.98px;" width="59.4" height="55.44" viewBox="0 0 60 56"><circle cx="30" cy="28" r="24.5" fill="#8bc5ff"/><path d="M30 11V45" stroke="#243a63" stroke-width="4.2" stroke-linecap="round"/><rect x="23.7" y="20.3" width="12.6" height="15.4" rx="2.4" fill="#243a63"/><path d="M25.6 28H34.4" stroke="#8bc5ff" stroke-width="1.8"/></svg>
<svg style="left:2582.5px;top:1249.8px;" width="74" height="74" viewBox="0 0 74 74"><path d="M21.3 64.19A31.4 31.4 0 1 1 52.7 64.19" fill="none" stroke="#000" stroke-width="7.2"/><path d="M37 2L37 9.2" stroke="#fb7f7d" stroke-width="2.6"/><circle cx="37" cy="37" r="27.8" fill="#fff"/><path d="M37 10.2L37 17.7" stroke="#555" stroke-width="1.8"/></svg>
<div style="left:2563px;top:1334px;width:54px;height:33.5px;background:#1f2941;"></div>
<div style="left:2621px;top:1334px;width:54px;height:33.5px;background:#1f2941;"></div>
<div style="left:2555px;top:1336.29px;width:70px;height:32px;line-height:32px;font-size:24.5px;color:#e8e8ec;text-align:center;white-space:nowrap;transform:scaleX(0.93);transform-origin:50% 50%;">0.0</div>
<div style="left:2613px;top:1336.29px;width:70px;height:32px;line-height:32px;font-size:24.5px;color:#4fdc70;text-align:center;white-space:nowrap;transform:scaleX(0.81);transform-origin:50% 50%;">-12.8</div>
<div style="left:2585.3px;top:1412px;width:3.4px;height:273.5px;background:#6b6b74;"></div>
<div style="left:2560.8px;top:1412px;width:22px;height:273.5px;"><div style="left:0;top:2px;width:22px;height:2px;background:#b4bccb"></div><div style="left:0;top:36px;width:22px;height:2px;background:#b4bccb"></div><div style="left:0;top:70px;width:22px;height:2px;background:#b4bccb"></div><div style="left:0;top:104px;width:22px;height:2px;background:#b4bccb"></div><div style="left:0;top:140px;width:22px;height:2px;background:#b4bccb"></div><div style="left:0;top:162px;width:22px;height:2px;background:#b4bccb"></div><div style="left:0;top:190px;width:22px;height:2px;background:#b4bccb"></div><div style="left:0;top:212px;width:22px;height:2px;background:#b4bccb"></div><div style="left:0;top:236px;width:22px;height:2px;background:#b4bccb"></div><div style="left:0;top:248px;width:22px;height:2px;background:#b4bccb"></div><div style="left:0;top:270px;width:22px;height:2px;background:#b4bccb"></div><div style="left:14px;top:12px;width:8px;height:2px;background:#b4bccb"></div><div style="left:14px;top:24px;width:8px;height:2px;background:#b4bccb"></div><div style="left:14px;top:46px;width:8px;height:2px;background:#b4bccb"></div><div style="left:14px;top:58px;width:8px;height:2px;background:#b4bccb"></div><div style="left:14px;top:81px;width:8px;height:2px;background:#b4bccb"></div><div style="left:14px;top:93px;width:8px;height:2px;background:#b4bccb"></div><div style="left:14px;top:116px;width:8px;height:2px;background:#b4bccb"></div><div style="left:14px;top:128px;width:8px;height:2px;background:#b4bccb"></div><div style="left:14px;top:146px;width:8px;height:2px;background:#b4bccb"></div><div style="left:14px;top:151px;width:8px;height:2px;background:#b4bccb"></div><div style="left:14px;top:156px;width:8px;height:2px;background:#b4bccb"></div><div style="left:14px;top:168px;width:8px;height:2px;background:#b4bccb"></div><div style="left:14px;top:173px;width:8px;height:2px;background:#b4bccb"></div><div style="left:14px;top:179px;width:8px;height:2px;background:#b4bccb"></div><div style="left:14px;top:184px;width:8px;height:2px;background:#b4bccb"></div><div style="left:14px;top:196px;width:8px;height:2px;background:#b4bccb"></div><div style="left:14px;top:201px;width:8px;height:2px;background:#b4bccb"></div><div style="left:14px;top:206px;width:8px;height:2px;background:#b4bccb"></div><div style="left:14px;top:218px;width:8px;height:2px;background:#b4bccb"></div><div style="left:14px;top:224px;width:8px;height:2px;background:#b4bccb"></div><div style="left:14px;top:230px;width:8px;height:2px;background:#b4bccb"></div><div style="left:14px;top:259px;width:8px;height:2px;background:#b4bccb"></div><div style="left:14px;top:242px;width:8px;height:2px;background:#b4bccb"></div></div>
<div style="left:2583.3px;top:1412px;width:79.2px;height:273.5px;"><div style="right:29.3px;top:-5px;width:40px;height:16px;line-height:16px;font-size:15.3px;text-align:right;color:#cfd3dc;letter-spacing:-0.2px">0</div><div style="right:19.5px;top:1.9px;width:6.5px;height:1.6px;background:#cfd3dc"></div><div style="right:29.3px;top:13.1px;width:40px;height:16px;line-height:16px;font-size:15.3px;text-align:right;color:#cfd3dc;letter-spacing:-0.2px">3</div><div style="right:19.5px;top:20px;width:6.5px;height:1.6px;background:#cfd3dc"></div><div style="right:29.3px;top:31.1px;width:40px;height:16px;line-height:16px;font-size:15.3px;text-align:right;color:#cfd3dc;letter-spacing:-0.2px">6</div><div style="right:19.5px;top:38px;width:6.5px;height:1.6px;background:#cfd3dc"></div><div style="right:29.3px;top:49.2px;width:40px;height:16px;line-height:16px;font-size:15.3px;text-align:right;color:#cfd3dc;letter-spacing:-0.2px">9</div><div style="right:19.5px;top:56.1px;width:6.5px;height:1.6px;background:#cfd3dc"></div><div style="right:29.3px;top:67.2px;width:40px;height:16px;line-height:16px;font-size:15.3px;text-align:right;color:#cfd3dc;letter-spacing:-0.2px">12</div><div style="right:19.5px;top:74.1px;width:6.5px;height:1.6px;background:#cfd3dc"></div><div style="right:29.3px;top:85.3px;width:40px;height:16px;line-height:16px;font-size:15.3px;text-align:right;color:#cfd3dc;letter-spacing:-0.2px">15</div><div style="right:19.5px;top:92.2px;width:6.5px;height:1.6px;background:#cfd3dc"></div><div style="right:29.3px;top:103.3px;width:40px;height:16px;line-height:16px;font-size:15.3px;text-align:right;color:#cfd3dc;letter-spacing:-0.2px">18</div><div style="right:19.5px;top:110.2px;width:6.5px;height:1.6px;background:#cfd3dc"></div><div style="right:29.3px;top:121.3px;width:40px;height:16px;line-height:16px;font-size:15.3px;text-align:right;color:#cfd3dc;letter-spacing:-0.2px">21</div><div style="right:19.5px;top:128.2px;width:6.5px;height:1.6px;background:#cfd3dc"></div><div style="right:29.3px;top:139.3px;width:40px;height:16px;line-height:16px;font-size:15.3px;text-align:right;color:#cfd3dc;letter-spacing:-0.2px">24</div><div style="right:19.5px;top:146.2px;width:6.5px;height:1.6px;background:#cfd3dc"></div><div style="right:29.3px;top:163.1px;width:40px;height:16px;line-height:16px;font-size:15.3px;text-align:right;color:#cfd3dc;letter-spacing:-0.2px">30</div><div style="right:19.5px;top:170px;width:6.5px;height:1.6px;background:#cfd3dc"></div><div style="right:29.3px;top:183.3px;width:40px;height:16px;line-height:16px;font-size:15.3px;text-align:right;color:#cfd3dc;letter-spacing:-0.2px">35</div><div style="right:19.5px;top:190.2px;width:6.5px;height:1.6px;background:#cfd3dc"></div><div style="right:29.3px;top:203.6px;width:40px;height:16px;line-height:16px;font-size:15.3px;text-align:right;color:#cfd3dc;letter-spacing:-0.2px">40</div><div style="right:19.5px;top:210.5px;width:6.5px;height:1.6px;background:#cfd3dc"></div><div style="right:29.3px;top:223.3px;width:40px;height:16px;line-height:16px;font-size:15.3px;text-align:right;color:#cfd3dc;letter-spacing:-0.2px">45</div><div style="right:19.5px;top:230.2px;width:6.5px;height:1.6px;background:#cfd3dc"></div><div style="right:29.3px;top:243.6px;width:40px;height:16px;line-height:16px;font-size:15.3px;text-align:right;color:#cfd3dc;letter-spacing:-0.2px">50</div><div style="right:19.5px;top:250.5px;width:6.5px;height:1.6px;background:#cfd3dc"></div><div style="right:29.3px;top:263.1px;width:40px;height:16px;line-height:16px;font-size:15.3px;text-align:right;color:#cfd3dc;letter-spacing:-0.2px">60</div><div style="right:19.5px;top:270px;width:6.5px;height:1.6px;background:#cfd3dc"></div><div style="right:19.2px;top:1px;width:1.7px;opacity:.85;height:271.5px;background:repeating-linear-gradient(#cfd3dc 0,#cfd3dc 1.9px,transparent 1.9px,transparent 4.3px)"></div><div style="right:0;top:0;width:19.2px;height:273.5px;background:linear-gradient(#2b3034 0,#2b3034 19.5px,#28282c 20px,#332c30 50px,#32302f 160px,#33322e 100%);box-shadow:0 0 0 .5px #1a2030"></div></div>
<div style="left:2644.8px;top:1501.5px;width:6.2px;height:182.5px;background:linear-gradient(to top,#f8c022 0%,#f9a033 28%,#fb8048 50%,#fc6a62 70%,#fb6068 100%);background-size:6.2px 270.5px;background-position:0 100%;background-repeat:no-repeat;"></div>
<div style="left:2654.7px;top:1489.5px;width:6.2px;height:194.5px;background:linear-gradient(to top,#f8c022 0%,#f9a033 28%,#fb8048 50%,#fc6a62 70%,#fb6068 100%);background-size:6.2px 270.5px;background-position:0 100%;background-repeat:no-repeat;"></div>
<div style="left:2570px;top:1448px;width:34px;height:70px;background:#fff;border-radius:4px;box-shadow:0 2px 5px rgba(10,15,40,.45),0 0 0 .5px rgba(200,210,230,.5);"></div>
<div style="left:2570px;top:1479.7px;width:34px;height:2px;background:#000;"></div>
<div style="left:2561.5px;top:1737px;width:54.5px;height:34.5px;background:#676673;border-radius:7px;line-height:34.5px;font-size:28px;color:#fff;text-align:center;white-space:nowrap;overflow:hidden;box-shadow:0 0 0 1px rgba(60,60,75,.6);">M</div>
<div style="left:2621.5px;top:1737px;width:54.5px;height:34.5px;background:#676673;border-radius:7px;line-height:34.5px;font-size:28px;color:#fff;text-align:center;white-space:nowrap;overflow:hidden;box-shadow:0 0 0 1px rgba(60,60,75,.6);">S</div>
<div style="left:2685.2px;top:863.5px;width:1.6px;height:930px;background:#7a9cb2;"></div>
<div style="left:2695.5px;top:863.5px;width:115px;height:40px;background:#2a3652;border-radius:0 0 8px 8px;box-shadow:inset 0 0 0 1px rgba(30,40,70,.35);"></div>
<div style="left:2695.5px;top:920.5px;width:79px;height:35px;background:#2b3754;border-radius:8px;box-shadow:inset 0 0 0 1px rgba(30,40,70,.35);"></div>
<div style="left:2780.5px;top:922px;width:32px;height:32px;background:#2b3754;border-radius:50%;box-shadow:inset 0 0 0 1px rgba(30,40,70,.35);"></div>
<div style="left:2695.5px;top:960.5px;width:79px;height:35px;background:#2b3754;border-radius:8px;box-shadow:inset 0 0 0 1px rgba(30,40,70,.35);"></div>
<div style="left:2780.5px;top:962px;width:32px;height:32px;background:#2b3754;border-radius:50%;box-shadow:inset 0 0 0 1px rgba(30,40,70,.35);"></div>
<div style="left:2695.5px;top:1000.5px;width:79px;height:17.5px;background:#2b3754;border-radius:7px;box-shadow:inset 0 0 0 1px rgba(30,40,70,.35);"></div>
<div style="left:2695.5px;top:1034.5px;width:115px;height:34.5px;background:#676673;border-radius:7px;line-height:34.5px;font-size:24px;color:#cdced6;text-align:center;white-space:nowrap;overflow:hidden;letter-spacing:0.25px;box-shadow:0 0 0 1px rgba(60,60,75,.6);"><span style="display:inline-block;transform:scaleX(0.92)">St Out</span></div>
<div style="left:2697.5px;top:1080px;width:111px;height:33.5px;background:#2c3855;border-radius:2px;box-shadow:inset 0 0 0 1px rgba(30,40,70,.3);"></div>
<div style="left:2695.5px;top:1126px;width:115px;height:35px;background:#191919;border-radius:7px;line-height:35px;font-size:24px;color:#4fdc70;text-align:center;white-space:nowrap;overflow:hidden;letter-spacing:0.25px;"><span style="display:inline-block;transform:scaleX(0.92)">Read</span></div>
<svg style="left:2723.8px;top:1175.98px;" width="59.4" height="55.44" viewBox="0 0 60 56"><circle cx="30" cy="28" r="24.5" fill="#8bc5ff"/><path d="M30 11V45" stroke="#243a63" stroke-width="4.2" stroke-linecap="round"/><rect x="23.7" y="20.3" width="12.6" height="15.4" rx="2.4" fill="#243a63"/><path d="M25.6 28H34.4" stroke="#8bc5ff" stroke-width="1.8"/></svg>
<svg style="left:2716.5px;top:1249.8px;" width="74" height="74" viewBox="0 0 74 74"><path d="M21.3 64.19A31.4 31.4 0 1 1 52.7 64.19" fill="none" stroke="#000" stroke-width="7.2"/><path d="M37 2L37 9.2" stroke="#fb7f7d" stroke-width="2.6"/><circle cx="37" cy="37" r="27.8" fill="#fff"/><path d="M37 10.2L37 17.7" stroke="#555" stroke-width="1.8"/></svg>
<div style="left:2697px;top:1334px;width:54px;height:33.5px;background:#1f2941;"></div>
<div style="left:2755px;top:1334px;width:54px;height:33.5px;background:#1f2941;"></div>
<div style="left:2689px;top:1336.29px;width:70px;height:32px;line-height:32px;font-size:24.5px;color:#e8e8ec;text-align:center;white-space:nowrap;transform:scaleX(0.93);transform-origin:50% 50%;">0.0</div>
<div style="left:2747px;top:1336.29px;width:70px;height:32px;line-height:32px;font-size:24.5px;color:#4fdc70;text-align:center;white-space:nowrap;transform:scaleX(0.81);transform-origin:50% 50%;">-17.6</div>
<div style="left:2719.3px;top:1412px;width:3.4px;height:273.5px;background:#6b6b74;"></div>
<div style="left:2694.8px;top:1412px;width:22px;height:273.5px;"><div style="left:0;top:2px;width:22px;height:2px;background:#b4bccb"></div><div style="left:0;top:36px;width:22px;height:2px;background:#b4bccb"></div><div style="left:0;top:70px;width:22px;height:2px;background:#b4bccb"></div><div style="left:0;top:104px;width:22px;height:2px;background:#b4bccb"></div><div style="left:0;top:140px;width:22px;height:2px;background:#b4bccb"></div><div style="left:0;top:162px;width:22px;height:2px;background:#b4bccb"></div><div style="left:0;top:190px;width:22px;height:2px;background:#b4bccb"></div><div style="left:0;top:212px;width:22px;height:2px;background:#b4bccb"></div><div style="left:0;top:236px;width:22px;height:2px;background:#b4bccb"></div><div style="left:0;top:248px;width:22px;height:2px;background:#b4bccb"></div><div style="left:0;top:270px;width:22px;height:2px;background:#b4bccb"></div><div style="left:14px;top:12px;width:8px;height:2px;background:#b4bccb"></div><div style="left:14px;top:24px;width:8px;height:2px;background:#b4bccb"></div><div style="left:14px;top:46px;width:8px;height:2px;background:#b4bccb"></div><div style="left:14px;top:58px;width:8px;height:2px;background:#b4bccb"></div><div style="left:14px;top:81px;width:8px;height:2px;background:#b4bccb"></div><div style="left:14px;top:93px;width:8px;height:2px;background:#b4bccb"></div><div style="left:14px;top:116px;width:8px;height:2px;background:#b4bccb"></div><div style="left:14px;top:128px;width:8px;height:2px;background:#b4bccb"></div><div style="left:14px;top:146px;width:8px;height:2px;background:#b4bccb"></div><div style="left:14px;top:151px;width:8px;height:2px;background:#b4bccb"></div><div style="left:14px;top:156px;width:8px;height:2px;background:#b4bccb"></div><div style="left:14px;top:168px;width:8px;height:2px;background:#b4bccb"></div><div style="left:14px;top:173px;width:8px;height:2px;background:#b4bccb"></div><div style="left:14px;top:179px;width:8px;height:2px;background:#b4bccb"></div><div style="left:14px;top:184px;width:8px;height:2px;background:#b4bccb"></div><div style="left:14px;top:196px;width:8px;height:2px;background:#b4bccb"></div><div style="left:14px;top:201px;width:8px;height:2px;background:#b4bccb"></div><div style="left:14px;top:206px;width:8px;height:2px;background:#b4bccb"></div><div style="left:14px;top:218px;width:8px;height:2px;background:#b4bccb"></div><div style="left:14px;top:224px;width:8px;height:2px;background:#b4bccb"></div><div style="left:14px;top:230px;width:8px;height:2px;background:#b4bccb"></div><div style="left:14px;top:259px;width:8px;height:2px;background:#b4bccb"></div><div style="left:14px;top:242px;width:8px;height:2px;background:#b4bccb"></div></div>
<div style="left:2717.3px;top:1412px;width:79.2px;height:273.5px;"><div style="right:29.3px;top:-5px;width:40px;height:16px;line-height:16px;font-size:15.3px;text-align:right;color:#cfd3dc;letter-spacing:-0.2px">0</div><div style="right:19.5px;top:1.9px;width:6.5px;height:1.6px;background:#cfd3dc"></div><div style="right:29.3px;top:13.1px;width:40px;height:16px;line-height:16px;font-size:15.3px;text-align:right;color:#cfd3dc;letter-spacing:-0.2px">3</div><div style="right:19.5px;top:20px;width:6.5px;height:1.6px;background:#cfd3dc"></div><div style="right:29.3px;top:31.1px;width:40px;height:16px;line-height:16px;font-size:15.3px;text-align:right;color:#cfd3dc;letter-spacing:-0.2px">6</div><div style="right:19.5px;top:38px;width:6.5px;height:1.6px;background:#cfd3dc"></div><div style="right:29.3px;top:49.2px;width:40px;height:16px;line-height:16px;font-size:15.3px;text-align:right;color:#cfd3dc;letter-spacing:-0.2px">9</div><div style="right:19.5px;top:56.1px;width:6.5px;height:1.6px;background:#cfd3dc"></div><div style="right:29.3px;top:67.2px;width:40px;height:16px;line-height:16px;font-size:15.3px;text-align:right;color:#cfd3dc;letter-spacing:-0.2px">12</div><div style="right:19.5px;top:74.1px;width:6.5px;height:1.6px;background:#cfd3dc"></div><div style="right:29.3px;top:85.3px;width:40px;height:16px;line-height:16px;font-size:15.3px;text-align:right;color:#cfd3dc;letter-spacing:-0.2px">15</div><div style="right:19.5px;top:92.2px;width:6.5px;height:1.6px;background:#cfd3dc"></div><div style="right:29.3px;top:103.3px;width:40px;height:16px;line-height:16px;font-size:15.3px;text-align:right;color:#cfd3dc;letter-spacing:-0.2px">18</div><div style="right:19.5px;top:110.2px;width:6.5px;height:1.6px;background:#cfd3dc"></div><div style="right:29.3px;top:121.3px;width:40px;height:16px;line-height:16px;font-size:15.3px;text-align:right;color:#cfd3dc;letter-spacing:-0.2px">21</div><div style="right:19.5px;top:128.2px;width:6.5px;height:1.6px;background:#cfd3dc"></div><div style="right:29.3px;top:139.3px;width:40px;height:16px;line-height:16px;font-size:15.3px;text-align:right;color:#cfd3dc;letter-spacing:-0.2px">24</div><div style="right:19.5px;top:146.2px;width:6.5px;height:1.6px;background:#cfd3dc"></div><div style="right:29.3px;top:163.1px;width:40px;height:16px;line-height:16px;font-size:15.3px;text-align:right;color:#cfd3dc;letter-spacing:-0.2px">30</div><div style="right:19.5px;top:170px;width:6.5px;height:1.6px;background:#cfd3dc"></div><div style="right:29.3px;top:183.3px;width:40px;height:16px;line-height:16px;font-size:15.3px;text-align:right;color:#cfd3dc;letter-spacing:-0.2px">35</div><div style="right:19.5px;top:190.2px;width:6.5px;height:1.6px;background:#cfd3dc"></div><div style="right:29.3px;top:203.6px;width:40px;height:16px;line-height:16px;font-size:15.3px;text-align:right;color:#cfd3dc;letter-spacing:-0.2px">40</div><div style="right:19.5px;top:210.5px;width:6.5px;height:1.6px;background:#cfd3dc"></div><div style="right:29.3px;top:223.3px;width:40px;height:16px;line-height:16px;font-size:15.3px;text-align:right;color:#cfd3dc;letter-spacing:-0.2px">45</div><div style="right:19.5px;top:230.2px;width:6.5px;height:1.6px;background:#cfd3dc"></div><div style="right:29.3px;top:243.6px;width:40px;height:16px;line-height:16px;font-size:15.3px;text-align:right;color:#cfd3dc;letter-spacing:-0.2px">50</div><div style="right:19.5px;top:250.5px;width:6.5px;height:1.6px;background:#cfd3dc"></div><div style="right:29.3px;top:263.1px;width:40px;height:16px;line-height:16px;font-size:15.3px;text-align:right;color:#cfd3dc;letter-spacing:-0.2px">60</div><div style="right:19.5px;top:270px;width:6.5px;height:1.6px;background:#cfd3dc"></div><div style="right:19.2px;top:1px;width:1.7px;opacity:.85;height:271.5px;background:repeating-linear-gradient(#cfd3dc 0,#cfd3dc 1.9px,transparent 1.9px,transparent 4.3px)"></div><div style="right:0;top:0;width:19.2px;height:273.5px;background:linear-gradient(#2b3034 0,#2b3034 19.5px,#28282c 20px,#332c30 50px,#32302f 160px,#33322e 100%);box-shadow:0 0 0 .5px #1a2030"></div></div>
<div style="left:2778.8px;top:1517.5px;width:6.2px;height:166.5px;background:linear-gradient(to top,#f8c022 0%,#f9a033 28%,#fb8048 50%,#fc6a62 70%,#fb6068 100%);background-size:6.2px 270.5px;background-position:0 100%;background-repeat:no-repeat;"></div>
<div style="left:2788.7px;top:1541.5px;width:6.2px;height:142.5px;background:linear-gradient(to top,#f8c022 0%,#f9a033 28%,#fb8048 50%,#fc6a62 70%,#fb6068 100%);background-size:6.2px 270.5px;background-position:0 100%;background-repeat:no-repeat;"></div>
<div style="left:2704px;top:1448px;width:34px;height:70px;background:#fff;border-radius:4px;box-shadow:0 2px 5px rgba(10,15,40,.45),0 0 0 .5px rgba(200,210,230,.5);"></div>
<div style="left:2704px;top:1479.7px;width:34px;height:2px;background:#000;"></div>
<div style="left:2695.5px;top:1737px;width:54.5px;height:34.5px;background:#676673;border-radius:7px;line-height:34.5px;font-size:28px;color:#fff;text-align:center;white-space:nowrap;overflow:hidden;box-shadow:0 0 0 1px rgba(60,60,75,.6);">M</div>
<div style="left:2755.5px;top:1737px;width:54.5px;height:34.5px;background:#676673;border-radius:7px;line-height:34.5px;font-size:28px;color:#fff;text-align:center;white-space:nowrap;overflow:hidden;box-shadow:0 0 0 1px rgba(60,60,75,.6);">S</div>
<div style="left:2819.2px;top:863.5px;width:1.6px;height:930px;background:#7a9cb2;"></div>
<div style="left:2829.5px;top:863.5px;width:115px;height:40px;background:#2a3652;border-radius:0 0 8px 8px;box-shadow:inset 0 0 0 1px rgba(30,40,70,.35);"></div>
<div style="left:2829.5px;top:920.5px;width:79px;height:35px;background:#2b3754;border-radius:8px;box-shadow:inset 0 0 0 1px rgba(30,40,70,.35);"></div>
<div style="left:2914.5px;top:922px;width:32px;height:32px;background:#2b3754;border-radius:50%;box-shadow:inset 0 0 0 1px rgba(30,40,70,.35);"></div>
<div style="left:2829.5px;top:960.5px;width:79px;height:35px;background:#2b3754;border-radius:8px;box-shadow:inset 0 0 0 1px rgba(30,40,70,.35);"></div>
<div style="left:2914.5px;top:962px;width:32px;height:32px;background:#2b3754;border-radius:50%;box-shadow:inset 0 0 0 1px rgba(30,40,70,.35);"></div>
<div style="left:2829.5px;top:1000.5px;width:79px;height:17.5px;background:#2b3754;border-radius:7px;box-shadow:inset 0 0 0 1px rgba(30,40,70,.35);"></div>
<div style="left:2829.5px;top:1034.5px;width:115px;height:34.5px;background:#676673;border-radius:7px;line-height:34.5px;font-size:24px;color:#cdced6;text-align:center;white-space:nowrap;overflow:hidden;letter-spacing:0.25px;box-shadow:0 0 0 1px rgba(60,60,75,.6);"><span style="display:inline-block;transform:scaleX(0.92)">St Out</span></div>
<div style="left:2831.5px;top:1080px;width:111px;height:33.5px;background:#2c3855;border-radius:2px;box-shadow:inset 0 0 0 1px rgba(30,40,70,.3);"></div>
<div style="left:2829.5px;top:1126px;width:115px;height:35px;background:#191919;border-radius:7px;line-height:35px;font-size:24px;color:#4fdc70;text-align:center;white-space:nowrap;overflow:hidden;letter-spacing:0.25px;"><span style="display:inline-block;transform:scaleX(0.92)">Read</span></div>
<svg style="left:2857.8px;top:1175.98px;" width="59.4" height="55.44" viewBox="0 0 60 56"><circle cx="30" cy="28" r="24.5" fill="#8bc5ff"/><path d="M30 11V45" stroke="#243a63" stroke-width="4.2" stroke-linecap="round"/><rect x="23.7" y="20.3" width="12.6" height="15.4" rx="2.4" fill="#243a63"/><path d="M25.6 28H34.4" stroke="#8bc5ff" stroke-width="1.8"/></svg>
<svg style="left:2850.5px;top:1249.8px;" width="74" height="74" viewBox="0 0 74 74"><path d="M21.3 64.19A31.4 31.4 0 1 1 52.7 64.19" fill="none" stroke="#000" stroke-width="7.2"/><path d="M37 2L37 9.2" stroke="#fb7f7d" stroke-width="2.6"/><circle cx="37" cy="37" r="27.8" fill="#fff"/><path d="M37 10.2L37 17.7" stroke="#555" stroke-width="1.8"/></svg>
<div style="left:2831px;top:1334px;width:54px;height:33.5px;background:#1f2941;"></div>
<div style="left:2889px;top:1334px;width:54px;height:33.5px;background:#1f2941;"></div>
<div style="left:2823px;top:1336.29px;width:70px;height:32px;line-height:32px;font-size:24.5px;color:#e8e8ec;text-align:center;white-space:nowrap;transform:scaleX(0.93);transform-origin:50% 50%;">0.0</div>
<div style="left:2853.3px;top:1412px;width:3.4px;height:273.5px;background:#6b6b74;"></div>
<div style="left:2828.8px;top:1412px;width:22px;height:273.5px;"><div style="left:0;top:2px;width:22px;height:2px;background:#b4bccb"></div><div style="left:0;top:36px;width:22px;height:2px;background:#b4bccb"></div><div style="left:0;top:70px;width:22px;height:2px;background:#b4bccb"></div><div style="left:0;top:104px;width:22px;height:2px;background:#b4bccb"></div><div style="left:0;top:140px;width:22px;height:2px;background:#b4bccb"></div><div style="left:0;top:162px;width:22px;height:2px;background:#b4bccb"></div><div style="left:0;top:190px;width:22px;height:2px;background:#b4bccb"></div><div style="left:0;top:212px;width:22px;height:2px;background:#b4bccb"></div><div style="left:0;top:236px;width:22px;height:2px;background:#b4bccb"></div><div style="left:0;top:248px;width:22px;height:2px;background:#b4bccb"></div><div style="left:0;top:270px;width:22px;height:2px;background:#b4bccb"></div><div style="left:14px;top:12px;width:8px;height:2px;background:#b4bccb"></div><div style="left:14px;top:24px;width:8px;height:2px;background:#b4bccb"></div><div style="left:14px;top:46px;width:8px;height:2px;background:#b4bccb"></div><div style="left:14px;top:58px;width:8px;height:2px;background:#b4bccb"></div><div style="left:14px;top:81px;width:8px;height:2px;background:#b4bccb"></div><div style="left:14px;top:93px;width:8px;height:2px;background:#b4bccb"></div><div style="left:14px;top:116px;width:8px;height:2px;background:#b4bccb"></div><div style="left:14px;top:128px;width:8px;height:2px;background:#b4bccb"></div><div style="left:14px;top:146px;width:8px;height:2px;background:#b4bccb"></div><div style="left:14px;top:151px;width:8px;height:2px;background:#b4bccb"></div><div style="left:14px;top:156px;width:8px;height:2px;background:#b4bccb"></div><div style="left:14px;top:168px;width:8px;height:2px;background:#b4bccb"></div><div style="left:14px;top:173px;width:8px;height:2px;background:#b4bccb"></div><div style="left:14px;top:179px;width:8px;height:2px;background:#b4bccb"></div><div style="left:14px;top:184px;width:8px;height:2px;background:#b4bccb"></div><div style="left:14px;top:196px;width:8px;height:2px;background:#b4bccb"></div><div style="left:14px;top:201px;width:8px;height:2px;background:#b4bccb"></div><div style="left:14px;top:206px;width:8px;height:2px;background:#b4bccb"></div><div style="left:14px;top:218px;width:8px;height:2px;background:#b4bccb"></div><div style="left:14px;top:224px;width:8px;height:2px;background:#b4bccb"></div><div style="left:14px;top:230px;width:8px;height:2px;background:#b4bccb"></div><div style="left:14px;top:259px;width:8px;height:2px;background:#b4bccb"></div><div style="left:14px;top:242px;width:8px;height:2px;background:#b4bccb"></div></div>
<div style="left:2851.3px;top:1412px;width:79.2px;height:273.5px;"><div style="right:29.3px;top:-5px;width:40px;height:16px;line-height:16px;font-size:15.3px;text-align:right;color:#cfd3dc;letter-spacing:-0.2px">0</div><div style="right:19.5px;top:1.9px;width:6.5px;height:1.6px;background:#cfd3dc"></div><div style="right:29.3px;top:13.1px;width:40px;height:16px;line-height:16px;font-size:15.3px;text-align:right;color:#cfd3dc;letter-spacing:-0.2px">3</div><div style="right:19.5px;top:20px;width:6.5px;height:1.6px;background:#cfd3dc"></div><div style="right:29.3px;top:31.1px;width:40px;height:16px;line-height:16px;font-size:15.3px;text-align:right;color:#cfd3dc;letter-spacing:-0.2px">6</div><div style="right:19.5px;top:38px;width:6.5px;height:1.6px;background:#cfd3dc"></div><div style="right:29.3px;top:49.2px;width:40px;height:16px;line-height:16px;font-size:15.3px;text-align:right;color:#cfd3dc;letter-spacing:-0.2px">9</div><div style="right:19.5px;top:56.1px;width:6.5px;height:1.6px;background:#cfd3dc"></div><div style="right:29.3px;top:67.2px;width:40px;height:16px;line-height:16px;font-size:15.3px;text-align:right;color:#cfd3dc;letter-spacing:-0.2px">12</div><div style="right:19.5px;top:74.1px;width:6.5px;height:1.6px;background:#cfd3dc"></div><div style="right:29.3px;top:85.3px;width:40px;height:16px;line-height:16px;font-size:15.3px;text-align:right;color:#cfd3dc;letter-spacing:-0.2px">15</div><div style="right:19.5px;top:92.2px;width:6.5px;height:1.6px;background:#cfd3dc"></div><div style="right:29.3px;top:103.3px;width:40px;height:16px;line-height:16px;font-size:15.3px;text-align:right;color:#cfd3dc;letter-spacing:-0.2px">18</div><div style="right:19.5px;top:110.2px;width:6.5px;height:1.6px;background:#cfd3dc"></div><div style="right:29.3px;top:121.3px;width:40px;height:16px;line-height:16px;font-size:15.3px;text-align:right;color:#cfd3dc;letter-spacing:-0.2px">21</div><div style="right:19.5px;top:128.2px;width:6.5px;height:1.6px;background:#cfd3dc"></div><div style="right:29.3px;top:139.3px;width:40px;height:16px;line-height:16px;font-size:15.3px;text-align:right;color:#cfd3dc;letter-spacing:-0.2px">24</div><div style="right:19.5px;top:146.2px;width:6.5px;height:1.6px;background:#cfd3dc"></div><div style="right:29.3px;top:163.1px;width:40px;height:16px;line-height:16px;font-size:15.3px;text-align:right;color:#cfd3dc;letter-spacing:-0.2px">30</div><div style="right:19.5px;top:170px;width:6.5px;height:1.6px;background:#cfd3dc"></div><div style="right:29.3px;top:183.3px;width:40px;height:16px;line-height:16px;font-size:15.3px;text-align:right;color:#cfd3dc;letter-spacing:-0.2px">35</div><div style="right:19.5px;top:190.2px;width:6.5px;height:1.6px;background:#cfd3dc"></div><div style="right:29.3px;top:203.6px;width:40px;height:16px;line-height:16px;font-size:15.3px;text-align:right;color:#cfd3dc;letter-spacing:-0.2px">40</div><div style="right:19.5px;top:210.5px;width:6.5px;height:1.6px;background:#cfd3dc"></div><div style="right:29.3px;top:223.3px;width:40px;height:16px;line-height:16px;font-size:15.3px;text-align:right;color:#cfd3dc;letter-spacing:-0.2px">45</div><div style="right:19.5px;top:230.2px;width:6.5px;height:1.6px;background:#cfd3dc"></div><div style="right:29.3px;top:243.6px;width:40px;height:16px;line-height:16px;font-size:15.3px;text-align:right;color:#cfd3dc;letter-spacing:-0.2px">50</div><div style="right:19.5px;top:250.5px;width:6.5px;height:1.6px;background:#cfd3dc"></div><div style="right:29.3px;top:263.1px;width:40px;height:16px;line-height:16px;font-size:15.3px;text-align:right;color:#cfd3dc;letter-spacing:-0.2px">60</div><div style="right:19.5px;top:270px;width:6.5px;height:1.6px;background:#cfd3dc"></div><div style="right:19.2px;top:1px;width:1.7px;opacity:.85;height:271.5px;background:repeating-linear-gradient(#cfd3dc 0,#cfd3dc 1.9px,transparent 1.9px,transparent 4.3px)"></div><div style="right:0;top:0;width:19.2px;height:273.5px;background:linear-gradient(#2b3034 0,#2b3034 19.5px,#28282c 20px,#332c30 50px,#32302f 160px,#33322e 100%);box-shadow:0 0 0 .5px #1a2030"></div></div>
<div style="left:2838px;top:1448px;width:34px;height:70px;background:#fff;border-radius:4px;box-shadow:0 2px 5px rgba(10,15,40,.45),0 0 0 .5px rgba(200,210,230,.5);"></div>
<div style="left:2838px;top:1479.7px;width:34px;height:2px;background:#000;"></div>
<div style="left:2829.5px;top:1737px;width:54.5px;height:34.5px;background:#676673;border-radius:7px;line-height:34.5px;font-size:28px;color:#fff;text-align:center;white-space:nowrap;overflow:hidden;box-shadow:0 0 0 1px rgba(60,60,75,.6);">M</div>
<div style="left:2889.5px;top:1737px;width:54.5px;height:34.5px;background:#676673;border-radius:7px;line-height:34.5px;font-size:28px;color:#fff;text-align:center;white-space:nowrap;overflow:hidden;box-shadow:0 0 0 1px rgba(60,60,75,.6);">S</div>
<div style="left:649px;top:1779.5px;width:295.5px;height:1.8px;background:#7a9cb2;"></div>
<div style="left:2874.5px;top:863.5px;width:2px;height:930px;background:#000;"></div>
<div style="left:2876.5px;top:800px;width:4px;height:1000px;background:#242f4b;"></div>
<div style="left:466.5px;top:863.5px;width:182px;height:930.5px;background:#7c7d87;border-radius:0 0 0 7px;"></div>
<div style="left:648.5px;top:863.5px;width:2.2px;height:930px;background:#05060a;"></div>
<div style="left:464px;top:922.29px;width:170px;height:32px;line-height:32px;font-size:24.5px;color:#c4c5cc;text-align:right;white-space:nowrap;transform:scaleX(0.93);transform-origin:100% 50%;-webkit-text-stroke:.4px #c4c5cc;">Sends</div>
<div style="left:464px;top:1036.29px;width:170px;height:32px;line-height:32px;font-size:24.5px;color:#c4c5cc;text-align:right;white-space:nowrap;transform:scaleX(0.93);transform-origin:100% 50%;-webkit-text-stroke:.4px #c4c5cc;">Output</div>
<div style="left:464px;top:1081.29px;width:170px;height:32px;line-height:32px;font-size:24.5px;color:#c4c5cc;text-align:right;white-space:nowrap;transform:scaleX(0.93);transform-origin:100% 50%;-webkit-text-stroke:.4px #c4c5cc;">Group</div>
<div style="left:464px;top:1128.29px;width:170px;height:32px;line-height:32px;font-size:24.5px;color:#c4c5cc;text-align:right;white-space:nowrap;transform:scaleX(0.93);transform-origin:100% 50%;-webkit-text-stroke:.4px #c4c5cc;">Automation</div>
<div style="left:464px;top:1267.29px;width:170px;height:32px;line-height:32px;font-size:24.5px;color:#c4c5cc;text-align:right;white-space:nowrap;transform:scaleX(0.93);transform-origin:100% 50%;-webkit-text-stroke:.4px #c4c5cc;">Pan</div>
<div style="left:464px;top:1336.79px;width:170px;height:32px;line-height:32px;font-size:24.5px;color:#c4c5cc;text-align:right;white-space:nowrap;transform:scaleX(0.93);transform-origin:100% 50%;-webkit-text-stroke:.4px #c4c5cc;">dB</div>
<div style="left:627px;top:1412px;width:22px;height:273.5px;"><div style="left:0;top:2px;width:22px;height:2px;background:#d2d3d9"></div><div style="left:0;top:36px;width:22px;height:2px;background:#d2d3d9"></div><div style="left:0;top:70px;width:22px;height:2px;background:#d2d3d9"></div><div style="left:0;top:104px;width:22px;height:2px;background:#d2d3d9"></div><div style="left:0;top:140px;width:22px;height:2px;background:#d2d3d9"></div><div style="left:0;top:162px;width:22px;height:2px;background:#d2d3d9"></div><div style="left:0;top:190px;width:22px;height:2px;background:#d2d3d9"></div><div style="left:0;top:212px;width:22px;height:2px;background:#d2d3d9"></div><div style="left:0;top:236px;width:22px;height:2px;background:#d2d3d9"></div><div style="left:0;top:248px;width:22px;height:2px;background:#d2d3d9"></div><div style="left:0;top:270px;width:22px;height:2px;background:#d2d3d9"></div><div style="left:14px;top:12px;width:8px;height:2px;background:#d2d3d9"></div><div style="left:14px;top:24px;width:8px;height:2px;background:#d2d3d9"></div><div style="left:14px;top:46px;width:8px;height:2px;background:#d2d3d9"></div><div style="left:14px;top:58px;width:8px;height:2px;background:#d2d3d9"></div><div style="left:14px;top:81px;width:8px;height:2px;background:#d2d3d9"></div><div style="left:14px;top:93px;width:8px;height:2px;background:#d2d3d9"></div><div style="left:14px;top:116px;width:8px;height:2px;background:#d2d3d9"></div><div style="left:14px;top:128px;width:8px;height:2px;background:#d2d3d9"></div><div style="left:14px;top:146px;width:8px;height:2px;background:#d2d3d9"></div><div style="left:14px;top:151px;width:8px;height:2px;background:#d2d3d9"></div><div style="left:14px;top:156px;width:8px;height:2px;background:#d2d3d9"></div><div style="left:14px;top:168px;width:8px;height:2px;background:#d2d3d9"></div><div style="left:14px;top:173px;width:8px;height:2px;background:#d2d3d9"></div><div style="left:14px;top:179px;width:8px;height:2px;background:#d2d3d9"></div><div style="left:14px;top:184px;width:8px;height:2px;background:#d2d3d9"></div><div style="left:14px;top:196px;width:8px;height:2px;background:#d2d3d9"></div><div style="left:14px;top:201px;width:8px;height:2px;background:#d2d3d9"></div><div style="left:14px;top:206px;width:8px;height:2px;background:#d2d3d9"></div><div style="left:14px;top:218px;width:8px;height:2px;background:#d2d3d9"></div><div style="left:14px;top:224px;width:8px;height:2px;background:#d2d3d9"></div><div style="left:14px;top:230px;width:8px;height:2px;background:#d2d3d9"></div><div style="left:14px;top:259px;width:8px;height:2px;background:#d2d3d9"></div><div style="left:14px;top:242px;width:8px;height:2px;background:#d2d3d9"></div></div>
<div style="left:581px;top:1404.39px;width:40px;height:21px;line-height:21px;font-size:16px;color:#d2d3d9;text-align:right;white-space:nowrap;">6</div>
<div style="left:581px;top:1438.59px;width:40px;height:21px;line-height:21px;font-size:16px;color:#d2d3d9;text-align:right;white-space:nowrap;">3</div>
<div style="left:581px;top:1472.49px;width:40px;height:21px;line-height:21px;font-size:16px;color:#d2d3d9;text-align:right;white-space:nowrap;">0</div>
<div style="left:581px;top:1506.69px;width:40px;height:21px;line-height:21px;font-size:16px;color:#d2d3d9;text-align:right;white-space:nowrap;">3</div>
<div style="left:581px;top:1542.69px;width:40px;height:21px;line-height:21px;font-size:16px;color:#d2d3d9;text-align:right;white-space:nowrap;">6</div>
<div style="left:581px;top:1564.69px;width:40px;height:21px;line-height:21px;font-size:16px;color:#d2d3d9;text-align:right;white-space:nowrap;">10</div>
<div style="left:581px;top:1592.69px;width:40px;height:21px;line-height:21px;font-size:16px;color:#d2d3d9;text-align:right;white-space:nowrap;">15</div>
<div style="left:581px;top:1614.69px;width:40px;height:21px;line-height:21px;font-size:16px;color:#d2d3d9;text-align:right;white-space:nowrap;">20</div>
<div style="left:581px;top:1638.69px;width:40px;height:21px;line-height:21px;font-size:16px;color:#d2d3d9;text-align:right;white-space:nowrap;">30</div>
<div style="left:581px;top:1650.69px;width:40px;height:21px;line-height:21px;font-size:16px;color:#d2d3d9;text-align:right;white-space:nowrap;">40</div>
<div style="left:581px;top:1667.28px;width:40px;height:30px;line-height:30px;font-size:23px;color:#d2d3d9;text-align:right;white-space:nowrap;">∞</div></body></html>
